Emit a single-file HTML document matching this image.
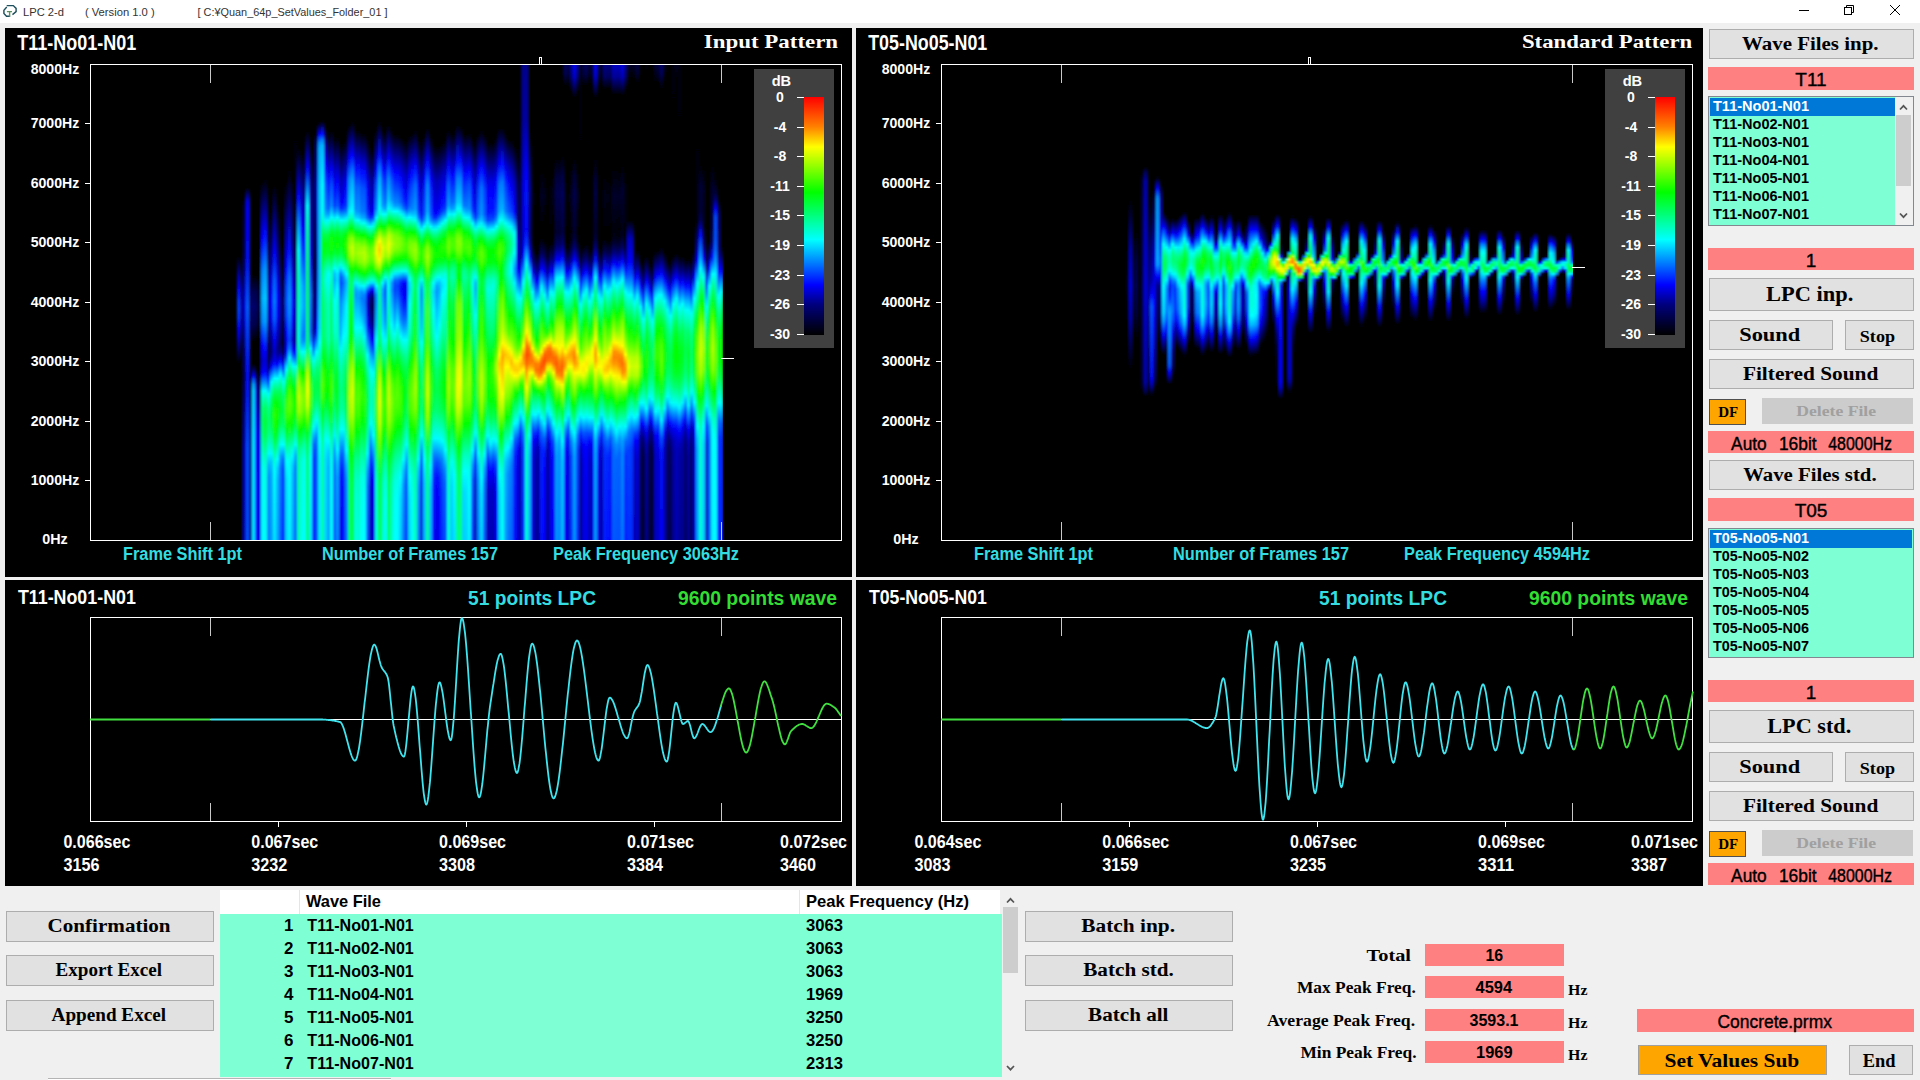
<!DOCTYPE html>
<html><head><meta charset="utf-8"><style>
html,body{margin:0;padding:0;width:1920px;height:1080px;overflow:hidden;background:#f0f0f0}
svg{display:block}
</style></head><body>
<svg width="1920" height="1080" viewBox="0 0 1920 1080">
<rect x="0" y="0" width="1920" height="23" fill="#ffffff"/>
<g fill="none" stroke-linecap="square"><path d="M7.4 5.6 H13.3 L16.1 8.4 V11.6 L13 14.2" stroke="#1d4f5c" stroke-width="1.4"/><path d="M6.3 7.6 L3.9 10.2 V13.4 L6.5 16.2 H9.4" stroke="#1d4f5c" stroke-width="1.4"/><path d="M7.6 11.6 H11.3 M9.6 11.6 V16" stroke="#5d8f5f" stroke-width="1.4"/></g>
<text x="43.5" y="16" font-family="Liberation Sans" font-size="11.5" text-anchor="middle" textLength="41.0" lengthAdjust="spacingAndGlyphs" fill="#333">LPC 2-d</text>
<text x="119.8" y="16" font-family="Liberation Sans" font-size="11.5" text-anchor="middle" textLength="69.8" lengthAdjust="spacingAndGlyphs" fill="#333">( Version 1.0 )</text>
<text x="197.5" y="16" font-family="Liberation Sans" font-size="11.5" textLength="190" lengthAdjust="spacingAndGlyphs" fill="#333">[ C:¥Quan_64p_SetValues_Folder_01 ]</text>
<line x1="1799" y1="10.5" x2="1809" y2="10.5" stroke="#000" stroke-width="1"/>
<g fill="none" stroke="#000" stroke-width="1"><rect x="1844.5" y="7.5" width="7" height="7"/><path d="M1846.5 7.5 V5.5 H1853.5 V12.5 H1851.5"/></g>
<g stroke="#000" stroke-width="1"><line x1="1890" y1="5" x2="1900" y2="15"/><line x1="1900" y1="5" x2="1890" y2="15"/></g>
<rect x="5" y="28" width="847" height="549" fill="#000"/>
<rect x="856" y="28" width="847" height="549" fill="#000"/>
<rect x="5" y="580" width="847" height="306" fill="#000"/>
<rect x="856" y="580" width="847" height="306" fill="#000"/>
<defs><linearGradient id="cbar" x1="0" y1="0" x2="0" y2="1"><stop offset="0" stop-color="#ff0000"/><stop offset="0.125" stop-color="#ff8000"/><stop offset="0.21" stop-color="#ffff00"/><stop offset="0.4" stop-color="#00ff00"/><stop offset="0.6" stop-color="#00ffff"/><stop offset="0.79" stop-color="#0000ff"/><stop offset="0.87" stop-color="#000080"/><stop offset="1" stop-color="#000000"/></linearGradient></defs>
<text x="76.75" y="49.6" font-family="Liberation Sans" font-size="22.5" font-weight="bold" text-anchor="middle" textLength="119.1" lengthAdjust="spacingAndGlyphs" fill="#fff">T11-No01-N01</text>
<text x="770.95" y="48" font-family="Liberation Serif" font-size="19" font-weight="bold" text-anchor="middle" textLength="134.3" lengthAdjust="spacingAndGlyphs" fill="#fff">Input Pattern</text>
<text x="55" y="74.4" font-family="Liberation Sans" font-size="15" font-weight="bold" text-anchor="middle" textLength="48.6" lengthAdjust="spacingAndGlyphs" fill="#fff">8000Hz</text>
<text x="55" y="127.9" font-family="Liberation Sans" font-size="15" font-weight="bold" text-anchor="middle" textLength="48.6" lengthAdjust="spacingAndGlyphs" fill="#fff">7000Hz</text>
<line x1="85" y1="123.5" x2="90" y2="123.5" stroke="#fff" stroke-width="1"/>
<text x="55" y="187.9" font-family="Liberation Sans" font-size="15" font-weight="bold" text-anchor="middle" textLength="48.6" lengthAdjust="spacingAndGlyphs" fill="#fff">6000Hz</text>
<line x1="85" y1="183.5" x2="90" y2="183.5" stroke="#fff" stroke-width="1"/>
<text x="55" y="246.9" font-family="Liberation Sans" font-size="15" font-weight="bold" text-anchor="middle" textLength="48.6" lengthAdjust="spacingAndGlyphs" fill="#fff">5000Hz</text>
<line x1="85" y1="242.5" x2="90" y2="242.5" stroke="#fff" stroke-width="1"/>
<text x="55" y="306.9" font-family="Liberation Sans" font-size="15" font-weight="bold" text-anchor="middle" textLength="48.6" lengthAdjust="spacingAndGlyphs" fill="#fff">4000Hz</text>
<line x1="85" y1="302.5" x2="90" y2="302.5" stroke="#fff" stroke-width="1"/>
<text x="55" y="365.9" font-family="Liberation Sans" font-size="15" font-weight="bold" text-anchor="middle" textLength="48.6" lengthAdjust="spacingAndGlyphs" fill="#fff">3000Hz</text>
<line x1="85" y1="361.5" x2="90" y2="361.5" stroke="#fff" stroke-width="1"/>
<text x="55" y="425.9" font-family="Liberation Sans" font-size="15" font-weight="bold" text-anchor="middle" textLength="48.6" lengthAdjust="spacingAndGlyphs" fill="#fff">2000Hz</text>
<line x1="85" y1="421.5" x2="90" y2="421.5" stroke="#fff" stroke-width="1"/>
<text x="55" y="484.9" font-family="Liberation Sans" font-size="15" font-weight="bold" text-anchor="middle" textLength="48.6" lengthAdjust="spacingAndGlyphs" fill="#fff">1000Hz</text>
<line x1="85" y1="480.5" x2="90" y2="480.5" stroke="#fff" stroke-width="1"/>
<text x="55" y="543.7" font-family="Liberation Sans" font-size="15" font-weight="bold" text-anchor="middle" textLength="25.5" lengthAdjust="spacingAndGlyphs" fill="#fff">0Hz</text>
<text x="123" y="560" font-family="Liberation Sans" font-size="18" font-weight="bold" textLength="119" lengthAdjust="spacingAndGlyphs" fill="#33dde0">Frame Shift 1pt</text>
<text x="322" y="560" font-family="Liberation Sans" font-size="18" font-weight="bold" textLength="176" lengthAdjust="spacingAndGlyphs" fill="#33dde0">Number of Frames 157</text>
<text x="553" y="560" font-family="Liberation Sans" font-size="18" font-weight="bold" textLength="186" lengthAdjust="spacingAndGlyphs" fill="#33dde0">Peak Frequency 3063Hz</text>
<text x="927.75" y="49.6" font-family="Liberation Sans" font-size="22.5" font-weight="bold" text-anchor="middle" textLength="119.1" lengthAdjust="spacingAndGlyphs" fill="#fff">T05-No05-N01</text>
<text x="1607.05" y="48" font-family="Liberation Serif" font-size="19" font-weight="bold" text-anchor="middle" textLength="170.3" lengthAdjust="spacingAndGlyphs" fill="#fff">Standard Pattern</text>
<text x="906" y="74.4" font-family="Liberation Sans" font-size="15" font-weight="bold" text-anchor="middle" textLength="48.6" lengthAdjust="spacingAndGlyphs" fill="#fff">8000Hz</text>
<text x="906" y="127.9" font-family="Liberation Sans" font-size="15" font-weight="bold" text-anchor="middle" textLength="48.6" lengthAdjust="spacingAndGlyphs" fill="#fff">7000Hz</text>
<line x1="936" y1="123.5" x2="941" y2="123.5" stroke="#fff" stroke-width="1"/>
<text x="906" y="187.9" font-family="Liberation Sans" font-size="15" font-weight="bold" text-anchor="middle" textLength="48.6" lengthAdjust="spacingAndGlyphs" fill="#fff">6000Hz</text>
<line x1="936" y1="183.5" x2="941" y2="183.5" stroke="#fff" stroke-width="1"/>
<text x="906" y="246.9" font-family="Liberation Sans" font-size="15" font-weight="bold" text-anchor="middle" textLength="48.6" lengthAdjust="spacingAndGlyphs" fill="#fff">5000Hz</text>
<line x1="936" y1="242.5" x2="941" y2="242.5" stroke="#fff" stroke-width="1"/>
<text x="906" y="306.9" font-family="Liberation Sans" font-size="15" font-weight="bold" text-anchor="middle" textLength="48.6" lengthAdjust="spacingAndGlyphs" fill="#fff">4000Hz</text>
<line x1="936" y1="302.5" x2="941" y2="302.5" stroke="#fff" stroke-width="1"/>
<text x="906" y="365.9" font-family="Liberation Sans" font-size="15" font-weight="bold" text-anchor="middle" textLength="48.6" lengthAdjust="spacingAndGlyphs" fill="#fff">3000Hz</text>
<line x1="936" y1="361.5" x2="941" y2="361.5" stroke="#fff" stroke-width="1"/>
<text x="906" y="425.9" font-family="Liberation Sans" font-size="15" font-weight="bold" text-anchor="middle" textLength="48.6" lengthAdjust="spacingAndGlyphs" fill="#fff">2000Hz</text>
<line x1="936" y1="421.5" x2="941" y2="421.5" stroke="#fff" stroke-width="1"/>
<text x="906" y="484.9" font-family="Liberation Sans" font-size="15" font-weight="bold" text-anchor="middle" textLength="48.6" lengthAdjust="spacingAndGlyphs" fill="#fff">1000Hz</text>
<line x1="936" y1="480.5" x2="941" y2="480.5" stroke="#fff" stroke-width="1"/>
<text x="906" y="543.7" font-family="Liberation Sans" font-size="15" font-weight="bold" text-anchor="middle" textLength="25.5" lengthAdjust="spacingAndGlyphs" fill="#fff">0Hz</text>
<text x="974" y="560" font-family="Liberation Sans" font-size="18" font-weight="bold" textLength="119" lengthAdjust="spacingAndGlyphs" fill="#33dde0">Frame Shift 1pt</text>
<text x="1173" y="560" font-family="Liberation Sans" font-size="18" font-weight="bold" textLength="176" lengthAdjust="spacingAndGlyphs" fill="#33dde0">Number of Frames 157</text>
<text x="1404" y="560" font-family="Liberation Sans" font-size="18" font-weight="bold" textLength="186" lengthAdjust="spacingAndGlyphs" fill="#33dde0">Peak Frequency 4594Hz</text>
<defs><linearGradient id="g0" x1="0" y1="0" x2="0" y2="1"><stop offset="0.000" stop-color="#000000"/><stop offset="0.403" stop-color="#000002"/><stop offset="0.447" stop-color="#0000b6"/><stop offset="0.472" stop-color="#0006ff"/><stop offset="0.497" stop-color="#0036ff"/><stop offset="0.516" stop-color="#003eff"/><stop offset="0.535" stop-color="#002eff"/><stop offset="0.553" stop-color="#0005ff"/><stop offset="0.572" stop-color="#0000cd"/><stop offset="0.629" stop-color="#000000"/><stop offset="1.000" stop-color="#000000"/></linearGradient><linearGradient id="g1" x1="0" y1="0" x2="0" y2="1"><stop offset="0.000" stop-color="#000000"/><stop offset="0.428" stop-color="#000000"/><stop offset="0.472" stop-color="#000068"/><stop offset="0.509" stop-color="#000090"/><stop offset="0.547" stop-color="#000072"/><stop offset="0.597" stop-color="#000000"/><stop offset="1.000" stop-color="#000000"/></linearGradient><linearGradient id="g2" x1="0" y1="0" x2="0" y2="1"><stop offset="0.000" stop-color="#000000"/><stop offset="0.277" stop-color="#000000"/><stop offset="0.296" stop-color="#000028"/><stop offset="0.396" stop-color="#000041"/><stop offset="0.478" stop-color="#0000b9"/><stop offset="0.509" stop-color="#0000cf"/><stop offset="0.541" stop-color="#0000c0"/><stop offset="0.597" stop-color="#00006e"/><stop offset="0.654" stop-color="#000046"/><stop offset="0.805" stop-color="#0000ad"/><stop offset="1.000" stop-color="#0000b2"/></linearGradient><linearGradient id="g3" x1="0" y1="0" x2="0" y2="1"><stop offset="0.000" stop-color="#000000"/><stop offset="0.258" stop-color="#000004"/><stop offset="0.283" stop-color="#0000cd"/><stop offset="0.289" stop-color="#0000ea"/><stop offset="0.302" stop-color="#0000fd"/><stop offset="0.396" stop-color="#0009ff"/><stop offset="0.509" stop-color="#005dff"/><stop offset="0.654" stop-color="#000dff"/><stop offset="0.805" stop-color="#004bff"/><stop offset="1.000" stop-color="#004dff"/></linearGradient><linearGradient id="g4" x1="0" y1="0" x2="0" y2="1"><stop offset="0.000" stop-color="#000000"/><stop offset="0.434" stop-color="#000000"/><stop offset="0.478" stop-color="#00004d"/><stop offset="0.509" stop-color="#000063"/><stop offset="0.547" stop-color="#00004d"/><stop offset="0.591" stop-color="#000000"/><stop offset="0.654" stop-color="#000000"/><stop offset="0.686" stop-color="#000040"/><stop offset="0.786" stop-color="#000085"/><stop offset="1.000" stop-color="#000090"/></linearGradient><linearGradient id="g5" x1="0" y1="0" x2="0" y2="1"><stop offset="0.000" stop-color="#000000"/><stop offset="0.440" stop-color="#000000"/><stop offset="0.478" stop-color="#000052"/><stop offset="0.509" stop-color="#00006c"/><stop offset="0.547" stop-color="#000051"/><stop offset="0.585" stop-color="#000000"/><stop offset="0.629" stop-color="#000000"/><stop offset="0.642" stop-color="#00006e"/><stop offset="0.654" stop-color="#0000f7"/><stop offset="0.660" stop-color="#003dff"/><stop offset="0.673" stop-color="#00a0ff"/><stop offset="0.686" stop-color="#00caff"/><stop offset="0.805" stop-color="#00e2ff"/><stop offset="1.000" stop-color="#00e3ff"/></linearGradient><linearGradient id="g6" x1="0" y1="0" x2="0" y2="1"><stop offset="0.000" stop-color="#000000"/><stop offset="0.440" stop-color="#000000"/><stop offset="0.478" stop-color="#000046"/><stop offset="0.509" stop-color="#00005d"/><stop offset="0.541" stop-color="#00004a"/><stop offset="0.579" stop-color="#000000"/><stop offset="0.642" stop-color="#000000"/><stop offset="0.673" stop-color="#0000a8"/><stop offset="0.686" stop-color="#0000cc"/><stop offset="0.774" stop-color="#0002ff"/><stop offset="1.000" stop-color="#000fff"/></linearGradient><linearGradient id="g7" x1="0" y1="0" x2="0" y2="1"><stop offset="0.000" stop-color="#000000"/><stop offset="0.447" stop-color="#000000"/><stop offset="0.478" stop-color="#000029"/><stop offset="0.509" stop-color="#000036"/><stop offset="0.566" stop-color="#000000"/><stop offset="0.679" stop-color="#000000"/><stop offset="0.736" stop-color="#000098"/><stop offset="0.780" stop-color="#0000d3"/><stop offset="0.843" stop-color="#0000e3"/><stop offset="1.000" stop-color="#0000de"/></linearGradient><linearGradient id="g8" x1="0" y1="0" x2="0" y2="1"><stop offset="0.000" stop-color="#000000"/><stop offset="0.245" stop-color="#000000"/><stop offset="0.365" stop-color="#0004ff"/><stop offset="0.434" stop-color="#0080ff"/><stop offset="0.491" stop-color="#00aeff"/><stop offset="0.541" stop-color="#0085ff"/><stop offset="0.591" stop-color="#0003ff"/><stop offset="0.623" stop-color="#0000c9"/><stop offset="0.635" stop-color="#0000d5"/><stop offset="0.648" stop-color="#0001ff"/><stop offset="0.686" stop-color="#00f7ff"/><stop offset="0.692" stop-color="#00ffe6"/><stop offset="0.723" stop-color="#00ff78"/><stop offset="0.748" stop-color="#00ff5c"/><stop offset="0.774" stop-color="#00ff71"/><stop offset="0.824" stop-color="#00ffd6"/><stop offset="0.849" stop-color="#00fff1"/><stop offset="1.000" stop-color="#00fcff"/></linearGradient><linearGradient id="g9" x1="0" y1="0" x2="0" y2="1"><stop offset="0.000" stop-color="#000000"/><stop offset="0.239" stop-color="#000000"/><stop offset="0.352" stop-color="#0007ff"/><stop offset="0.428" stop-color="#0095ff"/><stop offset="0.491" stop-color="#00caff"/><stop offset="0.541" stop-color="#009fff"/><stop offset="0.604" stop-color="#0000f9"/><stop offset="0.623" stop-color="#0000db"/><stop offset="0.642" stop-color="#0000f0"/><stop offset="0.648" stop-color="#000aff"/><stop offset="0.654" stop-color="#002eff"/><stop offset="0.686" stop-color="#00fff7"/><stop offset="0.704" stop-color="#00ff99"/><stop offset="0.723" stop-color="#00ff56"/><stop offset="0.755" stop-color="#00ff2c"/><stop offset="0.780" stop-color="#00ff44"/><stop offset="0.830" stop-color="#00ffbb"/><stop offset="0.855" stop-color="#00ffe0"/><stop offset="1.000" stop-color="#00fff5"/></linearGradient><linearGradient id="g10" x1="0" y1="0" x2="0" y2="1"><stop offset="0.000" stop-color="#000000"/><stop offset="0.340" stop-color="#000000"/><stop offset="0.465" stop-color="#0000ad"/><stop offset="0.503" stop-color="#0000c4"/><stop offset="0.535" stop-color="#0000b0"/><stop offset="0.591" stop-color="#000044"/><stop offset="0.610" stop-color="#000032"/><stop offset="0.623" stop-color="#00003f"/><stop offset="0.635" stop-color="#000066"/><stop offset="0.654" stop-color="#0000d8"/><stop offset="0.660" stop-color="#0007ff"/><stop offset="0.686" stop-color="#00cdff"/><stop offset="0.692" stop-color="#00f6ff"/><stop offset="0.698" stop-color="#00ffe7"/><stop offset="0.723" stop-color="#00ff8d"/><stop offset="0.748" stop-color="#00ff6e"/><stop offset="0.774" stop-color="#00ff85"/><stop offset="0.818" stop-color="#00f9ff"/><stop offset="0.843" stop-color="#00adff"/><stop offset="0.868" stop-color="#008bff"/><stop offset="1.000" stop-color="#007aff"/></linearGradient><linearGradient id="g11" x1="0" y1="0" x2="0" y2="1"><stop offset="0.000" stop-color="#000000"/><stop offset="0.308" stop-color="#000002"/><stop offset="0.453" stop-color="#0000d5"/><stop offset="0.497" stop-color="#0000f8"/><stop offset="0.535" stop-color="#0000e2"/><stop offset="0.585" stop-color="#00007d"/><stop offset="0.604" stop-color="#000071"/><stop offset="0.616" stop-color="#00008d"/><stop offset="0.635" stop-color="#0000fc"/><stop offset="0.667" stop-color="#00f9ff"/><stop offset="0.673" stop-color="#00ffdf"/><stop offset="0.704" stop-color="#00ff5a"/><stop offset="0.736" stop-color="#00ff32"/><stop offset="0.767" stop-color="#00ff60"/><stop offset="0.818" stop-color="#00f8ff"/><stop offset="0.836" stop-color="#00c6ff"/><stop offset="0.862" stop-color="#00abff"/><stop offset="1.000" stop-color="#009dff"/></linearGradient><linearGradient id="g12" x1="0" y1="0" x2="0" y2="1"><stop offset="0.000" stop-color="#000000"/><stop offset="0.252" stop-color="#000000"/><stop offset="0.396" stop-color="#0003ff"/><stop offset="0.453" stop-color="#005eff"/><stop offset="0.497" stop-color="#007bff"/><stop offset="0.535" stop-color="#005fff"/><stop offset="0.579" stop-color="#0000f7"/><stop offset="0.604" stop-color="#0000cb"/><stop offset="0.623" stop-color="#0000ec"/><stop offset="0.629" stop-color="#000dff"/><stop offset="0.654" stop-color="#00d2ff"/><stop offset="0.660" stop-color="#00fff9"/><stop offset="0.686" stop-color="#00ff61"/><stop offset="0.711" stop-color="#02ff00"/><stop offset="0.736" stop-color="#2cff00"/><stop offset="0.767" stop-color="#0eff00"/><stop offset="0.780" stop-color="#00ff15"/><stop offset="0.830" stop-color="#00ffc9"/><stop offset="0.855" stop-color="#00fffc"/><stop offset="1.000" stop-color="#00e5ff"/></linearGradient><linearGradient id="g13" x1="0" y1="0" x2="0" y2="1"><stop offset="0.000" stop-color="#000000"/><stop offset="0.289" stop-color="#000000"/><stop offset="0.390" stop-color="#00007e"/><stop offset="0.453" stop-color="#0000e2"/><stop offset="0.484" stop-color="#0002ff"/><stop offset="0.528" stop-color="#0000f7"/><stop offset="0.597" stop-color="#00007e"/><stop offset="0.610" stop-color="#000091"/><stop offset="0.629" stop-color="#0000f5"/><stop offset="0.660" stop-color="#00fffe"/><stop offset="0.686" stop-color="#00ff6b"/><stop offset="0.711" stop-color="#00ff12"/><stop offset="0.736" stop-color="#0eff00"/><stop offset="0.755" stop-color="#00ff01"/><stop offset="0.780" stop-color="#00ff41"/><stop offset="0.830" stop-color="#00ffff"/><stop offset="0.849" stop-color="#00cdff"/><stop offset="0.874" stop-color="#00b4ff"/><stop offset="1.000" stop-color="#00a7ff"/></linearGradient><linearGradient id="g14" x1="0" y1="0" x2="0" y2="1"><stop offset="0.000" stop-color="#000000"/><stop offset="0.371" stop-color="#000000"/><stop offset="0.497" stop-color="#000099"/><stop offset="0.522" stop-color="#000094"/><stop offset="0.585" stop-color="#000053"/><stop offset="0.604" stop-color="#000085"/><stop offset="0.616" stop-color="#0000d9"/><stop offset="0.623" stop-color="#000aff"/><stop offset="0.648" stop-color="#00e1ff"/><stop offset="0.654" stop-color="#00fff1"/><stop offset="0.673" stop-color="#00ff8d"/><stop offset="0.692" stop-color="#00ff49"/><stop offset="0.723" stop-color="#00ff21"/><stop offset="0.755" stop-color="#00ff51"/><stop offset="0.799" stop-color="#00fffb"/><stop offset="0.824" stop-color="#009eff"/><stop offset="0.849" stop-color="#0070ff"/><stop offset="1.000" stop-color="#005bff"/></linearGradient><linearGradient id="g15" x1="0" y1="0" x2="0" y2="1"><stop offset="0.000" stop-color="#000000"/><stop offset="0.428" stop-color="#000000"/><stop offset="0.472" stop-color="#000041"/><stop offset="0.503" stop-color="#000055"/><stop offset="0.528" stop-color="#00004d"/><stop offset="0.585" stop-color="#000010"/><stop offset="0.604" stop-color="#00003e"/><stop offset="0.616" stop-color="#00007e"/><stop offset="0.629" stop-color="#0000dd"/><stop offset="0.635" stop-color="#0012ff"/><stop offset="0.660" stop-color="#00e4ff"/><stop offset="0.667" stop-color="#00fff1"/><stop offset="0.698" stop-color="#00ff6c"/><stop offset="0.730" stop-color="#00ff42"/><stop offset="0.761" stop-color="#00ff70"/><stop offset="0.799" stop-color="#00ffff"/><stop offset="0.830" stop-color="#006eff"/><stop offset="0.855" stop-color="#0036ff"/><stop offset="1.000" stop-color="#001dff"/></linearGradient><linearGradient id="g16" x1="0" y1="0" x2="0" y2="1"><stop offset="0.000" stop-color="#000000"/><stop offset="0.245" stop-color="#000000"/><stop offset="0.428" stop-color="#0006ff"/><stop offset="0.465" stop-color="#003eff"/><stop offset="0.497" stop-color="#0051ff"/><stop offset="0.528" stop-color="#003fff"/><stop offset="0.560" stop-color="#0005ff"/><stop offset="0.585" stop-color="#0000e0"/><stop offset="0.604" stop-color="#0000fe"/><stop offset="0.616" stop-color="#0047ff"/><stop offset="0.635" stop-color="#00ddff"/><stop offset="0.642" stop-color="#00fff0"/><stop offset="0.667" stop-color="#00ff57"/><stop offset="0.686" stop-color="#00ff05"/><stop offset="0.704" stop-color="#2fff00"/><stop offset="0.723" stop-color="#42ff00"/><stop offset="0.742" stop-color="#34ff00"/><stop offset="0.761" stop-color="#08ff00"/><stop offset="0.774" stop-color="#00ff21"/><stop offset="0.818" stop-color="#00ffce"/><stop offset="0.836" stop-color="#00ffff"/><stop offset="0.874" stop-color="#00dbff"/><stop offset="1.000" stop-color="#00d1ff"/></linearGradient><linearGradient id="g17" x1="0" y1="0" x2="0" y2="1"><stop offset="0.000" stop-color="#000000"/><stop offset="0.220" stop-color="#000000"/><stop offset="0.384" stop-color="#0009ff"/><stop offset="0.447" stop-color="#0071ff"/><stop offset="0.491" stop-color="#0096ff"/><stop offset="0.522" stop-color="#008aff"/><stop offset="0.579" stop-color="#0045ff"/><stop offset="0.597" stop-color="#007aff"/><stop offset="0.616" stop-color="#00f5ff"/><stop offset="0.648" stop-color="#00ff48"/><stop offset="0.667" stop-color="#0eff00"/><stop offset="0.686" stop-color="#48ff00"/><stop offset="0.711" stop-color="#62ff00"/><stop offset="0.730" stop-color="#50ff00"/><stop offset="0.755" stop-color="#0bff00"/><stop offset="0.805" stop-color="#00ffb7"/><stop offset="0.830" stop-color="#00ffed"/><stop offset="0.862" stop-color="#00fffe"/><stop offset="1.000" stop-color="#00f6ff"/></linearGradient><linearGradient id="g18" x1="0" y1="0" x2="0" y2="1"><stop offset="0.000" stop-color="#000000"/><stop offset="0.245" stop-color="#000002"/><stop offset="0.377" stop-color="#00007e"/><stop offset="0.472" stop-color="#0006ff"/><stop offset="0.503" stop-color="#0017ff"/><stop offset="0.535" stop-color="#0000fe"/><stop offset="0.579" stop-color="#0000ca"/><stop offset="0.597" stop-color="#0000f9"/><stop offset="0.610" stop-color="#004dff"/><stop offset="0.629" stop-color="#00e9ff"/><stop offset="0.635" stop-color="#00ffe7"/><stop offset="0.660" stop-color="#00ff53"/><stop offset="0.679" stop-color="#00ff06"/><stop offset="0.698" stop-color="#2bff00"/><stop offset="0.717" stop-color="#3bff00"/><stop offset="0.748" stop-color="#0fff00"/><stop offset="0.761" stop-color="#00ff17"/><stop offset="0.811" stop-color="#00ffe2"/><stop offset="0.824" stop-color="#00f5ff"/><stop offset="0.843" stop-color="#00cdff"/><stop offset="0.862" stop-color="#00beff"/><stop offset="1.000" stop-color="#00b1ff"/></linearGradient><linearGradient id="g19" x1="0" y1="0" x2="0" y2="1"><stop offset="0.000" stop-color="#000000"/><stop offset="0.365" stop-color="#00000f"/><stop offset="0.491" stop-color="#00009c"/><stop offset="0.516" stop-color="#00009e"/><stop offset="0.572" stop-color="#000075"/><stop offset="0.585" stop-color="#000090"/><stop offset="0.604" stop-color="#0000fc"/><stop offset="0.635" stop-color="#00fff8"/><stop offset="0.660" stop-color="#00ff6d"/><stop offset="0.679" stop-color="#00ff27"/><stop offset="0.698" stop-color="#00ff00"/><stop offset="0.723" stop-color="#03ff00"/><stop offset="0.755" stop-color="#00ff41"/><stop offset="0.799" stop-color="#00fff9"/><stop offset="0.824" stop-color="#00a0ff"/><stop offset="0.849" stop-color="#0073ff"/><stop offset="1.000" stop-color="#005fff"/></linearGradient><linearGradient id="g20" x1="0" y1="0" x2="0" y2="1"><stop offset="0.000" stop-color="#000000"/><stop offset="0.176" stop-color="#000003"/><stop offset="0.277" stop-color="#0007ff"/><stop offset="0.333" stop-color="#0090ff"/><stop offset="0.390" stop-color="#00fdff"/><stop offset="0.447" stop-color="#00ffbf"/><stop offset="0.484" stop-color="#00ffac"/><stop offset="0.572" stop-color="#00ffe2"/><stop offset="0.591" stop-color="#00ffbe"/><stop offset="0.629" stop-color="#00ff03"/><stop offset="0.635" stop-color="#1eff00"/><stop offset="0.667" stop-color="#9aff00"/><stop offset="0.698" stop-color="#c4ff00"/><stop offset="0.730" stop-color="#98ff00"/><stop offset="0.767" stop-color="#0cff00"/><stop offset="0.774" stop-color="#00ff0f"/><stop offset="0.805" stop-color="#00ff7a"/><stop offset="0.830" stop-color="#00ff9e"/><stop offset="1.000" stop-color="#00ffae"/></linearGradient><linearGradient id="g21" x1="0" y1="0" x2="0" y2="1"><stop offset="0.000" stop-color="#000000"/><stop offset="0.189" stop-color="#000005"/><stop offset="0.270" stop-color="#0000a0"/><stop offset="0.340" stop-color="#0006ff"/><stop offset="0.465" stop-color="#00bfff"/><stop offset="0.509" stop-color="#00caff"/><stop offset="0.572" stop-color="#008eff"/><stop offset="0.585" stop-color="#00a5ff"/><stop offset="0.597" stop-color="#00deff"/><stop offset="0.604" stop-color="#00fffa"/><stop offset="0.648" stop-color="#01ff00"/><stop offset="0.679" stop-color="#74ff00"/><stop offset="0.704" stop-color="#92ff00"/><stop offset="0.730" stop-color="#79ff00"/><stop offset="0.761" stop-color="#16ff00"/><stop offset="0.767" stop-color="#00ff04"/><stop offset="0.811" stop-color="#00ffac"/><stop offset="0.836" stop-color="#00ffd7"/><stop offset="1.000" stop-color="#00ffec"/></linearGradient><linearGradient id="g22" x1="0" y1="0" x2="0" y2="1"><stop offset="0.000" stop-color="#000000"/><stop offset="0.182" stop-color="#000000"/><stop offset="0.270" stop-color="#000093"/><stop offset="0.371" stop-color="#0002ff"/><stop offset="0.447" stop-color="#0073ff"/><stop offset="0.484" stop-color="#0098ff"/><stop offset="0.509" stop-color="#0099ff"/><stop offset="0.566" stop-color="#006cff"/><stop offset="0.579" stop-color="#0082ff"/><stop offset="0.597" stop-color="#00deff"/><stop offset="0.604" stop-color="#00fff7"/><stop offset="0.648" stop-color="#00ff03"/><stop offset="0.673" stop-color="#55ff00"/><stop offset="0.698" stop-color="#77ff00"/><stop offset="0.723" stop-color="#62ff00"/><stop offset="0.755" stop-color="#05ff00"/><stop offset="0.799" stop-color="#00ffa9"/><stop offset="0.830" stop-color="#00ffec"/><stop offset="1.000" stop-color="#00fcff"/></linearGradient><linearGradient id="g23" x1="0" y1="0" x2="0" y2="1"><stop offset="0.000" stop-color="#000000"/><stop offset="0.138" stop-color="#000000"/><stop offset="0.214" stop-color="#0000f7"/><stop offset="0.220" stop-color="#000eff"/><stop offset="0.296" stop-color="#00feff"/><stop offset="0.365" stop-color="#00ff76"/><stop offset="0.434" stop-color="#00ff1f"/><stop offset="0.491" stop-color="#00ff0b"/><stop offset="0.566" stop-color="#00ff3e"/><stop offset="0.579" stop-color="#00ff36"/><stop offset="0.597" stop-color="#00ff08"/><stop offset="0.648" stop-color="#bcff00"/><stop offset="0.667" stop-color="#e7ff00"/><stop offset="0.686" stop-color="#f6ff00"/><stop offset="0.717" stop-color="#cfff00"/><stop offset="0.774" stop-color="#05ff00"/><stop offset="0.780" stop-color="#00ff10"/><stop offset="0.799" stop-color="#00ff3d"/><stop offset="0.824" stop-color="#00ff56"/><stop offset="1.000" stop-color="#00ff60"/></linearGradient><linearGradient id="g24" x1="0" y1="0" x2="0" y2="1"><stop offset="0.000" stop-color="#000000"/><stop offset="0.170" stop-color="#000000"/><stop offset="0.220" stop-color="#000063"/><stop offset="0.264" stop-color="#0000a0"/><stop offset="0.396" stop-color="#0000ff"/><stop offset="0.484" stop-color="#0073ff"/><stop offset="0.560" stop-color="#005dff"/><stop offset="0.579" stop-color="#008dff"/><stop offset="0.597" stop-color="#00f9ff"/><stop offset="0.629" stop-color="#00ff53"/><stop offset="0.648" stop-color="#00ff01"/><stop offset="0.673" stop-color="#47ff00"/><stop offset="0.692" stop-color="#5aff00"/><stop offset="0.717" stop-color="#45ff00"/><stop offset="0.742" stop-color="#01ff00"/><stop offset="0.792" stop-color="#00ffbd"/><stop offset="0.824" stop-color="#00fffc"/><stop offset="1.000" stop-color="#00e9ff"/></linearGradient><linearGradient id="g25" x1="0" y1="0" x2="0" y2="1"><stop offset="0.000" stop-color="#000000"/><stop offset="0.201" stop-color="#000000"/><stop offset="0.245" stop-color="#000038"/><stop offset="0.283" stop-color="#000046"/><stop offset="0.377" stop-color="#000000"/><stop offset="0.415" stop-color="#000000"/><stop offset="0.484" stop-color="#00004e"/><stop offset="0.553" stop-color="#00006a"/><stop offset="0.566" stop-color="#00008e"/><stop offset="0.585" stop-color="#0000fa"/><stop offset="0.616" stop-color="#00e7ff"/><stop offset="0.623" stop-color="#00fff1"/><stop offset="0.642" stop-color="#00ff9b"/><stop offset="0.660" stop-color="#00ff61"/><stop offset="0.692" stop-color="#00ff3f"/><stop offset="0.723" stop-color="#00ff6b"/><stop offset="0.761" stop-color="#00fff2"/><stop offset="0.767" stop-color="#00eeff"/><stop offset="0.799" stop-color="#0064ff"/><stop offset="0.830" stop-color="#0029ff"/><stop offset="1.000" stop-color="#0017ff"/></linearGradient><linearGradient id="g26" x1="0" y1="0" x2="0" y2="1"><stop offset="0.000" stop-color="#000000"/><stop offset="0.138" stop-color="#000000"/><stop offset="0.145" stop-color="#000009"/><stop offset="0.157" stop-color="#00004b"/><stop offset="0.170" stop-color="#000070"/><stop offset="0.252" stop-color="#0000b6"/><stop offset="0.296" stop-color="#0000bb"/><stop offset="0.415" stop-color="#000088"/><stop offset="0.528" stop-color="#0000c8"/><stop offset="0.553" stop-color="#0000f3"/><stop offset="0.566" stop-color="#0027ff"/><stop offset="0.604" stop-color="#00fffb"/><stop offset="0.642" stop-color="#00ff6c"/><stop offset="0.673" stop-color="#00ff44"/><stop offset="0.704" stop-color="#00ff65"/><stop offset="0.748" stop-color="#00fff6"/><stop offset="0.755" stop-color="#00eeff"/><stop offset="0.786" stop-color="#007cff"/><stop offset="0.811" stop-color="#0058ff"/><stop offset="1.000" stop-color="#004bff"/></linearGradient><linearGradient id="g27" x1="0" y1="0" x2="0" y2="1"><stop offset="0.000" stop-color="#000000"/><stop offset="0.119" stop-color="#000000"/><stop offset="0.126" stop-color="#000028"/><stop offset="0.145" stop-color="#0000f7"/><stop offset="0.151" stop-color="#0037ff"/><stop offset="0.164" stop-color="#008fff"/><stop offset="0.176" stop-color="#00abff"/><stop offset="0.264" stop-color="#00bfff"/><stop offset="0.440" stop-color="#00b9ff"/><stop offset="0.553" stop-color="#00d4ff"/><stop offset="0.585" stop-color="#00fdff"/><stop offset="0.648" stop-color="#00ff62"/><stop offset="0.679" stop-color="#00ff42"/><stop offset="0.711" stop-color="#00ff5c"/><stop offset="0.767" stop-color="#00ffda"/><stop offset="0.792" stop-color="#00ffff"/><stop offset="0.830" stop-color="#00ecff"/><stop offset="1.000" stop-color="#00e8ff"/></linearGradient><linearGradient id="g28" x1="0" y1="0" x2="0" y2="1"><stop offset="0.000" stop-color="#000000"/><stop offset="0.113" stop-color="#000000"/><stop offset="0.119" stop-color="#00000c"/><stop offset="0.145" stop-color="#000fff"/><stop offset="0.157" stop-color="#007fff"/><stop offset="0.170" stop-color="#00b9ff"/><stop offset="0.252" stop-color="#00faff"/><stop offset="0.308" stop-color="#00fff2"/><stop offset="0.327" stop-color="#00ffca"/><stop offset="0.358" stop-color="#00ff3a"/><stop offset="0.377" stop-color="#01ff00"/><stop offset="0.403" stop-color="#00ff08"/><stop offset="0.434" stop-color="#00ff6c"/><stop offset="0.453" stop-color="#00ff85"/><stop offset="0.509" stop-color="#00ff56"/><stop offset="0.572" stop-color="#00ff60"/><stop offset="0.591" stop-color="#00ff47"/><stop offset="0.616" stop-color="#00ff09"/><stop offset="0.648" stop-color="#3fff00"/><stop offset="0.673" stop-color="#55ff00"/><stop offset="0.698" stop-color="#44ff00"/><stop offset="0.723" stop-color="#0fff00"/><stop offset="0.730" stop-color="#00ff02"/><stop offset="0.774" stop-color="#00ff75"/><stop offset="0.805" stop-color="#00ff9f"/><stop offset="1.000" stop-color="#00ffac"/></linearGradient><linearGradient id="g29" x1="0" y1="0" x2="0" y2="1"><stop offset="0.000" stop-color="#000000"/><stop offset="0.132" stop-color="#000000"/><stop offset="0.170" stop-color="#0000ae"/><stop offset="0.208" stop-color="#0003ff"/><stop offset="0.252" stop-color="#005bff"/><stop offset="0.302" stop-color="#0088ff"/><stop offset="0.314" stop-color="#00acff"/><stop offset="0.327" stop-color="#00f3ff"/><stop offset="0.333" stop-color="#00ffe2"/><stop offset="0.358" stop-color="#00ff4c"/><stop offset="0.377" stop-color="#00ff15"/><stop offset="0.396" stop-color="#00ff21"/><stop offset="0.434" stop-color="#00ffbd"/><stop offset="0.453" stop-color="#00ffda"/><stop offset="0.503" stop-color="#00ff97"/><stop offset="0.572" stop-color="#00ff80"/><stop offset="0.635" stop-color="#03ff00"/><stop offset="0.667" stop-color="#1aff00"/><stop offset="0.698" stop-color="#00ff09"/><stop offset="0.786" stop-color="#00fffb"/><stop offset="0.830" stop-color="#00ddff"/><stop offset="1.000" stop-color="#00d5ff"/></linearGradient><linearGradient id="g30" x1="0" y1="0" x2="0" y2="1"><stop offset="0.000" stop-color="#000000"/><stop offset="0.151" stop-color="#000000"/><stop offset="0.214" stop-color="#0000c3"/><stop offset="0.239" stop-color="#0001ff"/><stop offset="0.302" stop-color="#0060ff"/><stop offset="0.314" stop-color="#009bff"/><stop offset="0.327" stop-color="#00f9ff"/><stop offset="0.333" stop-color="#00ffd7"/><stop offset="0.358" stop-color="#00ff3f"/><stop offset="0.377" stop-color="#00ff12"/><stop offset="0.396" stop-color="#00ff2c"/><stop offset="0.440" stop-color="#00fffb"/><stop offset="0.453" stop-color="#00f9ff"/><stop offset="0.503" stop-color="#00ffba"/><stop offset="0.579" stop-color="#00ffb2"/><stop offset="0.648" stop-color="#00ff17"/><stop offset="0.686" stop-color="#02ff00"/><stop offset="0.723" stop-color="#00ff31"/><stop offset="0.792" stop-color="#00fffc"/><stop offset="0.818" stop-color="#00c9ff"/><stop offset="0.849" stop-color="#00aeff"/><stop offset="1.000" stop-color="#00a0ff"/></linearGradient><linearGradient id="g31" x1="0" y1="0" x2="0" y2="1"><stop offset="0.000" stop-color="#000000"/><stop offset="0.138" stop-color="#000000"/><stop offset="0.220" stop-color="#0000fe"/><stop offset="0.252" stop-color="#004cff"/><stop offset="0.296" stop-color="#0088ff"/><stop offset="0.314" stop-color="#00deff"/><stop offset="0.321" stop-color="#00fff3"/><stop offset="0.346" stop-color="#00ff46"/><stop offset="0.358" stop-color="#00ff0a"/><stop offset="0.365" stop-color="#0aff00"/><stop offset="0.377" stop-color="#1aff00"/><stop offset="0.396" stop-color="#00ff09"/><stop offset="0.428" stop-color="#00ff9c"/><stop offset="0.440" stop-color="#00ffbb"/><stop offset="0.503" stop-color="#00ff5e"/><stop offset="0.579" stop-color="#00ff5b"/><stop offset="0.629" stop-color="#07ff00"/><stop offset="0.654" stop-color="#34ff00"/><stop offset="0.679" stop-color="#45ff00"/><stop offset="0.704" stop-color="#36ff00"/><stop offset="0.730" stop-color="#0aff00"/><stop offset="0.799" stop-color="#00ffaf"/><stop offset="0.830" stop-color="#00ffe1"/><stop offset="0.868" stop-color="#00fff4"/><stop offset="1.000" stop-color="#00fffe"/></linearGradient><linearGradient id="g32" x1="0" y1="0" x2="0" y2="1"><stop offset="0.000" stop-color="#000000"/><stop offset="0.157" stop-color="#000000"/><stop offset="0.226" stop-color="#0000c4"/><stop offset="0.258" stop-color="#0000ff"/><stop offset="0.296" stop-color="#003eff"/><stop offset="0.308" stop-color="#007eff"/><stop offset="0.321" stop-color="#00e3ff"/><stop offset="0.327" stop-color="#00ffe7"/><stop offset="0.352" stop-color="#00ff43"/><stop offset="0.365" stop-color="#00ff18"/><stop offset="0.377" stop-color="#00ff0d"/><stop offset="0.396" stop-color="#00ff39"/><stop offset="0.428" stop-color="#00fff9"/><stop offset="0.434" stop-color="#00dbff"/><stop offset="0.440" stop-color="#00bdff"/><stop offset="0.453" stop-color="#00acff"/><stop offset="0.497" stop-color="#00fffd"/><stop offset="0.560" stop-color="#00ffd3"/><stop offset="0.635" stop-color="#00ff4c"/><stop offset="0.673" stop-color="#00ff32"/><stop offset="0.717" stop-color="#00ff61"/><stop offset="0.780" stop-color="#00f2ff"/><stop offset="0.811" stop-color="#009bff"/><stop offset="0.843" stop-color="#0070ff"/><stop offset="1.000" stop-color="#0058ff"/></linearGradient><linearGradient id="g33" x1="0" y1="0" x2="0" y2="1"><stop offset="0.000" stop-color="#000000"/><stop offset="0.151" stop-color="#000000"/><stop offset="0.220" stop-color="#0000c9"/><stop offset="0.245" stop-color="#0002ff"/><stop offset="0.296" stop-color="#005aff"/><stop offset="0.308" stop-color="#009dff"/><stop offset="0.321" stop-color="#00fffa"/><stop offset="0.340" stop-color="#00ff6c"/><stop offset="0.352" stop-color="#00ff25"/><stop offset="0.365" stop-color="#05ff00"/><stop offset="0.384" stop-color="#08ff00"/><stop offset="0.396" stop-color="#00ff1e"/><stop offset="0.434" stop-color="#00fffb"/><stop offset="0.440" stop-color="#00e9ff"/><stop offset="0.453" stop-color="#00deff"/><stop offset="0.472" stop-color="#00fffa"/><stop offset="0.509" stop-color="#00ffc5"/><stop offset="0.572" stop-color="#00ffb7"/><stop offset="0.648" stop-color="#00ff2e"/><stop offset="0.686" stop-color="#00ff11"/><stop offset="0.711" stop-color="#00ff1d"/><stop offset="0.736" stop-color="#00ff42"/><stop offset="0.811" stop-color="#00feff"/><stop offset="0.836" stop-color="#00c5ff"/><stop offset="0.868" stop-color="#00a0ff"/><stop offset="1.000" stop-color="#008aff"/></linearGradient><linearGradient id="g34" x1="0" y1="0" x2="0" y2="1"><stop offset="0.000" stop-color="#000000"/><stop offset="0.170" stop-color="#000000"/><stop offset="0.239" stop-color="#0000ab"/><stop offset="0.289" stop-color="#0000f5"/><stop offset="0.302" stop-color="#002aff"/><stop offset="0.327" stop-color="#00fffa"/><stop offset="0.352" stop-color="#00ff4e"/><stop offset="0.365" stop-color="#00ff21"/><stop offset="0.377" stop-color="#00ff15"/><stop offset="0.396" stop-color="#00ff42"/><stop offset="0.409" stop-color="#00ff87"/><stop offset="0.421" stop-color="#00ffe5"/><stop offset="0.428" stop-color="#00e1ff"/><stop offset="0.440" stop-color="#0076ff"/><stop offset="0.447" stop-color="#0053ff"/><stop offset="0.459" stop-color="#003cff"/><stop offset="0.503" stop-color="#0086ff"/><stop offset="0.566" stop-color="#00b4ff"/><stop offset="0.597" stop-color="#00f5ff"/><stop offset="0.648" stop-color="#00ffa1"/><stop offset="0.686" stop-color="#00ff85"/><stop offset="0.723" stop-color="#00ff9f"/><stop offset="0.767" stop-color="#00fffb"/><stop offset="0.824" stop-color="#004fff"/><stop offset="0.862" stop-color="#0005ff"/><stop offset="1.000" stop-color="#0000e3"/></linearGradient><linearGradient id="g35" x1="0" y1="0" x2="0" y2="1"><stop offset="0.000" stop-color="#000000"/><stop offset="0.164" stop-color="#000000"/><stop offset="0.239" stop-color="#0000bd"/><stop offset="0.283" stop-color="#0000f9"/><stop offset="0.289" stop-color="#0005ff"/><stop offset="0.302" stop-color="#0036ff"/><stop offset="0.327" stop-color="#00fff3"/><stop offset="0.346" stop-color="#00ff62"/><stop offset="0.358" stop-color="#00ff21"/><stop offset="0.371" stop-color="#01ff00"/><stop offset="0.384" stop-color="#02ff00"/><stop offset="0.403" stop-color="#00ff3b"/><stop offset="0.428" stop-color="#00ffea"/><stop offset="0.434" stop-color="#00dfff"/><stop offset="0.447" stop-color="#008aff"/><stop offset="0.459" stop-color="#0070ff"/><stop offset="0.503" stop-color="#00bbff"/><stop offset="0.572" stop-color="#00fffe"/><stop offset="0.635" stop-color="#00ff8b"/><stop offset="0.679" stop-color="#00ff6c"/><stop offset="0.723" stop-color="#00ff93"/><stop offset="0.767" stop-color="#00fff7"/><stop offset="0.818" stop-color="#006eff"/><stop offset="0.855" stop-color="#002cff"/><stop offset="0.893" stop-color="#0016ff"/><stop offset="1.000" stop-color="#000aff"/></linearGradient><linearGradient id="g36" x1="0" y1="0" x2="0" y2="1"><stop offset="0.000" stop-color="#000000"/><stop offset="0.157" stop-color="#000000"/><stop offset="0.220" stop-color="#0000bb"/><stop offset="0.252" stop-color="#0000fd"/><stop offset="0.296" stop-color="#003fff"/><stop offset="0.308" stop-color="#007aff"/><stop offset="0.321" stop-color="#00e3ff"/><stop offset="0.327" stop-color="#00ffe2"/><stop offset="0.346" stop-color="#00ff4c"/><stop offset="0.358" stop-color="#00ff03"/><stop offset="0.377" stop-color="#32ff00"/><stop offset="0.396" stop-color="#18ff00"/><stop offset="0.403" stop-color="#00ff02"/><stop offset="0.409" stop-color="#00ff22"/><stop offset="0.440" stop-color="#00ffff"/><stop offset="0.453" stop-color="#00beff"/><stop offset="0.459" stop-color="#00b4ff"/><stop offset="0.509" stop-color="#00f7ff"/><stop offset="0.566" stop-color="#00fff1"/><stop offset="0.648" stop-color="#00ff50"/><stop offset="0.692" stop-color="#00ff2a"/><stop offset="0.742" stop-color="#00ff56"/><stop offset="0.811" stop-color="#00fffd"/><stop offset="0.843" stop-color="#00b3ff"/><stop offset="0.874" stop-color="#0088ff"/><stop offset="1.000" stop-color="#006dff"/></linearGradient><linearGradient id="g37" x1="0" y1="0" x2="0" y2="1"><stop offset="0.000" stop-color="#000000"/><stop offset="0.126" stop-color="#000000"/><stop offset="0.195" stop-color="#0000fa"/><stop offset="0.201" stop-color="#0012ff"/><stop offset="0.239" stop-color="#0084ff"/><stop offset="0.296" stop-color="#00ceff"/><stop offset="0.308" stop-color="#00f5ff"/><stop offset="0.321" stop-color="#00ffc0"/><stop offset="0.346" stop-color="#06ff00"/><stop offset="0.365" stop-color="#78ff00"/><stop offset="0.384" stop-color="#a3ff00"/><stop offset="0.403" stop-color="#81ff00"/><stop offset="0.428" stop-color="#00ff09"/><stop offset="0.447" stop-color="#00ff63"/><stop offset="0.459" stop-color="#00ff70"/><stop offset="0.503" stop-color="#00ff34"/><stop offset="0.560" stop-color="#00ff22"/><stop offset="0.585" stop-color="#00ff07"/><stop offset="0.654" stop-color="#8fff00"/><stop offset="0.698" stop-color="#b0ff00"/><stop offset="0.742" stop-color="#89ff00"/><stop offset="0.805" stop-color="#00ff00"/><stop offset="0.843" stop-color="#00ff42"/><stop offset="0.874" stop-color="#00ff5d"/><stop offset="1.000" stop-color="#00ff70"/></linearGradient><linearGradient id="g38" x1="0" y1="0" x2="0" y2="1"><stop offset="0.000" stop-color="#000000"/><stop offset="0.119" stop-color="#000000"/><stop offset="0.189" stop-color="#0000fe"/><stop offset="0.195" stop-color="#0019ff"/><stop offset="0.220" stop-color="#0070ff"/><stop offset="0.245" stop-color="#00afff"/><stop offset="0.308" stop-color="#00fffd"/><stop offset="0.321" stop-color="#00ffc1"/><stop offset="0.346" stop-color="#06ff00"/><stop offset="0.365" stop-color="#86ff00"/><stop offset="0.384" stop-color="#c0ff00"/><stop offset="0.396" stop-color="#bcff00"/><stop offset="0.409" stop-color="#96ff00"/><stop offset="0.434" stop-color="#00ff02"/><stop offset="0.453" stop-color="#00ff63"/><stop offset="0.465" stop-color="#00ff74"/><stop offset="0.560" stop-color="#00ff09"/><stop offset="0.572" stop-color="#0eff00"/><stop offset="0.642" stop-color="#afff00"/><stop offset="0.686" stop-color="#d6ff00"/><stop offset="0.730" stop-color="#b6ff00"/><stop offset="0.824" stop-color="#00ff05"/><stop offset="0.881" stop-color="#00ff31"/><stop offset="1.000" stop-color="#00ff3d"/></linearGradient><linearGradient id="g39" x1="0" y1="0" x2="0" y2="1"><stop offset="0.000" stop-color="#000000"/><stop offset="0.138" stop-color="#000000"/><stop offset="0.201" stop-color="#0000d1"/><stop offset="0.220" stop-color="#000aff"/><stop offset="0.258" stop-color="#0060ff"/><stop offset="0.302" stop-color="#0087ff"/><stop offset="0.314" stop-color="#00b2ff"/><stop offset="0.321" stop-color="#00dbff"/><stop offset="0.327" stop-color="#00fff0"/><stop offset="0.352" stop-color="#00ff17"/><stop offset="0.358" stop-color="#19ff00"/><stop offset="0.377" stop-color="#7cff00"/><stop offset="0.396" stop-color="#92ff00"/><stop offset="0.409" stop-color="#74ff00"/><stop offset="0.428" stop-color="#06ff00"/><stop offset="0.459" stop-color="#00f4ff"/><stop offset="0.472" stop-color="#00a7ff"/><stop offset="0.484" stop-color="#0095ff"/><stop offset="0.553" stop-color="#00fdff"/><stop offset="0.642" stop-color="#06ff00"/><stop offset="0.673" stop-color="#3eff00"/><stop offset="0.704" stop-color="#4eff00"/><stop offset="0.736" stop-color="#36ff00"/><stop offset="0.767" stop-color="#00ff02"/><stop offset="0.830" stop-color="#00ff90"/><stop offset="0.862" stop-color="#00ffbf"/><stop offset="0.906" stop-color="#00ffd8"/><stop offset="1.000" stop-color="#00ffe2"/></linearGradient><linearGradient id="g40" x1="0" y1="0" x2="0" y2="1"><stop offset="0.000" stop-color="#000000"/><stop offset="0.138" stop-color="#000000"/><stop offset="0.201" stop-color="#0000d7"/><stop offset="0.220" stop-color="#0012ff"/><stop offset="0.258" stop-color="#0068ff"/><stop offset="0.308" stop-color="#0094ff"/><stop offset="0.321" stop-color="#00cdff"/><stop offset="0.327" stop-color="#00ffff"/><stop offset="0.352" stop-color="#00ff21"/><stop offset="0.358" stop-color="#12ff00"/><stop offset="0.377" stop-color="#83ff00"/><stop offset="0.396" stop-color="#a8ff00"/><stop offset="0.415" stop-color="#7bff00"/><stop offset="0.434" stop-color="#02ff00"/><stop offset="0.459" stop-color="#00ffdd"/><stop offset="0.465" stop-color="#00efff"/><stop offset="0.478" stop-color="#00acff"/><stop offset="0.491" stop-color="#00a1ff"/><stop offset="0.553" stop-color="#00fffb"/><stop offset="0.623" stop-color="#00ff24"/><stop offset="0.642" stop-color="#0eff00"/><stop offset="0.673" stop-color="#47ff00"/><stop offset="0.704" stop-color="#57ff00"/><stop offset="0.736" stop-color="#40ff00"/><stop offset="0.774" stop-color="#00ff05"/><stop offset="0.830" stop-color="#00ff84"/><stop offset="0.874" stop-color="#00ffbd"/><stop offset="1.000" stop-color="#00ffd5"/></linearGradient><linearGradient id="g41" x1="0" y1="0" x2="0" y2="1"><stop offset="0.000" stop-color="#000000"/><stop offset="0.145" stop-color="#000003"/><stop offset="0.208" stop-color="#0000d6"/><stop offset="0.226" stop-color="#000cff"/><stop offset="0.258" stop-color="#0050ff"/><stop offset="0.308" stop-color="#0077ff"/><stop offset="0.321" stop-color="#00abff"/><stop offset="0.327" stop-color="#00dbff"/><stop offset="0.333" stop-color="#00ffea"/><stop offset="0.358" stop-color="#00ff04"/><stop offset="0.365" stop-color="#2dff00"/><stop offset="0.384" stop-color="#91ff00"/><stop offset="0.396" stop-color="#a8ff00"/><stop offset="0.415" stop-color="#87ff00"/><stop offset="0.434" stop-color="#17ff00"/><stop offset="0.440" stop-color="#00ff1d"/><stop offset="0.465" stop-color="#00f6ff"/><stop offset="0.478" stop-color="#0099ff"/><stop offset="0.491" stop-color="#007eff"/><stop offset="0.522" stop-color="#00aaff"/><stop offset="0.553" stop-color="#00f9ff"/><stop offset="0.623" stop-color="#00ff2e"/><stop offset="0.648" stop-color="#0aff00"/><stop offset="0.692" stop-color="#32ff00"/><stop offset="0.742" stop-color="#04ff00"/><stop offset="0.824" stop-color="#00ffae"/><stop offset="0.868" stop-color="#00ffe5"/><stop offset="1.000" stop-color="#00fffc"/></linearGradient><linearGradient id="g42" x1="0" y1="0" x2="0" y2="1"><stop offset="0.000" stop-color="#000000"/><stop offset="0.145" stop-color="#000002"/><stop offset="0.208" stop-color="#0000d3"/><stop offset="0.226" stop-color="#0009ff"/><stop offset="0.264" stop-color="#0055ff"/><stop offset="0.308" stop-color="#0072ff"/><stop offset="0.321" stop-color="#00a3ff"/><stop offset="0.327" stop-color="#00d3ff"/><stop offset="0.333" stop-color="#00fff1"/><stop offset="0.358" stop-color="#00ff05"/><stop offset="0.371" stop-color="#5bff00"/><stop offset="0.384" stop-color="#9aff00"/><stop offset="0.396" stop-color="#b5ff00"/><stop offset="0.409" stop-color="#adff00"/><stop offset="0.421" stop-color="#80ff00"/><stop offset="0.440" stop-color="#00ff03"/><stop offset="0.465" stop-color="#00fff1"/><stop offset="0.472" stop-color="#00d1ff"/><stop offset="0.484" stop-color="#0084ff"/><stop offset="0.497" stop-color="#0072ff"/><stop offset="0.541" stop-color="#00a1ff"/><stop offset="0.572" stop-color="#00f5ff"/><stop offset="0.629" stop-color="#00ff48"/><stop offset="0.660" stop-color="#04ff00"/><stop offset="0.704" stop-color="#30ff00"/><stop offset="0.755" stop-color="#06ff00"/><stop offset="0.836" stop-color="#00ffad"/><stop offset="0.868" stop-color="#00ffdc"/><stop offset="0.906" stop-color="#00fff4"/><stop offset="1.000" stop-color="#00feff"/></linearGradient><linearGradient id="g43" x1="0" y1="0" x2="0" y2="1"><stop offset="0.000" stop-color="#000000"/><stop offset="0.157" stop-color="#000000"/><stop offset="0.245" stop-color="#0000e4"/><stop offset="0.264" stop-color="#0000fe"/><stop offset="0.296" stop-color="#0012ff"/><stop offset="0.314" stop-color="#0037ff"/><stop offset="0.321" stop-color="#005cff"/><stop offset="0.333" stop-color="#00d4ff"/><stop offset="0.340" stop-color="#00ffe4"/><stop offset="0.358" stop-color="#00ff2c"/><stop offset="0.365" stop-color="#06ff00"/><stop offset="0.384" stop-color="#74ff00"/><stop offset="0.403" stop-color="#92ff00"/><stop offset="0.415" stop-color="#78ff00"/><stop offset="0.434" stop-color="#0dff00"/><stop offset="0.440" stop-color="#00ff26"/><stop offset="0.459" stop-color="#00ffe6"/><stop offset="0.465" stop-color="#00c9ff"/><stop offset="0.478" stop-color="#0031ff"/><stop offset="0.484" stop-color="#0000fb"/><stop offset="0.491" stop-color="#0000de"/><stop offset="0.503" stop-color="#0000ce"/><stop offset="0.547" stop-color="#000cff"/><stop offset="0.610" stop-color="#00fff8"/><stop offset="0.660" stop-color="#00ff6f"/><stop offset="0.704" stop-color="#00ff46"/><stop offset="0.755" stop-color="#00ff71"/><stop offset="0.818" stop-color="#00f8ff"/><stop offset="0.855" stop-color="#0099ff"/><stop offset="0.887" stop-color="#0070ff"/><stop offset="1.000" stop-color="#0056ff"/></linearGradient><linearGradient id="g44" x1="0" y1="0" x2="0" y2="1"><stop offset="0.000" stop-color="#000000"/><stop offset="0.176" stop-color="#000000"/><stop offset="0.245" stop-color="#000099"/><stop offset="0.302" stop-color="#0000ce"/><stop offset="0.314" stop-color="#0000f4"/><stop offset="0.321" stop-color="#0021ff"/><stop offset="0.340" stop-color="#00f8ff"/><stop offset="0.346" stop-color="#00ffc2"/><stop offset="0.365" stop-color="#00ff18"/><stop offset="0.371" stop-color="#13ff00"/><stop offset="0.390" stop-color="#64ff00"/><stop offset="0.403" stop-color="#6cff00"/><stop offset="0.415" stop-color="#50ff00"/><stop offset="0.428" stop-color="#0fff00"/><stop offset="0.440" stop-color="#00ff52"/><stop offset="0.453" stop-color="#00ffd3"/><stop offset="0.459" stop-color="#00dcff"/><stop offset="0.472" stop-color="#0021ff"/><stop offset="0.478" stop-color="#0000cf"/><stop offset="0.484" stop-color="#000090"/><stop offset="0.491" stop-color="#00006a"/><stop offset="0.509" stop-color="#000054"/><stop offset="0.541" stop-color="#00008b"/><stop offset="0.572" stop-color="#0000f8"/><stop offset="0.616" stop-color="#00b7ff"/><stop offset="0.642" stop-color="#00fffa"/><stop offset="0.673" stop-color="#00ffc9"/><stop offset="0.698" stop-color="#00ffbe"/><stop offset="0.723" stop-color="#00ffcb"/><stop offset="0.755" stop-color="#00fffc"/><stop offset="0.843" stop-color="#0000fe"/><stop offset="0.893" stop-color="#0000c5"/><stop offset="1.000" stop-color="#0000b5"/></linearGradient><linearGradient id="g45" x1="0" y1="0" x2="0" y2="1"><stop offset="0.000" stop-color="#000000"/><stop offset="0.176" stop-color="#000000"/><stop offset="0.245" stop-color="#0000a9"/><stop offset="0.308" stop-color="#0000f4"/><stop offset="0.314" stop-color="#0017ff"/><stop offset="0.321" stop-color="#004dff"/><stop offset="0.333" stop-color="#00deff"/><stop offset="0.340" stop-color="#00ffd7"/><stop offset="0.358" stop-color="#00ff20"/><stop offset="0.365" stop-color="#10ff00"/><stop offset="0.384" stop-color="#73ff00"/><stop offset="0.396" stop-color="#88ff00"/><stop offset="0.409" stop-color="#78ff00"/><stop offset="0.428" stop-color="#1cff00"/><stop offset="0.434" stop-color="#00ff14"/><stop offset="0.453" stop-color="#00ffd0"/><stop offset="0.459" stop-color="#00ddff"/><stop offset="0.472" stop-color="#0021ff"/><stop offset="0.478" stop-color="#0000d2"/><stop offset="0.491" stop-color="#000073"/><stop offset="0.509" stop-color="#00005b"/><stop offset="0.547" stop-color="#000087"/><stop offset="0.585" stop-color="#0007ff"/><stop offset="0.623" stop-color="#00b3ff"/><stop offset="0.648" stop-color="#00fff5"/><stop offset="0.679" stop-color="#00ffb9"/><stop offset="0.711" stop-color="#00ffa4"/><stop offset="0.742" stop-color="#00ffb5"/><stop offset="0.780" stop-color="#00fff8"/><stop offset="0.843" stop-color="#0047ff"/><stop offset="0.874" stop-color="#0002ff"/><stop offset="0.918" stop-color="#0000e1"/><stop offset="1.000" stop-color="#0000d5"/></linearGradient><linearGradient id="g46" x1="0" y1="0" x2="0" y2="1"><stop offset="0.000" stop-color="#000000"/><stop offset="0.138" stop-color="#000000"/><stop offset="0.220" stop-color="#0005ff"/><stop offset="0.252" stop-color="#0051ff"/><stop offset="0.302" stop-color="#0089ff"/><stop offset="0.314" stop-color="#00c2ff"/><stop offset="0.321" stop-color="#00f6ff"/><stop offset="0.346" stop-color="#00ff13"/><stop offset="0.352" stop-color="#29ff00"/><stop offset="0.371" stop-color="#b2ff00"/><stop offset="0.384" stop-color="#e2ff00"/><stop offset="0.396" stop-color="#eeff00"/><stop offset="0.415" stop-color="#bdff00"/><stop offset="0.428" stop-color="#70ff00"/><stop offset="0.440" stop-color="#02ff00"/><stop offset="0.465" stop-color="#00fff8"/><stop offset="0.472" stop-color="#00cfff"/><stop offset="0.484" stop-color="#0094ff"/><stop offset="0.497" stop-color="#008dff"/><stop offset="0.547" stop-color="#00b9ff"/><stop offset="0.579" stop-color="#00fff8"/><stop offset="0.635" stop-color="#00ff39"/><stop offset="0.660" stop-color="#07ff00"/><stop offset="0.686" stop-color="#31ff00"/><stop offset="0.717" stop-color="#41ff00"/><stop offset="0.742" stop-color="#32ff00"/><stop offset="0.774" stop-color="#01ff00"/><stop offset="0.836" stop-color="#00ff89"/><stop offset="0.874" stop-color="#00ffc2"/><stop offset="1.000" stop-color="#00ffe3"/></linearGradient><linearGradient id="g47" x1="0" y1="0" x2="0" y2="1"><stop offset="0.000" stop-color="#000000"/><stop offset="0.119" stop-color="#000000"/><stop offset="0.189" stop-color="#000dff"/><stop offset="0.214" stop-color="#006bff"/><stop offset="0.239" stop-color="#00b0ff"/><stop offset="0.302" stop-color="#00fffc"/><stop offset="0.314" stop-color="#00ffc8"/><stop offset="0.333" stop-color="#00ff2c"/><stop offset="0.340" stop-color="#11ff00"/><stop offset="0.352" stop-color="#85ff00"/><stop offset="0.365" stop-color="#ddff00"/><stop offset="0.371" stop-color="#feff00"/><stop offset="0.377" stop-color="#ffe700"/><stop offset="0.390" stop-color="#ffd000"/><stop offset="0.409" stop-color="#fff800"/><stop offset="0.421" stop-color="#c2ff00"/><stop offset="0.447" stop-color="#00ff0d"/><stop offset="0.465" stop-color="#00ff83"/><stop offset="0.478" stop-color="#00ff96"/><stop offset="0.553" stop-color="#00ff5b"/><stop offset="0.591" stop-color="#00ff0a"/><stop offset="0.660" stop-color="#b9ff00"/><stop offset="0.686" stop-color="#dbff00"/><stop offset="0.711" stop-color="#e5ff00"/><stop offset="0.755" stop-color="#bfff00"/><stop offset="0.830" stop-color="#2dff00"/><stop offset="0.862" stop-color="#04ff00"/><stop offset="1.000" stop-color="#00ff1b"/></linearGradient><linearGradient id="g48" x1="0" y1="0" x2="0" y2="1"><stop offset="0.000" stop-color="#000000"/><stop offset="0.138" stop-color="#000000"/><stop offset="0.214" stop-color="#0003ff"/><stop offset="0.245" stop-color="#0057ff"/><stop offset="0.296" stop-color="#009dff"/><stop offset="0.314" stop-color="#00fff9"/><stop offset="0.340" stop-color="#00ff11"/><stop offset="0.346" stop-color="#27ff00"/><stop offset="0.365" stop-color="#a9ff00"/><stop offset="0.384" stop-color="#dfff00"/><stop offset="0.403" stop-color="#c4ff00"/><stop offset="0.415" stop-color="#85ff00"/><stop offset="0.428" stop-color="#24ff00"/><stop offset="0.434" stop-color="#00ff16"/><stop offset="0.459" stop-color="#00faff"/><stop offset="0.472" stop-color="#00b0ff"/><stop offset="0.484" stop-color="#00a4ff"/><stop offset="0.547" stop-color="#00d9ff"/><stop offset="0.566" stop-color="#00faff"/><stop offset="0.585" stop-color="#00ffd0"/><stop offset="0.648" stop-color="#01ff00"/><stop offset="0.686" stop-color="#4fff00"/><stop offset="0.717" stop-color="#63ff00"/><stop offset="0.755" stop-color="#48ff00"/><stop offset="0.792" stop-color="#00ff00"/><stop offset="0.843" stop-color="#00ff6f"/><stop offset="0.881" stop-color="#00ffa5"/><stop offset="1.000" stop-color="#00ffc3"/></linearGradient><linearGradient id="g49" x1="0" y1="0" x2="0" y2="1"><stop offset="0.000" stop-color="#000000"/><stop offset="0.145" stop-color="#000000"/><stop offset="0.226" stop-color="#0001ff"/><stop offset="0.252" stop-color="#003bff"/><stop offset="0.289" stop-color="#0070ff"/><stop offset="0.302" stop-color="#00a0ff"/><stop offset="0.314" stop-color="#00fffb"/><stop offset="0.340" stop-color="#00ff11"/><stop offset="0.346" stop-color="#23ff00"/><stop offset="0.365" stop-color="#96ff00"/><stop offset="0.384" stop-color="#bbff00"/><stop offset="0.403" stop-color="#8fff00"/><stop offset="0.421" stop-color="#13ff00"/><stop offset="0.428" stop-color="#00ff25"/><stop offset="0.447" stop-color="#00ffe6"/><stop offset="0.453" stop-color="#00d3ff"/><stop offset="0.465" stop-color="#006bff"/><stop offset="0.478" stop-color="#004bff"/><stop offset="0.541" stop-color="#0093ff"/><stop offset="0.579" stop-color="#00faff"/><stop offset="0.635" stop-color="#00ff40"/><stop offset="0.667" stop-color="#0aff00"/><stop offset="0.711" stop-color="#33ff00"/><stop offset="0.761" stop-color="#05ff00"/><stop offset="0.843" stop-color="#00ffb2"/><stop offset="0.874" stop-color="#00ffe2"/><stop offset="0.918" stop-color="#00fffb"/><stop offset="1.000" stop-color="#00f8ff"/></linearGradient><linearGradient id="g50" x1="0" y1="0" x2="0" y2="1"><stop offset="0.000" stop-color="#000000"/><stop offset="0.126" stop-color="#000000"/><stop offset="0.195" stop-color="#0000fa"/><stop offset="0.201" stop-color="#0013ff"/><stop offset="0.239" stop-color="#0085ff"/><stop offset="0.283" stop-color="#00c9ff"/><stop offset="0.302" stop-color="#00fff6"/><stop offset="0.314" stop-color="#00ffa1"/><stop offset="0.333" stop-color="#06ff00"/><stop offset="0.346" stop-color="#6eff00"/><stop offset="0.358" stop-color="#b9ff00"/><stop offset="0.377" stop-color="#eaff00"/><stop offset="0.390" stop-color="#deff00"/><stop offset="0.403" stop-color="#aeff00"/><stop offset="0.428" stop-color="#00ff0f"/><stop offset="0.447" stop-color="#00ffb1"/><stop offset="0.453" stop-color="#00ffd6"/><stop offset="0.465" stop-color="#00fff4"/><stop offset="0.547" stop-color="#00ff8b"/><stop offset="0.597" stop-color="#00ff04"/><stop offset="0.604" stop-color="#11ff00"/><stop offset="0.654" stop-color="#9aff00"/><stop offset="0.679" stop-color="#bbff00"/><stop offset="0.704" stop-color="#c4ff00"/><stop offset="0.748" stop-color="#9bff00"/><stop offset="0.824" stop-color="#00ff08"/><stop offset="0.881" stop-color="#00ff4c"/><stop offset="1.000" stop-color="#00ff5e"/></linearGradient><linearGradient id="g51" x1="0" y1="0" x2="0" y2="1"><stop offset="0.000" stop-color="#000000"/><stop offset="0.138" stop-color="#000002"/><stop offset="0.214" stop-color="#0005ff"/><stop offset="0.245" stop-color="#005aff"/><stop offset="0.283" stop-color="#0095ff"/><stop offset="0.302" stop-color="#00e5ff"/><stop offset="0.308" stop-color="#00ffeb"/><stop offset="0.333" stop-color="#00ff10"/><stop offset="0.340" stop-color="#24ff00"/><stop offset="0.358" stop-color="#96ff00"/><stop offset="0.377" stop-color="#bbff00"/><stop offset="0.396" stop-color="#91ff00"/><stop offset="0.415" stop-color="#17ff00"/><stop offset="0.421" stop-color="#00ff20"/><stop offset="0.440" stop-color="#00ffd5"/><stop offset="0.447" stop-color="#00f0ff"/><stop offset="0.459" stop-color="#00a0ff"/><stop offset="0.472" stop-color="#0093ff"/><stop offset="0.547" stop-color="#00ffff"/><stop offset="0.572" stop-color="#00ffc5"/><stop offset="0.629" stop-color="#00ff04"/><stop offset="0.635" stop-color="#0fff00"/><stop offset="0.673" stop-color="#66ff00"/><stop offset="0.711" stop-color="#82ff00"/><stop offset="0.748" stop-color="#67ff00"/><stop offset="0.799" stop-color="#00ff03"/><stop offset="0.843" stop-color="#00ff6a"/><stop offset="0.881" stop-color="#00ff9f"/><stop offset="1.000" stop-color="#00ffbc"/></linearGradient><linearGradient id="g52" x1="0" y1="0" x2="0" y2="1"><stop offset="0.000" stop-color="#000000"/><stop offset="0.145" stop-color="#000000"/><stop offset="0.226" stop-color="#0003ff"/><stop offset="0.289" stop-color="#0084ff"/><stop offset="0.296" stop-color="#00a0ff"/><stop offset="0.308" stop-color="#00feff"/><stop offset="0.333" stop-color="#00ff25"/><stop offset="0.340" stop-color="#0cff00"/><stop offset="0.358" stop-color="#77ff00"/><stop offset="0.377" stop-color="#96ff00"/><stop offset="0.390" stop-color="#7eff00"/><stop offset="0.409" stop-color="#16ff00"/><stop offset="0.415" stop-color="#00ff1c"/><stop offset="0.434" stop-color="#00ffd2"/><stop offset="0.440" stop-color="#00e9ff"/><stop offset="0.453" stop-color="#0070ff"/><stop offset="0.459" stop-color="#004fff"/><stop offset="0.472" stop-color="#0040ff"/><stop offset="0.535" stop-color="#00adff"/><stop offset="0.566" stop-color="#00fff8"/><stop offset="0.642" stop-color="#01ff00"/><stop offset="0.673" stop-color="#3eff00"/><stop offset="0.704" stop-color="#53ff00"/><stop offset="0.736" stop-color="#40ff00"/><stop offset="0.774" stop-color="#00ff04"/><stop offset="0.836" stop-color="#00ffa0"/><stop offset="0.874" stop-color="#00ffdd"/><stop offset="0.912" stop-color="#00fff3"/><stop offset="1.000" stop-color="#00ffff"/></linearGradient><linearGradient id="g53" x1="0" y1="0" x2="0" y2="1"><stop offset="0.000" stop-color="#000000"/><stop offset="0.145" stop-color="#000000"/><stop offset="0.226" stop-color="#0000ff"/><stop offset="0.289" stop-color="#0082ff"/><stop offset="0.296" stop-color="#009fff"/><stop offset="0.308" stop-color="#00fdff"/><stop offset="0.340" stop-color="#09ff00"/><stop offset="0.352" stop-color="#57ff00"/><stop offset="0.365" stop-color="#85ff00"/><stop offset="0.384" stop-color="#87ff00"/><stop offset="0.396" stop-color="#5cff00"/><stop offset="0.409" stop-color="#0dff00"/><stop offset="0.415" stop-color="#00ff25"/><stop offset="0.434" stop-color="#00ffdb"/><stop offset="0.440" stop-color="#00deff"/><stop offset="0.453" stop-color="#006aff"/><stop offset="0.465" stop-color="#0041ff"/><stop offset="0.484" stop-color="#005bff"/><stop offset="0.547" stop-color="#00feff"/><stop offset="0.610" stop-color="#00ff2e"/><stop offset="0.629" stop-color="#06ff00"/><stop offset="0.660" stop-color="#43ff00"/><stop offset="0.692" stop-color="#58ff00"/><stop offset="0.723" stop-color="#46ff00"/><stop offset="0.761" stop-color="#01ff00"/><stop offset="0.824" stop-color="#00ff9d"/><stop offset="0.862" stop-color="#00ffdd"/><stop offset="0.906" stop-color="#00fff7"/><stop offset="1.000" stop-color="#00fdff"/></linearGradient><linearGradient id="g54" x1="0" y1="0" x2="0" y2="1"><stop offset="0.000" stop-color="#000000"/><stop offset="0.151" stop-color="#000000"/><stop offset="0.214" stop-color="#0000c9"/><stop offset="0.239" stop-color="#0008ff"/><stop offset="0.289" stop-color="#0067ff"/><stop offset="0.302" stop-color="#00abff"/><stop offset="0.308" stop-color="#00deff"/><stop offset="0.314" stop-color="#00ffe7"/><stop offset="0.340" stop-color="#00ff10"/><stop offset="0.346" stop-color="#1cff00"/><stop offset="0.365" stop-color="#71ff00"/><stop offset="0.377" stop-color="#7dff00"/><stop offset="0.390" stop-color="#66ff00"/><stop offset="0.409" stop-color="#00ff00"/><stop offset="0.434" stop-color="#00ffe8"/><stop offset="0.440" stop-color="#00ccff"/><stop offset="0.453" stop-color="#004aff"/><stop offset="0.459" stop-color="#0023ff"/><stop offset="0.472" stop-color="#000eff"/><stop offset="0.535" stop-color="#0087ff"/><stop offset="0.566" stop-color="#00efff"/><stop offset="0.572" stop-color="#00fff6"/><stop offset="0.616" stop-color="#00ff55"/><stop offset="0.648" stop-color="#01ff00"/><stop offset="0.679" stop-color="#35ff00"/><stop offset="0.704" stop-color="#40ff00"/><stop offset="0.730" stop-color="#33ff00"/><stop offset="0.761" stop-color="#00ff00"/><stop offset="0.836" stop-color="#00ffc2"/><stop offset="0.868" stop-color="#00fffd"/><stop offset="0.912" stop-color="#00daff"/><stop offset="1.000" stop-color="#00ccff"/></linearGradient><linearGradient id="g55" x1="0" y1="0" x2="0" y2="1"><stop offset="0.000" stop-color="#000000"/><stop offset="0.157" stop-color="#000000"/><stop offset="0.226" stop-color="#0000c5"/><stop offset="0.258" stop-color="#0002ff"/><stop offset="0.283" stop-color="#0028ff"/><stop offset="0.296" stop-color="#0051ff"/><stop offset="0.302" stop-color="#0076ff"/><stop offset="0.314" stop-color="#00e3ff"/><stop offset="0.321" stop-color="#00ffde"/><stop offset="0.346" stop-color="#00ff0e"/><stop offset="0.365" stop-color="#4eff00"/><stop offset="0.377" stop-color="#61ff00"/><stop offset="0.390" stop-color="#4fff00"/><stop offset="0.403" stop-color="#19ff00"/><stop offset="0.409" stop-color="#00ff0e"/><stop offset="0.415" stop-color="#00ff3c"/><stop offset="0.434" stop-color="#00fff0"/><stop offset="0.453" stop-color="#0033ff"/><stop offset="0.459" stop-color="#0004ff"/><stop offset="0.465" stop-color="#0000ec"/><stop offset="0.491" stop-color="#0000fb"/><stop offset="0.522" stop-color="#003eff"/><stop offset="0.547" stop-color="#0084ff"/><stop offset="0.579" stop-color="#00ffff"/><stop offset="0.616" stop-color="#00ff7c"/><stop offset="0.648" stop-color="#00ff2c"/><stop offset="0.679" stop-color="#00ff02"/><stop offset="0.711" stop-color="#02ff00"/><stop offset="0.761" stop-color="#00ff45"/><stop offset="0.830" stop-color="#00ffff"/><stop offset="0.855" stop-color="#00beff"/><stop offset="0.887" stop-color="#0092ff"/><stop offset="1.000" stop-color="#0076ff"/></linearGradient><linearGradient id="g56" x1="0" y1="0" x2="0" y2="1"><stop offset="0.000" stop-color="#000000"/><stop offset="0.164" stop-color="#000000"/><stop offset="0.239" stop-color="#0000c4"/><stop offset="0.283" stop-color="#0002ff"/><stop offset="0.302" stop-color="#0042ff"/><stop offset="0.321" stop-color="#00e9ff"/><stop offset="0.327" stop-color="#00ffd8"/><stop offset="0.352" stop-color="#00ff10"/><stop offset="0.358" stop-color="#12ff00"/><stop offset="0.377" stop-color="#48ff00"/><stop offset="0.390" stop-color="#3eff00"/><stop offset="0.403" stop-color="#11ff00"/><stop offset="0.409" stop-color="#00ff12"/><stop offset="0.415" stop-color="#00ff3c"/><stop offset="0.434" stop-color="#00ffe5"/><stop offset="0.440" stop-color="#00d1ff"/><stop offset="0.453" stop-color="#0045ff"/><stop offset="0.459" stop-color="#0014ff"/><stop offset="0.465" stop-color="#0000f7"/><stop offset="0.484" stop-color="#0000f8"/><stop offset="0.528" stop-color="#005fff"/><stop offset="0.579" stop-color="#00fff7"/><stop offset="0.635" stop-color="#00ff59"/><stop offset="0.660" stop-color="#00ff35"/><stop offset="0.686" stop-color="#00ff29"/><stop offset="0.736" stop-color="#00ff58"/><stop offset="0.799" stop-color="#00fffb"/><stop offset="0.843" stop-color="#0080ff"/><stop offset="0.874" stop-color="#0050ff"/><stop offset="1.000" stop-color="#0032ff"/></linearGradient><linearGradient id="g57" x1="0" y1="0" x2="0" y2="1"><stop offset="0.000" stop-color="#000000"/><stop offset="0.151" stop-color="#000005"/><stop offset="0.233" stop-color="#0000fe"/><stop offset="0.296" stop-color="#0063ff"/><stop offset="0.308" stop-color="#0099ff"/><stop offset="0.321" stop-color="#00ffff"/><stop offset="0.340" stop-color="#00ff59"/><stop offset="0.352" stop-color="#06ff00"/><stop offset="0.371" stop-color="#64ff00"/><stop offset="0.384" stop-color="#77ff00"/><stop offset="0.396" stop-color="#67ff00"/><stop offset="0.415" stop-color="#0fff00"/><stop offset="0.421" stop-color="#00ff1c"/><stop offset="0.447" stop-color="#00ffe0"/><stop offset="0.453" stop-color="#00faff"/><stop offset="0.459" stop-color="#00dfff"/><stop offset="0.472" stop-color="#00d4ff"/><stop offset="0.503" stop-color="#00fffb"/><stop offset="0.553" stop-color="#00ffcb"/><stop offset="0.579" stop-color="#00ff9a"/><stop offset="0.635" stop-color="#00ff01"/><stop offset="0.667" stop-color="#38ff00"/><stop offset="0.692" stop-color="#4bff00"/><stop offset="0.723" stop-color="#3eff00"/><stop offset="0.755" stop-color="#0cff00"/><stop offset="0.774" stop-color="#00ff1f"/><stop offset="0.836" stop-color="#00ffc6"/><stop offset="0.868" stop-color="#00fffc"/><stop offset="0.912" stop-color="#00e1ff"/><stop offset="1.000" stop-color="#00d4ff"/></linearGradient><linearGradient id="g58" x1="0" y1="0" x2="0" y2="1"><stop offset="0.000" stop-color="#000000"/><stop offset="0.145" stop-color="#000002"/><stop offset="0.208" stop-color="#0000d5"/><stop offset="0.226" stop-color="#000bff"/><stop offset="0.258" stop-color="#004fff"/><stop offset="0.302" stop-color="#0083ff"/><stop offset="0.314" stop-color="#00bdff"/><stop offset="0.321" stop-color="#00edff"/><stop offset="0.327" stop-color="#00ffdc"/><stop offset="0.352" stop-color="#00ff07"/><stop offset="0.358" stop-color="#24ff00"/><stop offset="0.377" stop-color="#79ff00"/><stop offset="0.390" stop-color="#86ff00"/><stop offset="0.403" stop-color="#71ff00"/><stop offset="0.421" stop-color="#16ff00"/><stop offset="0.428" stop-color="#00ff13"/><stop offset="0.447" stop-color="#00ff88"/><stop offset="0.465" stop-color="#00ffb4"/><stop offset="0.509" stop-color="#00ff82"/><stop offset="0.566" stop-color="#00ff5e"/><stop offset="0.610" stop-color="#00ff05"/><stop offset="0.654" stop-color="#57ff00"/><stop offset="0.692" stop-color="#73ff00"/><stop offset="0.730" stop-color="#58ff00"/><stop offset="0.767" stop-color="#0bff00"/><stop offset="0.836" stop-color="#00ffa5"/><stop offset="0.868" stop-color="#00ffd5"/><stop offset="0.906" stop-color="#00ffea"/><stop offset="1.000" stop-color="#00fff5"/></linearGradient><linearGradient id="g59" x1="0" y1="0" x2="0" y2="1"><stop offset="0.000" stop-color="#000000"/><stop offset="0.138" stop-color="#000003"/><stop offset="0.214" stop-color="#0007ff"/><stop offset="0.252" stop-color="#0068ff"/><stop offset="0.302" stop-color="#0098ff"/><stop offset="0.314" stop-color="#00c0ff"/><stop offset="0.321" stop-color="#00e7ff"/><stop offset="0.327" stop-color="#00ffe7"/><stop offset="0.352" stop-color="#00ff12"/><stop offset="0.358" stop-color="#1dff00"/><stop offset="0.377" stop-color="#81ff00"/><stop offset="0.390" stop-color="#9aff00"/><stop offset="0.409" stop-color="#82ff00"/><stop offset="0.434" stop-color="#0eff00"/><stop offset="0.440" stop-color="#00ff0f"/><stop offset="0.459" stop-color="#00ff3b"/><stop offset="0.509" stop-color="#00ff01"/><stop offset="0.572" stop-color="#1bff00"/><stop offset="0.642" stop-color="#88ff00"/><stop offset="0.679" stop-color="#a2ff00"/><stop offset="0.723" stop-color="#7fff00"/><stop offset="0.780" stop-color="#00ff05"/><stop offset="0.824" stop-color="#00ff6f"/><stop offset="0.862" stop-color="#00ffa3"/><stop offset="1.000" stop-color="#00ffbd"/></linearGradient><linearGradient id="g60" x1="0" y1="0" x2="0" y2="1"><stop offset="0.000" stop-color="#000000"/><stop offset="0.157" stop-color="#000000"/><stop offset="0.220" stop-color="#0000be"/><stop offset="0.252" stop-color="#0002ff"/><stop offset="0.308" stop-color="#003aff"/><stop offset="0.321" stop-color="#0073ff"/><stop offset="0.333" stop-color="#00e1ff"/><stop offset="0.340" stop-color="#00ffe0"/><stop offset="0.358" stop-color="#00ff3d"/><stop offset="0.365" stop-color="#00ff11"/><stop offset="0.371" stop-color="#14ff00"/><stop offset="0.384" stop-color="#47ff00"/><stop offset="0.396" stop-color="#58ff00"/><stop offset="0.409" stop-color="#46ff00"/><stop offset="0.421" stop-color="#13ff00"/><stop offset="0.428" stop-color="#00ff0f"/><stop offset="0.453" stop-color="#00ffa6"/><stop offset="0.472" stop-color="#00ffd5"/><stop offset="0.572" stop-color="#00ff9a"/><stop offset="0.654" stop-color="#00ff03"/><stop offset="0.692" stop-color="#17ff00"/><stop offset="0.723" stop-color="#02ff00"/><stop offset="0.761" stop-color="#00ff43"/><stop offset="0.830" stop-color="#00fdff"/><stop offset="0.855" stop-color="#00c1ff"/><stop offset="0.887" stop-color="#0099ff"/><stop offset="1.000" stop-color="#0082ff"/></linearGradient><linearGradient id="g61" x1="0" y1="0" x2="0" y2="1"><stop offset="0.000" stop-color="#000000"/><stop offset="0.176" stop-color="#000000"/><stop offset="0.245" stop-color="#0000aa"/><stop offset="0.314" stop-color="#0000f1"/><stop offset="0.321" stop-color="#000fff"/><stop offset="0.327" stop-color="#003fff"/><stop offset="0.346" stop-color="#00fff9"/><stop offset="0.365" stop-color="#00ff5b"/><stop offset="0.384" stop-color="#04ff00"/><stop offset="0.396" stop-color="#1cff00"/><stop offset="0.415" stop-color="#00ff03"/><stop offset="0.434" stop-color="#00ff67"/><stop offset="0.453" stop-color="#00fff5"/><stop offset="0.459" stop-color="#00d8ff"/><stop offset="0.472" stop-color="#0094ff"/><stop offset="0.484" stop-color="#0083ff"/><stop offset="0.553" stop-color="#00c5ff"/><stop offset="0.585" stop-color="#00fffc"/><stop offset="0.642" stop-color="#00ff84"/><stop offset="0.686" stop-color="#00ff61"/><stop offset="0.730" stop-color="#00ff86"/><stop offset="0.780" stop-color="#00ffff"/><stop offset="0.830" stop-color="#004dff"/><stop offset="0.862" stop-color="#0002ff"/><stop offset="0.906" stop-color="#0000e0"/><stop offset="1.000" stop-color="#0000d4"/></linearGradient><linearGradient id="g62" x1="0" y1="0" x2="0" y2="1"><stop offset="0.000" stop-color="#000000"/><stop offset="0.151" stop-color="#000000"/><stop offset="0.214" stop-color="#0000c3"/><stop offset="0.239" stop-color="#0001ff"/><stop offset="0.264" stop-color="#002eff"/><stop offset="0.314" stop-color="#0052ff"/><stop offset="0.327" stop-color="#0090ff"/><stop offset="0.340" stop-color="#00fffc"/><stop offset="0.358" stop-color="#00ff55"/><stop offset="0.371" stop-color="#04ff00"/><stop offset="0.390" stop-color="#56ff00"/><stop offset="0.403" stop-color="#61ff00"/><stop offset="0.415" stop-color="#4bff00"/><stop offset="0.434" stop-color="#00ff0a"/><stop offset="0.453" stop-color="#00ff6f"/><stop offset="0.472" stop-color="#00ff9c"/><stop offset="0.566" stop-color="#00ff51"/><stop offset="0.616" stop-color="#00ff00"/><stop offset="0.648" stop-color="#2dff00"/><stop offset="0.673" stop-color="#3bff00"/><stop offset="0.698" stop-color="#30ff00"/><stop offset="0.730" stop-color="#02ff00"/><stop offset="0.830" stop-color="#00fffc"/><stop offset="0.881" stop-color="#00c3ff"/><stop offset="1.000" stop-color="#00b0ff"/></linearGradient><linearGradient id="g63" x1="0" y1="0" x2="0" y2="1"><stop offset="0.000" stop-color="#000000"/><stop offset="0.132" stop-color="#000000"/><stop offset="0.195" stop-color="#0000e3"/><stop offset="0.208" stop-color="#000eff"/><stop offset="0.252" stop-color="#0084ff"/><stop offset="0.308" stop-color="#00aaff"/><stop offset="0.327" stop-color="#00e7ff"/><stop offset="0.333" stop-color="#00ffed"/><stop offset="0.358" stop-color="#00ff1b"/><stop offset="0.365" stop-color="#16ff00"/><stop offset="0.384" stop-color="#81ff00"/><stop offset="0.403" stop-color="#a4ff00"/><stop offset="0.421" stop-color="#84ff00"/><stop offset="0.453" stop-color="#1aff00"/><stop offset="0.465" stop-color="#11ff00"/><stop offset="0.516" stop-color="#43ff00"/><stop offset="0.585" stop-color="#4aff00"/><stop offset="0.654" stop-color="#b8ff00"/><stop offset="0.692" stop-color="#ceff00"/><stop offset="0.742" stop-color="#99ff00"/><stop offset="0.805" stop-color="#00ff06"/><stop offset="0.843" stop-color="#00ff58"/><stop offset="0.874" stop-color="#00ff7d"/><stop offset="1.000" stop-color="#00ff94"/></linearGradient><linearGradient id="g64" x1="0" y1="0" x2="0" y2="1"><stop offset="0.000" stop-color="#000000"/><stop offset="0.151" stop-color="#000000"/><stop offset="0.214" stop-color="#0000c5"/><stop offset="0.239" stop-color="#0003ff"/><stop offset="0.264" stop-color="#0030ff"/><stop offset="0.314" stop-color="#0054ff"/><stop offset="0.327" stop-color="#0091ff"/><stop offset="0.340" stop-color="#00fffc"/><stop offset="0.358" stop-color="#00ff57"/><stop offset="0.371" stop-color="#01ff00"/><stop offset="0.390" stop-color="#51ff00"/><stop offset="0.403" stop-color="#5bff00"/><stop offset="0.415" stop-color="#44ff00"/><stop offset="0.428" stop-color="#11ff00"/><stop offset="0.434" stop-color="#00ff10"/><stop offset="0.459" stop-color="#00ff88"/><stop offset="0.472" stop-color="#00ff9a"/><stop offset="0.572" stop-color="#00ff58"/><stop offset="0.623" stop-color="#00ff01"/><stop offset="0.654" stop-color="#30ff00"/><stop offset="0.679" stop-color="#40ff00"/><stop offset="0.704" stop-color="#37ff00"/><stop offset="0.736" stop-color="#0bff00"/><stop offset="0.755" stop-color="#00ff1e"/><stop offset="0.818" stop-color="#00ffcb"/><stop offset="0.843" stop-color="#00fbff"/><stop offset="0.893" stop-color="#00c1ff"/><stop offset="1.000" stop-color="#00b1ff"/></linearGradient><linearGradient id="g65" x1="0" y1="0" x2="0" y2="1"><stop offset="0.000" stop-color="#000000"/><stop offset="0.170" stop-color="#000005"/><stop offset="0.245" stop-color="#0000c9"/><stop offset="0.308" stop-color="#0000fe"/><stop offset="0.321" stop-color="#002fff"/><stop offset="0.340" stop-color="#00d7ff"/><stop offset="0.346" stop-color="#00ffe7"/><stop offset="0.365" stop-color="#00ff4d"/><stop offset="0.377" stop-color="#00ff08"/><stop offset="0.396" stop-color="#25ff00"/><stop offset="0.415" stop-color="#03ff00"/><stop offset="0.428" stop-color="#00ff38"/><stop offset="0.459" stop-color="#00fffd"/><stop offset="0.478" stop-color="#00d5ff"/><stop offset="0.516" stop-color="#00fffa"/><stop offset="0.566" stop-color="#00ffc0"/><stop offset="0.635" stop-color="#00ff45"/><stop offset="0.673" stop-color="#00ff2d"/><stop offset="0.723" stop-color="#00ff5e"/><stop offset="0.786" stop-color="#00f9ff"/><stop offset="0.824" stop-color="#007bff"/><stop offset="0.862" stop-color="#0033ff"/><stop offset="0.899" stop-color="#001bff"/><stop offset="1.000" stop-color="#000fff"/></linearGradient><linearGradient id="g66" x1="0" y1="0" x2="0" y2="1"><stop offset="0.000" stop-color="#000000"/><stop offset="0.170" stop-color="#000000"/><stop offset="0.245" stop-color="#0000b2"/><stop offset="0.308" stop-color="#0000f1"/><stop offset="0.314" stop-color="#0007ff"/><stop offset="0.321" stop-color="#002dff"/><stop offset="0.340" stop-color="#00e1ff"/><stop offset="0.346" stop-color="#00ffdf"/><stop offset="0.365" stop-color="#00ff4d"/><stop offset="0.384" stop-color="#03ff00"/><stop offset="0.403" stop-color="#09ff00"/><stop offset="0.415" stop-color="#00ff1d"/><stop offset="0.428" stop-color="#00ff60"/><stop offset="0.447" stop-color="#00ffe6"/><stop offset="0.453" stop-color="#00eaff"/><stop offset="0.465" stop-color="#00a6ff"/><stop offset="0.478" stop-color="#0095ff"/><stop offset="0.572" stop-color="#00ffff"/><stop offset="0.642" stop-color="#00ff71"/><stop offset="0.686" stop-color="#00ff4f"/><stop offset="0.730" stop-color="#00ff75"/><stop offset="0.786" stop-color="#00fcff"/><stop offset="0.836" stop-color="#004bff"/><stop offset="0.868" stop-color="#0006ff"/><stop offset="1.000" stop-color="#0000de"/></linearGradient><linearGradient id="g67" x1="0" y1="0" x2="0" y2="1"><stop offset="0.000" stop-color="#000000"/><stop offset="0.170" stop-color="#000000"/><stop offset="0.245" stop-color="#0000c1"/><stop offset="0.302" stop-color="#0000fb"/><stop offset="0.314" stop-color="#002cff"/><stop offset="0.333" stop-color="#00d0ff"/><stop offset="0.340" stop-color="#00ffee"/><stop offset="0.358" stop-color="#00ff58"/><stop offset="0.371" stop-color="#00ff13"/><stop offset="0.377" stop-color="#03ff00"/><stop offset="0.390" stop-color="#17ff00"/><stop offset="0.403" stop-color="#08ff00"/><stop offset="0.415" stop-color="#00ff26"/><stop offset="0.447" stop-color="#00fff4"/><stop offset="0.453" stop-color="#00e2ff"/><stop offset="0.459" stop-color="#00c4ff"/><stop offset="0.472" stop-color="#00b1ff"/><stop offset="0.547" stop-color="#00fff7"/><stop offset="0.642" stop-color="#00ff53"/><stop offset="0.679" stop-color="#00ff38"/><stop offset="0.730" stop-color="#00ff65"/><stop offset="0.786" stop-color="#00fff8"/><stop offset="0.792" stop-color="#00f0ff"/><stop offset="0.836" stop-color="#005cff"/><stop offset="0.868" stop-color="#0020ff"/><stop offset="0.912" stop-color="#0004ff"/><stop offset="1.000" stop-color="#0000f9"/></linearGradient><linearGradient id="g68" x1="0" y1="0" x2="0" y2="1"><stop offset="0.000" stop-color="#000000"/><stop offset="0.164" stop-color="#000000"/><stop offset="0.233" stop-color="#0000c1"/><stop offset="0.277" stop-color="#0001ff"/><stop offset="0.296" stop-color="#0015ff"/><stop offset="0.308" stop-color="#003cff"/><stop offset="0.333" stop-color="#00fff2"/><stop offset="0.352" stop-color="#00ff59"/><stop offset="0.365" stop-color="#00ff10"/><stop offset="0.384" stop-color="#25ff00"/><stop offset="0.403" stop-color="#0cff00"/><stop offset="0.415" stop-color="#00ff2b"/><stop offset="0.440" stop-color="#00ffcc"/><stop offset="0.453" stop-color="#00f6ff"/><stop offset="0.465" stop-color="#00e5ff"/><stop offset="0.484" stop-color="#00fffc"/><stop offset="0.566" stop-color="#00ff97"/><stop offset="0.629" stop-color="#00ff2c"/><stop offset="0.667" stop-color="#00ff10"/><stop offset="0.692" stop-color="#00ff19"/><stop offset="0.723" stop-color="#00ff44"/><stop offset="0.792" stop-color="#00feff"/><stop offset="0.830" stop-color="#008aff"/><stop offset="0.862" stop-color="#0054ff"/><stop offset="0.899" stop-color="#003eff"/><stop offset="1.000" stop-color="#0033ff"/></linearGradient><linearGradient id="g69" x1="0" y1="0" x2="0" y2="1"><stop offset="0.000" stop-color="#000000"/><stop offset="0.157" stop-color="#000000"/><stop offset="0.226" stop-color="#0000c0"/><stop offset="0.264" stop-color="#0004ff"/><stop offset="0.289" stop-color="#0020ff"/><stop offset="0.302" stop-color="#0041ff"/><stop offset="0.314" stop-color="#008bff"/><stop offset="0.327" stop-color="#00ffff"/><stop offset="0.352" stop-color="#00ff39"/><stop offset="0.365" stop-color="#07ff00"/><stop offset="0.384" stop-color="#2cff00"/><stop offset="0.403" stop-color="#04ff00"/><stop offset="0.415" stop-color="#00ff3b"/><stop offset="0.440" stop-color="#00ffd9"/><stop offset="0.453" stop-color="#00faff"/><stop offset="0.472" stop-color="#00fffb"/><stop offset="0.509" stop-color="#00ffc4"/><stop offset="0.566" stop-color="#00ff9e"/><stop offset="0.654" stop-color="#00ff09"/><stop offset="0.698" stop-color="#02ff00"/><stop offset="0.748" stop-color="#00ff48"/><stop offset="0.811" stop-color="#00fffb"/><stop offset="0.849" stop-color="#0098ff"/><stop offset="0.881" stop-color="#006aff"/><stop offset="1.000" stop-color="#0050ff"/></linearGradient><linearGradient id="g70" x1="0" y1="0" x2="0" y2="1"><stop offset="0.000" stop-color="#000000"/><stop offset="0.138" stop-color="#000000"/><stop offset="0.208" stop-color="#0000eb"/><stop offset="0.220" stop-color="#0012ff"/><stop offset="0.252" stop-color="#005fff"/><stop offset="0.296" stop-color="#009eff"/><stop offset="0.314" stop-color="#00fffd"/><stop offset="0.346" stop-color="#00ff0d"/><stop offset="0.352" stop-color="#1aff00"/><stop offset="0.371" stop-color="#64ff00"/><stop offset="0.384" stop-color="#6cff00"/><stop offset="0.396" stop-color="#54ff00"/><stop offset="0.415" stop-color="#00ff00"/><stop offset="0.434" stop-color="#00ff51"/><stop offset="0.447" stop-color="#00ff60"/><stop offset="0.503" stop-color="#01ff00"/><stop offset="0.572" stop-color="#22ff00"/><stop offset="0.642" stop-color="#87ff00"/><stop offset="0.679" stop-color="#9fff00"/><stop offset="0.723" stop-color="#79ff00"/><stop offset="0.774" stop-color="#01ff00"/><stop offset="0.824" stop-color="#00ff85"/><stop offset="0.862" stop-color="#00ffbf"/><stop offset="1.000" stop-color="#00ffde"/></linearGradient><linearGradient id="g71" x1="0" y1="0" x2="0" y2="1"><stop offset="0.000" stop-color="#000000"/><stop offset="0.145" stop-color="#000000"/><stop offset="0.233" stop-color="#0006ff"/><stop offset="0.289" stop-color="#0068ff"/><stop offset="0.302" stop-color="#0096ff"/><stop offset="0.314" stop-color="#00f0ff"/><stop offset="0.340" stop-color="#00ff46"/><stop offset="0.352" stop-color="#08ff00"/><stop offset="0.365" stop-color="#3bff00"/><stop offset="0.377" stop-color="#4cff00"/><stop offset="0.390" stop-color="#3bff00"/><stop offset="0.403" stop-color="#0aff00"/><stop offset="0.434" stop-color="#00ff9c"/><stop offset="0.447" stop-color="#00ffb1"/><stop offset="0.503" stop-color="#00ff4d"/><stop offset="0.585" stop-color="#01ff00"/><stop offset="0.635" stop-color="#4dff00"/><stop offset="0.667" stop-color="#5eff00"/><stop offset="0.698" stop-color="#4dff00"/><stop offset="0.736" stop-color="#08ff00"/><stop offset="0.836" stop-color="#00fffa"/><stop offset="0.887" stop-color="#00d5ff"/><stop offset="1.000" stop-color="#00c7ff"/></linearGradient><linearGradient id="g72" x1="0" y1="0" x2="0" y2="1"><stop offset="0.000" stop-color="#000000"/><stop offset="0.145" stop-color="#000000"/><stop offset="0.226" stop-color="#0003ff"/><stop offset="0.289" stop-color="#0079ff"/><stop offset="0.302" stop-color="#00abff"/><stop offset="0.314" stop-color="#00fff8"/><stop offset="0.346" stop-color="#00ff0d"/><stop offset="0.365" stop-color="#44ff00"/><stop offset="0.384" stop-color="#4aff00"/><stop offset="0.403" stop-color="#09ff00"/><stop offset="0.428" stop-color="#00ff7e"/><stop offset="0.447" stop-color="#00ffa0"/><stop offset="0.503" stop-color="#00ff3a"/><stop offset="0.591" stop-color="#02ff00"/><stop offset="0.642" stop-color="#59ff00"/><stop offset="0.679" stop-color="#75ff00"/><stop offset="0.717" stop-color="#5cff00"/><stop offset="0.761" stop-color="#00ff01"/><stop offset="0.824" stop-color="#00ffb0"/><stop offset="0.862" stop-color="#00fff4"/><stop offset="1.000" stop-color="#00e1ff"/></linearGradient><linearGradient id="g73" x1="0" y1="0" x2="0" y2="1"><stop offset="0.000" stop-color="#000000"/><stop offset="0.126" stop-color="#000000"/><stop offset="0.201" stop-color="#000cff"/><stop offset="0.239" stop-color="#007fff"/><stop offset="0.289" stop-color="#00d0ff"/><stop offset="0.302" stop-color="#00fdff"/><stop offset="0.314" stop-color="#00ffb8"/><stop offset="0.340" stop-color="#02ff00"/><stop offset="0.358" stop-color="#68ff00"/><stop offset="0.371" stop-color="#85ff00"/><stop offset="0.390" stop-color="#75ff00"/><stop offset="0.421" stop-color="#00ff02"/><stop offset="0.434" stop-color="#00ff15"/><stop offset="0.447" stop-color="#00ff07"/><stop offset="0.503" stop-color="#74ff00"/><stop offset="0.579" stop-color="#90ff00"/><stop offset="0.642" stop-color="#e1ff00"/><stop offset="0.673" stop-color="#f4ff00"/><stop offset="0.698" stop-color="#ebff00"/><stop offset="0.730" stop-color="#bfff00"/><stop offset="0.805" stop-color="#00ff06"/><stop offset="0.836" stop-color="#00ff48"/><stop offset="0.868" stop-color="#00ff6c"/><stop offset="1.000" stop-color="#00ff82"/></linearGradient><linearGradient id="g74" x1="0" y1="0" x2="0" y2="1"><stop offset="0.000" stop-color="#000000"/><stop offset="0.126" stop-color="#000000"/><stop offset="0.132" stop-color="#000009"/><stop offset="0.201" stop-color="#0007ff"/><stop offset="0.239" stop-color="#007bff"/><stop offset="0.289" stop-color="#00c9ff"/><stop offset="0.302" stop-color="#00f4ff"/><stop offset="0.308" stop-color="#00ffea"/><stop offset="0.340" stop-color="#00ff09"/><stop offset="0.346" stop-color="#20ff00"/><stop offset="0.365" stop-color="#73ff00"/><stop offset="0.377" stop-color="#82ff00"/><stop offset="0.396" stop-color="#5fff00"/><stop offset="0.421" stop-color="#00ff04"/><stop offset="0.434" stop-color="#00ff18"/><stop offset="0.453" stop-color="#03ff00"/><stop offset="0.503" stop-color="#73ff00"/><stop offset="0.572" stop-color="#9bff00"/><stop offset="0.635" stop-color="#e2ff00"/><stop offset="0.667" stop-color="#f0ff00"/><stop offset="0.717" stop-color="#bfff00"/><stop offset="0.792" stop-color="#00ff06"/><stop offset="0.830" stop-color="#00ff56"/><stop offset="0.862" stop-color="#00ff77"/><stop offset="1.000" stop-color="#00ff8c"/></linearGradient><linearGradient id="g75" x1="0" y1="0" x2="0" y2="1"><stop offset="0.000" stop-color="#000000"/><stop offset="0.145" stop-color="#000000"/><stop offset="0.214" stop-color="#0000d9"/><stop offset="0.233" stop-color="#000cff"/><stop offset="0.296" stop-color="#007bff"/><stop offset="0.314" stop-color="#00e7ff"/><stop offset="0.321" stop-color="#00ffe5"/><stop offset="0.346" stop-color="#00ff27"/><stop offset="0.352" stop-color="#00ff03"/><stop offset="0.358" stop-color="#1bff00"/><stop offset="0.377" stop-color="#44ff00"/><stop offset="0.390" stop-color="#36ff00"/><stop offset="0.403" stop-color="#09ff00"/><stop offset="0.434" stop-color="#00ff92"/><stop offset="0.447" stop-color="#00ffa4"/><stop offset="0.503" stop-color="#00ff43"/><stop offset="0.591" stop-color="#03ff00"/><stop offset="0.642" stop-color="#58ff00"/><stop offset="0.679" stop-color="#70ff00"/><stop offset="0.717" stop-color="#54ff00"/><stop offset="0.755" stop-color="#04ff00"/><stop offset="0.824" stop-color="#00ffc1"/><stop offset="0.855" stop-color="#00fffe"/><stop offset="0.899" stop-color="#00daff"/><stop offset="1.000" stop-color="#00ccff"/></linearGradient><linearGradient id="g76" x1="0" y1="0" x2="0" y2="1"><stop offset="0.000" stop-color="#000000"/><stop offset="0.145" stop-color="#000000"/><stop offset="0.226" stop-color="#0001ff"/><stop offset="0.252" stop-color="#003cff"/><stop offset="0.296" stop-color="#0077ff"/><stop offset="0.308" stop-color="#00a9ff"/><stop offset="0.321" stop-color="#00fff9"/><stop offset="0.352" stop-color="#00ff11"/><stop offset="0.371" stop-color="#3cff00"/><stop offset="0.384" stop-color="#46ff00"/><stop offset="0.396" stop-color="#30ff00"/><stop offset="0.409" stop-color="#00ff02"/><stop offset="0.434" stop-color="#00ff7a"/><stop offset="0.447" stop-color="#00ff91"/><stop offset="0.503" stop-color="#00ff34"/><stop offset="0.572" stop-color="#01ff00"/><stop offset="0.635" stop-color="#62ff00"/><stop offset="0.673" stop-color="#7aff00"/><stop offset="0.711" stop-color="#5fff00"/><stop offset="0.755" stop-color="#00ff00"/><stop offset="0.818" stop-color="#00ffb6"/><stop offset="0.855" stop-color="#00fffc"/><stop offset="0.899" stop-color="#00e2ff"/><stop offset="1.000" stop-color="#00d5ff"/></linearGradient><linearGradient id="g77" x1="0" y1="0" x2="0" y2="1"><stop offset="0.000" stop-color="#000000"/><stop offset="0.145" stop-color="#000006"/><stop offset="0.220" stop-color="#0000fe"/><stop offset="0.252" stop-color="#004cff"/><stop offset="0.302" stop-color="#008cff"/><stop offset="0.321" stop-color="#00f2ff"/><stop offset="0.327" stop-color="#00ffdc"/><stop offset="0.346" stop-color="#00ff49"/><stop offset="0.358" stop-color="#06ff00"/><stop offset="0.371" stop-color="#3cff00"/><stop offset="0.384" stop-color="#51ff00"/><stop offset="0.396" stop-color="#45ff00"/><stop offset="0.415" stop-color="#00ff00"/><stop offset="0.434" stop-color="#00ff52"/><stop offset="0.447" stop-color="#00ff6a"/><stop offset="0.516" stop-color="#01ff00"/><stop offset="0.566" stop-color="#2dff00"/><stop offset="0.629" stop-color="#81ff00"/><stop offset="0.660" stop-color="#93ff00"/><stop offset="0.704" stop-color="#72ff00"/><stop offset="0.748" stop-color="#0eff00"/><stop offset="0.755" stop-color="#00ff04"/><stop offset="0.818" stop-color="#00ffb4"/><stop offset="0.849" stop-color="#00ffe7"/><stop offset="0.893" stop-color="#00ffff"/><stop offset="1.000" stop-color="#00f4ff"/></linearGradient><linearGradient id="g78" x1="0" y1="0" x2="0" y2="1"><stop offset="0.000" stop-color="#000000"/><stop offset="0.157" stop-color="#000000"/><stop offset="0.226" stop-color="#0000c7"/><stop offset="0.258" stop-color="#0004ff"/><stop offset="0.296" stop-color="#0028ff"/><stop offset="0.308" stop-color="#0044ff"/><stop offset="0.321" stop-color="#008bff"/><stop offset="0.333" stop-color="#00fcff"/><stop offset="0.340" stop-color="#00ffcd"/><stop offset="0.358" stop-color="#00ff42"/><stop offset="0.371" stop-color="#00ff06"/><stop offset="0.377" stop-color="#0eff00"/><stop offset="0.390" stop-color="#1bff00"/><stop offset="0.409" stop-color="#00ff0e"/><stop offset="0.440" stop-color="#00ffb4"/><stop offset="0.459" stop-color="#00ffe5"/><stop offset="0.566" stop-color="#00ff6f"/><stop offset="0.629" stop-color="#00ff03"/><stop offset="0.673" stop-color="#24ff00"/><stop offset="0.717" stop-color="#02ff00"/><stop offset="0.755" stop-color="#00ff4f"/><stop offset="0.811" stop-color="#00fcff"/><stop offset="0.843" stop-color="#0098ff"/><stop offset="0.874" stop-color="#0061ff"/><stop offset="1.000" stop-color="#0040ff"/></linearGradient><linearGradient id="g79" x1="0" y1="0" x2="0" y2="1"><stop offset="0.000" stop-color="#000000"/><stop offset="0.170" stop-color="#000000"/><stop offset="0.245" stop-color="#0000b6"/><stop offset="0.308" stop-color="#0000f6"/><stop offset="0.321" stop-color="#0033ff"/><stop offset="0.340" stop-color="#00dfff"/><stop offset="0.346" stop-color="#00ffe4"/><stop offset="0.358" stop-color="#00ff84"/><stop offset="0.371" stop-color="#00ff3e"/><stop offset="0.390" stop-color="#00ff0f"/><stop offset="0.403" stop-color="#00ff1a"/><stop offset="0.415" stop-color="#00ff44"/><stop offset="0.447" stop-color="#00f9ff"/><stop offset="0.459" stop-color="#00b9ff"/><stop offset="0.472" stop-color="#00abff"/><stop offset="0.528" stop-color="#00fffa"/><stop offset="0.629" stop-color="#00ff51"/><stop offset="0.667" stop-color="#00ff35"/><stop offset="0.717" stop-color="#00ff5f"/><stop offset="0.774" stop-color="#00fff6"/><stop offset="0.780" stop-color="#00f0ff"/><stop offset="0.818" stop-color="#0055ff"/><stop offset="0.843" stop-color="#0002ff"/><stop offset="0.893" stop-color="#0000c2"/><stop offset="1.000" stop-color="#0000b3"/></linearGradient><linearGradient id="g80" x1="0" y1="0" x2="0" y2="1"><stop offset="0.000" stop-color="#000000"/><stop offset="0.145" stop-color="#000000"/><stop offset="0.226" stop-color="#0000f6"/><stop offset="0.264" stop-color="#0042ff"/><stop offset="0.314" stop-color="#006cff"/><stop offset="0.321" stop-color="#0085ff"/><stop offset="0.333" stop-color="#00dcff"/><stop offset="0.340" stop-color="#00ffeb"/><stop offset="0.365" stop-color="#00ff2a"/><stop offset="0.371" stop-color="#00ff07"/><stop offset="0.377" stop-color="#16ff00"/><stop offset="0.396" stop-color="#3eff00"/><stop offset="0.409" stop-color="#2fff00"/><stop offset="0.421" stop-color="#06ff00"/><stop offset="0.447" stop-color="#00ff60"/><stop offset="0.459" stop-color="#00ff74"/><stop offset="0.553" stop-color="#00ff04"/><stop offset="0.629" stop-color="#63ff00"/><stop offset="0.660" stop-color="#72ff00"/><stop offset="0.698" stop-color="#56ff00"/><stop offset="0.736" stop-color="#04ff00"/><stop offset="0.818" stop-color="#00ffff"/><stop offset="0.843" stop-color="#00bfff"/><stop offset="0.874" stop-color="#0097ff"/><stop offset="1.000" stop-color="#0080ff"/></linearGradient><linearGradient id="g81" x1="0" y1="0" x2="0" y2="1"><stop offset="0.000" stop-color="#000000"/><stop offset="0.138" stop-color="#000000"/><stop offset="0.214" stop-color="#0005ff"/><stop offset="0.258" stop-color="#0070ff"/><stop offset="0.314" stop-color="#0096ff"/><stop offset="0.327" stop-color="#00c6ff"/><stop offset="0.333" stop-color="#00f1ff"/><stop offset="0.340" stop-color="#00ffdd"/><stop offset="0.365" stop-color="#00ff1a"/><stop offset="0.371" stop-color="#0dff00"/><stop offset="0.384" stop-color="#47ff00"/><stop offset="0.396" stop-color="#61ff00"/><stop offset="0.415" stop-color="#50ff00"/><stop offset="0.440" stop-color="#00ff00"/><stop offset="0.459" stop-color="#00ff19"/><stop offset="0.478" stop-color="#00ff04"/><stop offset="0.516" stop-color="#2dff00"/><stop offset="0.572" stop-color="#4dff00"/><stop offset="0.604" stop-color="#78ff00"/><stop offset="0.654" stop-color="#b9ff00"/><stop offset="0.692" stop-color="#b8ff00"/><stop offset="0.730" stop-color="#81ff00"/><stop offset="0.774" stop-color="#04ff00"/><stop offset="0.830" stop-color="#00ffb5"/><stop offset="0.868" stop-color="#00fffe"/><stop offset="0.906" stop-color="#00e3ff"/><stop offset="1.000" stop-color="#00d6ff"/></linearGradient><linearGradient id="g82" x1="0" y1="0" x2="0" y2="1"><stop offset="0.000" stop-color="#000000"/><stop offset="0.145" stop-color="#000000"/><stop offset="0.226" stop-color="#0000f7"/><stop offset="0.264" stop-color="#0044ff"/><stop offset="0.314" stop-color="#005eff"/><stop offset="0.327" stop-color="#008cff"/><stop offset="0.340" stop-color="#00ebff"/><stop offset="0.346" stop-color="#00ffdd"/><stop offset="0.365" stop-color="#00ff47"/><stop offset="0.377" stop-color="#02ff00"/><stop offset="0.390" stop-color="#30ff00"/><stop offset="0.403" stop-color="#3eff00"/><stop offset="0.415" stop-color="#2cff00"/><stop offset="0.428" stop-color="#01ff00"/><stop offset="0.453" stop-color="#00ff5b"/><stop offset="0.465" stop-color="#00ff68"/><stop offset="0.566" stop-color="#01ff00"/><stop offset="0.629" stop-color="#61ff00"/><stop offset="0.667" stop-color="#78ff00"/><stop offset="0.704" stop-color="#5cff00"/><stop offset="0.742" stop-color="#0aff00"/><stop offset="0.761" stop-color="#00ff2f"/><stop offset="0.818" stop-color="#00fff6"/><stop offset="0.824" stop-color="#00f2ff"/><stop offset="0.849" stop-color="#00a5ff"/><stop offset="0.881" stop-color="#0074ff"/><stop offset="1.000" stop-color="#0059ff"/></linearGradient><linearGradient id="g83" x1="0" y1="0" x2="0" y2="1"><stop offset="0.000" stop-color="#000000"/><stop offset="0.164" stop-color="#000000"/><stop offset="0.245" stop-color="#0000dc"/><stop offset="0.270" stop-color="#0000fc"/><stop offset="0.308" stop-color="#000aff"/><stop offset="0.327" stop-color="#0043ff"/><stop offset="0.346" stop-color="#00e6ff"/><stop offset="0.352" stop-color="#00ffde"/><stop offset="0.365" stop-color="#00ff7b"/><stop offset="0.377" stop-color="#00ff30"/><stop offset="0.390" stop-color="#00ff04"/><stop offset="0.396" stop-color="#06ff00"/><stop offset="0.415" stop-color="#00ff0c"/><stop offset="0.453" stop-color="#00ffba"/><stop offset="0.472" stop-color="#00ffe1"/><stop offset="0.623" stop-color="#00ff00"/><stop offset="0.654" stop-color="#10ff00"/><stop offset="0.698" stop-color="#00ff11"/><stop offset="0.736" stop-color="#00ff65"/><stop offset="0.780" stop-color="#00fffe"/><stop offset="0.818" stop-color="#0057ff"/><stop offset="0.843" stop-color="#0001ff"/><stop offset="0.893" stop-color="#0000c4"/><stop offset="1.000" stop-color="#0000b6"/></linearGradient><linearGradient id="g84" x1="0" y1="0" x2="0" y2="1"><stop offset="0.000" stop-color="#000000"/><stop offset="0.164" stop-color="#000005"/><stop offset="0.245" stop-color="#0000e4"/><stop offset="0.264" stop-color="#0000fe"/><stop offset="0.308" stop-color="#0014ff"/><stop offset="0.327" stop-color="#0050ff"/><stop offset="0.346" stop-color="#00f4ff"/><stop offset="0.352" stop-color="#00ffd3"/><stop offset="0.371" stop-color="#00ff49"/><stop offset="0.390" stop-color="#02ff00"/><stop offset="0.415" stop-color="#00ff0a"/><stop offset="0.453" stop-color="#00ffb7"/><stop offset="0.472" stop-color="#00ffda"/><stop offset="0.566" stop-color="#00ff6e"/><stop offset="0.623" stop-color="#04ff00"/><stop offset="0.660" stop-color="#20ff00"/><stop offset="0.711" stop-color="#00ff04"/><stop offset="0.748" stop-color="#00ff58"/><stop offset="0.792" stop-color="#00fff3"/><stop offset="0.799" stop-color="#00f0ff"/><stop offset="0.830" stop-color="#0060ff"/><stop offset="0.855" stop-color="#0006ff"/><stop offset="0.899" stop-color="#0000c7"/><stop offset="1.000" stop-color="#0000b5"/></linearGradient><linearGradient id="g85" x1="0" y1="0" x2="0" y2="1"><stop offset="0.000" stop-color="#000000"/><stop offset="0.164" stop-color="#000002"/><stop offset="0.245" stop-color="#0000e0"/><stop offset="0.270" stop-color="#0001ff"/><stop offset="0.302" stop-color="#000eff"/><stop offset="0.321" stop-color="#0037ff"/><stop offset="0.333" stop-color="#008cff"/><stop offset="0.346" stop-color="#00fffa"/><stop offset="0.371" stop-color="#00ff42"/><stop offset="0.390" stop-color="#02ff00"/><stop offset="0.415" stop-color="#00ff14"/><stop offset="0.453" stop-color="#00ffc6"/><stop offset="0.465" stop-color="#00ffe1"/><stop offset="0.560" stop-color="#00ff6c"/><stop offset="0.616" stop-color="#0aff00"/><stop offset="0.635" stop-color="#37ff00"/><stop offset="0.648" stop-color="#3eff00"/><stop offset="0.704" stop-color="#00ff07"/><stop offset="0.742" stop-color="#00ff5a"/><stop offset="0.786" stop-color="#00fff4"/><stop offset="0.792" stop-color="#00eeff"/><stop offset="0.824" stop-color="#005dff"/><stop offset="0.849" stop-color="#0001ff"/><stop offset="0.893" stop-color="#0000c1"/><stop offset="1.000" stop-color="#0000af"/></linearGradient><linearGradient id="g86" x1="0" y1="0" x2="0" y2="1"><stop offset="0.000" stop-color="#000000"/><stop offset="0.151" stop-color="#000000"/><stop offset="0.239" stop-color="#0000f8"/><stop offset="0.314" stop-color="#0053ff"/><stop offset="0.327" stop-color="#0095ff"/><stop offset="0.340" stop-color="#00fffb"/><stop offset="0.365" stop-color="#00ff3d"/><stop offset="0.377" stop-color="#00ff00"/><stop offset="0.384" stop-color="#14ff00"/><stop offset="0.396" stop-color="#22ff00"/><stop offset="0.415" stop-color="#00ff04"/><stop offset="0.447" stop-color="#00ff8a"/><stop offset="0.459" stop-color="#00ffa0"/><stop offset="0.572" stop-color="#00ff03"/><stop offset="0.597" stop-color="#31ff00"/><stop offset="0.629" stop-color="#9eff00"/><stop offset="0.642" stop-color="#abff00"/><stop offset="0.717" stop-color="#0aff00"/><stop offset="0.748" stop-color="#00ff50"/><stop offset="0.792" stop-color="#00fff5"/><stop offset="0.836" stop-color="#005aff"/><stop offset="0.868" stop-color="#0019ff"/><stop offset="0.906" stop-color="#0001ff"/><stop offset="1.000" stop-color="#0000f6"/></linearGradient><linearGradient id="g87" x1="0" y1="0" x2="0" y2="1"><stop offset="0.000" stop-color="#000000"/><stop offset="0.132" stop-color="#000000"/><stop offset="0.208" stop-color="#0000ff"/><stop offset="0.252" stop-color="#0078ff"/><stop offset="0.308" stop-color="#00acff"/><stop offset="0.327" stop-color="#00feff"/><stop offset="0.365" stop-color="#03ff00"/><stop offset="0.377" stop-color="#3aff00"/><stop offset="0.396" stop-color="#52ff00"/><stop offset="0.434" stop-color="#00ff06"/><stop offset="0.447" stop-color="#00ff11"/><stop offset="0.459" stop-color="#00ff04"/><stop offset="0.503" stop-color="#51ff00"/><stop offset="0.579" stop-color="#97ff00"/><stop offset="0.610" stop-color="#fffc00"/><stop offset="0.629" stop-color="#ffcc00"/><stop offset="0.660" stop-color="#fffe00"/><stop offset="0.704" stop-color="#ceff00"/><stop offset="0.736" stop-color="#8bff00"/><stop offset="0.780" stop-color="#00ff0a"/><stop offset="0.830" stop-color="#00ffbb"/><stop offset="0.862" stop-color="#00feff"/><stop offset="0.899" stop-color="#00dbff"/><stop offset="1.000" stop-color="#00ccff"/></linearGradient><linearGradient id="g88" x1="0" y1="0" x2="0" y2="1"><stop offset="0.000" stop-color="#000000"/><stop offset="0.132" stop-color="#000000"/><stop offset="0.208" stop-color="#000aff"/><stop offset="0.245" stop-color="#0076ff"/><stop offset="0.302" stop-color="#00b0ff"/><stop offset="0.327" stop-color="#00fff1"/><stop offset="0.365" stop-color="#00ff05"/><stop offset="0.377" stop-color="#27ff00"/><stop offset="0.390" stop-color="#37ff00"/><stop offset="0.421" stop-color="#02ff00"/><stop offset="0.447" stop-color="#00ff04"/><stop offset="0.497" stop-color="#71ff00"/><stop offset="0.560" stop-color="#bdff00"/><stop offset="0.585" stop-color="#faff00"/><stop offset="0.591" stop-color="#ffea00"/><stop offset="0.604" stop-color="#ffba00"/><stop offset="0.616" stop-color="#ffa400"/><stop offset="0.692" stop-color="#f9ff00"/><stop offset="0.723" stop-color="#b5ff00"/><stop offset="0.774" stop-color="#05ff00"/><stop offset="0.780" stop-color="#00ff13"/><stop offset="0.818" stop-color="#00ff94"/><stop offset="0.855" stop-color="#00ffdb"/><stop offset="0.893" stop-color="#00fff0"/><stop offset="1.000" stop-color="#00fff9"/></linearGradient><linearGradient id="g89" x1="0" y1="0" x2="0" y2="1"><stop offset="0.000" stop-color="#000000"/><stop offset="0.145" stop-color="#000000"/><stop offset="0.214" stop-color="#0000dc"/><stop offset="0.233" stop-color="#0010ff"/><stop offset="0.258" stop-color="#0044ff"/><stop offset="0.308" stop-color="#007cff"/><stop offset="0.333" stop-color="#00fff6"/><stop offset="0.358" stop-color="#00ff5e"/><stop offset="0.377" stop-color="#00ff24"/><stop offset="0.396" stop-color="#00ff29"/><stop offset="0.428" stop-color="#00ff78"/><stop offset="0.440" stop-color="#00ff7d"/><stop offset="0.491" stop-color="#00ff02"/><stop offset="0.560" stop-color="#88ff00"/><stop offset="0.591" stop-color="#fff700"/><stop offset="0.610" stop-color="#ffc400"/><stop offset="0.635" stop-color="#fffc00"/><stop offset="0.698" stop-color="#8bff00"/><stop offset="0.742" stop-color="#00ff05"/><stop offset="0.786" stop-color="#00ffb0"/><stop offset="0.811" stop-color="#00fffe"/><stop offset="0.836" stop-color="#00caff"/><stop offset="0.862" stop-color="#00b3ff"/><stop offset="1.000" stop-color="#00a1ff"/></linearGradient><linearGradient id="g90" x1="0" y1="0" x2="0" y2="1"><stop offset="0.000" stop-color="#000000"/><stop offset="0.157" stop-color="#000006"/><stop offset="0.214" stop-color="#0000b6"/><stop offset="0.245" stop-color="#0002ff"/><stop offset="0.308" stop-color="#0058ff"/><stop offset="0.321" stop-color="#0091ff"/><stop offset="0.333" stop-color="#00e6ff"/><stop offset="0.340" stop-color="#00ffed"/><stop offset="0.358" stop-color="#00ff8a"/><stop offset="0.371" stop-color="#00ff65"/><stop offset="0.390" stop-color="#00ff63"/><stop offset="0.421" stop-color="#00ffbb"/><stop offset="0.440" stop-color="#00ffc8"/><stop offset="0.491" stop-color="#00ff48"/><stop offset="0.528" stop-color="#03ff00"/><stop offset="0.566" stop-color="#59ff00"/><stop offset="0.597" stop-color="#f8ff00"/><stop offset="0.604" stop-color="#ffe800"/><stop offset="0.616" stop-color="#ffce00"/><stop offset="0.635" stop-color="#fffb00"/><stop offset="0.654" stop-color="#c8ff00"/><stop offset="0.698" stop-color="#7dff00"/><stop offset="0.742" stop-color="#00ff0c"/><stop offset="0.805" stop-color="#00feff"/><stop offset="0.830" stop-color="#00b2ff"/><stop offset="0.862" stop-color="#0089ff"/><stop offset="1.000" stop-color="#0074ff"/></linearGradient><linearGradient id="g91" x1="0" y1="0" x2="0" y2="1"><stop offset="0.000" stop-color="#000000"/><stop offset="0.157" stop-color="#000000"/><stop offset="0.226" stop-color="#0000bf"/><stop offset="0.264" stop-color="#0004ff"/><stop offset="0.308" stop-color="#003eff"/><stop offset="0.321" stop-color="#0076ff"/><stop offset="0.340" stop-color="#00f2ff"/><stop offset="0.346" stop-color="#00ffe8"/><stop offset="0.365" stop-color="#00ff9f"/><stop offset="0.377" stop-color="#00ff90"/><stop offset="0.390" stop-color="#00ff9b"/><stop offset="0.421" stop-color="#00fff3"/><stop offset="0.434" stop-color="#00fffb"/><stop offset="0.528" stop-color="#02ff00"/><stop offset="0.579" stop-color="#7dff00"/><stop offset="0.604" stop-color="#eeff00"/><stop offset="0.610" stop-color="#ffef00"/><stop offset="0.623" stop-color="#ffc200"/><stop offset="0.629" stop-color="#ffbe00"/><stop offset="0.648" stop-color="#fff900"/><stop offset="0.673" stop-color="#99ff00"/><stop offset="0.723" stop-color="#00ff02"/><stop offset="0.786" stop-color="#00ffff"/><stop offset="0.811" stop-color="#00a9ff"/><stop offset="0.843" stop-color="#0079ff"/><stop offset="1.000" stop-color="#0063ff"/></linearGradient><linearGradient id="g92" x1="0" y1="0" x2="0" y2="1"><stop offset="0.000" stop-color="#000000"/><stop offset="0.170" stop-color="#000000"/><stop offset="0.245" stop-color="#0000b3"/><stop offset="0.308" stop-color="#0001ff"/><stop offset="0.321" stop-color="#0038ff"/><stop offset="0.352" stop-color="#00f4ff"/><stop offset="0.358" stop-color="#00fff2"/><stop offset="0.377" stop-color="#00ffd8"/><stop offset="0.396" stop-color="#00fff9"/><stop offset="0.428" stop-color="#009dff"/><stop offset="0.440" stop-color="#00abff"/><stop offset="0.459" stop-color="#00f4ff"/><stop offset="0.541" stop-color="#00ff00"/><stop offset="0.591" stop-color="#74ff00"/><stop offset="0.623" stop-color="#fff700"/><stop offset="0.635" stop-color="#ffcf00"/><stop offset="0.642" stop-color="#ffd100"/><stop offset="0.654" stop-color="#fdff00"/><stop offset="0.686" stop-color="#2aff00"/><stop offset="0.698" stop-color="#00ff10"/><stop offset="0.755" stop-color="#00feff"/><stop offset="0.792" stop-color="#005fff"/><stop offset="0.824" stop-color="#0027ff"/><stop offset="1.000" stop-color="#0011ff"/></linearGradient><linearGradient id="g93" x1="0" y1="0" x2="0" y2="1"><stop offset="0.000" stop-color="#000000"/><stop offset="0.195" stop-color="#000000"/><stop offset="0.252" stop-color="#000054"/><stop offset="0.321" stop-color="#000072"/><stop offset="0.371" stop-color="#0000e7"/><stop offset="0.409" stop-color="#0000dd"/><stop offset="0.428" stop-color="#0000fc"/><stop offset="0.484" stop-color="#00f9ff"/><stop offset="0.491" stop-color="#00ffee"/><stop offset="0.547" stop-color="#00ff38"/><stop offset="0.572" stop-color="#0bff00"/><stop offset="0.597" stop-color="#58ff00"/><stop offset="0.623" stop-color="#f5ff00"/><stop offset="0.629" stop-color="#ffe700"/><stop offset="0.642" stop-color="#ffce00"/><stop offset="0.654" stop-color="#fff700"/><stop offset="0.692" stop-color="#00ff04"/><stop offset="0.748" stop-color="#00fff4"/><stop offset="0.755" stop-color="#00eaff"/><stop offset="0.786" stop-color="#0050ff"/><stop offset="0.811" stop-color="#0005ff"/><stop offset="0.855" stop-color="#0000e3"/><stop offset="1.000" stop-color="#0000da"/></linearGradient><linearGradient id="g94" x1="0" y1="0" x2="0" y2="1"><stop offset="0.000" stop-color="#000000"/><stop offset="0.157" stop-color="#000000"/><stop offset="0.252" stop-color="#000056"/><stop offset="0.365" stop-color="#00005a"/><stop offset="0.403" stop-color="#00007f"/><stop offset="0.434" stop-color="#0000eb"/><stop offset="0.440" stop-color="#0008ff"/><stop offset="0.491" stop-color="#00feff"/><stop offset="0.497" stop-color="#00ffe8"/><stop offset="0.541" stop-color="#00ff4f"/><stop offset="0.572" stop-color="#05ff00"/><stop offset="0.591" stop-color="#52ff00"/><stop offset="0.616" stop-color="#fff800"/><stop offset="0.629" stop-color="#ffc800"/><stop offset="0.635" stop-color="#ffca00"/><stop offset="0.648" stop-color="#faff00"/><stop offset="0.673" stop-color="#20ff00"/><stop offset="0.679" stop-color="#00ff0e"/><stop offset="0.730" stop-color="#00fff7"/><stop offset="0.736" stop-color="#00e5ff"/><stop offset="0.761" stop-color="#0058ff"/><stop offset="0.780" stop-color="#0004ff"/><stop offset="0.805" stop-color="#0000cc"/><stop offset="0.830" stop-color="#0000ba"/><stop offset="1.000" stop-color="#0000af"/></linearGradient><linearGradient id="g95" x1="0" y1="0" x2="0" y2="1"><stop offset="0.000" stop-color="#00008e"/><stop offset="0.119" stop-color="#00009a"/><stop offset="0.258" stop-color="#0000e1"/><stop offset="0.358" stop-color="#0000d5"/><stop offset="0.390" stop-color="#0000f6"/><stop offset="0.396" stop-color="#0005ff"/><stop offset="0.415" stop-color="#0046ff"/><stop offset="0.453" stop-color="#00f1ff"/><stop offset="0.459" stop-color="#00fff1"/><stop offset="0.522" stop-color="#00ff08"/><stop offset="0.572" stop-color="#8eff00"/><stop offset="0.591" stop-color="#f5ff00"/><stop offset="0.597" stop-color="#ffde00"/><stop offset="0.610" stop-color="#ff9e00"/><stop offset="0.616" stop-color="#ff9200"/><stop offset="0.629" stop-color="#ffaa00"/><stop offset="0.642" stop-color="#fffb00"/><stop offset="0.667" stop-color="#5dff00"/><stop offset="0.692" stop-color="#00ff09"/><stop offset="0.742" stop-color="#00fff2"/><stop offset="0.748" stop-color="#00ecff"/><stop offset="0.774" stop-color="#007fff"/><stop offset="0.805" stop-color="#0044ff"/><stop offset="1.000" stop-color="#0032ff"/></linearGradient><linearGradient id="g96" x1="0" y1="0" x2="0" y2="1"><stop offset="0.000" stop-color="#00008e"/><stop offset="0.113" stop-color="#00009f"/><stop offset="0.226" stop-color="#0000fe"/><stop offset="0.277" stop-color="#0016ff"/><stop offset="0.346" stop-color="#0006ff"/><stop offset="0.377" stop-color="#003eff"/><stop offset="0.415" stop-color="#00eeff"/><stop offset="0.421" stop-color="#00fff1"/><stop offset="0.459" stop-color="#00ff50"/><stop offset="0.484" stop-color="#0aff00"/><stop offset="0.560" stop-color="#fbff00"/><stop offset="0.566" stop-color="#ffea00"/><stop offset="0.591" stop-color="#ff6d00"/><stop offset="0.610" stop-color="#ff4800"/><stop offset="0.629" stop-color="#ff6600"/><stop offset="0.679" stop-color="#faff00"/><stop offset="0.704" stop-color="#a6ff00"/><stop offset="0.742" stop-color="#00ff02"/><stop offset="0.780" stop-color="#00ff90"/><stop offset="0.811" stop-color="#00ffc5"/><stop offset="1.000" stop-color="#00ffd9"/></linearGradient><linearGradient id="g97" x1="0" y1="0" x2="0" y2="1"><stop offset="0.000" stop-color="#000000"/><stop offset="0.138" stop-color="#000001"/><stop offset="0.214" stop-color="#000067"/><stop offset="0.264" stop-color="#00008b"/><stop offset="0.352" stop-color="#000074"/><stop offset="0.371" stop-color="#00008d"/><stop offset="0.403" stop-color="#000cff"/><stop offset="0.440" stop-color="#00ebff"/><stop offset="0.447" stop-color="#00fff2"/><stop offset="0.484" stop-color="#00ff53"/><stop offset="0.509" stop-color="#0aff00"/><stop offset="0.572" stop-color="#eaff00"/><stop offset="0.579" stop-color="#ffef00"/><stop offset="0.597" stop-color="#ff7700"/><stop offset="0.610" stop-color="#ff5e00"/><stop offset="0.629" stop-color="#ff8200"/><stop offset="0.648" stop-color="#fff800"/><stop offset="0.717" stop-color="#00ff01"/><stop offset="0.761" stop-color="#00ffc5"/><stop offset="0.780" stop-color="#00fbff"/><stop offset="0.799" stop-color="#00d0ff"/><stop offset="0.824" stop-color="#00bbff"/><stop offset="1.000" stop-color="#00afff"/></linearGradient><linearGradient id="g98" x1="0" y1="0" x2="0" y2="1"><stop offset="0.000" stop-color="#000000"/><stop offset="0.233" stop-color="#000000"/><stop offset="0.277" stop-color="#000015"/><stop offset="0.377" stop-color="#000000"/><stop offset="0.409" stop-color="#00006e"/><stop offset="0.434" stop-color="#0000f6"/><stop offset="0.478" stop-color="#00feff"/><stop offset="0.484" stop-color="#00ffe3"/><stop offset="0.522" stop-color="#00ff4b"/><stop offset="0.547" stop-color="#06ff00"/><stop offset="0.572" stop-color="#54ff00"/><stop offset="0.597" stop-color="#fff800"/><stop offset="0.610" stop-color="#ff9800"/><stop offset="0.623" stop-color="#ff7800"/><stop offset="0.635" stop-color="#ff9c00"/><stop offset="0.648" stop-color="#f9ff00"/><stop offset="0.667" stop-color="#47ff00"/><stop offset="0.679" stop-color="#00ff0a"/><stop offset="0.730" stop-color="#00ffec"/><stop offset="0.736" stop-color="#00f1ff"/><stop offset="0.767" stop-color="#004fff"/><stop offset="0.792" stop-color="#0004ff"/><stop offset="0.830" stop-color="#0000e9"/><stop offset="1.000" stop-color="#0000e2"/></linearGradient><linearGradient id="g99" x1="0" y1="0" x2="0" y2="1"><stop offset="0.000" stop-color="#000000"/><stop offset="0.396" stop-color="#000000"/><stop offset="0.428" stop-color="#000077"/><stop offset="0.453" stop-color="#0000f3"/><stop offset="0.503" stop-color="#00fcff"/><stop offset="0.509" stop-color="#00ffe8"/><stop offset="0.541" stop-color="#00ff70"/><stop offset="0.579" stop-color="#05ff00"/><stop offset="0.591" stop-color="#48ff00"/><stop offset="0.610" stop-color="#f7ff00"/><stop offset="0.616" stop-color="#ffca00"/><stop offset="0.629" stop-color="#ff7d00"/><stop offset="0.642" stop-color="#ff7c00"/><stop offset="0.648" stop-color="#ff9800"/><stop offset="0.660" stop-color="#f6ff00"/><stop offset="0.679" stop-color="#29ff00"/><stop offset="0.686" stop-color="#00ff0d"/><stop offset="0.698" stop-color="#00ff55"/><stop offset="0.736" stop-color="#00fffd"/><stop offset="0.774" stop-color="#002fff"/><stop offset="0.786" stop-color="#0000f8"/><stop offset="0.811" stop-color="#0000be"/><stop offset="0.836" stop-color="#0000a9"/><stop offset="1.000" stop-color="#00009d"/></linearGradient><linearGradient id="g100" x1="0" y1="0" x2="0" y2="1"><stop offset="0.000" stop-color="#000000"/><stop offset="0.396" stop-color="#000000"/><stop offset="0.428" stop-color="#00007d"/><stop offset="0.453" stop-color="#0003ff"/><stop offset="0.497" stop-color="#00f7ff"/><stop offset="0.503" stop-color="#00ffeb"/><stop offset="0.547" stop-color="#00ff47"/><stop offset="0.579" stop-color="#0bff00"/><stop offset="0.597" stop-color="#5eff00"/><stop offset="0.616" stop-color="#fff200"/><stop offset="0.629" stop-color="#ff8700"/><stop offset="0.642" stop-color="#ff6b00"/><stop offset="0.654" stop-color="#ff9000"/><stop offset="0.667" stop-color="#f4ff00"/><stop offset="0.686" stop-color="#10ff00"/><stop offset="0.704" stop-color="#00ff83"/><stop offset="0.730" stop-color="#00fffd"/><stop offset="0.767" stop-color="#002dff"/><stop offset="0.780" stop-color="#0000f5"/><stop offset="0.805" stop-color="#0000ba"/><stop offset="0.830" stop-color="#0000a6"/><stop offset="1.000" stop-color="#00009a"/></linearGradient><linearGradient id="g101" x1="0" y1="0" x2="0" y2="1"><stop offset="0.000" stop-color="#000000"/><stop offset="0.220" stop-color="#000000"/><stop offset="0.277" stop-color="#000025"/><stop offset="0.340" stop-color="#000000"/><stop offset="0.365" stop-color="#000003"/><stop offset="0.396" stop-color="#00005a"/><stop offset="0.428" stop-color="#0000ff"/><stop offset="0.465" stop-color="#00ebff"/><stop offset="0.472" stop-color="#00fff2"/><stop offset="0.528" stop-color="#00ff0b"/><stop offset="0.585" stop-color="#91ff00"/><stop offset="0.604" stop-color="#fffd00"/><stop offset="0.616" stop-color="#ff8e00"/><stop offset="0.623" stop-color="#ff6c00"/><stop offset="0.635" stop-color="#ff5300"/><stop offset="0.648" stop-color="#ff6f00"/><stop offset="0.660" stop-color="#ffd600"/><stop offset="0.667" stop-color="#e1ff00"/><stop offset="0.679" stop-color="#5aff00"/><stop offset="0.692" stop-color="#00ff09"/><stop offset="0.742" stop-color="#00feff"/><stop offset="0.774" stop-color="#0068ff"/><stop offset="0.805" stop-color="#0025ff"/><stop offset="1.000" stop-color="#0010ff"/></linearGradient><linearGradient id="g102" x1="0" y1="0" x2="0" y2="1"><stop offset="0.000" stop-color="#000000"/><stop offset="0.226" stop-color="#000000"/><stop offset="0.277" stop-color="#00001c"/><stop offset="0.327" stop-color="#000000"/><stop offset="0.371" stop-color="#000000"/><stop offset="0.403" stop-color="#00005b"/><stop offset="0.434" stop-color="#0000f6"/><stop offset="0.484" stop-color="#00fff8"/><stop offset="0.528" stop-color="#00ff4a"/><stop offset="0.553" stop-color="#0cff00"/><stop offset="0.572" stop-color="#5bff00"/><stop offset="0.591" stop-color="#f9ff00"/><stop offset="0.597" stop-color="#ffc100"/><stop offset="0.604" stop-color="#ff8500"/><stop offset="0.610" stop-color="#ff6300"/><stop offset="0.623" stop-color="#ff4800"/><stop offset="0.629" stop-color="#ff4f00"/><stop offset="0.642" stop-color="#ff8300"/><stop offset="0.654" stop-color="#fbff00"/><stop offset="0.673" stop-color="#5eff00"/><stop offset="0.698" stop-color="#00ff0c"/><stop offset="0.755" stop-color="#00f6ff"/><stop offset="0.786" stop-color="#005eff"/><stop offset="0.818" stop-color="#0015ff"/><stop offset="0.855" stop-color="#0002ff"/><stop offset="1.000" stop-color="#0000f9"/></linearGradient><linearGradient id="g103" x1="0" y1="0" x2="0" y2="1"><stop offset="0.000" stop-color="#000000"/><stop offset="0.403" stop-color="#000002"/><stop offset="0.434" stop-color="#000084"/><stop offset="0.453" stop-color="#0000e9"/><stop offset="0.459" stop-color="#000cff"/><stop offset="0.503" stop-color="#00fffd"/><stop offset="0.547" stop-color="#00ff50"/><stop offset="0.560" stop-color="#00ff0e"/><stop offset="0.566" stop-color="#27ff00"/><stop offset="0.585" stop-color="#ffff00"/><stop offset="0.591" stop-color="#ffb800"/><stop offset="0.597" stop-color="#ff8100"/><stop offset="0.604" stop-color="#ff6800"/><stop offset="0.616" stop-color="#ff6200"/><stop offset="0.623" stop-color="#ff7400"/><stop offset="0.635" stop-color="#ffdd00"/><stop offset="0.642" stop-color="#daff00"/><stop offset="0.654" stop-color="#51ff00"/><stop offset="0.660" stop-color="#1cff00"/><stop offset="0.667" stop-color="#00ff0b"/><stop offset="0.723" stop-color="#00ffef"/><stop offset="0.730" stop-color="#00eeff"/><stop offset="0.761" stop-color="#0037ff"/><stop offset="0.774" stop-color="#0000f7"/><stop offset="0.799" stop-color="#0000ac"/><stop offset="0.824" stop-color="#00008e"/><stop offset="1.000" stop-color="#00007f"/></linearGradient><linearGradient id="g104" x1="0" y1="0" x2="0" y2="1"><stop offset="0.000" stop-color="#000000"/><stop offset="0.239" stop-color="#000000"/><stop offset="0.277" stop-color="#000010"/><stop offset="0.377" stop-color="#000000"/><stop offset="0.409" stop-color="#00006e"/><stop offset="0.434" stop-color="#0000f9"/><stop offset="0.478" stop-color="#00fff9"/><stop offset="0.509" stop-color="#00ff6f"/><stop offset="0.541" stop-color="#01ff00"/><stop offset="0.560" stop-color="#4fff00"/><stop offset="0.579" stop-color="#e8ff00"/><stop offset="0.585" stop-color="#ffd800"/><stop offset="0.597" stop-color="#ff7600"/><stop offset="0.610" stop-color="#ff5f00"/><stop offset="0.623" stop-color="#ff7b00"/><stop offset="0.635" stop-color="#ffe400"/><stop offset="0.642" stop-color="#dcff00"/><stop offset="0.660" stop-color="#4aff00"/><stop offset="0.679" stop-color="#00ff05"/><stop offset="0.736" stop-color="#00fffe"/><stop offset="0.774" stop-color="#003fff"/><stop offset="0.799" stop-color="#0000fd"/><stop offset="0.836" stop-color="#0000e9"/><stop offset="1.000" stop-color="#0000e2"/></linearGradient><linearGradient id="g105" x1="0" y1="0" x2="0" y2="1"><stop offset="0.000" stop-color="#000000"/><stop offset="0.226" stop-color="#000000"/><stop offset="0.277" stop-color="#00001b"/><stop offset="0.327" stop-color="#000000"/><stop offset="0.371" stop-color="#000000"/><stop offset="0.403" stop-color="#00005c"/><stop offset="0.434" stop-color="#0000f8"/><stop offset="0.478" stop-color="#00eeff"/><stop offset="0.484" stop-color="#00fff3"/><stop offset="0.547" stop-color="#00ff00"/><stop offset="0.572" stop-color="#6cff00"/><stop offset="0.591" stop-color="#fff700"/><stop offset="0.604" stop-color="#ff8c00"/><stop offset="0.616" stop-color="#ff6700"/><stop offset="0.629" stop-color="#ff7800"/><stop offset="0.648" stop-color="#f9ff00"/><stop offset="0.667" stop-color="#73ff00"/><stop offset="0.698" stop-color="#00ff03"/><stop offset="0.755" stop-color="#00ffff"/><stop offset="0.792" stop-color="#004fff"/><stop offset="0.824" stop-color="#0012ff"/><stop offset="1.000" stop-color="#0000fc"/></linearGradient><linearGradient id="g106" x1="0" y1="0" x2="0" y2="1"><stop offset="0.000" stop-color="#000000"/><stop offset="0.195" stop-color="#000000"/><stop offset="0.233" stop-color="#000039"/><stop offset="0.270" stop-color="#000050"/><stop offset="0.352" stop-color="#000031"/><stop offset="0.377" stop-color="#000060"/><stop offset="0.390" stop-color="#000091"/><stop offset="0.409" stop-color="#0000fa"/><stop offset="0.415" stop-color="#0024ff"/><stop offset="0.447" stop-color="#00ebff"/><stop offset="0.453" stop-color="#00fff1"/><stop offset="0.509" stop-color="#00ff01"/><stop offset="0.541" stop-color="#71ff00"/><stop offset="0.591" stop-color="#fffd00"/><stop offset="0.616" stop-color="#ff7200"/><stop offset="0.629" stop-color="#ff5800"/><stop offset="0.648" stop-color="#ff7d00"/><stop offset="0.667" stop-color="#f2ff00"/><stop offset="0.686" stop-color="#85ff00"/><stop offset="0.717" stop-color="#00ff04"/><stop offset="0.774" stop-color="#00ffff"/><stop offset="0.799" stop-color="#00b7ff"/><stop offset="0.824" stop-color="#009dff"/><stop offset="1.000" stop-color="#0090ff"/></linearGradient><linearGradient id="g107" x1="0" y1="0" x2="0" y2="1"><stop offset="0.000" stop-color="#000000"/><stop offset="0.195" stop-color="#000000"/><stop offset="0.239" stop-color="#00003a"/><stop offset="0.270" stop-color="#00004b"/><stop offset="0.352" stop-color="#00002d"/><stop offset="0.377" stop-color="#00005c"/><stop offset="0.390" stop-color="#00008d"/><stop offset="0.409" stop-color="#0000f9"/><stop offset="0.415" stop-color="#0025ff"/><stop offset="0.447" stop-color="#00f3ff"/><stop offset="0.453" stop-color="#00ffe9"/><stop offset="0.503" stop-color="#00ff07"/><stop offset="0.553" stop-color="#a4ff00"/><stop offset="0.597" stop-color="#ffff00"/><stop offset="0.604" stop-color="#ffe900"/><stop offset="0.623" stop-color="#ff8900"/><stop offset="0.642" stop-color="#ff6900"/><stop offset="0.654" stop-color="#ff8a00"/><stop offset="0.667" stop-color="#ffea00"/><stop offset="0.673" stop-color="#deff00"/><stop offset="0.692" stop-color="#56ff00"/><stop offset="0.711" stop-color="#00ff0b"/><stop offset="0.755" stop-color="#00ffda"/><stop offset="0.767" stop-color="#00f1ff"/><stop offset="0.792" stop-color="#00a9ff"/><stop offset="0.818" stop-color="#0091ff"/><stop offset="1.000" stop-color="#0085ff"/></linearGradient><linearGradient id="g108" x1="0" y1="0" x2="0" y2="1"><stop offset="0.000" stop-color="#000000"/><stop offset="0.189" stop-color="#000000"/><stop offset="0.233" stop-color="#000045"/><stop offset="0.270" stop-color="#00005c"/><stop offset="0.352" stop-color="#000042"/><stop offset="0.377" stop-color="#000075"/><stop offset="0.403" stop-color="#0000f3"/><stop offset="0.409" stop-color="#001cff"/><stop offset="0.447" stop-color="#00fffa"/><stop offset="0.484" stop-color="#00ff58"/><stop offset="0.509" stop-color="#08ff00"/><stop offset="0.553" stop-color="#a1ff00"/><stop offset="0.591" stop-color="#fffc00"/><stop offset="0.623" stop-color="#ff7700"/><stop offset="0.635" stop-color="#ff6000"/><stop offset="0.654" stop-color="#ff7f00"/><stop offset="0.673" stop-color="#fffa00"/><stop offset="0.730" stop-color="#00ff01"/><stop offset="0.767" stop-color="#00ffad"/><stop offset="0.792" stop-color="#00fdff"/><stop offset="0.811" stop-color="#00d7ff"/><stop offset="0.836" stop-color="#00c3ff"/><stop offset="1.000" stop-color="#00b7ff"/></linearGradient><linearGradient id="g109" x1="0" y1="0" x2="0" y2="1"><stop offset="0.000" stop-color="#000064"/><stop offset="0.019" stop-color="#000052"/><stop offset="0.044" stop-color="#000003"/><stop offset="0.050" stop-color="#000000"/><stop offset="0.233" stop-color="#000000"/><stop offset="0.277" stop-color="#000014"/><stop offset="0.371" stop-color="#000000"/><stop offset="0.384" stop-color="#000016"/><stop offset="0.403" stop-color="#00005b"/><stop offset="0.434" stop-color="#0000fe"/><stop offset="0.478" stop-color="#00fffc"/><stop offset="0.541" stop-color="#00ff00"/><stop offset="0.579" stop-color="#74ff00"/><stop offset="0.604" stop-color="#fffb00"/><stop offset="0.616" stop-color="#ffb000"/><stop offset="0.629" stop-color="#ff9a00"/><stop offset="0.635" stop-color="#ffa800"/><stop offset="0.648" stop-color="#fff100"/><stop offset="0.673" stop-color="#56ff00"/><stop offset="0.692" stop-color="#00ff02"/><stop offset="0.748" stop-color="#00faff"/><stop offset="0.767" stop-color="#0094ff"/><stop offset="0.786" stop-color="#0046ff"/><stop offset="0.818" stop-color="#0009ff"/><stop offset="1.000" stop-color="#0000f5"/></linearGradient><linearGradient id="g110" x1="0" y1="0" x2="0" y2="1"><stop offset="0.000" stop-color="#000044"/><stop offset="0.019" stop-color="#000033"/><stop offset="0.038" stop-color="#000000"/><stop offset="0.384" stop-color="#000000"/><stop offset="0.415" stop-color="#00007c"/><stop offset="0.434" stop-color="#0000e8"/><stop offset="0.440" stop-color="#000fff"/><stop offset="0.478" stop-color="#00f7ff"/><stop offset="0.484" stop-color="#00ffe8"/><stop offset="0.522" stop-color="#00ff49"/><stop offset="0.547" stop-color="#0bff00"/><stop offset="0.566" stop-color="#4dff00"/><stop offset="0.591" stop-color="#ebff00"/><stop offset="0.597" stop-color="#ffe900"/><stop offset="0.610" stop-color="#ffb300"/><stop offset="0.616" stop-color="#ffb100"/><stop offset="0.635" stop-color="#f7ff00"/><stop offset="0.660" stop-color="#47ff00"/><stop offset="0.679" stop-color="#00ff0a"/><stop offset="0.736" stop-color="#00f8ff"/><stop offset="0.767" stop-color="#004cff"/><stop offset="0.786" stop-color="#0006ff"/><stop offset="0.792" stop-color="#0000f7"/><stop offset="0.830" stop-color="#0000d8"/><stop offset="1.000" stop-color="#0000cf"/></linearGradient><linearGradient id="g111" x1="0" y1="0" x2="0" y2="1"><stop offset="0.000" stop-color="#00009a"/><stop offset="0.025" stop-color="#000074"/><stop offset="0.057" stop-color="#000000"/><stop offset="0.214" stop-color="#000000"/><stop offset="0.277" stop-color="#00002a"/><stop offset="0.352" stop-color="#000004"/><stop offset="0.371" stop-color="#000018"/><stop offset="0.384" stop-color="#000039"/><stop offset="0.403" stop-color="#000080"/><stop offset="0.428" stop-color="#000cff"/><stop offset="0.465" stop-color="#00e5ff"/><stop offset="0.472" stop-color="#00fff9"/><stop offset="0.535" stop-color="#02ff00"/><stop offset="0.560" stop-color="#62ff00"/><stop offset="0.585" stop-color="#f9ff00"/><stop offset="0.591" stop-color="#ffdb00"/><stop offset="0.604" stop-color="#ffa400"/><stop offset="0.610" stop-color="#ff9e00"/><stop offset="0.623" stop-color="#ffba00"/><stop offset="0.635" stop-color="#fffc00"/><stop offset="0.654" stop-color="#afff00"/><stop offset="0.711" stop-color="#00ff06"/><stop offset="0.761" stop-color="#00ffef"/><stop offset="0.767" stop-color="#00f0ff"/><stop offset="0.792" stop-color="#0086ff"/><stop offset="0.824" stop-color="#004aff"/><stop offset="1.000" stop-color="#0034ff"/></linearGradient><linearGradient id="g112" x1="0" y1="0" x2="0" y2="1"><stop offset="0.000" stop-color="#0000f4"/><stop offset="0.025" stop-color="#0000cb"/><stop offset="0.069" stop-color="#000000"/><stop offset="0.195" stop-color="#000000"/><stop offset="0.233" stop-color="#000035"/><stop offset="0.270" stop-color="#00004c"/><stop offset="0.352" stop-color="#00002f"/><stop offset="0.365" stop-color="#00003f"/><stop offset="0.384" stop-color="#000076"/><stop offset="0.409" stop-color="#0000fd"/><stop offset="0.415" stop-color="#0028ff"/><stop offset="0.447" stop-color="#00f0ff"/><stop offset="0.453" stop-color="#00ffed"/><stop offset="0.503" stop-color="#00ff13"/><stop offset="0.509" stop-color="#06ff00"/><stop offset="0.579" stop-color="#f6ff00"/><stop offset="0.585" stop-color="#ffea00"/><stop offset="0.604" stop-color="#ff9100"/><stop offset="0.616" stop-color="#ff8000"/><stop offset="0.629" stop-color="#ff9d00"/><stop offset="0.648" stop-color="#fff800"/><stop offset="0.692" stop-color="#6cff00"/><stop offset="0.717" stop-color="#01ff00"/><stop offset="0.774" stop-color="#00fffb"/><stop offset="0.799" stop-color="#00bbff"/><stop offset="0.824" stop-color="#00a1ff"/><stop offset="1.000" stop-color="#0093ff"/></linearGradient><linearGradient id="g113" x1="0" y1="0" x2="0" y2="1"><stop offset="0.000" stop-color="#000094"/><stop offset="0.025" stop-color="#000070"/><stop offset="0.057" stop-color="#000000"/><stop offset="0.220" stop-color="#000000"/><stop offset="0.277" stop-color="#000026"/><stop offset="0.352" stop-color="#000001"/><stop offset="0.371" stop-color="#000017"/><stop offset="0.384" stop-color="#00003a"/><stop offset="0.403" stop-color="#000088"/><stop offset="0.421" stop-color="#0000f6"/><stop offset="0.459" stop-color="#00e9ff"/><stop offset="0.465" stop-color="#00fff3"/><stop offset="0.522" stop-color="#00ff00"/><stop offset="0.585" stop-color="#b6ff00"/><stop offset="0.604" stop-color="#fffa00"/><stop offset="0.616" stop-color="#ffc300"/><stop offset="0.629" stop-color="#ffb500"/><stop offset="0.648" stop-color="#fcff00"/><stop offset="0.673" stop-color="#63ff00"/><stop offset="0.698" stop-color="#00ff0d"/><stop offset="0.748" stop-color="#00fffb"/><stop offset="0.780" stop-color="#0077ff"/><stop offset="0.811" stop-color="#003eff"/><stop offset="1.000" stop-color="#002dff"/></linearGradient><linearGradient id="g114" x1="0" y1="0" x2="0" y2="1"><stop offset="0.000" stop-color="#00000b"/><stop offset="0.396" stop-color="#000000"/><stop offset="0.403" stop-color="#000004"/><stop offset="0.415" stop-color="#000035"/><stop offset="0.453" stop-color="#0000e5"/><stop offset="0.459" stop-color="#0006ff"/><stop offset="0.503" stop-color="#00f8ff"/><stop offset="0.509" stop-color="#00ffea"/><stop offset="0.547" stop-color="#00ff57"/><stop offset="0.579" stop-color="#03ff00"/><stop offset="0.597" stop-color="#45ff00"/><stop offset="0.623" stop-color="#ddff00"/><stop offset="0.635" stop-color="#fff800"/><stop offset="0.648" stop-color="#f5ff00"/><stop offset="0.654" stop-color="#d7ff00"/><stop offset="0.679" stop-color="#18ff00"/><stop offset="0.686" stop-color="#00ff11"/><stop offset="0.736" stop-color="#00fff6"/><stop offset="0.742" stop-color="#00e5ff"/><stop offset="0.774" stop-color="#002fff"/><stop offset="0.786" stop-color="#0000f4"/><stop offset="0.811" stop-color="#0000b2"/><stop offset="0.836" stop-color="#000099"/><stop offset="1.000" stop-color="#00008c"/></linearGradient><linearGradient id="g115" x1="0" y1="0" x2="0" y2="1"><stop offset="0.000" stop-color="#00004f"/><stop offset="0.019" stop-color="#00003d"/><stop offset="0.044" stop-color="#000000"/><stop offset="0.384" stop-color="#000001"/><stop offset="0.415" stop-color="#00007b"/><stop offset="0.434" stop-color="#0000e2"/><stop offset="0.440" stop-color="#0007ff"/><stop offset="0.484" stop-color="#00fff7"/><stop offset="0.516" stop-color="#00ff6f"/><stop offset="0.547" stop-color="#00ff00"/><stop offset="0.597" stop-color="#7eff00"/><stop offset="0.629" stop-color="#fffc00"/><stop offset="0.642" stop-color="#ffeb00"/><stop offset="0.654" stop-color="#ecff00"/><stop offset="0.686" stop-color="#16ff00"/><stop offset="0.692" stop-color="#00ff0d"/><stop offset="0.742" stop-color="#00fffa"/><stop offset="0.748" stop-color="#00e0ff"/><stop offset="0.774" stop-color="#005aff"/><stop offset="0.799" stop-color="#0005ff"/><stop offset="0.843" stop-color="#0000e2"/><stop offset="1.000" stop-color="#0000da"/></linearGradient><linearGradient id="g116" x1="0" y1="0" x2="0" y2="1"><stop offset="0.000" stop-color="#00005d"/><stop offset="0.019" stop-color="#00004b"/><stop offset="0.044" stop-color="#000000"/><stop offset="0.377" stop-color="#000000"/><stop offset="0.409" stop-color="#000073"/><stop offset="0.434" stop-color="#0003ff"/><stop offset="0.472" stop-color="#00f0ff"/><stop offset="0.478" stop-color="#00ffee"/><stop offset="0.535" stop-color="#00ff06"/><stop offset="0.591" stop-color="#8fff00"/><stop offset="0.616" stop-color="#f5ff00"/><stop offset="0.623" stop-color="#fff500"/><stop offset="0.629" stop-color="#ffec00"/><stop offset="0.642" stop-color="#fcff00"/><stop offset="0.686" stop-color="#00ff04"/><stop offset="0.736" stop-color="#00ffed"/><stop offset="0.742" stop-color="#00efff"/><stop offset="0.774" stop-color="#004eff"/><stop offset="0.805" stop-color="#0000ff"/><stop offset="1.000" stop-color="#0000ea"/></linearGradient><linearGradient id="g117" x1="0" y1="0" x2="0" y2="1"><stop offset="0.000" stop-color="#00002a"/><stop offset="0.031" stop-color="#000000"/><stop offset="0.390" stop-color="#000000"/><stop offset="0.396" stop-color="#000006"/><stop offset="0.409" stop-color="#000036"/><stop offset="0.447" stop-color="#0000e8"/><stop offset="0.453" stop-color="#000aff"/><stop offset="0.497" stop-color="#00fcff"/><stop offset="0.503" stop-color="#00ffe6"/><stop offset="0.535" stop-color="#00ff67"/><stop offset="0.566" stop-color="#06ff00"/><stop offset="0.604" stop-color="#d2ff00"/><stop offset="0.616" stop-color="#f5ff00"/><stop offset="0.629" stop-color="#e5ff00"/><stop offset="0.660" stop-color="#48ff00"/><stop offset="0.686" stop-color="#00ff0d"/><stop offset="0.711" stop-color="#00ff67"/><stop offset="0.742" stop-color="#00fff8"/><stop offset="0.748" stop-color="#00e2ff"/><stop offset="0.774" stop-color="#0053ff"/><stop offset="0.792" stop-color="#0000ff"/><stop offset="0.811" stop-color="#0000d3"/><stop offset="0.836" stop-color="#0000bb"/><stop offset="1.000" stop-color="#0000ae"/></linearGradient><linearGradient id="g118" x1="0" y1="0" x2="0" y2="1"><stop offset="0.000" stop-color="#000050"/><stop offset="0.019" stop-color="#00003e"/><stop offset="0.044" stop-color="#000000"/><stop offset="0.384" stop-color="#000000"/><stop offset="0.415" stop-color="#00007a"/><stop offset="0.434" stop-color="#0000e3"/><stop offset="0.440" stop-color="#0007ff"/><stop offset="0.484" stop-color="#00fff6"/><stop offset="0.522" stop-color="#00ff55"/><stop offset="0.547" stop-color="#03ff00"/><stop offset="0.566" stop-color="#4bff00"/><stop offset="0.597" stop-color="#f1ff00"/><stop offset="0.604" stop-color="#fffb00"/><stop offset="0.623" stop-color="#f1ff00"/><stop offset="0.654" stop-color="#62ff00"/><stop offset="0.686" stop-color="#00ff02"/><stop offset="0.711" stop-color="#00ff63"/><stop offset="0.742" stop-color="#00fffa"/><stop offset="0.748" stop-color="#00e0ff"/><stop offset="0.774" stop-color="#005aff"/><stop offset="0.799" stop-color="#0005ff"/><stop offset="0.843" stop-color="#0000e2"/><stop offset="1.000" stop-color="#0000da"/></linearGradient><linearGradient id="g119" x1="0" y1="0" x2="0" y2="1"><stop offset="0.000" stop-color="#0000fa"/><stop offset="0.025" stop-color="#0000d1"/><stop offset="0.069" stop-color="#000000"/><stop offset="0.195" stop-color="#000000"/><stop offset="0.239" stop-color="#000037"/><stop offset="0.270" stop-color="#000048"/><stop offset="0.352" stop-color="#00002d"/><stop offset="0.365" stop-color="#00003f"/><stop offset="0.384" stop-color="#000079"/><stop offset="0.409" stop-color="#0009ff"/><stop offset="0.447" stop-color="#00fffa"/><stop offset="0.478" stop-color="#00ff62"/><stop offset="0.503" stop-color="#08ff00"/><stop offset="0.535" stop-color="#7dff00"/><stop offset="0.579" stop-color="#fffb00"/><stop offset="0.597" stop-color="#ffb100"/><stop offset="0.610" stop-color="#ff9a00"/><stop offset="0.623" stop-color="#ffab00"/><stop offset="0.642" stop-color="#fff500"/><stop offset="0.679" stop-color="#89ff00"/><stop offset="0.711" stop-color="#06ff00"/><stop offset="0.717" stop-color="#00ff17"/><stop offset="0.755" stop-color="#00ffc9"/><stop offset="0.767" stop-color="#00fffa"/><stop offset="0.774" stop-color="#00edff"/><stop offset="0.792" stop-color="#00bcff"/><stop offset="0.818" stop-color="#00a3ff"/><stop offset="1.000" stop-color="#0097ff"/></linearGradient><linearGradient id="g120" x1="0" y1="0" x2="0" y2="1"><stop offset="0.000" stop-color="#00005b"/><stop offset="0.019" stop-color="#000049"/><stop offset="0.044" stop-color="#000000"/><stop offset="0.377" stop-color="#000000"/><stop offset="0.384" stop-color="#000004"/><stop offset="0.403" stop-color="#000047"/><stop offset="0.440" stop-color="#0001ff"/><stop offset="0.484" stop-color="#00f7ff"/><stop offset="0.491" stop-color="#00ffea"/><stop offset="0.528" stop-color="#00ff50"/><stop offset="0.553" stop-color="#08ff00"/><stop offset="0.579" stop-color="#5fff00"/><stop offset="0.610" stop-color="#feff00"/><stop offset="0.616" stop-color="#ffeb00"/><stop offset="0.623" stop-color="#ffe400"/><stop offset="0.635" stop-color="#fffe00"/><stop offset="0.667" stop-color="#64ff00"/><stop offset="0.698" stop-color="#00ff0a"/><stop offset="0.755" stop-color="#00f4ff"/><stop offset="0.786" stop-color="#0053ff"/><stop offset="0.818" stop-color="#0001ff"/><stop offset="0.855" stop-color="#0000ed"/><stop offset="1.000" stop-color="#0000e5"/></linearGradient><linearGradient id="g121" x1="0" y1="0" x2="0" y2="1"><stop offset="0.000" stop-color="#00001f"/><stop offset="0.025" stop-color="#000000"/><stop offset="0.396" stop-color="#000000"/><stop offset="0.428" stop-color="#000084"/><stop offset="0.447" stop-color="#0000ed"/><stop offset="0.453" stop-color="#0012ff"/><stop offset="0.491" stop-color="#00efff"/><stop offset="0.497" stop-color="#00fff0"/><stop offset="0.528" stop-color="#00ff6d"/><stop offset="0.560" stop-color="#00ff09"/><stop offset="0.591" stop-color="#4bff00"/><stop offset="0.623" stop-color="#e9ff00"/><stop offset="0.635" stop-color="#fffc00"/><stop offset="0.648" stop-color="#e2ff00"/><stop offset="0.679" stop-color="#05ff00"/><stop offset="0.686" stop-color="#00ff1f"/><stop offset="0.736" stop-color="#00f3ff"/><stop offset="0.780" stop-color="#0002ff"/><stop offset="0.805" stop-color="#0000c1"/><stop offset="0.830" stop-color="#0000ab"/><stop offset="1.000" stop-color="#00009f"/></linearGradient><linearGradient id="g122" x1="0" y1="0" x2="0" y2="1"><stop offset="0.000" stop-color="#000088"/><stop offset="0.025" stop-color="#000066"/><stop offset="0.050" stop-color="#000007"/><stop offset="0.057" stop-color="#000000"/><stop offset="0.226" stop-color="#000000"/><stop offset="0.277" stop-color="#000018"/><stop offset="0.365" stop-color="#000000"/><stop offset="0.390" stop-color="#000044"/><stop offset="0.428" stop-color="#000dff"/><stop offset="0.465" stop-color="#00fcff"/><stop offset="0.509" stop-color="#00ff3b"/><stop offset="0.528" stop-color="#0cff00"/><stop offset="0.553" stop-color="#5cff00"/><stop offset="0.597" stop-color="#b4ff00"/><stop offset="0.623" stop-color="#fff400"/><stop offset="0.642" stop-color="#ffcf00"/><stop offset="0.654" stop-color="#fff600"/><stop offset="0.660" stop-color="#e4ff00"/><stop offset="0.692" stop-color="#10ff00"/><stop offset="0.698" stop-color="#00ff10"/><stop offset="0.748" stop-color="#00f9ff"/><stop offset="0.780" stop-color="#0069ff"/><stop offset="0.811" stop-color="#002eff"/><stop offset="1.000" stop-color="#001cff"/></linearGradient><linearGradient id="g123" x1="0" y1="0" x2="0" y2="1"><stop offset="0.000" stop-color="#00007f"/><stop offset="0.025" stop-color="#00005f"/><stop offset="0.050" stop-color="#000000"/><stop offset="0.233" stop-color="#000000"/><stop offset="0.277" stop-color="#000014"/><stop offset="0.371" stop-color="#000000"/><stop offset="0.396" stop-color="#00004d"/><stop offset="0.434" stop-color="#000cff"/><stop offset="0.472" stop-color="#00e3ff"/><stop offset="0.478" stop-color="#00fffb"/><stop offset="0.541" stop-color="#00ff00"/><stop offset="0.591" stop-color="#98ff00"/><stop offset="0.616" stop-color="#fff500"/><stop offset="0.635" stop-color="#ffc000"/><stop offset="0.642" stop-color="#ffc800"/><stop offset="0.654" stop-color="#fffd00"/><stop offset="0.679" stop-color="#6dff00"/><stop offset="0.704" stop-color="#01ff00"/><stop offset="0.761" stop-color="#00f9ff"/><stop offset="0.792" stop-color="#0068ff"/><stop offset="0.824" stop-color="#0029ff"/><stop offset="1.000" stop-color="#0011ff"/></linearGradient><linearGradient id="g124" x1="0" y1="0" x2="0" y2="1"><stop offset="0.000" stop-color="#000077"/><stop offset="0.025" stop-color="#000057"/><stop offset="0.050" stop-color="#000000"/><stop offset="0.239" stop-color="#000000"/><stop offset="0.277" stop-color="#00000f"/><stop offset="0.371" stop-color="#000000"/><stop offset="0.396" stop-color="#00004a"/><stop offset="0.428" stop-color="#0000eb"/><stop offset="0.434" stop-color="#0012ff"/><stop offset="0.472" stop-color="#00f5ff"/><stop offset="0.535" stop-color="#00ff02"/><stop offset="0.579" stop-color="#8dff00"/><stop offset="0.597" stop-color="#edff00"/><stop offset="0.604" stop-color="#ffed00"/><stop offset="0.623" stop-color="#ffae00"/><stop offset="0.635" stop-color="#ffc400"/><stop offset="0.648" stop-color="#f9ff00"/><stop offset="0.673" stop-color="#6eff00"/><stop offset="0.698" stop-color="#00ff07"/><stop offset="0.748" stop-color="#00fff6"/><stop offset="0.755" stop-color="#00e6ff"/><stop offset="0.786" stop-color="#0056ff"/><stop offset="0.818" stop-color="#001aff"/><stop offset="1.000" stop-color="#0006ff"/></linearGradient><linearGradient id="g125" x1="0" y1="0" x2="0" y2="1"><stop offset="0.000" stop-color="#0000c3"/><stop offset="0.025" stop-color="#00009a"/><stop offset="0.063" stop-color="#000000"/><stop offset="0.214" stop-color="#000000"/><stop offset="0.277" stop-color="#00002c"/><stop offset="0.346" stop-color="#00000b"/><stop offset="0.365" stop-color="#00001c"/><stop offset="0.377" stop-color="#00003b"/><stop offset="0.396" stop-color="#000086"/><stop offset="0.415" stop-color="#0000f5"/><stop offset="0.453" stop-color="#00edff"/><stop offset="0.459" stop-color="#00ffee"/><stop offset="0.509" stop-color="#00ff0d"/><stop offset="0.516" stop-color="#0bff00"/><stop offset="0.579" stop-color="#ebff00"/><stop offset="0.585" stop-color="#fff100"/><stop offset="0.604" stop-color="#ff9300"/><stop offset="0.616" stop-color="#ff8000"/><stop offset="0.629" stop-color="#ff9700"/><stop offset="0.654" stop-color="#ffff00"/><stop offset="0.704" stop-color="#02ff00"/><stop offset="0.755" stop-color="#00fff4"/><stop offset="0.761" stop-color="#00edff"/><stop offset="0.786" stop-color="#0090ff"/><stop offset="0.811" stop-color="#006aff"/><stop offset="1.000" stop-color="#0059ff"/></linearGradient><linearGradient id="g126" x1="0" y1="0" x2="0" y2="1"><stop offset="0.000" stop-color="#0000bd"/><stop offset="0.025" stop-color="#000094"/><stop offset="0.063" stop-color="#000000"/><stop offset="0.214" stop-color="#000000"/><stop offset="0.277" stop-color="#000029"/><stop offset="0.346" stop-color="#000007"/><stop offset="0.365" stop-color="#000015"/><stop offset="0.384" stop-color="#000047"/><stop offset="0.396" stop-color="#000077"/><stop offset="0.421" stop-color="#0001ff"/><stop offset="0.459" stop-color="#00e1ff"/><stop offset="0.465" stop-color="#00fffc"/><stop offset="0.522" stop-color="#00ff14"/><stop offset="0.528" stop-color="#03ff00"/><stop offset="0.560" stop-color="#79ff00"/><stop offset="0.585" stop-color="#fffa00"/><stop offset="0.604" stop-color="#ff9400"/><stop offset="0.616" stop-color="#ff8300"/><stop offset="0.629" stop-color="#ff9900"/><stop offset="0.654" stop-color="#fff300"/><stop offset="0.667" stop-color="#daff00"/><stop offset="0.717" stop-color="#00ff04"/><stop offset="0.767" stop-color="#00fff0"/><stop offset="0.774" stop-color="#00f1ff"/><stop offset="0.799" stop-color="#0093ff"/><stop offset="0.830" stop-color="#0064ff"/><stop offset="1.000" stop-color="#0053ff"/></linearGradient><linearGradient id="g127" x1="0" y1="0" x2="0" y2="1"><stop offset="0.000" stop-color="#0000bb"/><stop offset="0.025" stop-color="#000092"/><stop offset="0.063" stop-color="#000000"/><stop offset="0.220" stop-color="#000001"/><stop offset="0.277" stop-color="#000027"/><stop offset="0.346" stop-color="#000005"/><stop offset="0.365" stop-color="#000014"/><stop offset="0.377" stop-color="#000033"/><stop offset="0.396" stop-color="#00007a"/><stop offset="0.421" stop-color="#000aff"/><stop offset="0.459" stop-color="#00f6ff"/><stop offset="0.516" stop-color="#00ff10"/><stop offset="0.522" stop-color="#08ff00"/><stop offset="0.566" stop-color="#9bff00"/><stop offset="0.585" stop-color="#ebff00"/><stop offset="0.591" stop-color="#ffef00"/><stop offset="0.610" stop-color="#ff8a00"/><stop offset="0.623" stop-color="#ff7900"/><stop offset="0.635" stop-color="#ff9100"/><stop offset="0.654" stop-color="#ffed00"/><stop offset="0.660" stop-color="#f0ff00"/><stop offset="0.711" stop-color="#00ff0b"/><stop offset="0.761" stop-color="#00fffc"/><stop offset="0.786" stop-color="#009aff"/><stop offset="0.818" stop-color="#0062ff"/><stop offset="1.000" stop-color="#004fff"/></linearGradient><linearGradient id="g128" x1="0" y1="0" x2="0" y2="1"><stop offset="0.000" stop-color="#0000e1"/><stop offset="0.025" stop-color="#0000b8"/><stop offset="0.063" stop-color="#000006"/><stop offset="0.208" stop-color="#000000"/><stop offset="0.264" stop-color="#000033"/><stop offset="0.340" stop-color="#000017"/><stop offset="0.358" stop-color="#00001f"/><stop offset="0.384" stop-color="#000063"/><stop offset="0.409" stop-color="#0000e9"/><stop offset="0.415" stop-color="#0012ff"/><stop offset="0.447" stop-color="#00e3ff"/><stop offset="0.453" stop-color="#00fff6"/><stop offset="0.503" stop-color="#00ff11"/><stop offset="0.509" stop-color="#08ff00"/><stop offset="0.541" stop-color="#79ff00"/><stop offset="0.591" stop-color="#fffd00"/><stop offset="0.616" stop-color="#ff8500"/><stop offset="0.629" stop-color="#ff6d00"/><stop offset="0.648" stop-color="#ff8f00"/><stop offset="0.667" stop-color="#f2ff00"/><stop offset="0.692" stop-color="#58ff00"/><stop offset="0.711" stop-color="#00ff0b"/><stop offset="0.755" stop-color="#00ffde"/><stop offset="0.767" stop-color="#00ebff"/><stop offset="0.792" stop-color="#009fff"/><stop offset="0.818" stop-color="#0084ff"/><stop offset="1.000" stop-color="#0077ff"/></linearGradient><linearGradient id="g129" x1="0" y1="0" x2="0" y2="1"><stop offset="0.000" stop-color="#000088"/><stop offset="0.025" stop-color="#000066"/><stop offset="0.050" stop-color="#000007"/><stop offset="0.057" stop-color="#000000"/><stop offset="0.233" stop-color="#000000"/><stop offset="0.277" stop-color="#000011"/><stop offset="0.371" stop-color="#000000"/><stop offset="0.403" stop-color="#00006a"/><stop offset="0.428" stop-color="#0000ec"/><stop offset="0.434" stop-color="#0011ff"/><stop offset="0.472" stop-color="#00e7ff"/><stop offset="0.478" stop-color="#00fff8"/><stop offset="0.541" stop-color="#01ff00"/><stop offset="0.591" stop-color="#a6ff00"/><stop offset="0.610" stop-color="#feff00"/><stop offset="0.616" stop-color="#ffdc00"/><stop offset="0.629" stop-color="#ffa300"/><stop offset="0.642" stop-color="#ff9400"/><stop offset="0.654" stop-color="#ffbb00"/><stop offset="0.667" stop-color="#f3ff00"/><stop offset="0.692" stop-color="#4bff00"/><stop offset="0.704" stop-color="#0aff00"/><stop offset="0.711" stop-color="#00ff13"/><stop offset="0.761" stop-color="#00fcff"/><stop offset="0.792" stop-color="#006dff"/><stop offset="0.824" stop-color="#002fff"/><stop offset="1.000" stop-color="#0018ff"/></linearGradient><linearGradient id="g130" x1="0" y1="0" x2="0" y2="1"><stop offset="0.000" stop-color="#00002a"/><stop offset="0.031" stop-color="#000000"/><stop offset="0.321" stop-color="#000000"/><stop offset="0.327" stop-color="#000004"/><stop offset="0.365" stop-color="#0000ba"/><stop offset="0.415" stop-color="#0000fc"/><stop offset="0.440" stop-color="#0049ff"/><stop offset="0.478" stop-color="#00e4ff"/><stop offset="0.484" stop-color="#00fffe"/><stop offset="0.528" stop-color="#00ff5b"/><stop offset="0.560" stop-color="#05ff00"/><stop offset="0.585" stop-color="#4dff00"/><stop offset="0.623" stop-color="#d9ff00"/><stop offset="0.635" stop-color="#ecff00"/><stop offset="0.654" stop-color="#c6ff00"/><stop offset="0.686" stop-color="#0dff00"/><stop offset="0.692" stop-color="#00ff18"/><stop offset="0.742" stop-color="#00fcff"/><stop offset="0.774" stop-color="#007eff"/><stop offset="0.811" stop-color="#003eff"/><stop offset="1.000" stop-color="#002fff"/></linearGradient><linearGradient id="g131" x1="0" y1="0" x2="0" y2="1"><stop offset="0.000" stop-color="#000021"/><stop offset="0.031" stop-color="#000000"/><stop offset="0.327" stop-color="#000001"/><stop offset="0.365" stop-color="#0000b8"/><stop offset="0.415" stop-color="#0000fb"/><stop offset="0.440" stop-color="#004bff"/><stop offset="0.484" stop-color="#00fff7"/><stop offset="0.522" stop-color="#00ff69"/><stop offset="0.553" stop-color="#00ff09"/><stop offset="0.579" stop-color="#38ff00"/><stop offset="0.616" stop-color="#b2ff00"/><stop offset="0.635" stop-color="#caff00"/><stop offset="0.654" stop-color="#a2ff00"/><stop offset="0.679" stop-color="#1aff00"/><stop offset="0.686" stop-color="#00ff0d"/><stop offset="0.711" stop-color="#00ff96"/><stop offset="0.736" stop-color="#00f7ff"/><stop offset="0.767" stop-color="#0077ff"/><stop offset="0.805" stop-color="#0037ff"/><stop offset="1.000" stop-color="#0029ff"/></linearGradient><linearGradient id="g132" x1="0" y1="0" x2="0" y2="1"><stop offset="0.000" stop-color="#000030"/><stop offset="0.031" stop-color="#000000"/><stop offset="0.396" stop-color="#000001"/><stop offset="0.428" stop-color="#000081"/><stop offset="0.447" stop-color="#0000e3"/><stop offset="0.453" stop-color="#0004ff"/><stop offset="0.497" stop-color="#00f2ff"/><stop offset="0.503" stop-color="#00ffef"/><stop offset="0.547" stop-color="#00ff44"/><stop offset="0.572" stop-color="#0dff00"/><stop offset="0.616" stop-color="#aeff00"/><stop offset="0.635" stop-color="#cbff00"/><stop offset="0.654" stop-color="#acff00"/><stop offset="0.692" stop-color="#00ff0e"/><stop offset="0.742" stop-color="#00ffff"/><stop offset="0.774" stop-color="#004eff"/><stop offset="0.792" stop-color="#0000fc"/><stop offset="0.811" stop-color="#0000d2"/><stop offset="0.836" stop-color="#0000bb"/><stop offset="1.000" stop-color="#0000ae"/></linearGradient><linearGradient id="g133" x1="0" y1="0" x2="0" y2="1"><stop offset="0.000" stop-color="#000046"/><stop offset="0.019" stop-color="#000034"/><stop offset="0.038" stop-color="#000000"/><stop offset="0.390" stop-color="#000002"/><stop offset="0.421" stop-color="#000086"/><stop offset="0.440" stop-color="#0000ee"/><stop offset="0.447" stop-color="#0014ff"/><stop offset="0.484" stop-color="#00efff"/><stop offset="0.491" stop-color="#00fff0"/><stop offset="0.535" stop-color="#00ff40"/><stop offset="0.560" stop-color="#0eff00"/><stop offset="0.616" stop-color="#b8ff00"/><stop offset="0.635" stop-color="#d0ff00"/><stop offset="0.654" stop-color="#aeff00"/><stop offset="0.686" stop-color="#0cff00"/><stop offset="0.736" stop-color="#00fff8"/><stop offset="0.742" stop-color="#00e3ff"/><stop offset="0.774" stop-color="#003cff"/><stop offset="0.792" stop-color="#0000fa"/><stop offset="0.836" stop-color="#0000d0"/><stop offset="1.000" stop-color="#0000c7"/></linearGradient><linearGradient id="g134" x1="0" y1="0" x2="0" y2="1"><stop offset="0.000" stop-color="#000000"/><stop offset="0.409" stop-color="#000000"/><stop offset="0.415" stop-color="#000008"/><stop offset="0.459" stop-color="#0000e0"/><stop offset="0.465" stop-color="#0004ff"/><stop offset="0.509" stop-color="#00fdff"/><stop offset="0.516" stop-color="#00ffe6"/><stop offset="0.547" stop-color="#00ff77"/><stop offset="0.591" stop-color="#08ff00"/><stop offset="0.616" stop-color="#64ff00"/><stop offset="0.635" stop-color="#81ff00"/><stop offset="0.654" stop-color="#5bff00"/><stop offset="0.673" stop-color="#00ff0a"/><stop offset="0.711" stop-color="#00fff9"/><stop offset="0.717" stop-color="#00ddff"/><stop offset="0.755" stop-color="#0000f7"/><stop offset="0.786" stop-color="#00007f"/><stop offset="0.811" stop-color="#00005f"/><stop offset="1.000" stop-color="#000050"/></linearGradient><linearGradient id="g135" x1="0" y1="0" x2="0" y2="1"><stop offset="0.000" stop-color="#000000"/><stop offset="0.428" stop-color="#000000"/><stop offset="0.459" stop-color="#00007e"/><stop offset="0.484" stop-color="#0000fa"/><stop offset="0.535" stop-color="#00ffff"/><stop offset="0.585" stop-color="#00ff61"/><stop offset="0.629" stop-color="#00ff08"/><stop offset="0.642" stop-color="#00ff0a"/><stop offset="0.660" stop-color="#00ff31"/><stop offset="0.711" stop-color="#00fff8"/><stop offset="0.717" stop-color="#00e6ff"/><stop offset="0.755" stop-color="#000cff"/><stop offset="0.761" stop-color="#0000ea"/><stop offset="0.786" stop-color="#00007b"/><stop offset="0.824" stop-color="#000038"/><stop offset="1.000" stop-color="#000026"/></linearGradient><linearGradient id="g136" x1="0" y1="0" x2="0" y2="1"><stop offset="0.000" stop-color="#00000d"/><stop offset="0.019" stop-color="#000000"/><stop offset="0.403" stop-color="#000000"/><stop offset="0.434" stop-color="#000089"/><stop offset="0.453" stop-color="#0000f0"/><stop offset="0.459" stop-color="#0015ff"/><stop offset="0.491" stop-color="#00c9ff"/><stop offset="0.503" stop-color="#00fff5"/><stop offset="0.547" stop-color="#00ff52"/><stop offset="0.585" stop-color="#04ff00"/><stop offset="0.623" stop-color="#22ff00"/><stop offset="0.654" stop-color="#00ff01"/><stop offset="0.686" stop-color="#00ff5d"/><stop offset="0.723" stop-color="#00fffc"/><stop offset="0.730" stop-color="#00deff"/><stop offset="0.761" stop-color="#002cff"/><stop offset="0.774" stop-color="#0000f1"/><stop offset="0.799" stop-color="#0000ae"/><stop offset="0.824" stop-color="#000095"/><stop offset="1.000" stop-color="#000088"/></linearGradient><linearGradient id="g137" x1="0" y1="0" x2="0" y2="1"><stop offset="0.000" stop-color="#000000"/><stop offset="0.415" stop-color="#000000"/><stop offset="0.421" stop-color="#00000b"/><stop offset="0.447" stop-color="#00007d"/><stop offset="0.465" stop-color="#0000e4"/><stop offset="0.472" stop-color="#0007ff"/><stop offset="0.509" stop-color="#00daff"/><stop offset="0.516" stop-color="#00f9ff"/><stop offset="0.522" stop-color="#00ffec"/><stop offset="0.566" stop-color="#00ff69"/><stop offset="0.604" stop-color="#00ff3a"/><stop offset="0.629" stop-color="#00ff3e"/><stop offset="0.648" stop-color="#00ff58"/><stop offset="0.673" stop-color="#00ff98"/><stop offset="0.698" stop-color="#00fff5"/><stop offset="0.711" stop-color="#00c9ff"/><stop offset="0.742" stop-color="#0012ff"/><stop offset="0.748" stop-color="#0000ef"/><stop offset="0.774" stop-color="#000082"/><stop offset="0.805" stop-color="#00004b"/><stop offset="1.000" stop-color="#000039"/></linearGradient><linearGradient id="g138" x1="0" y1="0" x2="0" y2="1"><stop offset="0.000" stop-color="#000000"/><stop offset="0.428" stop-color="#000000"/><stop offset="0.459" stop-color="#000077"/><stop offset="0.484" stop-color="#0000f1"/><stop offset="0.491" stop-color="#0013ff"/><stop offset="0.535" stop-color="#00f2ff"/><stop offset="0.541" stop-color="#00fff3"/><stop offset="0.585" stop-color="#00ff7b"/><stop offset="0.623" stop-color="#00ff56"/><stop offset="0.660" stop-color="#00ff79"/><stop offset="0.704" stop-color="#00fff8"/><stop offset="0.755" stop-color="#0000f5"/><stop offset="0.780" stop-color="#000082"/><stop offset="0.818" stop-color="#000037"/><stop offset="1.000" stop-color="#000021"/></linearGradient><linearGradient id="g139" x1="0" y1="0" x2="0" y2="1"><stop offset="0.000" stop-color="#000035"/><stop offset="0.038" stop-color="#000000"/><stop offset="0.390" stop-color="#000000"/><stop offset="0.396" stop-color="#00000a"/><stop offset="0.421" stop-color="#000076"/><stop offset="0.447" stop-color="#0000fe"/><stop offset="0.491" stop-color="#00fcff"/><stop offset="0.497" stop-color="#00ffe6"/><stop offset="0.535" stop-color="#00ff56"/><stop offset="0.566" stop-color="#00ff00"/><stop offset="0.591" stop-color="#2aff00"/><stop offset="0.616" stop-color="#36ff00"/><stop offset="0.660" stop-color="#00ff01"/><stop offset="0.692" stop-color="#00ff5f"/><stop offset="0.730" stop-color="#00fbff"/><stop offset="0.761" stop-color="#0051ff"/><stop offset="0.780" stop-color="#0003ff"/><stop offset="0.799" stop-color="#0000da"/><stop offset="0.824" stop-color="#0000c6"/><stop offset="1.000" stop-color="#0000bb"/></linearGradient><linearGradient id="g140" x1="0" y1="0" x2="0" y2="1"><stop offset="0.000" stop-color="#00003d"/><stop offset="0.019" stop-color="#00002b"/><stop offset="0.038" stop-color="#000000"/><stop offset="0.390" stop-color="#000000"/><stop offset="0.421" stop-color="#000087"/><stop offset="0.440" stop-color="#0000f3"/><stop offset="0.484" stop-color="#00faff"/><stop offset="0.491" stop-color="#00ffe7"/><stop offset="0.528" stop-color="#00ff54"/><stop offset="0.560" stop-color="#03ff00"/><stop offset="0.585" stop-color="#2eff00"/><stop offset="0.610" stop-color="#3bff00"/><stop offset="0.660" stop-color="#00ff08"/><stop offset="0.692" stop-color="#00ff6d"/><stop offset="0.723" stop-color="#00fff7"/><stop offset="0.730" stop-color="#00e6ff"/><stop offset="0.761" stop-color="#0041ff"/><stop offset="0.780" stop-color="#0000fc"/><stop offset="0.824" stop-color="#0000cf"/><stop offset="1.000" stop-color="#0000c7"/></linearGradient><linearGradient id="g141" x1="0" y1="0" x2="0" y2="1"><stop offset="0.000" stop-color="#00006a"/><stop offset="0.019" stop-color="#000058"/><stop offset="0.050" stop-color="#000000"/><stop offset="0.377" stop-color="#000000"/><stop offset="0.384" stop-color="#000004"/><stop offset="0.396" stop-color="#000031"/><stop offset="0.434" stop-color="#0000e7"/><stop offset="0.440" stop-color="#000aff"/><stop offset="0.484" stop-color="#00fbff"/><stop offset="0.491" stop-color="#00ffe8"/><stop offset="0.535" stop-color="#00ff42"/><stop offset="0.560" stop-color="#0aff00"/><stop offset="0.591" stop-color="#4cff00"/><stop offset="0.623" stop-color="#61ff00"/><stop offset="0.648" stop-color="#4fff00"/><stop offset="0.679" stop-color="#0dff00"/><stop offset="0.704" stop-color="#00ff46"/><stop offset="0.748" stop-color="#00f7ff"/><stop offset="0.786" stop-color="#004fff"/><stop offset="0.818" stop-color="#0013ff"/><stop offset="1.000" stop-color="#0000fc"/></linearGradient><linearGradient id="g142" x1="0" y1="0" x2="0" y2="1"><stop offset="0.000" stop-color="#000021"/><stop offset="0.031" stop-color="#000000"/><stop offset="0.396" stop-color="#000000"/><stop offset="0.428" stop-color="#000081"/><stop offset="0.447" stop-color="#0000e9"/><stop offset="0.453" stop-color="#000eff"/><stop offset="0.497" stop-color="#00fffa"/><stop offset="0.547" stop-color="#00ff47"/><stop offset="0.585" stop-color="#06ff00"/><stop offset="0.616" stop-color="#18ff00"/><stop offset="0.648" stop-color="#00ff08"/><stop offset="0.679" stop-color="#00ff55"/><stop offset="0.723" stop-color="#00f8ff"/><stop offset="0.755" stop-color="#004dff"/><stop offset="0.774" stop-color="#0000fa"/><stop offset="0.799" stop-color="#0000c5"/><stop offset="0.824" stop-color="#0000b3"/><stop offset="1.000" stop-color="#0000a9"/></linearGradient><linearGradient id="g143" x1="0" y1="0" x2="0" y2="1"><stop offset="0.000" stop-color="#000000"/><stop offset="0.409" stop-color="#000000"/><stop offset="0.415" stop-color="#000004"/><stop offset="0.465" stop-color="#0000fd"/><stop offset="0.497" stop-color="#00b0ff"/><stop offset="0.516" stop-color="#00fff4"/><stop offset="0.560" stop-color="#00ff70"/><stop offset="0.597" stop-color="#00ff3e"/><stop offset="0.623" stop-color="#00ff41"/><stop offset="0.648" stop-color="#00ff62"/><stop offset="0.673" stop-color="#00ffa2"/><stop offset="0.698" stop-color="#00fffe"/><stop offset="0.704" stop-color="#00e1ff"/><stop offset="0.742" stop-color="#0010ff"/><stop offset="0.748" stop-color="#0000ef"/><stop offset="0.780" stop-color="#00007f"/><stop offset="0.805" stop-color="#000061"/><stop offset="1.000" stop-color="#000053"/></linearGradient><linearGradient id="g144" x1="0" y1="0" x2="0" y2="1"><stop offset="0.000" stop-color="#000000"/><stop offset="0.421" stop-color="#000003"/><stop offset="0.472" stop-color="#0000e4"/><stop offset="0.478" stop-color="#0004ff"/><stop offset="0.528" stop-color="#00fffe"/><stop offset="0.572" stop-color="#00ff7b"/><stop offset="0.610" stop-color="#00ff49"/><stop offset="0.635" stop-color="#00ff4c"/><stop offset="0.660" stop-color="#00ff6d"/><stop offset="0.711" stop-color="#00f6ff"/><stop offset="0.755" stop-color="#000aff"/><stop offset="0.761" stop-color="#0000ec"/><stop offset="0.792" stop-color="#00007e"/><stop offset="0.818" stop-color="#00005f"/><stop offset="1.000" stop-color="#00004e"/></linearGradient><linearGradient id="g145" x1="0" y1="0" x2="0" y2="1"><stop offset="0.000" stop-color="#000008"/><stop offset="0.403" stop-color="#000000"/><stop offset="0.434" stop-color="#000088"/><stop offset="0.453" stop-color="#0000f0"/><stop offset="0.459" stop-color="#0014ff"/><stop offset="0.503" stop-color="#00fffb"/><stop offset="0.553" stop-color="#00ff54"/><stop offset="0.579" stop-color="#00ff23"/><stop offset="0.604" stop-color="#00ff0d"/><stop offset="0.629" stop-color="#00ff14"/><stop offset="0.654" stop-color="#00ff39"/><stop offset="0.679" stop-color="#00ff7c"/><stop offset="0.711" stop-color="#00fff3"/><stop offset="0.717" stop-color="#00ecff"/><stop offset="0.755" stop-color="#0024ff"/><stop offset="0.767" stop-color="#0000ee"/><stop offset="0.792" stop-color="#0000b2"/><stop offset="0.818" stop-color="#00009c"/><stop offset="1.000" stop-color="#000091"/></linearGradient><linearGradient id="g146" x1="0" y1="0" x2="0" y2="1"><stop offset="0.000" stop-color="#000023"/><stop offset="0.031" stop-color="#000000"/><stop offset="0.396" stop-color="#000000"/><stop offset="0.421" stop-color="#00006e"/><stop offset="0.447" stop-color="#0000f9"/><stop offset="0.491" stop-color="#00f7ff"/><stop offset="0.497" stop-color="#00ffeb"/><stop offset="0.547" stop-color="#00ff42"/><stop offset="0.572" stop-color="#00ff10"/><stop offset="0.591" stop-color="#04ff00"/><stop offset="0.623" stop-color="#02ff00"/><stop offset="0.648" stop-color="#00ff21"/><stop offset="0.679" stop-color="#00ff76"/><stop offset="0.711" stop-color="#00fff2"/><stop offset="0.717" stop-color="#00edff"/><stop offset="0.748" stop-color="#0047ff"/><stop offset="0.767" stop-color="#0000f9"/><stop offset="0.786" stop-color="#0000d0"/><stop offset="0.811" stop-color="#0000bb"/><stop offset="1.000" stop-color="#0000b1"/></linearGradient><linearGradient id="g147" x1="0" y1="0" x2="0" y2="1"><stop offset="0.000" stop-color="#000009"/><stop offset="0.403" stop-color="#000000"/><stop offset="0.434" stop-color="#000077"/><stop offset="0.459" stop-color="#0000f5"/><stop offset="0.509" stop-color="#00f9ff"/><stop offset="0.516" stop-color="#00ffec"/><stop offset="0.566" stop-color="#00ff51"/><stop offset="0.591" stop-color="#00ff25"/><stop offset="0.616" stop-color="#00ff14"/><stop offset="0.642" stop-color="#00ff20"/><stop offset="0.667" stop-color="#00ff4a"/><stop offset="0.692" stop-color="#00ff91"/><stop offset="0.717" stop-color="#00fff0"/><stop offset="0.723" stop-color="#00f1ff"/><stop offset="0.761" stop-color="#002eff"/><stop offset="0.774" stop-color="#0000f8"/><stop offset="0.799" stop-color="#0000bb"/><stop offset="0.824" stop-color="#0000a3"/><stop offset="1.000" stop-color="#000095"/></linearGradient><linearGradient id="g148" x1="0" y1="0" x2="0" y2="1"><stop offset="0.000" stop-color="#000004"/><stop offset="0.403" stop-color="#000000"/><stop offset="0.434" stop-color="#000085"/><stop offset="0.453" stop-color="#0000ec"/><stop offset="0.459" stop-color="#0010ff"/><stop offset="0.503" stop-color="#00fdff"/><stop offset="0.509" stop-color="#00ffe8"/><stop offset="0.560" stop-color="#00ff51"/><stop offset="0.604" stop-color="#00ff1c"/><stop offset="0.629" stop-color="#00ff25"/><stop offset="0.654" stop-color="#00ff4c"/><stop offset="0.679" stop-color="#00ff8f"/><stop offset="0.711" stop-color="#00f5ff"/><stop offset="0.748" stop-color="#0030ff"/><stop offset="0.761" stop-color="#0000f8"/><stop offset="0.786" stop-color="#0000b6"/><stop offset="0.811" stop-color="#00009d"/><stop offset="1.000" stop-color="#000090"/></linearGradient><linearGradient id="g149" x1="0" y1="0" x2="0" y2="1"><stop offset="0.000" stop-color="#000000"/><stop offset="0.409" stop-color="#000000"/><stop offset="0.415" stop-color="#00000b"/><stop offset="0.440" stop-color="#00007e"/><stop offset="0.459" stop-color="#0000e5"/><stop offset="0.465" stop-color="#0007ff"/><stop offset="0.497" stop-color="#00b4ff"/><stop offset="0.516" stop-color="#00fff5"/><stop offset="0.560" stop-color="#00ff79"/><stop offset="0.597" stop-color="#00ff4e"/><stop offset="0.642" stop-color="#00ff6c"/><stop offset="0.667" stop-color="#00ffa7"/><stop offset="0.692" stop-color="#00fffc"/><stop offset="0.698" stop-color="#00e5ff"/><stop offset="0.742" stop-color="#0000fd"/><stop offset="0.774" stop-color="#000090"/><stop offset="0.799" stop-color="#00006e"/><stop offset="1.000" stop-color="#000061"/></linearGradient><linearGradient id="g150" x1="0" y1="0" x2="0" y2="1"><stop offset="0.000" stop-color="#000001"/><stop offset="0.403" stop-color="#000000"/><stop offset="0.409" stop-color="#000005"/><stop offset="0.459" stop-color="#0000ed"/><stop offset="0.465" stop-color="#000eff"/><stop offset="0.497" stop-color="#00b2ff"/><stop offset="0.516" stop-color="#00fff7"/><stop offset="0.566" stop-color="#00ff60"/><stop offset="0.610" stop-color="#00ff28"/><stop offset="0.635" stop-color="#00ff2e"/><stop offset="0.660" stop-color="#00ff52"/><stop offset="0.686" stop-color="#00ff93"/><stop offset="0.717" stop-color="#00f6ff"/><stop offset="0.767" stop-color="#0000fe"/><stop offset="0.792" stop-color="#0000bc"/><stop offset="0.824" stop-color="#00009d"/><stop offset="1.000" stop-color="#000091"/></linearGradient><linearGradient id="g151" x1="0" y1="0" x2="0" y2="1"><stop offset="0.000" stop-color="#000000"/><stop offset="0.415" stop-color="#000000"/><stop offset="0.447" stop-color="#00007e"/><stop offset="0.472" stop-color="#0002ff"/><stop offset="0.509" stop-color="#00c5ff"/><stop offset="0.522" stop-color="#00fbff"/><stop offset="0.528" stop-color="#00ffed"/><stop offset="0.572" stop-color="#00ff83"/><stop offset="0.610" stop-color="#00ff68"/><stop offset="0.648" stop-color="#00ff8d"/><stop offset="0.686" stop-color="#00fff4"/><stop offset="0.692" stop-color="#00f1ff"/><stop offset="0.742" stop-color="#0000f3"/><stop offset="0.774" stop-color="#000083"/><stop offset="0.799" stop-color="#000061"/><stop offset="1.000" stop-color="#000052"/></linearGradient><linearGradient id="g152" x1="0" y1="0" x2="0" y2="1"><stop offset="0.000" stop-color="#000000"/><stop offset="0.390" stop-color="#000000"/><stop offset="0.409" stop-color="#000042"/><stop offset="0.440" stop-color="#0000e7"/><stop offset="0.447" stop-color="#000dff"/><stop offset="0.491" stop-color="#00fffb"/><stop offset="0.522" stop-color="#00ff88"/><stop offset="0.547" stop-color="#00ff43"/><stop offset="0.572" stop-color="#00ff16"/><stop offset="0.597" stop-color="#00ff03"/><stop offset="0.629" stop-color="#00ff12"/><stop offset="0.654" stop-color="#00ff3e"/><stop offset="0.679" stop-color="#00ff87"/><stop offset="0.711" stop-color="#00fbff"/><stop offset="0.742" stop-color="#005eff"/><stop offset="0.767" stop-color="#0001ff"/><stop offset="0.811" stop-color="#0000d2"/><stop offset="1.000" stop-color="#0000cb"/></linearGradient><linearGradient id="g153" x1="0" y1="0" x2="0" y2="1"><stop offset="0.000" stop-color="#000000"/><stop offset="0.321" stop-color="#00000c"/><stop offset="0.333" stop-color="#00001a"/><stop offset="0.384" stop-color="#00009b"/><stop offset="0.409" stop-color="#0000f6"/><stop offset="0.459" stop-color="#00f9ff"/><stop offset="0.465" stop-color="#00ffeb"/><stop offset="0.535" stop-color="#00ff00"/><stop offset="0.572" stop-color="#59ff00"/><stop offset="0.610" stop-color="#7eff00"/><stop offset="0.648" stop-color="#65ff00"/><stop offset="0.686" stop-color="#0cff00"/><stop offset="0.698" stop-color="#00ff1d"/><stop offset="0.761" stop-color="#00fffe"/><stop offset="0.786" stop-color="#00c3ff"/><stop offset="0.811" stop-color="#00abff"/><stop offset="1.000" stop-color="#009eff"/></linearGradient><linearGradient id="g154" x1="0" y1="0" x2="0" y2="1"><stop offset="0.000" stop-color="#000000"/><stop offset="0.208" stop-color="#000001"/><stop offset="0.252" stop-color="#000034"/><stop offset="0.308" stop-color="#000038"/><stop offset="0.327" stop-color="#00005a"/><stop offset="0.358" stop-color="#000cff"/><stop offset="0.371" stop-color="#0040ff"/><stop offset="0.403" stop-color="#0095ff"/><stop offset="0.428" stop-color="#00ffff"/><stop offset="0.497" stop-color="#04ff00"/><stop offset="0.553" stop-color="#9bff00"/><stop offset="0.579" stop-color="#c0ff00"/><stop offset="0.604" stop-color="#ccff00"/><stop offset="0.648" stop-color="#a1ff00"/><stop offset="0.704" stop-color="#00ff09"/><stop offset="0.748" stop-color="#00ff97"/><stop offset="0.780" stop-color="#00ffc9"/><stop offset="1.000" stop-color="#00ffd8"/></linearGradient><linearGradient id="g155" x1="0" y1="0" x2="0" y2="1"><stop offset="0.000" stop-color="#000000"/><stop offset="0.214" stop-color="#000000"/><stop offset="0.264" stop-color="#000029"/><stop offset="0.340" stop-color="#00001f"/><stop offset="0.377" stop-color="#000073"/><stop offset="0.403" stop-color="#0000f1"/><stop offset="0.409" stop-color="#001aff"/><stop offset="0.440" stop-color="#00e7ff"/><stop offset="0.447" stop-color="#00fff3"/><stop offset="0.484" stop-color="#00ff4e"/><stop offset="0.509" stop-color="#0aff00"/><stop offset="0.553" stop-color="#7cff00"/><stop offset="0.597" stop-color="#a7ff00"/><stop offset="0.642" stop-color="#7fff00"/><stop offset="0.686" stop-color="#01ff00"/><stop offset="0.736" stop-color="#00ffbd"/><stop offset="0.761" stop-color="#00fdff"/><stop offset="0.799" stop-color="#00d4ff"/><stop offset="1.000" stop-color="#00cfff"/></linearGradient><linearGradient id="g156" x1="0" y1="0" x2="0" y2="1"><stop offset="0.000" stop-color="#000000"/><stop offset="0.396" stop-color="#000000"/><stop offset="0.409" stop-color="#000022"/><stop offset="0.453" stop-color="#0000f3"/><stop offset="0.497" stop-color="#00d6ff"/><stop offset="0.509" stop-color="#00fff3"/><stop offset="0.560" stop-color="#00ff5f"/><stop offset="0.585" stop-color="#00ff33"/><stop offset="0.610" stop-color="#00ff22"/><stop offset="0.635" stop-color="#00ff2c"/><stop offset="0.660" stop-color="#00ff52"/><stop offset="0.717" stop-color="#00f7ff"/><stop offset="0.755" stop-color="#0046ff"/><stop offset="0.774" stop-color="#0003ff"/><stop offset="0.799" stop-color="#0000d7"/><stop offset="0.824" stop-color="#0000c9"/><stop offset="1.000" stop-color="#0000bf"/></linearGradient><linearGradient id="g157" x1="0" y1="0" x2="0" y2="1"><stop offset="0.000" stop-color="#000000"/><stop offset="0.371" stop-color="#000003"/><stop offset="0.403" stop-color="#00007f"/><stop offset="0.421" stop-color="#0000ef"/><stop offset="0.428" stop-color="#0018ff"/><stop offset="0.465" stop-color="#00fbff"/><stop offset="0.472" stop-color="#00ffe7"/><stop offset="0.509" stop-color="#00ff57"/><stop offset="0.541" stop-color="#01ff00"/><stop offset="0.572" stop-color="#3cff00"/><stop offset="0.604" stop-color="#4fff00"/><stop offset="0.629" stop-color="#3fff00"/><stop offset="0.660" stop-color="#02ff00"/><stop offset="0.736" stop-color="#00f3ff"/><stop offset="0.761" stop-color="#009aff"/><stop offset="0.792" stop-color="#006aff"/><stop offset="1.000" stop-color="#005eff"/></linearGradient><linearGradient id="g158" x1="0" y1="0" x2="0" y2="1"><stop offset="0.000" stop-color="#000000"/><stop offset="0.208" stop-color="#000000"/><stop offset="0.258" stop-color="#00002f"/><stop offset="0.346" stop-color="#000048"/><stop offset="0.371" stop-color="#000072"/><stop offset="0.403" stop-color="#000dff"/><stop offset="0.440" stop-color="#00fffc"/><stop offset="0.478" stop-color="#00ff52"/><stop offset="0.503" stop-color="#08ff00"/><stop offset="0.553" stop-color="#88ff00"/><stop offset="0.597" stop-color="#afff00"/><stop offset="0.642" stop-color="#84ff00"/><stop offset="0.686" stop-color="#05ff00"/><stop offset="0.742" stop-color="#00ffc4"/><stop offset="0.774" stop-color="#00fffe"/><stop offset="1.000" stop-color="#00f1ff"/></linearGradient><linearGradient id="g159" x1="0" y1="0" x2="0" y2="1"><stop offset="0.000" stop-color="#000000"/><stop offset="0.239" stop-color="#000002"/><stop offset="0.270" stop-color="#00003b"/><stop offset="0.283" stop-color="#000077"/><stop offset="0.302" stop-color="#0000f8"/><stop offset="0.308" stop-color="#001fff"/><stop offset="0.321" stop-color="#0049ff"/><stop offset="0.365" stop-color="#004fff"/><stop offset="0.390" stop-color="#0069ff"/><stop offset="0.415" stop-color="#00a1ff"/><stop offset="0.440" stop-color="#00f3ff"/><stop offset="0.528" stop-color="#00ff05"/><stop offset="0.560" stop-color="#42ff00"/><stop offset="0.591" stop-color="#6dff00"/><stop offset="0.623" stop-color="#72ff00"/><stop offset="0.654" stop-color="#4eff00"/><stop offset="0.686" stop-color="#02ff00"/><stop offset="0.748" stop-color="#00ffb8"/><stop offset="0.792" stop-color="#00fff5"/><stop offset="1.000" stop-color="#00fdff"/></linearGradient><linearGradient id="g160" x1="0" y1="0" x2="0" y2="1"><stop offset="0.000" stop-color="#000000"/><stop offset="0.283" stop-color="#000000"/><stop offset="0.314" stop-color="#000065"/><stop offset="0.384" stop-color="#00007a"/><stop offset="0.403" stop-color="#00009f"/><stop offset="0.428" stop-color="#0000f0"/><stop offset="0.434" stop-color="#000bff"/><stop offset="0.484" stop-color="#00f4ff"/><stop offset="0.491" stop-color="#00fff1"/><stop offset="0.522" stop-color="#00ff8c"/><stop offset="0.553" stop-color="#00ff43"/><stop offset="0.579" stop-color="#00ff20"/><stop offset="0.604" stop-color="#00ff15"/><stop offset="0.629" stop-color="#00ff25"/><stop offset="0.654" stop-color="#00ff50"/><stop offset="0.711" stop-color="#00ffff"/><stop offset="0.748" stop-color="#0070ff"/><stop offset="0.786" stop-color="#002fff"/><stop offset="1.000" stop-color="#0022ff"/></linearGradient><linearGradient id="g161" x1="0" y1="0" x2="0" y2="1"><stop offset="0.000" stop-color="#000000"/><stop offset="0.377" stop-color="#000000"/><stop offset="0.384" stop-color="#000008"/><stop offset="0.396" stop-color="#00003d"/><stop offset="0.428" stop-color="#0000e4"/><stop offset="0.434" stop-color="#000aff"/><stop offset="0.459" stop-color="#00a4ff"/><stop offset="0.478" stop-color="#00fff8"/><stop offset="0.516" stop-color="#00ff70"/><stop offset="0.553" stop-color="#00ff16"/><stop offset="0.572" stop-color="#04ff00"/><stop offset="0.597" stop-color="#11ff00"/><stop offset="0.623" stop-color="#03ff00"/><stop offset="0.660" stop-color="#00ff45"/><stop offset="0.711" stop-color="#00fff5"/><stop offset="0.717" stop-color="#00eeff"/><stop offset="0.755" stop-color="#005dff"/><stop offset="0.786" stop-color="#002dff"/><stop offset="1.000" stop-color="#0023ff"/></linearGradient><filter id="blclipL" x="-5%" y="-5%" width="110%" height="110%"><feGaussianBlur stdDeviation="0.9 0.6"/></filter><clipPath id="clipL"><rect x="91" y="65" width="632" height="475"/></clipPath></defs>
<g clip-path="url(#clipL)"><g filter="url(#blclipL)"><rect x="237.00" y="65" width="3.30" height="475" fill="url(#g0)"/><rect x="240.00" y="65" width="3.30" height="475" fill="url(#g1)"/><rect x="243.00" y="65" width="3.30" height="475" fill="url(#g2)"/><rect x="246.00" y="65" width="3.30" height="475" fill="url(#g3)"/><rect x="249.00" y="65" width="3.30" height="475" fill="url(#g4)"/><rect x="252.00" y="65" width="3.30" height="475" fill="url(#g5)"/><rect x="255.00" y="65" width="3.30" height="475" fill="url(#g6)"/><rect x="258.00" y="65" width="3.30" height="475" fill="url(#g7)"/><rect x="261.00" y="65" width="3.30" height="475" fill="url(#g8)"/><rect x="264.00" y="65" width="3.30" height="475" fill="url(#g9)"/><rect x="267.00" y="65" width="3.30" height="475" fill="url(#g10)"/><rect x="270.00" y="65" width="3.30" height="475" fill="url(#g11)"/><rect x="273.00" y="65" width="3.30" height="475" fill="url(#g12)"/><rect x="276.00" y="65" width="3.30" height="475" fill="url(#g13)"/><rect x="279.00" y="65" width="3.30" height="475" fill="url(#g14)"/><rect x="282.00" y="65" width="3.30" height="475" fill="url(#g15)"/><rect x="285.00" y="65" width="3.30" height="475" fill="url(#g16)"/><rect x="288.00" y="65" width="3.30" height="475" fill="url(#g17)"/><rect x="291.00" y="65" width="3.30" height="475" fill="url(#g18)"/><rect x="294.00" y="65" width="3.30" height="475" fill="url(#g19)"/><rect x="297.00" y="65" width="3.30" height="475" fill="url(#g20)"/><rect x="300.00" y="65" width="3.30" height="475" fill="url(#g21)"/><rect x="303.00" y="65" width="3.30" height="475" fill="url(#g22)"/><rect x="306.00" y="65" width="3.30" height="475" fill="url(#g23)"/><rect x="309.00" y="65" width="3.30" height="475" fill="url(#g24)"/><rect x="312.00" y="65" width="3.30" height="475" fill="url(#g25)"/><rect x="315.00" y="65" width="3.30" height="475" fill="url(#g26)"/><rect x="318.00" y="65" width="3.30" height="475" fill="url(#g27)"/><rect x="321.00" y="65" width="3.30" height="475" fill="url(#g28)"/><rect x="324.00" y="65" width="3.30" height="475" fill="url(#g29)"/><rect x="327.00" y="65" width="3.30" height="475" fill="url(#g30)"/><rect x="330.00" y="65" width="3.30" height="475" fill="url(#g31)"/><rect x="333.00" y="65" width="3.30" height="475" fill="url(#g32)"/><rect x="336.00" y="65" width="3.30" height="475" fill="url(#g33)"/><rect x="339.00" y="65" width="3.30" height="475" fill="url(#g34)"/><rect x="342.00" y="65" width="3.30" height="475" fill="url(#g35)"/><rect x="345.00" y="65" width="3.30" height="475" fill="url(#g36)"/><rect x="348.00" y="65" width="3.30" height="475" fill="url(#g37)"/><rect x="351.00" y="65" width="3.30" height="475" fill="url(#g38)"/><rect x="354.00" y="65" width="3.30" height="475" fill="url(#g39)"/><rect x="357.00" y="65" width="3.30" height="475" fill="url(#g40)"/><rect x="360.00" y="65" width="3.30" height="475" fill="url(#g41)"/><rect x="363.00" y="65" width="3.30" height="475" fill="url(#g42)"/><rect x="366.00" y="65" width="3.30" height="475" fill="url(#g43)"/><rect x="369.00" y="65" width="3.30" height="475" fill="url(#g44)"/><rect x="372.00" y="65" width="3.30" height="475" fill="url(#g45)"/><rect x="375.00" y="65" width="3.30" height="475" fill="url(#g46)"/><rect x="378.00" y="65" width="3.30" height="475" fill="url(#g47)"/><rect x="381.00" y="65" width="3.30" height="475" fill="url(#g48)"/><rect x="384.00" y="65" width="3.30" height="475" fill="url(#g49)"/><rect x="387.00" y="65" width="3.30" height="475" fill="url(#g50)"/><rect x="390.00" y="65" width="3.30" height="475" fill="url(#g51)"/><rect x="393.00" y="65" width="3.30" height="475" fill="url(#g52)"/><rect x="396.00" y="65" width="3.30" height="475" fill="url(#g53)"/><rect x="399.00" y="65" width="3.30" height="475" fill="url(#g54)"/><rect x="402.00" y="65" width="3.30" height="475" fill="url(#g55)"/><rect x="405.00" y="65" width="3.30" height="475" fill="url(#g56)"/><rect x="408.00" y="65" width="3.30" height="475" fill="url(#g57)"/><rect x="411.00" y="65" width="3.30" height="475" fill="url(#g58)"/><rect x="414.00" y="65" width="3.30" height="475" fill="url(#g59)"/><rect x="417.00" y="65" width="3.30" height="475" fill="url(#g60)"/><rect x="420.00" y="65" width="3.30" height="475" fill="url(#g61)"/><rect x="423.00" y="65" width="3.30" height="475" fill="url(#g62)"/><rect x="426.00" y="65" width="3.30" height="475" fill="url(#g63)"/><rect x="429.00" y="65" width="3.30" height="475" fill="url(#g64)"/><rect x="432.00" y="65" width="3.30" height="475" fill="url(#g65)"/><rect x="435.00" y="65" width="3.30" height="475" fill="url(#g66)"/><rect x="438.00" y="65" width="3.30" height="475" fill="url(#g67)"/><rect x="441.00" y="65" width="3.30" height="475" fill="url(#g68)"/><rect x="444.00" y="65" width="3.30" height="475" fill="url(#g69)"/><rect x="447.00" y="65" width="3.30" height="475" fill="url(#g70)"/><rect x="450.00" y="65" width="3.30" height="475" fill="url(#g71)"/><rect x="453.00" y="65" width="3.30" height="475" fill="url(#g72)"/><rect x="456.00" y="65" width="3.30" height="475" fill="url(#g73)"/><rect x="459.00" y="65" width="3.30" height="475" fill="url(#g74)"/><rect x="462.00" y="65" width="3.30" height="475" fill="url(#g75)"/><rect x="465.00" y="65" width="3.30" height="475" fill="url(#g76)"/><rect x="468.00" y="65" width="3.30" height="475" fill="url(#g77)"/><rect x="471.00" y="65" width="3.30" height="475" fill="url(#g78)"/><rect x="474.00" y="65" width="3.30" height="475" fill="url(#g79)"/><rect x="477.00" y="65" width="3.30" height="475" fill="url(#g80)"/><rect x="480.00" y="65" width="3.30" height="475" fill="url(#g81)"/><rect x="483.00" y="65" width="3.30" height="475" fill="url(#g82)"/><rect x="486.00" y="65" width="3.30" height="475" fill="url(#g83)"/><rect x="489.00" y="65" width="3.30" height="475" fill="url(#g84)"/><rect x="492.00" y="65" width="3.30" height="475" fill="url(#g85)"/><rect x="495.00" y="65" width="3.30" height="475" fill="url(#g86)"/><rect x="498.00" y="65" width="3.30" height="475" fill="url(#g87)"/><rect x="501.00" y="65" width="3.30" height="475" fill="url(#g88)"/><rect x="504.00" y="65" width="3.30" height="475" fill="url(#g89)"/><rect x="507.00" y="65" width="3.30" height="475" fill="url(#g90)"/><rect x="510.00" y="65" width="3.30" height="475" fill="url(#g91)"/><rect x="513.00" y="65" width="3.30" height="475" fill="url(#g92)"/><rect x="516.00" y="65" width="3.30" height="475" fill="url(#g93)"/><rect x="519.00" y="65" width="3.30" height="475" fill="url(#g94)"/><rect x="522.00" y="65" width="3.30" height="475" fill="url(#g95)"/><rect x="525.00" y="65" width="3.30" height="475" fill="url(#g96)"/><rect x="528.00" y="65" width="3.30" height="475" fill="url(#g97)"/><rect x="531.00" y="65" width="3.30" height="475" fill="url(#g98)"/><rect x="534.00" y="65" width="3.30" height="475" fill="url(#g99)"/><rect x="537.00" y="65" width="3.30" height="475" fill="url(#g100)"/><rect x="540.00" y="65" width="3.30" height="475" fill="url(#g101)"/><rect x="543.00" y="65" width="3.30" height="475" fill="url(#g102)"/><rect x="546.00" y="65" width="3.30" height="475" fill="url(#g103)"/><rect x="549.00" y="65" width="3.30" height="475" fill="url(#g104)"/><rect x="552.00" y="65" width="3.30" height="475" fill="url(#g105)"/><rect x="555.00" y="65" width="3.30" height="475" fill="url(#g106)"/><rect x="558.00" y="65" width="3.30" height="475" fill="url(#g107)"/><rect x="561.00" y="65" width="3.30" height="475" fill="url(#g108)"/><rect x="564.00" y="65" width="3.30" height="475" fill="url(#g109)"/><rect x="567.00" y="65" width="3.30" height="475" fill="url(#g110)"/><rect x="570.00" y="65" width="3.30" height="475" fill="url(#g111)"/><rect x="573.00" y="65" width="3.30" height="475" fill="url(#g112)"/><rect x="576.00" y="65" width="3.30" height="475" fill="url(#g113)"/><rect x="579.00" y="65" width="3.30" height="475" fill="url(#g114)"/><rect x="582.00" y="65" width="3.30" height="475" fill="url(#g115)"/><rect x="585.00" y="65" width="3.30" height="475" fill="url(#g116)"/><rect x="588.00" y="65" width="3.30" height="475" fill="url(#g117)"/><rect x="591.00" y="65" width="3.30" height="475" fill="url(#g118)"/><rect x="594.00" y="65" width="3.30" height="475" fill="url(#g119)"/><rect x="597.00" y="65" width="3.30" height="475" fill="url(#g120)"/><rect x="600.00" y="65" width="3.30" height="475" fill="url(#g121)"/><rect x="603.00" y="65" width="3.30" height="475" fill="url(#g122)"/><rect x="606.00" y="65" width="3.30" height="475" fill="url(#g123)"/><rect x="609.00" y="65" width="3.30" height="475" fill="url(#g124)"/><rect x="612.00" y="65" width="3.30" height="475" fill="url(#g125)"/><rect x="615.00" y="65" width="3.30" height="475" fill="url(#g126)"/><rect x="618.00" y="65" width="3.30" height="475" fill="url(#g127)"/><rect x="621.00" y="65" width="3.30" height="475" fill="url(#g128)"/><rect x="624.00" y="65" width="3.30" height="475" fill="url(#g129)"/><rect x="627.00" y="65" width="3.30" height="475" fill="url(#g130)"/><rect x="630.00" y="65" width="3.30" height="475" fill="url(#g131)"/><rect x="633.00" y="65" width="3.30" height="475" fill="url(#g132)"/><rect x="636.00" y="65" width="3.30" height="475" fill="url(#g133)"/><rect x="639.00" y="65" width="3.30" height="475" fill="url(#g134)"/><rect x="642.00" y="65" width="3.30" height="475" fill="url(#g135)"/><rect x="645.00" y="65" width="3.30" height="475" fill="url(#g136)"/><rect x="648.00" y="65" width="3.30" height="475" fill="url(#g137)"/><rect x="651.00" y="65" width="3.30" height="475" fill="url(#g138)"/><rect x="654.00" y="65" width="3.30" height="475" fill="url(#g139)"/><rect x="657.00" y="65" width="3.30" height="475" fill="url(#g140)"/><rect x="660.00" y="65" width="3.30" height="475" fill="url(#g141)"/><rect x="663.00" y="65" width="3.30" height="475" fill="url(#g142)"/><rect x="666.00" y="65" width="3.30" height="475" fill="url(#g143)"/><rect x="669.00" y="65" width="3.30" height="475" fill="url(#g144)"/><rect x="672.00" y="65" width="3.30" height="475" fill="url(#g145)"/><rect x="675.00" y="65" width="3.30" height="475" fill="url(#g146)"/><rect x="678.00" y="65" width="3.30" height="475" fill="url(#g147)"/><rect x="681.00" y="65" width="3.30" height="475" fill="url(#g148)"/><rect x="684.00" y="65" width="3.30" height="475" fill="url(#g149)"/><rect x="687.00" y="65" width="3.30" height="475" fill="url(#g150)"/><rect x="690.00" y="65" width="3.30" height="475" fill="url(#g151)"/><rect x="693.00" y="65" width="3.30" height="475" fill="url(#g152)"/><rect x="696.00" y="65" width="3.30" height="475" fill="url(#g153)"/><rect x="699.00" y="65" width="3.30" height="475" fill="url(#g154)"/><rect x="702.00" y="65" width="3.30" height="475" fill="url(#g155)"/><rect x="705.00" y="65" width="3.30" height="475" fill="url(#g156)"/><rect x="708.00" y="65" width="3.30" height="475" fill="url(#g157)"/><rect x="711.00" y="65" width="3.30" height="475" fill="url(#g158)"/><rect x="714.00" y="65" width="3.30" height="475" fill="url(#g159)"/><rect x="717.00" y="65" width="3.30" height="475" fill="url(#g160)"/><rect x="720.00" y="65" width="3.30" height="475" fill="url(#g161)"/></g></g>
<defs><linearGradient id="g162" x1="0" y1="0" x2="0" y2="1"><stop offset="0.000" stop-color="#000000"/><stop offset="0.377" stop-color="#000000"/><stop offset="0.465" stop-color="#000029"/><stop offset="0.547" stop-color="#000000"/><stop offset="1.000" stop-color="#000000"/></linearGradient><linearGradient id="g163" x1="0" y1="0" x2="0" y2="1"><stop offset="0.000" stop-color="#000000"/><stop offset="0.283" stop-color="#000000"/><stop offset="0.390" stop-color="#0000aa"/><stop offset="0.465" stop-color="#0000d5"/><stop offset="0.535" stop-color="#0000aa"/><stop offset="0.642" stop-color="#000000"/><stop offset="1.000" stop-color="#000000"/></linearGradient><linearGradient id="g164" x1="0" y1="0" x2="0" y2="1"><stop offset="0.000" stop-color="#000000"/><stop offset="0.358" stop-color="#000000"/><stop offset="0.415" stop-color="#00002f"/><stop offset="0.465" stop-color="#00003d"/><stop offset="0.509" stop-color="#000030"/><stop offset="0.566" stop-color="#000000"/><stop offset="1.000" stop-color="#000000"/></linearGradient><linearGradient id="g165" x1="0" y1="0" x2="0" y2="1"><stop offset="0.000" stop-color="#000000"/><stop offset="0.346" stop-color="#000000"/><stop offset="0.409" stop-color="#000040"/><stop offset="0.465" stop-color="#000052"/><stop offset="0.522" stop-color="#00003c"/><stop offset="0.579" stop-color="#000000"/><stop offset="1.000" stop-color="#000000"/></linearGradient><linearGradient id="g166" x1="0" y1="0" x2="0" y2="1"><stop offset="0.000" stop-color="#000000"/><stop offset="0.226" stop-color="#000000"/><stop offset="0.239" stop-color="#00002c"/><stop offset="0.252" stop-color="#00003d"/><stop offset="0.465" stop-color="#000066"/><stop offset="0.660" stop-color="#00003f"/><stop offset="0.673" stop-color="#00002f"/><stop offset="0.686" stop-color="#000000"/><stop offset="1.000" stop-color="#000000"/></linearGradient><linearGradient id="g167" x1="0" y1="0" x2="0" y2="1"><stop offset="0.000" stop-color="#000000"/><stop offset="0.214" stop-color="#000000"/><stop offset="0.226" stop-color="#00005c"/><stop offset="0.245" stop-color="#0000ac"/><stop offset="0.465" stop-color="#0000d7"/><stop offset="0.667" stop-color="#0000ae"/><stop offset="0.686" stop-color="#000061"/><stop offset="0.698" stop-color="#000004"/><stop offset="0.704" stop-color="#000000"/><stop offset="1.000" stop-color="#000000"/></linearGradient><linearGradient id="g168" x1="0" y1="0" x2="0" y2="1"><stop offset="0.000" stop-color="#000000"/><stop offset="0.258" stop-color="#000000"/><stop offset="0.390" stop-color="#000072"/><stop offset="0.503" stop-color="#000098"/><stop offset="0.654" stop-color="#00002f"/><stop offset="0.679" stop-color="#000000"/><stop offset="1.000" stop-color="#000000"/></linearGradient><linearGradient id="g169" x1="0" y1="0" x2="0" y2="1"><stop offset="0.000" stop-color="#000000"/><stop offset="0.308" stop-color="#000000"/><stop offset="0.371" stop-color="#000060"/><stop offset="0.453" stop-color="#0000a5"/><stop offset="0.484" stop-color="#0007ff"/><stop offset="0.497" stop-color="#003cff"/><stop offset="0.509" stop-color="#0056ff"/><stop offset="0.648" stop-color="#0014ff"/><stop offset="0.660" stop-color="#0000fb"/><stop offset="0.673" stop-color="#0000b7"/><stop offset="0.692" stop-color="#00001d"/><stop offset="0.698" stop-color="#000000"/><stop offset="1.000" stop-color="#000000"/></linearGradient><linearGradient id="g170" x1="0" y1="0" x2="0" y2="1"><stop offset="0.000" stop-color="#000000"/><stop offset="0.258" stop-color="#000000"/><stop offset="0.283" stop-color="#000040"/><stop offset="0.384" stop-color="#0000c6"/><stop offset="0.415" stop-color="#0000e0"/><stop offset="0.465" stop-color="#0000dd"/><stop offset="0.503" stop-color="#0000f9"/><stop offset="0.553" stop-color="#0000d6"/><stop offset="0.654" stop-color="#000062"/><stop offset="0.667" stop-color="#000041"/><stop offset="0.679" stop-color="#000007"/><stop offset="0.686" stop-color="#000000"/><stop offset="1.000" stop-color="#000000"/></linearGradient><linearGradient id="g171" x1="0" y1="0" x2="0" y2="1"><stop offset="0.000" stop-color="#000000"/><stop offset="0.233" stop-color="#000000"/><stop offset="0.239" stop-color="#00001e"/><stop offset="0.258" stop-color="#0000ed"/><stop offset="0.264" stop-color="#002bff"/><stop offset="0.277" stop-color="#007fff"/><stop offset="0.283" stop-color="#0093ff"/><stop offset="0.409" stop-color="#00abff"/><stop offset="0.421" stop-color="#009fff"/><stop offset="0.440" stop-color="#002fff"/><stop offset="0.447" stop-color="#0000f7"/><stop offset="0.465" stop-color="#00006f"/><stop offset="0.478" stop-color="#000046"/><stop offset="0.553" stop-color="#000001"/><stop offset="1.000" stop-color="#000000"/></linearGradient><linearGradient id="g172" x1="0" y1="0" x2="0" y2="1"><stop offset="0.000" stop-color="#000000"/><stop offset="0.252" stop-color="#000000"/><stop offset="0.270" stop-color="#000071"/><stop offset="0.283" stop-color="#00009a"/><stop offset="0.321" stop-color="#0000b8"/><stop offset="0.371" stop-color="#000aff"/><stop offset="0.403" stop-color="#0054ff"/><stop offset="0.415" stop-color="#0060ff"/><stop offset="0.428" stop-color="#0048ff"/><stop offset="0.447" stop-color="#0000ef"/><stop offset="0.465" stop-color="#0000b1"/><stop offset="0.528" stop-color="#000087"/><stop offset="0.591" stop-color="#000000"/><stop offset="1.000" stop-color="#000000"/></linearGradient><linearGradient id="g173" x1="0" y1="0" x2="0" y2="1"><stop offset="0.000" stop-color="#000000"/><stop offset="0.308" stop-color="#000000"/><stop offset="0.314" stop-color="#000024"/><stop offset="0.340" stop-color="#0000fd"/><stop offset="0.346" stop-color="#0034ff"/><stop offset="0.377" stop-color="#00fff6"/><stop offset="0.403" stop-color="#00ff6d"/><stop offset="0.421" stop-color="#00ff45"/><stop offset="0.434" stop-color="#00ff5d"/><stop offset="0.465" stop-color="#00fff8"/><stop offset="0.522" stop-color="#00d3ff"/><stop offset="0.541" stop-color="#0097ff"/><stop offset="0.566" stop-color="#0013ff"/><stop offset="0.572" stop-color="#0000eb"/><stop offset="0.610" stop-color="#000000"/><stop offset="1.000" stop-color="#000000"/></linearGradient><linearGradient id="g174" x1="0" y1="0" x2="0" y2="1"><stop offset="0.000" stop-color="#000000"/><stop offset="0.314" stop-color="#000000"/><stop offset="0.321" stop-color="#00000a"/><stop offset="0.352" stop-color="#0000fe"/><stop offset="0.358" stop-color="#0031ff"/><stop offset="0.384" stop-color="#00fffe"/><stop offset="0.403" stop-color="#00ff8c"/><stop offset="0.415" stop-color="#00ff6b"/><stop offset="0.428" stop-color="#00ff78"/><stop offset="0.447" stop-color="#00ffda"/><stop offset="0.453" stop-color="#00f8ff"/><stop offset="0.465" stop-color="#00a3ff"/><stop offset="0.472" stop-color="#008dff"/><stop offset="0.516" stop-color="#0082ff"/><stop offset="0.535" stop-color="#0056ff"/><stop offset="0.553" stop-color="#0009ff"/><stop offset="0.560" stop-color="#0000ec"/><stop offset="0.597" stop-color="#00003a"/><stop offset="0.616" stop-color="#000000"/><stop offset="1.000" stop-color="#000000"/></linearGradient><linearGradient id="g175" x1="0" y1="0" x2="0" y2="1"><stop offset="0.000" stop-color="#000000"/><stop offset="0.333" stop-color="#000000"/><stop offset="0.340" stop-color="#000018"/><stop offset="0.352" stop-color="#000075"/><stop offset="0.365" stop-color="#0000f1"/><stop offset="0.371" stop-color="#003cff"/><stop offset="0.390" stop-color="#00fffe"/><stop offset="0.403" stop-color="#00ffc0"/><stop offset="0.409" stop-color="#00ffb4"/><stop offset="0.415" stop-color="#00ffb4"/><stop offset="0.428" stop-color="#00ffde"/><stop offset="0.434" stop-color="#00f8ff"/><stop offset="0.459" stop-color="#0000ff"/><stop offset="0.472" stop-color="#0000db"/><stop offset="0.484" stop-color="#0004ff"/><stop offset="0.509" stop-color="#008dff"/><stop offset="0.522" stop-color="#00a6ff"/><stop offset="0.629" stop-color="#005cff"/><stop offset="0.635" stop-color="#004aff"/><stop offset="0.648" stop-color="#0000f6"/><stop offset="0.673" stop-color="#000000"/><stop offset="1.000" stop-color="#000000"/></linearGradient><linearGradient id="g176" x1="0" y1="0" x2="0" y2="1"><stop offset="0.000" stop-color="#000000"/><stop offset="0.321" stop-color="#000000"/><stop offset="0.327" stop-color="#00001a"/><stop offset="0.352" stop-color="#0000f1"/><stop offset="0.358" stop-color="#0035ff"/><stop offset="0.377" stop-color="#00fffc"/><stop offset="0.396" stop-color="#00ff86"/><stop offset="0.409" stop-color="#00ff6f"/><stop offset="0.421" stop-color="#00ff8c"/><stop offset="0.434" stop-color="#00ffd7"/><stop offset="0.440" stop-color="#00f3ff"/><stop offset="0.453" stop-color="#007fff"/><stop offset="0.465" stop-color="#0045ff"/><stop offset="0.516" stop-color="#0078ff"/><stop offset="0.535" stop-color="#0058ff"/><stop offset="0.566" stop-color="#0000f1"/><stop offset="0.604" stop-color="#000087"/><stop offset="0.635" stop-color="#00005b"/><stop offset="0.654" stop-color="#000000"/><stop offset="1.000" stop-color="#000000"/></linearGradient><linearGradient id="g177" x1="0" y1="0" x2="0" y2="1"><stop offset="0.000" stop-color="#000000"/><stop offset="0.321" stop-color="#000000"/><stop offset="0.327" stop-color="#000005"/><stop offset="0.358" stop-color="#0000fd"/><stop offset="0.365" stop-color="#0040ff"/><stop offset="0.384" stop-color="#00fff7"/><stop offset="0.403" stop-color="#00ff86"/><stop offset="0.415" stop-color="#00ff76"/><stop offset="0.428" stop-color="#00ff99"/><stop offset="0.440" stop-color="#00ffeb"/><stop offset="0.447" stop-color="#00daff"/><stop offset="0.459" stop-color="#0068ff"/><stop offset="0.472" stop-color="#0032ff"/><stop offset="0.509" stop-color="#0032ff"/><stop offset="0.535" stop-color="#0000f9"/><stop offset="0.591" stop-color="#000000"/><stop offset="1.000" stop-color="#000000"/></linearGradient><linearGradient id="g178" x1="0" y1="0" x2="0" y2="1"><stop offset="0.000" stop-color="#000000"/><stop offset="0.321" stop-color="#000000"/><stop offset="0.352" stop-color="#0000ec"/><stop offset="0.358" stop-color="#001aff"/><stop offset="0.384" stop-color="#00f1ff"/><stop offset="0.403" stop-color="#00ff86"/><stop offset="0.415" stop-color="#00ff58"/><stop offset="0.421" stop-color="#00ff53"/><stop offset="0.434" stop-color="#00ff70"/><stop offset="0.453" stop-color="#00ffe8"/><stop offset="0.459" stop-color="#00e5ff"/><stop offset="0.472" stop-color="#0098ff"/><stop offset="0.516" stop-color="#0075ff"/><stop offset="0.553" stop-color="#0000f2"/><stop offset="0.597" stop-color="#000000"/><stop offset="1.000" stop-color="#000000"/></linearGradient><linearGradient id="g179" x1="0" y1="0" x2="0" y2="1"><stop offset="0.000" stop-color="#000000"/><stop offset="0.314" stop-color="#000000"/><stop offset="0.346" stop-color="#0002ff"/><stop offset="0.377" stop-color="#00e3ff"/><stop offset="0.384" stop-color="#00ffec"/><stop offset="0.403" stop-color="#00ff6b"/><stop offset="0.421" stop-color="#00ff2d"/><stop offset="0.440" stop-color="#00ff5a"/><stop offset="0.465" stop-color="#00fff5"/><stop offset="0.478" stop-color="#00ddff"/><stop offset="0.522" stop-color="#00bdff"/><stop offset="0.541" stop-color="#0080ff"/><stop offset="0.566" stop-color="#0000f8"/><stop offset="0.604" stop-color="#000008"/><stop offset="0.610" stop-color="#000000"/><stop offset="1.000" stop-color="#000000"/></linearGradient><linearGradient id="g180" x1="0" y1="0" x2="0" y2="1"><stop offset="0.000" stop-color="#000000"/><stop offset="0.308" stop-color="#000000"/><stop offset="0.314" stop-color="#00002c"/><stop offset="0.333" stop-color="#0000e1"/><stop offset="0.340" stop-color="#001dff"/><stop offset="0.365" stop-color="#00e9ff"/><stop offset="0.371" stop-color="#00ffe9"/><stop offset="0.396" stop-color="#00ff41"/><stop offset="0.415" stop-color="#00ff03"/><stop offset="0.434" stop-color="#00ff2d"/><stop offset="0.453" stop-color="#00ff9f"/><stop offset="0.465" stop-color="#00ffd7"/><stop offset="0.509" stop-color="#00ffdd"/><stop offset="0.528" stop-color="#00fffc"/><stop offset="0.547" stop-color="#00baff"/><stop offset="0.579" stop-color="#0000f3"/><stop offset="0.610" stop-color="#000013"/><stop offset="0.616" stop-color="#000000"/><stop offset="1.000" stop-color="#000000"/></linearGradient><linearGradient id="g181" x1="0" y1="0" x2="0" y2="1"><stop offset="0.000" stop-color="#000000"/><stop offset="0.321" stop-color="#000000"/><stop offset="0.327" stop-color="#000009"/><stop offset="0.352" stop-color="#0000d8"/><stop offset="0.358" stop-color="#0019ff"/><stop offset="0.377" stop-color="#00faff"/><stop offset="0.396" stop-color="#00ff76"/><stop offset="0.409" stop-color="#00ff54"/><stop offset="0.421" stop-color="#00ff69"/><stop offset="0.440" stop-color="#00ffe7"/><stop offset="0.447" stop-color="#00d8ff"/><stop offset="0.459" stop-color="#0067ff"/><stop offset="0.465" stop-color="#0049ff"/><stop offset="0.509" stop-color="#0048ff"/><stop offset="0.541" stop-color="#0000f8"/><stop offset="0.591" stop-color="#000000"/><stop offset="1.000" stop-color="#000000"/></linearGradient><linearGradient id="g182" x1="0" y1="0" x2="0" y2="1"><stop offset="0.000" stop-color="#000000"/><stop offset="0.346" stop-color="#000000"/><stop offset="0.352" stop-color="#000016"/><stop offset="0.371" stop-color="#0000fc"/><stop offset="0.377" stop-color="#0058ff"/><stop offset="0.390" stop-color="#00e7ff"/><stop offset="0.396" stop-color="#00ffeb"/><stop offset="0.409" stop-color="#00ffc7"/><stop offset="0.415" stop-color="#00ffcb"/><stop offset="0.428" stop-color="#00fcff"/><stop offset="0.434" stop-color="#00c2ff"/><stop offset="0.447" stop-color="#0025ff"/><stop offset="0.453" stop-color="#0000d1"/><stop offset="0.459" stop-color="#000089"/><stop offset="0.472" stop-color="#000042"/><stop offset="0.516" stop-color="#000030"/><stop offset="0.541" stop-color="#000001"/><stop offset="1.000" stop-color="#000000"/></linearGradient><linearGradient id="g183" x1="0" y1="0" x2="0" y2="1"><stop offset="0.000" stop-color="#000000"/><stop offset="0.346" stop-color="#000000"/><stop offset="0.352" stop-color="#000017"/><stop offset="0.358" stop-color="#000049"/><stop offset="0.371" stop-color="#0000cf"/><stop offset="0.377" stop-color="#0024ff"/><stop offset="0.390" stop-color="#00cbff"/><stop offset="0.396" stop-color="#00fff5"/><stop offset="0.409" stop-color="#00ffb0"/><stop offset="0.415" stop-color="#00ffa3"/><stop offset="0.421" stop-color="#00ffa6"/><stop offset="0.434" stop-color="#00ffd8"/><stop offset="0.440" stop-color="#00f6ff"/><stop offset="0.459" stop-color="#000eff"/><stop offset="0.465" stop-color="#0000ca"/><stop offset="0.478" stop-color="#00007e"/><stop offset="0.522" stop-color="#000061"/><stop offset="0.560" stop-color="#000000"/><stop offset="1.000" stop-color="#000000"/></linearGradient><linearGradient id="g184" x1="0" y1="0" x2="0" y2="1"><stop offset="0.000" stop-color="#000000"/><stop offset="0.321" stop-color="#000000"/><stop offset="0.358" stop-color="#0000fc"/><stop offset="0.365" stop-color="#002aff"/><stop offset="0.384" stop-color="#00d4ff"/><stop offset="0.390" stop-color="#00ffea"/><stop offset="0.409" stop-color="#00ff59"/><stop offset="0.421" stop-color="#00ff30"/><stop offset="0.428" stop-color="#00ff30"/><stop offset="0.440" stop-color="#00ff59"/><stop offset="0.459" stop-color="#00ffe5"/><stop offset="0.465" stop-color="#00e4ff"/><stop offset="0.478" stop-color="#009bff"/><stop offset="0.522" stop-color="#006dff"/><stop offset="0.553" stop-color="#0000f5"/><stop offset="0.597" stop-color="#000000"/><stop offset="1.000" stop-color="#000000"/></linearGradient><linearGradient id="g185" x1="0" y1="0" x2="0" y2="1"><stop offset="0.000" stop-color="#000000"/><stop offset="0.321" stop-color="#000001"/><stop offset="0.346" stop-color="#0000c3"/><stop offset="0.352" stop-color="#0000ed"/><stop offset="0.358" stop-color="#0018ff"/><stop offset="0.371" stop-color="#0077ff"/><stop offset="0.384" stop-color="#00eeff"/><stop offset="0.390" stop-color="#00ffd4"/><stop offset="0.409" stop-color="#00ff45"/><stop offset="0.421" stop-color="#00ff1d"/><stop offset="0.428" stop-color="#00ff1e"/><stop offset="0.440" stop-color="#00ff4a"/><stop offset="0.459" stop-color="#00ffd6"/><stop offset="0.465" stop-color="#00f8ff"/><stop offset="0.478" stop-color="#00b6ff"/><stop offset="0.522" stop-color="#008dff"/><stop offset="0.560" stop-color="#0000f1"/><stop offset="0.597" stop-color="#000012"/><stop offset="0.604" stop-color="#000000"/><stop offset="1.000" stop-color="#000000"/></linearGradient><linearGradient id="g186" x1="0" y1="0" x2="0" y2="1"><stop offset="0.000" stop-color="#000000"/><stop offset="0.308" stop-color="#000000"/><stop offset="0.314" stop-color="#000016"/><stop offset="0.340" stop-color="#0000fc"/><stop offset="0.346" stop-color="#0037ff"/><stop offset="0.371" stop-color="#00fff1"/><stop offset="0.396" stop-color="#00ff2a"/><stop offset="0.403" stop-color="#00ff08"/><stop offset="0.409" stop-color="#0eff00"/><stop offset="0.415" stop-color="#17ff00"/><stop offset="0.428" stop-color="#00ff01"/><stop offset="0.453" stop-color="#00ffa6"/><stop offset="0.465" stop-color="#00ffe3"/><stop offset="0.503" stop-color="#00ffe1"/><stop offset="0.528" stop-color="#00faff"/><stop offset="0.547" stop-color="#00b2ff"/><stop offset="0.572" stop-color="#0019ff"/><stop offset="0.579" stop-color="#0000ec"/><stop offset="0.610" stop-color="#00000e"/><stop offset="0.616" stop-color="#000000"/><stop offset="1.000" stop-color="#000000"/></linearGradient><linearGradient id="g187" x1="0" y1="0" x2="0" y2="1"><stop offset="0.000" stop-color="#000000"/><stop offset="0.314" stop-color="#000000"/><stop offset="0.321" stop-color="#000006"/><stop offset="0.346" stop-color="#0000db"/><stop offset="0.352" stop-color="#0019ff"/><stop offset="0.371" stop-color="#00f8ff"/><stop offset="0.390" stop-color="#00ff5b"/><stop offset="0.403" stop-color="#00ff1e"/><stop offset="0.409" stop-color="#00ff15"/><stop offset="0.415" stop-color="#00ff1a"/><stop offset="0.428" stop-color="#00ff50"/><stop offset="0.447" stop-color="#00ffec"/><stop offset="0.459" stop-color="#00b2ff"/><stop offset="0.465" stop-color="#009fff"/><stop offset="0.503" stop-color="#00b3ff"/><stop offset="0.522" stop-color="#009bff"/><stop offset="0.541" stop-color="#005fff"/><stop offset="0.560" stop-color="#0000fe"/><stop offset="0.604" stop-color="#000000"/><stop offset="1.000" stop-color="#000000"/></linearGradient><linearGradient id="g188" x1="0" y1="0" x2="0" y2="1"><stop offset="0.000" stop-color="#000000"/><stop offset="0.327" stop-color="#000000"/><stop offset="0.346" stop-color="#00007d"/><stop offset="0.358" stop-color="#0000f2"/><stop offset="0.365" stop-color="#003fff"/><stop offset="0.377" stop-color="#00e5ff"/><stop offset="0.384" stop-color="#00ffd4"/><stop offset="0.396" stop-color="#00ff6e"/><stop offset="0.409" stop-color="#00ff3f"/><stop offset="0.421" stop-color="#00ff4d"/><stop offset="0.428" stop-color="#00ff6a"/><stop offset="0.440" stop-color="#00ffcb"/><stop offset="0.447" stop-color="#00f4ff"/><stop offset="0.459" stop-color="#0072ff"/><stop offset="0.465" stop-color="#004dff"/><stop offset="0.472" stop-color="#003eff"/><stop offset="0.509" stop-color="#0046ff"/><stop offset="0.541" stop-color="#0000f6"/><stop offset="0.591" stop-color="#000000"/><stop offset="1.000" stop-color="#000000"/></linearGradient><linearGradient id="g189" x1="0" y1="0" x2="0" y2="1"><stop offset="0.000" stop-color="#000000"/><stop offset="0.314" stop-color="#000000"/><stop offset="0.321" stop-color="#000015"/><stop offset="0.346" stop-color="#0000dd"/><stop offset="0.352" stop-color="#000bff"/><stop offset="0.377" stop-color="#00d7ff"/><stop offset="0.384" stop-color="#00ffe9"/><stop offset="0.403" stop-color="#00ff4b"/><stop offset="0.415" stop-color="#00ff12"/><stop offset="0.421" stop-color="#00ff0a"/><stop offset="0.428" stop-color="#00ff11"/><stop offset="0.440" stop-color="#00ff49"/><stop offset="0.459" stop-color="#00ffd9"/><stop offset="0.465" stop-color="#00feff"/><stop offset="0.478" stop-color="#00d5ff"/><stop offset="0.503" stop-color="#00d5ff"/><stop offset="0.522" stop-color="#00bdff"/><stop offset="0.541" stop-color="#0080ff"/><stop offset="0.566" stop-color="#0000f8"/><stop offset="0.604" stop-color="#000008"/><stop offset="0.610" stop-color="#000000"/><stop offset="1.000" stop-color="#000000"/></linearGradient><linearGradient id="g190" x1="0" y1="0" x2="0" y2="1"><stop offset="0.000" stop-color="#000000"/><stop offset="0.340" stop-color="#000000"/><stop offset="0.365" stop-color="#000077"/><stop offset="0.377" stop-color="#0000dc"/><stop offset="0.384" stop-color="#0026ff"/><stop offset="0.396" stop-color="#00d2ff"/><stop offset="0.403" stop-color="#00ffe5"/><stop offset="0.415" stop-color="#00ff8a"/><stop offset="0.428" stop-color="#00ff6b"/><stop offset="0.440" stop-color="#00ff8b"/><stop offset="0.453" stop-color="#00ffe6"/><stop offset="0.459" stop-color="#00d4ff"/><stop offset="0.472" stop-color="#0041ff"/><stop offset="0.478" stop-color="#000cff"/><stop offset="0.484" stop-color="#0000ee"/><stop offset="0.528" stop-color="#0000b5"/><stop offset="0.579" stop-color="#000000"/><stop offset="1.000" stop-color="#000000"/></linearGradient><linearGradient id="g191" x1="0" y1="0" x2="0" y2="1"><stop offset="0.000" stop-color="#000000"/><stop offset="0.346" stop-color="#000000"/><stop offset="0.352" stop-color="#00000c"/><stop offset="0.365" stop-color="#000058"/><stop offset="0.377" stop-color="#0000d4"/><stop offset="0.384" stop-color="#002cff"/><stop offset="0.396" stop-color="#00ddff"/><stop offset="0.403" stop-color="#00ffe0"/><stop offset="0.415" stop-color="#00ff94"/><stop offset="0.421" stop-color="#00ff86"/><stop offset="0.434" stop-color="#00ff9b"/><stop offset="0.447" stop-color="#00ffef"/><stop offset="0.453" stop-color="#00c9ff"/><stop offset="0.465" stop-color="#0025ff"/><stop offset="0.472" stop-color="#0000e3"/><stop offset="0.484" stop-color="#0000a6"/><stop offset="0.528" stop-color="#000078"/><stop offset="0.566" stop-color="#000002"/><stop offset="1.000" stop-color="#000000"/></linearGradient><linearGradient id="g192" x1="0" y1="0" x2="0" y2="1"><stop offset="0.000" stop-color="#000000"/><stop offset="0.314" stop-color="#000000"/><stop offset="0.346" stop-color="#0000fa"/><stop offset="0.352" stop-color="#0032ff"/><stop offset="0.371" stop-color="#00e8ff"/><stop offset="0.377" stop-color="#00ffd7"/><stop offset="0.396" stop-color="#00ff37"/><stop offset="0.409" stop-color="#00ff01"/><stop offset="0.421" stop-color="#00ff06"/><stop offset="0.428" stop-color="#00ff1e"/><stop offset="0.459" stop-color="#00fffb"/><stop offset="0.472" stop-color="#00e9ff"/><stop offset="0.503" stop-color="#00feff"/><stop offset="0.522" stop-color="#00e5ff"/><stop offset="0.547" stop-color="#008dff"/><stop offset="0.566" stop-color="#0021ff"/><stop offset="0.572" stop-color="#0000f5"/><stop offset="0.610" stop-color="#000000"/><stop offset="1.000" stop-color="#000000"/></linearGradient><linearGradient id="g193" x1="0" y1="0" x2="0" y2="1"><stop offset="0.000" stop-color="#000000"/><stop offset="0.333" stop-color="#000000"/><stop offset="0.340" stop-color="#00000c"/><stop offset="0.352" stop-color="#00006f"/><stop offset="0.365" stop-color="#0003ff"/><stop offset="0.377" stop-color="#00c1ff"/><stop offset="0.384" stop-color="#00ffee"/><stop offset="0.396" stop-color="#00ff88"/><stop offset="0.409" stop-color="#00ff60"/><stop offset="0.421" stop-color="#00ff7b"/><stop offset="0.434" stop-color="#00ffd4"/><stop offset="0.440" stop-color="#00e7ff"/><stop offset="0.453" stop-color="#0046ff"/><stop offset="0.459" stop-color="#0009ff"/><stop offset="0.465" stop-color="#0000ea"/><stop offset="0.503" stop-color="#0000f2"/><stop offset="0.522" stop-color="#0000dd"/><stop offset="0.541" stop-color="#0000aa"/><stop offset="0.579" stop-color="#00000b"/><stop offset="0.585" stop-color="#000000"/><stop offset="1.000" stop-color="#000000"/></linearGradient><linearGradient id="g194" x1="0" y1="0" x2="0" y2="1"><stop offset="0.000" stop-color="#000000"/><stop offset="0.321" stop-color="#000000"/><stop offset="0.352" stop-color="#0000ee"/><stop offset="0.358" stop-color="#0023ff"/><stop offset="0.377" stop-color="#00ebff"/><stop offset="0.384" stop-color="#00ffd0"/><stop offset="0.403" stop-color="#00ff38"/><stop offset="0.415" stop-color="#00ff14"/><stop offset="0.421" stop-color="#00ff19"/><stop offset="0.434" stop-color="#00ff52"/><stop offset="0.453" stop-color="#00ffee"/><stop offset="0.465" stop-color="#00c0ff"/><stop offset="0.472" stop-color="#00b4ff"/><stop offset="0.503" stop-color="#00c3ff"/><stop offset="0.522" stop-color="#00abff"/><stop offset="0.541" stop-color="#006fff"/><stop offset="0.560" stop-color="#000eff"/><stop offset="0.566" stop-color="#0000e9"/><stop offset="0.604" stop-color="#000000"/><stop offset="1.000" stop-color="#000000"/></linearGradient><linearGradient id="g195" x1="0" y1="0" x2="0" y2="1"><stop offset="0.000" stop-color="#000000"/><stop offset="0.308" stop-color="#000000"/><stop offset="0.314" stop-color="#00001c"/><stop offset="0.340" stop-color="#0002ff"/><stop offset="0.352" stop-color="#0068ff"/><stop offset="0.377" stop-color="#00ffff"/><stop offset="0.409" stop-color="#00ff15"/><stop offset="0.415" stop-color="#0cff00"/><stop offset="0.428" stop-color="#25ff00"/><stop offset="0.440" stop-color="#01ff00"/><stop offset="0.459" stop-color="#00ff77"/><stop offset="0.472" stop-color="#00ffaf"/><stop offset="0.509" stop-color="#00ffbc"/><stop offset="0.535" stop-color="#00ffec"/><stop offset="0.541" stop-color="#00fdff"/><stop offset="0.547" stop-color="#00e1ff"/><stop offset="0.560" stop-color="#009dff"/><stop offset="0.579" stop-color="#0018ff"/><stop offset="0.585" stop-color="#0000e7"/><stop offset="0.616" stop-color="#000000"/><stop offset="1.000" stop-color="#000000"/></linearGradient><linearGradient id="g196" x1="0" y1="0" x2="0" y2="1"><stop offset="0.000" stop-color="#000000"/><stop offset="0.321" stop-color="#000000"/><stop offset="0.327" stop-color="#000006"/><stop offset="0.352" stop-color="#0000ab"/><stop offset="0.371" stop-color="#000fff"/><stop offset="0.384" stop-color="#0075ff"/><stop offset="0.396" stop-color="#00fff7"/><stop offset="0.415" stop-color="#00ff54"/><stop offset="0.428" stop-color="#00ff2a"/><stop offset="0.434" stop-color="#00ff2e"/><stop offset="0.447" stop-color="#00ff63"/><stop offset="0.465" stop-color="#00fffe"/><stop offset="0.478" stop-color="#00a8ff"/><stop offset="0.522" stop-color="#0073ff"/><stop offset="0.553" stop-color="#0000fa"/><stop offset="0.597" stop-color="#000001"/><stop offset="1.000" stop-color="#000000"/></linearGradient><linearGradient id="g197" x1="0" y1="0" x2="0" y2="1"><stop offset="0.000" stop-color="#000000"/><stop offset="0.340" stop-color="#000000"/><stop offset="0.346" stop-color="#00000b"/><stop offset="0.365" stop-color="#000076"/><stop offset="0.377" stop-color="#0000f7"/><stop offset="0.384" stop-color="#0054ff"/><stop offset="0.396" stop-color="#00fffa"/><stop offset="0.409" stop-color="#00ff93"/><stop offset="0.421" stop-color="#00ff6d"/><stop offset="0.434" stop-color="#00ff8b"/><stop offset="0.447" stop-color="#00ffea"/><stop offset="0.453" stop-color="#00cbff"/><stop offset="0.465" stop-color="#0030ff"/><stop offset="0.472" stop-color="#0000fb"/><stop offset="0.484" stop-color="#0000dc"/><stop offset="0.509" stop-color="#0000d7"/><stop offset="0.528" stop-color="#0000b8"/><stop offset="0.579" stop-color="#000000"/><stop offset="1.000" stop-color="#000000"/></linearGradient><linearGradient id="g198" x1="0" y1="0" x2="0" y2="1"><stop offset="0.000" stop-color="#000000"/><stop offset="0.321" stop-color="#000000"/><stop offset="0.327" stop-color="#00000e"/><stop offset="0.358" stop-color="#0003ff"/><stop offset="0.377" stop-color="#00efff"/><stop offset="0.396" stop-color="#00ff5a"/><stop offset="0.409" stop-color="#00ff26"/><stop offset="0.415" stop-color="#00ff25"/><stop offset="0.428" stop-color="#00ff54"/><stop offset="0.447" stop-color="#00fff7"/><stop offset="0.459" stop-color="#009cff"/><stop offset="0.465" stop-color="#0088ff"/><stop offset="0.497" stop-color="#009fff"/><stop offset="0.516" stop-color="#0093ff"/><stop offset="0.535" stop-color="#0063ff"/><stop offset="0.553" stop-color="#000eff"/><stop offset="0.560" stop-color="#0000ed"/><stop offset="0.597" stop-color="#00000f"/><stop offset="0.604" stop-color="#000000"/><stop offset="1.000" stop-color="#000000"/></linearGradient><linearGradient id="g199" x1="0" y1="0" x2="0" y2="1"><stop offset="0.000" stop-color="#000000"/><stop offset="0.346" stop-color="#000000"/><stop offset="0.358" stop-color="#000068"/><stop offset="0.371" stop-color="#000fff"/><stop offset="0.384" stop-color="#00d4ff"/><stop offset="0.390" stop-color="#00ffe1"/><stop offset="0.403" stop-color="#00ff8b"/><stop offset="0.409" stop-color="#00ff7a"/><stop offset="0.421" stop-color="#00ff8e"/><stop offset="0.434" stop-color="#00ffe6"/><stop offset="0.440" stop-color="#00ceff"/><stop offset="0.453" stop-color="#0020ff"/><stop offset="0.459" stop-color="#0000df"/><stop offset="0.472" stop-color="#0000b1"/><stop offset="0.503" stop-color="#0000c0"/><stop offset="0.522" stop-color="#0000ac"/><stop offset="0.547" stop-color="#000068"/><stop offset="0.572" stop-color="#000004"/><stop offset="0.579" stop-color="#000000"/><stop offset="1.000" stop-color="#000000"/></linearGradient><linearGradient id="g200" x1="0" y1="0" x2="0" y2="1"><stop offset="0.000" stop-color="#000000"/><stop offset="0.352" stop-color="#000000"/><stop offset="0.358" stop-color="#000013"/><stop offset="0.365" stop-color="#000040"/><stop offset="0.371" stop-color="#000077"/><stop offset="0.377" stop-color="#0000c9"/><stop offset="0.384" stop-color="#0029ff"/><stop offset="0.396" stop-color="#00e4ff"/><stop offset="0.403" stop-color="#00ffda"/><stop offset="0.415" stop-color="#00ff95"/><stop offset="0.421" stop-color="#00ff8d"/><stop offset="0.428" stop-color="#00ff97"/><stop offset="0.440" stop-color="#00ffe2"/><stop offset="0.447" stop-color="#00daff"/><stop offset="0.459" stop-color="#002bff"/><stop offset="0.465" stop-color="#0000df"/><stop offset="0.478" stop-color="#000097"/><stop offset="0.509" stop-color="#00008c"/><stop offset="0.528" stop-color="#000072"/><stop offset="0.566" stop-color="#000000"/><stop offset="1.000" stop-color="#000000"/></linearGradient><linearGradient id="g201" x1="0" y1="0" x2="0" y2="1"><stop offset="0.000" stop-color="#000000"/><stop offset="0.327" stop-color="#000000"/><stop offset="0.333" stop-color="#000008"/><stop offset="0.377" stop-color="#0000f3"/><stop offset="0.384" stop-color="#002cff"/><stop offset="0.396" stop-color="#00cdff"/><stop offset="0.403" stop-color="#00ffe2"/><stop offset="0.415" stop-color="#00ff72"/><stop offset="0.428" stop-color="#00ff3f"/><stop offset="0.440" stop-color="#00ff53"/><stop offset="0.447" stop-color="#00ff75"/><stop offset="0.459" stop-color="#00ffde"/><stop offset="0.465" stop-color="#00e0ff"/><stop offset="0.478" stop-color="#007cff"/><stop offset="0.484" stop-color="#0068ff"/><stop offset="0.516" stop-color="#004fff"/><stop offset="0.541" stop-color="#0006ff"/><stop offset="0.547" stop-color="#0000ed"/><stop offset="0.591" stop-color="#000009"/><stop offset="0.597" stop-color="#000000"/><stop offset="1.000" stop-color="#000000"/></linearGradient><linearGradient id="g202" x1="0" y1="0" x2="0" y2="1"><stop offset="0.000" stop-color="#000000"/><stop offset="0.314" stop-color="#000000"/><stop offset="0.346" stop-color="#0000f6"/><stop offset="0.352" stop-color="#0024ff"/><stop offset="0.390" stop-color="#00fff4"/><stop offset="0.409" stop-color="#00ff49"/><stop offset="0.421" stop-color="#01ff00"/><stop offset="0.428" stop-color="#10ff00"/><stop offset="0.440" stop-color="#00ff04"/><stop offset="0.465" stop-color="#00ffa7"/><stop offset="0.478" stop-color="#00ffd5"/><stop offset="0.509" stop-color="#00ffdf"/><stop offset="0.528" stop-color="#00fffd"/><stop offset="0.547" stop-color="#00b9ff"/><stop offset="0.579" stop-color="#0000f1"/><stop offset="0.610" stop-color="#000012"/><stop offset="0.616" stop-color="#000000"/><stop offset="1.000" stop-color="#000000"/></linearGradient><linearGradient id="g203" x1="0" y1="0" x2="0" y2="1"><stop offset="0.000" stop-color="#000000"/><stop offset="0.314" stop-color="#000000"/><stop offset="0.346" stop-color="#0001ff"/><stop offset="0.377" stop-color="#00f4ff"/><stop offset="0.403" stop-color="#00ff28"/><stop offset="0.409" stop-color="#00ff04"/><stop offset="0.415" stop-color="#11ff00"/><stop offset="0.428" stop-color="#06ff00"/><stop offset="0.434" stop-color="#00ff17"/><stop offset="0.453" stop-color="#00ffa6"/><stop offset="0.465" stop-color="#00ffe7"/><stop offset="0.503" stop-color="#00ffdf"/><stop offset="0.522" stop-color="#00fff3"/><stop offset="0.528" stop-color="#00fdff"/><stop offset="0.547" stop-color="#00b5ff"/><stop offset="0.572" stop-color="#001cff"/><stop offset="0.579" stop-color="#0000ee"/><stop offset="0.610" stop-color="#000010"/><stop offset="0.616" stop-color="#000000"/><stop offset="1.000" stop-color="#000000"/></linearGradient><linearGradient id="g204" x1="0" y1="0" x2="0" y2="1"><stop offset="0.000" stop-color="#000000"/><stop offset="0.314" stop-color="#000000"/><stop offset="0.346" stop-color="#0000fb"/><stop offset="0.352" stop-color="#0034ff"/><stop offset="0.371" stop-color="#00f3ff"/><stop offset="0.390" stop-color="#00ff4d"/><stop offset="0.403" stop-color="#01ff00"/><stop offset="0.409" stop-color="#10ff00"/><stop offset="0.421" stop-color="#00ff06"/><stop offset="0.428" stop-color="#00ff2a"/><stop offset="0.453" stop-color="#00fff8"/><stop offset="0.459" stop-color="#00ebff"/><stop offset="0.484" stop-color="#00fffd"/><stop offset="0.522" stop-color="#00f4ff"/><stop offset="0.547" stop-color="#009cff"/><stop offset="0.572" stop-color="#0003ff"/><stop offset="0.610" stop-color="#000000"/><stop offset="1.000" stop-color="#000000"/></linearGradient><linearGradient id="g205" x1="0" y1="0" x2="0" y2="1"><stop offset="0.000" stop-color="#000000"/><stop offset="0.327" stop-color="#000000"/><stop offset="0.358" stop-color="#0000d5"/><stop offset="0.365" stop-color="#0010ff"/><stop offset="0.384" stop-color="#00fff5"/><stop offset="0.396" stop-color="#00ff75"/><stop offset="0.403" stop-color="#00ff4b"/><stop offset="0.415" stop-color="#00ff2a"/><stop offset="0.428" stop-color="#00ff52"/><stop offset="0.440" stop-color="#00ffbc"/><stop offset="0.447" stop-color="#00feff"/><stop offset="0.459" stop-color="#0075ff"/><stop offset="0.465" stop-color="#0055ff"/><stop offset="0.509" stop-color="#005fff"/><stop offset="0.547" stop-color="#0000f4"/><stop offset="0.591" stop-color="#00000f"/><stop offset="0.597" stop-color="#000000"/><stop offset="1.000" stop-color="#000000"/></linearGradient><linearGradient id="g206" x1="0" y1="0" x2="0" y2="1"><stop offset="0.000" stop-color="#000000"/><stop offset="0.333" stop-color="#000000"/><stop offset="0.365" stop-color="#0000a0"/><stop offset="0.377" stop-color="#0000f4"/><stop offset="0.384" stop-color="#003eff"/><stop offset="0.396" stop-color="#00f1ff"/><stop offset="0.415" stop-color="#00ff61"/><stop offset="0.428" stop-color="#00ff45"/><stop offset="0.440" stop-color="#00ff74"/><stop offset="0.453" stop-color="#00ffe5"/><stop offset="0.459" stop-color="#00cbff"/><stop offset="0.472" stop-color="#003fff"/><stop offset="0.478" stop-color="#001cff"/><stop offset="0.516" stop-color="#0000ff"/><stop offset="0.541" stop-color="#0000c2"/><stop offset="0.585" stop-color="#000000"/><stop offset="1.000" stop-color="#000000"/></linearGradient><linearGradient id="g207" x1="0" y1="0" x2="0" y2="1"><stop offset="0.000" stop-color="#000000"/><stop offset="0.340" stop-color="#000000"/><stop offset="0.346" stop-color="#000007"/><stop offset="0.377" stop-color="#00007f"/><stop offset="0.390" stop-color="#0000ee"/><stop offset="0.396" stop-color="#004fff"/><stop offset="0.403" stop-color="#00b6ff"/><stop offset="0.409" stop-color="#00ffed"/><stop offset="0.421" stop-color="#00ff7b"/><stop offset="0.434" stop-color="#00ff56"/><stop offset="0.447" stop-color="#00ff82"/><stop offset="0.459" stop-color="#00fff8"/><stop offset="0.478" stop-color="#0000fe"/><stop offset="0.491" stop-color="#0000bc"/><stop offset="0.528" stop-color="#00008c"/><stop offset="0.572" stop-color="#000000"/><stop offset="1.000" stop-color="#000000"/></linearGradient><linearGradient id="g208" x1="0" y1="0" x2="0" y2="1"><stop offset="0.000" stop-color="#000000"/><stop offset="0.377" stop-color="#000000"/><stop offset="0.384" stop-color="#000070"/><stop offset="0.390" stop-color="#0018ff"/><stop offset="0.396" stop-color="#00c3ff"/><stop offset="0.403" stop-color="#00ffb9"/><stop offset="0.409" stop-color="#00ff5b"/><stop offset="0.415" stop-color="#00ff16"/><stop offset="0.421" stop-color="#15ff00"/><stop offset="0.428" stop-color="#26ff00"/><stop offset="0.440" stop-color="#00ff0a"/><stop offset="0.447" stop-color="#00ff49"/><stop offset="0.453" stop-color="#00ffa1"/><stop offset="0.459" stop-color="#00e6ff"/><stop offset="0.465" stop-color="#0042ff"/><stop offset="0.472" stop-color="#000094"/><stop offset="0.478" stop-color="#000005"/><stop offset="0.484" stop-color="#000000"/><stop offset="1.000" stop-color="#000000"/></linearGradient><linearGradient id="g209" x1="0" y1="0" x2="0" y2="1"><stop offset="0.000" stop-color="#000000"/><stop offset="0.365" stop-color="#000000"/><stop offset="0.371" stop-color="#000040"/><stop offset="0.377" stop-color="#0006ff"/><stop offset="0.384" stop-color="#00e1ff"/><stop offset="0.390" stop-color="#00ff7d"/><stop offset="0.396" stop-color="#00ff02"/><stop offset="0.403" stop-color="#5dff00"/><stop offset="0.409" stop-color="#99ff00"/><stop offset="0.415" stop-color="#b3ff00"/><stop offset="0.421" stop-color="#aaff00"/><stop offset="0.428" stop-color="#7eff00"/><stop offset="0.434" stop-color="#30ff00"/><stop offset="0.440" stop-color="#00ff3d"/><stop offset="0.447" stop-color="#00ffc9"/><stop offset="0.453" stop-color="#0075ff"/><stop offset="0.459" stop-color="#000099"/><stop offset="0.465" stop-color="#000000"/><stop offset="1.000" stop-color="#000000"/></linearGradient><linearGradient id="g210" x1="0" y1="0" x2="0" y2="1"><stop offset="0.000" stop-color="#000000"/><stop offset="0.321" stop-color="#000000"/><stop offset="0.327" stop-color="#000017"/><stop offset="0.352" stop-color="#0006ff"/><stop offset="0.371" stop-color="#00d0ff"/><stop offset="0.377" stop-color="#00ffcb"/><stop offset="0.384" stop-color="#00ff54"/><stop offset="0.390" stop-color="#2bff00"/><stop offset="0.396" stop-color="#9aff00"/><stop offset="0.403" stop-color="#e7ff00"/><stop offset="0.409" stop-color="#fff000"/><stop offset="0.415" stop-color="#fff300"/><stop offset="0.421" stop-color="#deff00"/><stop offset="0.428" stop-color="#8bff00"/><stop offset="0.434" stop-color="#1bff00"/><stop offset="0.440" stop-color="#00ff5e"/><stop offset="0.447" stop-color="#00ffc6"/><stop offset="0.453" stop-color="#00f1ff"/><stop offset="0.484" stop-color="#0030ff"/><stop offset="0.497" stop-color="#0000ee"/><stop offset="0.547" stop-color="#00000c"/><stop offset="0.553" stop-color="#000000"/><stop offset="1.000" stop-color="#000000"/></linearGradient><linearGradient id="g211" x1="0" y1="0" x2="0" y2="1"><stop offset="0.000" stop-color="#000000"/><stop offset="0.314" stop-color="#000002"/><stop offset="0.333" stop-color="#0000d2"/><stop offset="0.340" stop-color="#001eff"/><stop offset="0.358" stop-color="#00eeff"/><stop offset="0.365" stop-color="#00ffdf"/><stop offset="0.384" stop-color="#00ff68"/><stop offset="0.390" stop-color="#00ff2d"/><stop offset="0.396" stop-color="#32ff00"/><stop offset="0.409" stop-color="#fffc00"/><stop offset="0.415" stop-color="#ffc200"/><stop offset="0.421" stop-color="#ffbf00"/><stop offset="0.428" stop-color="#fff600"/><stop offset="0.434" stop-color="#aaff00"/><stop offset="0.440" stop-color="#34ff00"/><stop offset="0.447" stop-color="#00ff35"/><stop offset="0.453" stop-color="#00ff77"/><stop offset="0.459" stop-color="#00ff9d"/><stop offset="0.478" stop-color="#00fff2"/><stop offset="0.484" stop-color="#00eeff"/><stop offset="0.535" stop-color="#0000fd"/><stop offset="0.566" stop-color="#00007c"/><stop offset="0.591" stop-color="#000042"/><stop offset="0.616" stop-color="#000029"/><stop offset="0.667" stop-color="#00001e"/><stop offset="0.679" stop-color="#000000"/><stop offset="1.000" stop-color="#000000"/></linearGradient><linearGradient id="g212" x1="0" y1="0" x2="0" y2="1"><stop offset="0.000" stop-color="#000000"/><stop offset="0.371" stop-color="#000000"/><stop offset="0.390" stop-color="#000044"/><stop offset="0.396" stop-color="#000072"/><stop offset="0.403" stop-color="#0020ff"/><stop offset="0.409" stop-color="#00ffc2"/><stop offset="0.415" stop-color="#18ff00"/><stop offset="0.421" stop-color="#b3ff00"/><stop offset="0.428" stop-color="#fcff00"/><stop offset="0.434" stop-color="#f2ff00"/><stop offset="0.440" stop-color="#97ff00"/><stop offset="0.447" stop-color="#00ff10"/><stop offset="0.453" stop-color="#00ffdd"/><stop offset="0.459" stop-color="#006aff"/><stop offset="0.465" stop-color="#0027ff"/><stop offset="0.491" stop-color="#000dff"/><stop offset="0.667" stop-color="#0000f6"/><stop offset="0.679" stop-color="#0000ca"/><stop offset="0.704" stop-color="#000000"/><stop offset="1.000" stop-color="#000000"/></linearGradient><linearGradient id="g213" x1="0" y1="0" x2="0" y2="1"><stop offset="0.000" stop-color="#000000"/><stop offset="0.403" stop-color="#000000"/><stop offset="0.409" stop-color="#000050"/><stop offset="0.415" stop-color="#00feff"/><stop offset="0.421" stop-color="#21ff00"/><stop offset="0.428" stop-color="#d1ff00"/><stop offset="0.434" stop-color="#fffd00"/><stop offset="0.440" stop-color="#b1ff00"/><stop offset="0.447" stop-color="#00ff1c"/><stop offset="0.453" stop-color="#009aff"/><stop offset="0.459" stop-color="#00001d"/><stop offset="0.465" stop-color="#000000"/><stop offset="1.000" stop-color="#000000"/></linearGradient><linearGradient id="g214" x1="0" y1="0" x2="0" y2="1"><stop offset="0.000" stop-color="#000000"/><stop offset="0.396" stop-color="#000000"/><stop offset="0.403" stop-color="#000046"/><stop offset="0.409" stop-color="#00ffd0"/><stop offset="0.415" stop-color="#6eff00"/><stop offset="0.421" stop-color="#ffe800"/><stop offset="0.428" stop-color="#ffe400"/><stop offset="0.434" stop-color="#77ff00"/><stop offset="0.440" stop-color="#00ffc0"/><stop offset="0.447" stop-color="#000060"/><stop offset="0.453" stop-color="#000000"/><stop offset="1.000" stop-color="#000000"/></linearGradient><linearGradient id="g215" x1="0" y1="0" x2="0" y2="1"><stop offset="0.000" stop-color="#000000"/><stop offset="0.384" stop-color="#000000"/><stop offset="0.390" stop-color="#000033"/><stop offset="0.396" stop-color="#00c8ff"/><stop offset="0.403" stop-color="#33ff00"/><stop offset="0.409" stop-color="#fff300"/><stop offset="0.415" stop-color="#ffb700"/><stop offset="0.421" stop-color="#d2ff00"/><stop offset="0.428" stop-color="#00ff37"/><stop offset="0.434" stop-color="#003bff"/><stop offset="0.440" stop-color="#00006e"/><stop offset="0.459" stop-color="#0000bf"/><stop offset="0.472" stop-color="#0000dd"/><stop offset="0.648" stop-color="#0000cf"/><stop offset="0.660" stop-color="#0000bc"/><stop offset="0.667" stop-color="#0000a0"/><stop offset="0.686" stop-color="#000017"/><stop offset="0.692" stop-color="#000000"/><stop offset="1.000" stop-color="#000000"/></linearGradient><linearGradient id="g216" x1="0" y1="0" x2="0" y2="1"><stop offset="0.000" stop-color="#000000"/><stop offset="0.314" stop-color="#000000"/><stop offset="0.321" stop-color="#000011"/><stop offset="0.340" stop-color="#0000de"/><stop offset="0.346" stop-color="#0028ff"/><stop offset="0.365" stop-color="#00ebff"/><stop offset="0.371" stop-color="#00ffe5"/><stop offset="0.390" stop-color="#00ff81"/><stop offset="0.396" stop-color="#00ff1f"/><stop offset="0.403" stop-color="#b6ff00"/><stop offset="0.409" stop-color="#ff9a00"/><stop offset="0.415" stop-color="#ff7e00"/><stop offset="0.421" stop-color="#fcff00"/><stop offset="0.428" stop-color="#26ff00"/><stop offset="0.434" stop-color="#00ff66"/><stop offset="0.472" stop-color="#00f7ff"/><stop offset="0.522" stop-color="#0003ff"/><stop offset="0.553" stop-color="#00007c"/><stop offset="0.572" stop-color="#000043"/><stop offset="0.591" stop-color="#00001d"/><stop offset="0.616" stop-color="#000006"/><stop offset="1.000" stop-color="#000000"/></linearGradient><linearGradient id="g217" x1="0" y1="0" x2="0" y2="1"><stop offset="0.000" stop-color="#000000"/><stop offset="0.321" stop-color="#000000"/><stop offset="0.327" stop-color="#000029"/><stop offset="0.346" stop-color="#0000ec"/><stop offset="0.352" stop-color="#0032ff"/><stop offset="0.365" stop-color="#00aeff"/><stop offset="0.377" stop-color="#00fff4"/><stop offset="0.396" stop-color="#00ffa7"/><stop offset="0.403" stop-color="#00ff76"/><stop offset="0.409" stop-color="#42ff00"/><stop offset="0.415" stop-color="#ffd500"/><stop offset="0.421" stop-color="#ff6800"/><stop offset="0.428" stop-color="#ff8f00"/><stop offset="0.434" stop-color="#a7ff00"/><stop offset="0.440" stop-color="#00ff53"/><stop offset="0.447" stop-color="#00ffcc"/><stop offset="0.459" stop-color="#00f0ff"/><stop offset="0.503" stop-color="#0000ff"/><stop offset="0.553" stop-color="#000005"/><stop offset="0.560" stop-color="#000000"/><stop offset="1.000" stop-color="#000000"/></linearGradient><linearGradient id="g218" x1="0" y1="0" x2="0" y2="1"><stop offset="0.000" stop-color="#000000"/><stop offset="0.403" stop-color="#000000"/><stop offset="0.409" stop-color="#00006c"/><stop offset="0.415" stop-color="#00ff9d"/><stop offset="0.421" stop-color="#c7ff00"/><stop offset="0.428" stop-color="#ff6800"/><stop offset="0.434" stop-color="#ff4a00"/><stop offset="0.440" stop-color="#ffbd00"/><stop offset="0.447" stop-color="#19ff00"/><stop offset="0.453" stop-color="#0053ff"/><stop offset="0.459" stop-color="#000000"/><stop offset="1.000" stop-color="#000000"/></linearGradient><linearGradient id="g219" x1="0" y1="0" x2="0" y2="1"><stop offset="0.000" stop-color="#000000"/><stop offset="0.403" stop-color="#000000"/><stop offset="0.409" stop-color="#00005c"/><stop offset="0.415" stop-color="#00ffa8"/><stop offset="0.421" stop-color="#a3ff00"/><stop offset="0.428" stop-color="#ffa300"/><stop offset="0.434" stop-color="#ff9700"/><stop offset="0.440" stop-color="#c3ff00"/><stop offset="0.447" stop-color="#00ff74"/><stop offset="0.453" stop-color="#000099"/><stop offset="0.459" stop-color="#000000"/><stop offset="1.000" stop-color="#000000"/></linearGradient><linearGradient id="g220" x1="0" y1="0" x2="0" y2="1"><stop offset="0.000" stop-color="#000000"/><stop offset="0.396" stop-color="#000000"/><stop offset="0.403" stop-color="#0068ff"/><stop offset="0.409" stop-color="#00ff06"/><stop offset="0.415" stop-color="#e3ff00"/><stop offset="0.421" stop-color="#ffd200"/><stop offset="0.428" stop-color="#c8ff00"/><stop offset="0.434" stop-color="#00ff3a"/><stop offset="0.440" stop-color="#000cff"/><stop offset="0.447" stop-color="#000000"/><stop offset="1.000" stop-color="#000000"/></linearGradient><linearGradient id="g221" x1="0" y1="0" x2="0" y2="1"><stop offset="0.000" stop-color="#000000"/><stop offset="0.358" stop-color="#000000"/><stop offset="0.384" stop-color="#00007e"/><stop offset="0.390" stop-color="#0000c8"/><stop offset="0.396" stop-color="#00fbff"/><stop offset="0.403" stop-color="#2cff00"/><stop offset="0.409" stop-color="#e1ff00"/><stop offset="0.415" stop-color="#f5ff00"/><stop offset="0.421" stop-color="#68ff00"/><stop offset="0.428" stop-color="#00ffaf"/><stop offset="0.434" stop-color="#0000fc"/><stop offset="0.440" stop-color="#000094"/><stop offset="0.484" stop-color="#000000"/><stop offset="1.000" stop-color="#000000"/></linearGradient><linearGradient id="g222" x1="0" y1="0" x2="0" y2="1"><stop offset="0.000" stop-color="#000000"/><stop offset="0.314" stop-color="#000000"/><stop offset="0.321" stop-color="#000020"/><stop offset="0.340" stop-color="#0000fd"/><stop offset="0.346" stop-color="#0051ff"/><stop offset="0.358" stop-color="#00e0ff"/><stop offset="0.365" stop-color="#00ffe6"/><stop offset="0.396" stop-color="#00ff32"/><stop offset="0.403" stop-color="#42ff00"/><stop offset="0.409" stop-color="#edff00"/><stop offset="0.415" stop-color="#ffb600"/><stop offset="0.421" stop-color="#fff200"/><stop offset="0.428" stop-color="#68ff00"/><stop offset="0.434" stop-color="#00ff2a"/><stop offset="0.440" stop-color="#00ff5b"/><stop offset="0.478" stop-color="#00faff"/><stop offset="0.522" stop-color="#0004ff"/><stop offset="0.528" stop-color="#0000df"/><stop offset="0.566" stop-color="#000000"/><stop offset="1.000" stop-color="#000000"/></linearGradient><linearGradient id="g223" x1="0" y1="0" x2="0" y2="1"><stop offset="0.000" stop-color="#000000"/><stop offset="0.333" stop-color="#000000"/><stop offset="0.340" stop-color="#00001f"/><stop offset="0.365" stop-color="#0000f8"/><stop offset="0.371" stop-color="#002dff"/><stop offset="0.384" stop-color="#0081ff"/><stop offset="0.403" stop-color="#00d1ff"/><stop offset="0.409" stop-color="#00ffbe"/><stop offset="0.415" stop-color="#38ff00"/><stop offset="0.421" stop-color="#ffff00"/><stop offset="0.428" stop-color="#ffc600"/><stop offset="0.434" stop-color="#c9ff00"/><stop offset="0.440" stop-color="#00ff2b"/><stop offset="0.447" stop-color="#00d2ff"/><stop offset="0.453" stop-color="#0065ff"/><stop offset="0.472" stop-color="#0000f9"/><stop offset="0.497" stop-color="#000085"/><stop offset="0.528" stop-color="#00000a"/><stop offset="0.535" stop-color="#000000"/><stop offset="1.000" stop-color="#000000"/></linearGradient><linearGradient id="g224" x1="0" y1="0" x2="0" y2="1"><stop offset="0.000" stop-color="#000000"/><stop offset="0.409" stop-color="#000000"/><stop offset="0.415" stop-color="#0034ff"/><stop offset="0.421" stop-color="#00ff38"/><stop offset="0.428" stop-color="#a8ff00"/><stop offset="0.434" stop-color="#e6ff00"/><stop offset="0.440" stop-color="#7dff00"/><stop offset="0.447" stop-color="#00ff89"/><stop offset="0.453" stop-color="#0000b1"/><stop offset="0.459" stop-color="#000000"/><stop offset="1.000" stop-color="#000000"/></linearGradient><linearGradient id="g225" x1="0" y1="0" x2="0" y2="1"><stop offset="0.000" stop-color="#000000"/><stop offset="0.403" stop-color="#000000"/><stop offset="0.409" stop-color="#0000c3"/><stop offset="0.415" stop-color="#00ff7a"/><stop offset="0.421" stop-color="#8aff00"/><stop offset="0.428" stop-color="#eeff00"/><stop offset="0.434" stop-color="#abff00"/><stop offset="0.440" stop-color="#00ff3a"/><stop offset="0.447" stop-color="#0029ff"/><stop offset="0.453" stop-color="#000000"/><stop offset="1.000" stop-color="#000000"/></linearGradient><linearGradient id="g226" x1="0" y1="0" x2="0" y2="1"><stop offset="0.000" stop-color="#000000"/><stop offset="0.390" stop-color="#000000"/><stop offset="0.396" stop-color="#000050"/><stop offset="0.403" stop-color="#00ffcf"/><stop offset="0.409" stop-color="#61ff00"/><stop offset="0.415" stop-color="#f6ff00"/><stop offset="0.421" stop-color="#e5ff00"/><stop offset="0.428" stop-color="#2dff00"/><stop offset="0.434" stop-color="#00d6ff"/><stop offset="0.440" stop-color="#000000"/><stop offset="1.000" stop-color="#000000"/></linearGradient><linearGradient id="g227" x1="0" y1="0" x2="0" y2="1"><stop offset="0.000" stop-color="#000000"/><stop offset="0.340" stop-color="#000000"/><stop offset="0.371" stop-color="#0000f1"/><stop offset="0.377" stop-color="#001fff"/><stop offset="0.390" stop-color="#0075ff"/><stop offset="0.396" stop-color="#00ffed"/><stop offset="0.403" stop-color="#06ff00"/><stop offset="0.409" stop-color="#b4ff00"/><stop offset="0.415" stop-color="#cbff00"/><stop offset="0.421" stop-color="#48ff00"/><stop offset="0.428" stop-color="#00ffa4"/><stop offset="0.434" stop-color="#0099ff"/><stop offset="0.440" stop-color="#0061ff"/><stop offset="0.459" stop-color="#0003ff"/><stop offset="0.484" stop-color="#00008a"/><stop offset="0.522" stop-color="#000000"/><stop offset="1.000" stop-color="#000000"/></linearGradient><linearGradient id="g228" x1="0" y1="0" x2="0" y2="1"><stop offset="0.000" stop-color="#000000"/><stop offset="0.321" stop-color="#000004"/><stop offset="0.340" stop-color="#0000e6"/><stop offset="0.346" stop-color="#003aff"/><stop offset="0.358" stop-color="#00d1ff"/><stop offset="0.365" stop-color="#00fff0"/><stop offset="0.377" stop-color="#00ff98"/><stop offset="0.403" stop-color="#00ff1f"/><stop offset="0.409" stop-color="#4fff00"/><stop offset="0.415" stop-color="#c8ff00"/><stop offset="0.421" stop-color="#dcff00"/><stop offset="0.434" stop-color="#00ff14"/><stop offset="0.440" stop-color="#00ff5b"/><stop offset="0.478" stop-color="#00f1ff"/><stop offset="0.522" stop-color="#0000f7"/><stop offset="0.560" stop-color="#00000f"/><stop offset="0.566" stop-color="#000000"/><stop offset="1.000" stop-color="#000000"/></linearGradient><linearGradient id="g229" x1="0" y1="0" x2="0" y2="1"><stop offset="0.000" stop-color="#000000"/><stop offset="0.352" stop-color="#000000"/><stop offset="0.358" stop-color="#000013"/><stop offset="0.384" stop-color="#0000a4"/><stop offset="0.403" stop-color="#0000e4"/><stop offset="0.409" stop-color="#002aff"/><stop offset="0.415" stop-color="#00ffbe"/><stop offset="0.421" stop-color="#4aff00"/><stop offset="0.428" stop-color="#d0ff00"/><stop offset="0.434" stop-color="#b3ff00"/><stop offset="0.440" stop-color="#00ff09"/><stop offset="0.447" stop-color="#00bdff"/><stop offset="0.453" stop-color="#0000ac"/><stop offset="0.459" stop-color="#000070"/><stop offset="0.491" stop-color="#000000"/><stop offset="1.000" stop-color="#000000"/></linearGradient><linearGradient id="g230" x1="0" y1="0" x2="0" y2="1"><stop offset="0.000" stop-color="#000000"/><stop offset="0.409" stop-color="#000000"/><stop offset="0.415" stop-color="#0019ff"/><stop offset="0.421" stop-color="#00ff57"/><stop offset="0.428" stop-color="#7cff00"/><stop offset="0.434" stop-color="#abff00"/><stop offset="0.440" stop-color="#33ff00"/><stop offset="0.447" stop-color="#00ffe1"/><stop offset="0.453" stop-color="#000053"/><stop offset="0.459" stop-color="#000000"/><stop offset="1.000" stop-color="#000000"/></linearGradient><linearGradient id="g231" x1="0" y1="0" x2="0" y2="1"><stop offset="0.000" stop-color="#000000"/><stop offset="0.403" stop-color="#000000"/><stop offset="0.409" stop-color="#0080ff"/><stop offset="0.415" stop-color="#00ff23"/><stop offset="0.421" stop-color="#8dff00"/><stop offset="0.428" stop-color="#96ff00"/><stop offset="0.434" stop-color="#00ff08"/><stop offset="0.440" stop-color="#00b5ff"/><stop offset="0.447" stop-color="#000000"/><stop offset="1.000" stop-color="#000000"/></linearGradient><linearGradient id="g232" x1="0" y1="0" x2="0" y2="1"><stop offset="0.000" stop-color="#000000"/><stop offset="0.390" stop-color="#000000"/><stop offset="0.396" stop-color="#0000bc"/><stop offset="0.403" stop-color="#00ff91"/><stop offset="0.409" stop-color="#67ff00"/><stop offset="0.415" stop-color="#bfff00"/><stop offset="0.421" stop-color="#70ff00"/><stop offset="0.428" stop-color="#00ff81"/><stop offset="0.434" stop-color="#0000d3"/><stop offset="0.440" stop-color="#000000"/><stop offset="1.000" stop-color="#000000"/></linearGradient><linearGradient id="g233" x1="0" y1="0" x2="0" y2="1"><stop offset="0.000" stop-color="#000000"/><stop offset="0.327" stop-color="#000000"/><stop offset="0.333" stop-color="#00000b"/><stop offset="0.352" stop-color="#0000d0"/><stop offset="0.358" stop-color="#0013ff"/><stop offset="0.377" stop-color="#00c1ff"/><stop offset="0.390" stop-color="#00fff2"/><stop offset="0.396" stop-color="#00ffbe"/><stop offset="0.403" stop-color="#00ff2a"/><stop offset="0.409" stop-color="#7eff00"/><stop offset="0.415" stop-color="#b5ff00"/><stop offset="0.421" stop-color="#5eff00"/><stop offset="0.428" stop-color="#00ff55"/><stop offset="0.434" stop-color="#00ffd2"/><stop offset="0.440" stop-color="#00fffa"/><stop offset="0.491" stop-color="#0000f5"/><stop offset="0.541" stop-color="#000002"/><stop offset="1.000" stop-color="#000000"/></linearGradient><linearGradient id="g234" x1="0" y1="0" x2="0" y2="1"><stop offset="0.000" stop-color="#000000"/><stop offset="0.321" stop-color="#000000"/><stop offset="0.327" stop-color="#00000a"/><stop offset="0.346" stop-color="#0000e7"/><stop offset="0.352" stop-color="#0038ff"/><stop offset="0.371" stop-color="#00fffe"/><stop offset="0.384" stop-color="#00ffb0"/><stop offset="0.403" stop-color="#00ff6c"/><stop offset="0.409" stop-color="#00ff41"/><stop offset="0.415" stop-color="#24ff00"/><stop offset="0.421" stop-color="#72ff00"/><stop offset="0.428" stop-color="#55ff00"/><stop offset="0.434" stop-color="#00ff20"/><stop offset="0.440" stop-color="#00ff86"/><stop offset="0.447" stop-color="#00ffb1"/><stop offset="0.465" stop-color="#00f1ff"/><stop offset="0.509" stop-color="#0000fc"/><stop offset="0.553" stop-color="#000000"/><stop offset="1.000" stop-color="#000000"/></linearGradient><linearGradient id="g235" x1="0" y1="0" x2="0" y2="1"><stop offset="0.000" stop-color="#000000"/><stop offset="0.396" stop-color="#000000"/><stop offset="0.409" stop-color="#000026"/><stop offset="0.415" stop-color="#0000df"/><stop offset="0.421" stop-color="#00ffce"/><stop offset="0.428" stop-color="#00ff1b"/><stop offset="0.434" stop-color="#00ff03"/><stop offset="0.440" stop-color="#00ff89"/><stop offset="0.447" stop-color="#0040ff"/><stop offset="0.453" stop-color="#000011"/><stop offset="0.459" stop-color="#000000"/><stop offset="1.000" stop-color="#000000"/></linearGradient><linearGradient id="g236" x1="0" y1="0" x2="0" y2="1"><stop offset="0.000" stop-color="#000000"/><stop offset="0.409" stop-color="#000000"/><stop offset="0.415" stop-color="#0000ed"/><stop offset="0.421" stop-color="#00ffa7"/><stop offset="0.428" stop-color="#00ff06"/><stop offset="0.434" stop-color="#00ff06"/><stop offset="0.440" stop-color="#00ffa7"/><stop offset="0.447" stop-color="#0000ed"/><stop offset="0.453" stop-color="#000000"/><stop offset="1.000" stop-color="#000000"/></linearGradient><linearGradient id="g237" x1="0" y1="0" x2="0" y2="1"><stop offset="0.000" stop-color="#000000"/><stop offset="0.403" stop-color="#000000"/><stop offset="0.409" stop-color="#0075ff"/><stop offset="0.415" stop-color="#00ff80"/><stop offset="0.421" stop-color="#00ff2d"/><stop offset="0.428" stop-color="#00ff7c"/><stop offset="0.434" stop-color="#007fff"/><stop offset="0.440" stop-color="#000000"/><stop offset="1.000" stop-color="#000000"/></linearGradient><linearGradient id="g238" x1="0" y1="0" x2="0" y2="1"><stop offset="0.000" stop-color="#000000"/><stop offset="0.390" stop-color="#000000"/><stop offset="0.396" stop-color="#00005f"/><stop offset="0.403" stop-color="#0080ff"/><stop offset="0.409" stop-color="#00ffa0"/><stop offset="0.415" stop-color="#00ff69"/><stop offset="0.421" stop-color="#00ffce"/><stop offset="0.428" stop-color="#001dff"/><stop offset="0.434" stop-color="#00002d"/><stop offset="0.440" stop-color="#000000"/><stop offset="1.000" stop-color="#000000"/></linearGradient><linearGradient id="g239" x1="0" y1="0" x2="0" y2="1"><stop offset="0.000" stop-color="#000000"/><stop offset="0.327" stop-color="#000000"/><stop offset="0.346" stop-color="#0000cf"/><stop offset="0.352" stop-color="#001fff"/><stop offset="0.371" stop-color="#00f0ff"/><stop offset="0.396" stop-color="#00ff83"/><stop offset="0.403" stop-color="#00ff59"/><stop offset="0.409" stop-color="#01ff00"/><stop offset="0.415" stop-color="#4aff00"/><stop offset="0.421" stop-color="#33ff00"/><stop offset="0.428" stop-color="#00ff30"/><stop offset="0.434" stop-color="#00ff7f"/><stop offset="0.440" stop-color="#00ffa2"/><stop offset="0.459" stop-color="#00fff8"/><stop offset="0.465" stop-color="#00e3ff"/><stop offset="0.503" stop-color="#0013ff"/><stop offset="0.509" stop-color="#0000ef"/><stop offset="0.547" stop-color="#000013"/><stop offset="0.553" stop-color="#000000"/><stop offset="1.000" stop-color="#000000"/></linearGradient><linearGradient id="g240" x1="0" y1="0" x2="0" y2="1"><stop offset="0.000" stop-color="#000000"/><stop offset="0.333" stop-color="#000000"/><stop offset="0.340" stop-color="#00002e"/><stop offset="0.358" stop-color="#0000f6"/><stop offset="0.365" stop-color="#003cff"/><stop offset="0.377" stop-color="#00aeff"/><stop offset="0.390" stop-color="#00fdff"/><stop offset="0.409" stop-color="#00ffc3"/><stop offset="0.415" stop-color="#00ff73"/><stop offset="0.421" stop-color="#02ff00"/><stop offset="0.428" stop-color="#29ff00"/><stop offset="0.434" stop-color="#00ff2a"/><stop offset="0.440" stop-color="#00ffbc"/><stop offset="0.447" stop-color="#00e2ff"/><stop offset="0.484" stop-color="#0003ff"/><stop offset="0.535" stop-color="#000010"/><stop offset="0.541" stop-color="#000000"/><stop offset="1.000" stop-color="#000000"/></linearGradient><linearGradient id="g241" x1="0" y1="0" x2="0" y2="1"><stop offset="0.000" stop-color="#000000"/><stop offset="0.409" stop-color="#000000"/><stop offset="0.415" stop-color="#000067"/><stop offset="0.421" stop-color="#00e1ff"/><stop offset="0.428" stop-color="#00ff4b"/><stop offset="0.434" stop-color="#00ff1f"/><stop offset="0.440" stop-color="#00ff95"/><stop offset="0.447" stop-color="#0034ff"/><stop offset="0.453" stop-color="#000000"/><stop offset="1.000" stop-color="#000000"/></linearGradient><linearGradient id="g242" x1="0" y1="0" x2="0" y2="1"><stop offset="0.000" stop-color="#000000"/><stop offset="0.409" stop-color="#000000"/><stop offset="0.415" stop-color="#0037ff"/><stop offset="0.421" stop-color="#00ffa7"/><stop offset="0.428" stop-color="#00ff49"/><stop offset="0.434" stop-color="#00ff8d"/><stop offset="0.440" stop-color="#0075ff"/><stop offset="0.447" stop-color="#000000"/><stop offset="1.000" stop-color="#000000"/></linearGradient><linearGradient id="g243" x1="0" y1="0" x2="0" y2="1"><stop offset="0.000" stop-color="#000000"/><stop offset="0.396" stop-color="#000000"/><stop offset="0.403" stop-color="#0000b9"/><stop offset="0.409" stop-color="#00ffd0"/><stop offset="0.415" stop-color="#00ff25"/><stop offset="0.421" stop-color="#00ff1d"/><stop offset="0.428" stop-color="#00ffb8"/><stop offset="0.434" stop-color="#0000e0"/><stop offset="0.440" stop-color="#000000"/><stop offset="1.000" stop-color="#000000"/></linearGradient><linearGradient id="g244" x1="0" y1="0" x2="0" y2="1"><stop offset="0.000" stop-color="#000000"/><stop offset="0.358" stop-color="#000000"/><stop offset="0.390" stop-color="#0000a8"/><stop offset="0.396" stop-color="#0000f2"/><stop offset="0.403" stop-color="#00d8ff"/><stop offset="0.409" stop-color="#00ff66"/><stop offset="0.415" stop-color="#00ff2d"/><stop offset="0.421" stop-color="#00ff89"/><stop offset="0.428" stop-color="#0097ff"/><stop offset="0.434" stop-color="#0000d3"/><stop offset="0.440" stop-color="#00009f"/><stop offset="0.447" stop-color="#000083"/><stop offset="0.484" stop-color="#000000"/><stop offset="1.000" stop-color="#000000"/></linearGradient><linearGradient id="g245" x1="0" y1="0" x2="0" y2="1"><stop offset="0.000" stop-color="#000000"/><stop offset="0.327" stop-color="#000000"/><stop offset="0.346" stop-color="#0000df"/><stop offset="0.352" stop-color="#0037ff"/><stop offset="0.365" stop-color="#00d3ff"/><stop offset="0.371" stop-color="#00ffee"/><stop offset="0.384" stop-color="#00ff98"/><stop offset="0.409" stop-color="#00ff25"/><stop offset="0.415" stop-color="#19ff00"/><stop offset="0.421" stop-color="#2dff00"/><stop offset="0.428" stop-color="#00ff0b"/><stop offset="0.434" stop-color="#00ff54"/><stop offset="0.440" stop-color="#00ff7f"/><stop offset="0.465" stop-color="#00fff7"/><stop offset="0.472" stop-color="#00e4ff"/><stop offset="0.509" stop-color="#0010ff"/><stop offset="0.516" stop-color="#0000ea"/><stop offset="0.553" stop-color="#000000"/><stop offset="1.000" stop-color="#000000"/></linearGradient><linearGradient id="g246" x1="0" y1="0" x2="0" y2="1"><stop offset="0.000" stop-color="#000000"/><stop offset="0.346" stop-color="#000000"/><stop offset="0.352" stop-color="#00001f"/><stop offset="0.377" stop-color="#0000ee"/><stop offset="0.384" stop-color="#001aff"/><stop offset="0.396" stop-color="#005bff"/><stop offset="0.409" stop-color="#007eff"/><stop offset="0.415" stop-color="#00bdff"/><stop offset="0.421" stop-color="#00ffb6"/><stop offset="0.428" stop-color="#00ff5c"/><stop offset="0.434" stop-color="#00ff7c"/><stop offset="0.440" stop-color="#00f0ff"/><stop offset="0.447" stop-color="#0041ff"/><stop offset="0.453" stop-color="#0000f7"/><stop offset="0.478" stop-color="#00007b"/><stop offset="0.509" stop-color="#000007"/><stop offset="0.516" stop-color="#000000"/><stop offset="1.000" stop-color="#000000"/></linearGradient><linearGradient id="g247" x1="0" y1="0" x2="0" y2="1"><stop offset="0.000" stop-color="#000000"/><stop offset="0.409" stop-color="#000000"/><stop offset="0.415" stop-color="#000042"/><stop offset="0.421" stop-color="#00afff"/><stop offset="0.428" stop-color="#00ff80"/><stop offset="0.434" stop-color="#00ff61"/><stop offset="0.440" stop-color="#00ffe6"/><stop offset="0.447" stop-color="#0000c8"/><stop offset="0.453" stop-color="#000000"/><stop offset="1.000" stop-color="#000000"/></linearGradient><linearGradient id="g248" x1="0" y1="0" x2="0" y2="1"><stop offset="0.000" stop-color="#000000"/><stop offset="0.403" stop-color="#000000"/><stop offset="0.409" stop-color="#00006c"/><stop offset="0.415" stop-color="#00e1ff"/><stop offset="0.421" stop-color="#00ff64"/><stop offset="0.428" stop-color="#00ff55"/><stop offset="0.434" stop-color="#00ffeb"/><stop offset="0.440" stop-color="#0000b1"/><stop offset="0.447" stop-color="#000000"/><stop offset="1.000" stop-color="#000000"/></linearGradient><linearGradient id="g249" x1="0" y1="0" x2="0" y2="1"><stop offset="0.000" stop-color="#000000"/><stop offset="0.396" stop-color="#000000"/><stop offset="0.403" stop-color="#0005ff"/><stop offset="0.409" stop-color="#00ffb8"/><stop offset="0.415" stop-color="#00ff41"/><stop offset="0.421" stop-color="#00ff6e"/><stop offset="0.428" stop-color="#00b2ff"/><stop offset="0.434" stop-color="#000038"/><stop offset="0.440" stop-color="#000000"/><stop offset="1.000" stop-color="#000000"/></linearGradient><linearGradient id="g250" x1="0" y1="0" x2="0" y2="1"><stop offset="0.000" stop-color="#000000"/><stop offset="0.346" stop-color="#000000"/><stop offset="0.371" stop-color="#0000de"/><stop offset="0.377" stop-color="#0013ff"/><stop offset="0.396" stop-color="#0096ff"/><stop offset="0.403" stop-color="#00fff1"/><stop offset="0.409" stop-color="#00ff52"/><stop offset="0.415" stop-color="#00ff03"/><stop offset="0.421" stop-color="#00ff39"/><stop offset="0.428" stop-color="#00ffd6"/><stop offset="0.434" stop-color="#0096ff"/><stop offset="0.440" stop-color="#0060ff"/><stop offset="0.459" stop-color="#0000f7"/><stop offset="0.516" stop-color="#000003"/><stop offset="0.522" stop-color="#000000"/><stop offset="1.000" stop-color="#000000"/></linearGradient><linearGradient id="g251" x1="0" y1="0" x2="0" y2="1"><stop offset="0.000" stop-color="#000000"/><stop offset="0.327" stop-color="#000000"/><stop offset="0.333" stop-color="#000019"/><stop offset="0.352" stop-color="#000eff"/><stop offset="0.371" stop-color="#00f7ff"/><stop offset="0.390" stop-color="#00ff8a"/><stop offset="0.409" stop-color="#00ff44"/><stop offset="0.415" stop-color="#00ff00"/><stop offset="0.421" stop-color="#43ff00"/><stop offset="0.428" stop-color="#2eff00"/><stop offset="0.434" stop-color="#00ff33"/><stop offset="0.440" stop-color="#00ff85"/><stop offset="0.459" stop-color="#00ffed"/><stop offset="0.465" stop-color="#00f0ff"/><stop offset="0.509" stop-color="#0000f6"/><stop offset="0.547" stop-color="#000001"/><stop offset="1.000" stop-color="#000000"/></linearGradient><linearGradient id="g252" x1="0" y1="0" x2="0" y2="1"><stop offset="0.000" stop-color="#000000"/><stop offset="0.365" stop-color="#000000"/><stop offset="0.371" stop-color="#000007"/><stop offset="0.390" stop-color="#000067"/><stop offset="0.409" stop-color="#00009e"/><stop offset="0.415" stop-color="#0020ff"/><stop offset="0.421" stop-color="#00ffc5"/><stop offset="0.428" stop-color="#00ff22"/><stop offset="0.434" stop-color="#00ff17"/><stop offset="0.440" stop-color="#00ffaa"/><stop offset="0.447" stop-color="#0023ff"/><stop offset="0.453" stop-color="#00004d"/><stop offset="0.459" stop-color="#00001b"/><stop offset="0.465" stop-color="#000002"/><stop offset="1.000" stop-color="#000000"/></linearGradient><linearGradient id="g253" x1="0" y1="0" x2="0" y2="1"><stop offset="0.000" stop-color="#000000"/><stop offset="0.409" stop-color="#000000"/><stop offset="0.415" stop-color="#000096"/><stop offset="0.421" stop-color="#00ffff"/><stop offset="0.428" stop-color="#00ff63"/><stop offset="0.434" stop-color="#00ff6f"/><stop offset="0.440" stop-color="#00d8ff"/><stop offset="0.447" stop-color="#000067"/><stop offset="0.453" stop-color="#000000"/><stop offset="1.000" stop-color="#000000"/></linearGradient><linearGradient id="g254" x1="0" y1="0" x2="0" y2="1"><stop offset="0.000" stop-color="#000000"/><stop offset="0.403" stop-color="#000000"/><stop offset="0.409" stop-color="#0000ec"/><stop offset="0.415" stop-color="#00ffdf"/><stop offset="0.421" stop-color="#00ff79"/><stop offset="0.428" stop-color="#00ffba"/><stop offset="0.434" stop-color="#003fff"/><stop offset="0.440" stop-color="#000000"/><stop offset="1.000" stop-color="#000000"/></linearGradient><linearGradient id="g255" x1="0" y1="0" x2="0" y2="1"><stop offset="0.000" stop-color="#000000"/><stop offset="0.396" stop-color="#000000"/><stop offset="0.403" stop-color="#003cff"/><stop offset="0.409" stop-color="#00ffa4"/><stop offset="0.415" stop-color="#00ff44"/><stop offset="0.421" stop-color="#00ff8b"/><stop offset="0.428" stop-color="#0074ff"/><stop offset="0.434" stop-color="#000013"/><stop offset="0.440" stop-color="#000000"/><stop offset="1.000" stop-color="#000000"/></linearGradient><linearGradient id="g256" x1="0" y1="0" x2="0" y2="1"><stop offset="0.000" stop-color="#000000"/><stop offset="0.340" stop-color="#000000"/><stop offset="0.358" stop-color="#0000d5"/><stop offset="0.365" stop-color="#0020ff"/><stop offset="0.384" stop-color="#00d6ff"/><stop offset="0.390" stop-color="#00feff"/><stop offset="0.396" stop-color="#00ffe3"/><stop offset="0.403" stop-color="#00ffb5"/><stop offset="0.409" stop-color="#00ff45"/><stop offset="0.415" stop-color="#22ff00"/><stop offset="0.421" stop-color="#1cff00"/><stop offset="0.428" stop-color="#00ff56"/><stop offset="0.434" stop-color="#00ffd1"/><stop offset="0.440" stop-color="#00f6ff"/><stop offset="0.484" stop-color="#0000fa"/><stop offset="0.535" stop-color="#000000"/><stop offset="1.000" stop-color="#000000"/></linearGradient><linearGradient id="g257" x1="0" y1="0" x2="0" y2="1"><stop offset="0.000" stop-color="#000000"/><stop offset="0.333" stop-color="#000000"/><stop offset="0.340" stop-color="#00001a"/><stop offset="0.358" stop-color="#0003ff"/><stop offset="0.371" stop-color="#009dff"/><stop offset="0.377" stop-color="#00daff"/><stop offset="0.384" stop-color="#00fff3"/><stop offset="0.409" stop-color="#00ff90"/><stop offset="0.415" stop-color="#00ff48"/><stop offset="0.421" stop-color="#2aff00"/><stop offset="0.428" stop-color="#51ff00"/><stop offset="0.434" stop-color="#00ff06"/><stop offset="0.440" stop-color="#00ff96"/><stop offset="0.447" stop-color="#00ffef"/><stop offset="0.453" stop-color="#00e4ff"/><stop offset="0.491" stop-color="#0010ff"/><stop offset="0.497" stop-color="#0000ee"/><stop offset="0.535" stop-color="#000015"/><stop offset="0.541" stop-color="#000000"/><stop offset="1.000" stop-color="#000000"/></linearGradient><linearGradient id="g258" x1="0" y1="0" x2="0" y2="1"><stop offset="0.000" stop-color="#000000"/><stop offset="0.409" stop-color="#000000"/><stop offset="0.415" stop-color="#000091"/><stop offset="0.421" stop-color="#00f9ff"/><stop offset="0.428" stop-color="#00ff44"/><stop offset="0.434" stop-color="#00ff28"/><stop offset="0.440" stop-color="#00ffb1"/><stop offset="0.447" stop-color="#0000fe"/><stop offset="0.453" stop-color="#000000"/><stop offset="1.000" stop-color="#000000"/></linearGradient><linearGradient id="g259" x1="0" y1="0" x2="0" y2="1"><stop offset="0.000" stop-color="#000000"/><stop offset="0.409" stop-color="#000000"/><stop offset="0.415" stop-color="#0000e9"/><stop offset="0.421" stop-color="#00ffe7"/><stop offset="0.428" stop-color="#00ff89"/><stop offset="0.434" stop-color="#00ffd3"/><stop offset="0.440" stop-color="#0015ff"/><stop offset="0.447" stop-color="#000000"/><stop offset="1.000" stop-color="#000000"/></linearGradient><linearGradient id="g260" x1="0" y1="0" x2="0" y2="1"><stop offset="0.000" stop-color="#000000"/><stop offset="0.396" stop-color="#000000"/><stop offset="0.403" stop-color="#000049"/><stop offset="0.409" stop-color="#00ccff"/><stop offset="0.415" stop-color="#00ff5f"/><stop offset="0.421" stop-color="#00ff3d"/><stop offset="0.428" stop-color="#00ffc4"/><stop offset="0.434" stop-color="#0000e3"/><stop offset="0.440" stop-color="#000000"/><stop offset="1.000" stop-color="#000000"/></linearGradient><linearGradient id="g261" x1="0" y1="0" x2="0" y2="1"><stop offset="0.000" stop-color="#000000"/><stop offset="0.390" stop-color="#000001"/><stop offset="0.396" stop-color="#00005e"/><stop offset="0.403" stop-color="#009bff"/><stop offset="0.409" stop-color="#00ff55"/><stop offset="0.415" stop-color="#10ff00"/><stop offset="0.421" stop-color="#00ff31"/><stop offset="0.428" stop-color="#00eaff"/><stop offset="0.434" stop-color="#000086"/><stop offset="0.440" stop-color="#000000"/><stop offset="1.000" stop-color="#000000"/></linearGradient><linearGradient id="g262" x1="0" y1="0" x2="0" y2="1"><stop offset="0.000" stop-color="#000000"/><stop offset="0.333" stop-color="#000000"/><stop offset="0.340" stop-color="#00001b"/><stop offset="0.352" stop-color="#0000be"/><stop offset="0.358" stop-color="#0014ff"/><stop offset="0.377" stop-color="#00f5ff"/><stop offset="0.403" stop-color="#00ff83"/><stop offset="0.409" stop-color="#00ff52"/><stop offset="0.415" stop-color="#03ff00"/><stop offset="0.421" stop-color="#2bff00"/><stop offset="0.428" stop-color="#00ff13"/><stop offset="0.434" stop-color="#00ff7c"/><stop offset="0.440" stop-color="#00ffbc"/><stop offset="0.453" stop-color="#00fffe"/><stop offset="0.497" stop-color="#0008ff"/><stop offset="0.503" stop-color="#0000e5"/><stop offset="0.541" stop-color="#000000"/><stop offset="1.000" stop-color="#000000"/></linearGradient><linearGradient id="g263" x1="0" y1="0" x2="0" y2="1"><stop offset="0.000" stop-color="#000000"/><stop offset="0.346" stop-color="#000000"/><stop offset="0.371" stop-color="#0004ff"/><stop offset="0.390" stop-color="#00a5ff"/><stop offset="0.409" stop-color="#00ebff"/><stop offset="0.415" stop-color="#00ffe7"/><stop offset="0.421" stop-color="#00ff79"/><stop offset="0.428" stop-color="#00ff2a"/><stop offset="0.434" stop-color="#00ff50"/><stop offset="0.440" stop-color="#00ffdd"/><stop offset="0.447" stop-color="#0091ff"/><stop offset="0.453" stop-color="#0051ff"/><stop offset="0.465" stop-color="#0004ff"/><stop offset="0.472" stop-color="#0000e4"/><stop offset="0.522" stop-color="#000000"/><stop offset="1.000" stop-color="#000000"/></linearGradient><linearGradient id="g264" x1="0" y1="0" x2="0" y2="1"><stop offset="0.000" stop-color="#000000"/><stop offset="0.409" stop-color="#000000"/><stop offset="0.415" stop-color="#000063"/><stop offset="0.421" stop-color="#00d7ff"/><stop offset="0.428" stop-color="#00ff68"/><stop offset="0.434" stop-color="#00ff58"/><stop offset="0.440" stop-color="#00fff1"/><stop offset="0.447" stop-color="#0000a5"/><stop offset="0.453" stop-color="#000000"/><stop offset="1.000" stop-color="#000000"/></linearGradient><linearGradient id="g265" x1="0" y1="0" x2="0" y2="1"><stop offset="0.000" stop-color="#000000"/><stop offset="0.403" stop-color="#000000"/><stop offset="0.409" stop-color="#000048"/><stop offset="0.415" stop-color="#00c0ff"/><stop offset="0.421" stop-color="#00ff75"/><stop offset="0.428" stop-color="#00ff5f"/><stop offset="0.434" stop-color="#00fff4"/><stop offset="0.440" stop-color="#0000a3"/><stop offset="0.447" stop-color="#000000"/><stop offset="1.000" stop-color="#000000"/></linearGradient><linearGradient id="g266" x1="0" y1="0" x2="0" y2="1"><stop offset="0.000" stop-color="#000000"/><stop offset="0.396" stop-color="#000000"/><stop offset="0.403" stop-color="#0000af"/><stop offset="0.409" stop-color="#00ffe0"/><stop offset="0.415" stop-color="#00ff42"/><stop offset="0.421" stop-color="#00ff50"/><stop offset="0.428" stop-color="#00f5ff"/><stop offset="0.434" stop-color="#000072"/><stop offset="0.440" stop-color="#000000"/><stop offset="1.000" stop-color="#000000"/></linearGradient><linearGradient id="g267" x1="0" y1="0" x2="0" y2="1"><stop offset="0.000" stop-color="#000000"/><stop offset="0.365" stop-color="#000003"/><stop offset="0.396" stop-color="#0000da"/><stop offset="0.403" stop-color="#0072ff"/><stop offset="0.409" stop-color="#00ff9e"/><stop offset="0.415" stop-color="#00ff23"/><stop offset="0.421" stop-color="#00ff40"/><stop offset="0.428" stop-color="#00ffef"/><stop offset="0.434" stop-color="#000dff"/><stop offset="0.440" stop-color="#0000a9"/><stop offset="0.447" stop-color="#000084"/><stop offset="0.484" stop-color="#000000"/><stop offset="1.000" stop-color="#000000"/></linearGradient><linearGradient id="g268" x1="0" y1="0" x2="0" y2="1"><stop offset="0.000" stop-color="#000000"/><stop offset="0.333" stop-color="#000000"/><stop offset="0.340" stop-color="#000012"/><stop offset="0.352" stop-color="#0000be"/><stop offset="0.358" stop-color="#001aff"/><stop offset="0.371" stop-color="#00c5ff"/><stop offset="0.377" stop-color="#00fff6"/><stop offset="0.390" stop-color="#00ffa0"/><stop offset="0.409" stop-color="#00ff52"/><stop offset="0.415" stop-color="#00ff04"/><stop offset="0.421" stop-color="#4dff00"/><stop offset="0.428" stop-color="#3dff00"/><stop offset="0.434" stop-color="#00ff31"/><stop offset="0.440" stop-color="#00ff99"/><stop offset="0.453" stop-color="#00ffec"/><stop offset="0.459" stop-color="#00eeff"/><stop offset="0.503" stop-color="#0000f5"/><stop offset="0.541" stop-color="#000000"/><stop offset="1.000" stop-color="#000000"/></linearGradient><linearGradient id="g269" x1="0" y1="0" x2="0" y2="1"><stop offset="0.000" stop-color="#000000"/><stop offset="0.358" stop-color="#000000"/><stop offset="0.390" stop-color="#0000dc"/><stop offset="0.403" stop-color="#0010ff"/><stop offset="0.409" stop-color="#0022ff"/><stop offset="0.415" stop-color="#0075ff"/><stop offset="0.421" stop-color="#00ffb8"/><stop offset="0.428" stop-color="#00ff2b"/><stop offset="0.434" stop-color="#00ff2f"/><stop offset="0.440" stop-color="#00ffca"/><stop offset="0.447" stop-color="#0027ff"/><stop offset="0.453" stop-color="#00009b"/><stop offset="0.472" stop-color="#000044"/><stop offset="0.491" stop-color="#000003"/><stop offset="0.497" stop-color="#000000"/><stop offset="1.000" stop-color="#000000"/></linearGradient><linearGradient id="g270" x1="0" y1="0" x2="0" y2="1"><stop offset="0.000" stop-color="#000000"/><stop offset="0.409" stop-color="#000000"/><stop offset="0.415" stop-color="#000094"/><stop offset="0.421" stop-color="#00fbff"/><stop offset="0.428" stop-color="#00ff6d"/><stop offset="0.434" stop-color="#00ff84"/><stop offset="0.440" stop-color="#00aaff"/><stop offset="0.447" stop-color="#000037"/><stop offset="0.453" stop-color="#000000"/><stop offset="1.000" stop-color="#000000"/></linearGradient><linearGradient id="g271" x1="0" y1="0" x2="0" y2="1"><stop offset="0.000" stop-color="#000000"/><stop offset="0.403" stop-color="#000000"/><stop offset="0.409" stop-color="#0007ff"/><stop offset="0.415" stop-color="#00ffac"/><stop offset="0.421" stop-color="#00ff32"/><stop offset="0.428" stop-color="#00ff65"/><stop offset="0.434" stop-color="#00adff"/><stop offset="0.440" stop-color="#000023"/><stop offset="0.447" stop-color="#000000"/><stop offset="1.000" stop-color="#000000"/></linearGradient><linearGradient id="g272" x1="0" y1="0" x2="0" y2="1"><stop offset="0.000" stop-color="#000000"/><stop offset="0.396" stop-color="#000000"/><stop offset="0.403" stop-color="#0000ee"/><stop offset="0.409" stop-color="#00ffb3"/><stop offset="0.415" stop-color="#00ff29"/><stop offset="0.421" stop-color="#00ff4c"/><stop offset="0.428" stop-color="#00dfff"/><stop offset="0.434" stop-color="#000053"/><stop offset="0.440" stop-color="#000000"/><stop offset="1.000" stop-color="#000000"/></linearGradient><linearGradient id="g273" x1="0" y1="0" x2="0" y2="1"><stop offset="0.000" stop-color="#000000"/><stop offset="0.352" stop-color="#000000"/><stop offset="0.377" stop-color="#0000fa"/><stop offset="0.384" stop-color="#0035ff"/><stop offset="0.403" stop-color="#00baff"/><stop offset="0.409" stop-color="#00ffcc"/><stop offset="0.415" stop-color="#00ff52"/><stop offset="0.421" stop-color="#00ff41"/><stop offset="0.428" stop-color="#00ffac"/><stop offset="0.434" stop-color="#00b1ff"/><stop offset="0.440" stop-color="#0059ff"/><stop offset="0.453" stop-color="#0007ff"/><stop offset="0.459" stop-color="#0000e4"/><stop offset="0.509" stop-color="#000009"/><stop offset="0.516" stop-color="#000000"/><stop offset="1.000" stop-color="#000000"/></linearGradient><linearGradient id="g274" x1="0" y1="0" x2="0" y2="1"><stop offset="0.000" stop-color="#000000"/><stop offset="0.340" stop-color="#000000"/><stop offset="0.346" stop-color="#000036"/><stop offset="0.358" stop-color="#0000e4"/><stop offset="0.365" stop-color="#0041ff"/><stop offset="0.377" stop-color="#00deff"/><stop offset="0.384" stop-color="#00ffe8"/><stop offset="0.396" stop-color="#00ffa1"/><stop offset="0.415" stop-color="#00ff64"/><stop offset="0.421" stop-color="#00ff2e"/><stop offset="0.428" stop-color="#00ff1c"/><stop offset="0.434" stop-color="#00ff5a"/><stop offset="0.440" stop-color="#00ffb4"/><stop offset="0.447" stop-color="#00ffeb"/><stop offset="0.453" stop-color="#00ecff"/><stop offset="0.491" stop-color="#001bff"/><stop offset="0.497" stop-color="#0000f5"/><stop offset="0.535" stop-color="#000000"/><stop offset="1.000" stop-color="#000000"/></linearGradient><linearGradient id="g275" x1="0" y1="0" x2="0" y2="1"><stop offset="0.000" stop-color="#000000"/><stop offset="0.384" stop-color="#000000"/><stop offset="0.409" stop-color="#00004b"/><stop offset="0.415" stop-color="#00008c"/><stop offset="0.421" stop-color="#0075ff"/><stop offset="0.428" stop-color="#00ffd2"/><stop offset="0.434" stop-color="#00ffc8"/><stop offset="0.440" stop-color="#0090ff"/><stop offset="0.447" stop-color="#000076"/><stop offset="0.453" stop-color="#000000"/><stop offset="1.000" stop-color="#000000"/></linearGradient><linearGradient id="g276" x1="0" y1="0" x2="0" y2="1"><stop offset="0.000" stop-color="#000000"/><stop offset="0.409" stop-color="#000000"/><stop offset="0.415" stop-color="#0018ff"/><stop offset="0.421" stop-color="#00ffb8"/><stop offset="0.428" stop-color="#00ff5a"/><stop offset="0.434" stop-color="#00ffab"/><stop offset="0.440" stop-color="#0036ff"/><stop offset="0.447" stop-color="#000000"/><stop offset="1.000" stop-color="#000000"/></linearGradient><linearGradient id="g277" x1="0" y1="0" x2="0" y2="1"><stop offset="0.000" stop-color="#000000"/><stop offset="0.403" stop-color="#000000"/><stop offset="0.409" stop-color="#0026ff"/><stop offset="0.415" stop-color="#00ffca"/><stop offset="0.421" stop-color="#00ff8c"/><stop offset="0.428" stop-color="#00fffd"/><stop offset="0.434" stop-color="#0000bb"/><stop offset="0.440" stop-color="#000000"/><stop offset="1.000" stop-color="#000000"/></linearGradient><linearGradient id="g278" x1="0" y1="0" x2="0" y2="1"><stop offset="0.000" stop-color="#000000"/><stop offset="0.396" stop-color="#000000"/><stop offset="0.403" stop-color="#000047"/><stop offset="0.409" stop-color="#0065ff"/><stop offset="0.415" stop-color="#00fff4"/><stop offset="0.421" stop-color="#00edff"/><stop offset="0.428" stop-color="#0007ff"/><stop offset="0.434" stop-color="#000000"/><stop offset="1.000" stop-color="#000000"/></linearGradient><linearGradient id="g279" x1="0" y1="0" x2="0" y2="1"><stop offset="0.000" stop-color="#000000"/><stop offset="0.346" stop-color="#000000"/><stop offset="0.352" stop-color="#000036"/><stop offset="0.365" stop-color="#0000d9"/><stop offset="0.371" stop-color="#002cff"/><stop offset="0.377" stop-color="#0078ff"/><stop offset="0.390" stop-color="#00e9ff"/><stop offset="0.396" stop-color="#00fff2"/><stop offset="0.409" stop-color="#00ffbc"/><stop offset="0.421" stop-color="#00ff5b"/><stop offset="0.428" stop-color="#00ff88"/><stop offset="0.434" stop-color="#00ffe1"/><stop offset="0.440" stop-color="#00dbff"/><stop offset="0.459" stop-color="#0061ff"/><stop offset="0.478" stop-color="#0000fc"/><stop offset="0.497" stop-color="#0000a1"/><stop offset="0.522" stop-color="#000008"/><stop offset="0.528" stop-color="#000000"/><stop offset="1.000" stop-color="#000000"/></linearGradient><linearGradient id="g280" x1="0" y1="0" x2="0" y2="1"><stop offset="0.000" stop-color="#000000"/><stop offset="0.346" stop-color="#000000"/><stop offset="0.352" stop-color="#000031"/><stop offset="0.365" stop-color="#0000d4"/><stop offset="0.371" stop-color="#0028ff"/><stop offset="0.384" stop-color="#00b4ff"/><stop offset="0.390" stop-color="#00e7ff"/><stop offset="0.396" stop-color="#00fff4"/><stop offset="0.415" stop-color="#00ffb7"/><stop offset="0.428" stop-color="#00ff2c"/><stop offset="0.434" stop-color="#00ff57"/><stop offset="0.440" stop-color="#00ffd5"/><stop offset="0.447" stop-color="#00bbff"/><stop offset="0.453" stop-color="#0085ff"/><stop offset="0.478" stop-color="#0000f9"/><stop offset="0.497" stop-color="#00009e"/><stop offset="0.522" stop-color="#000005"/><stop offset="0.528" stop-color="#000000"/><stop offset="1.000" stop-color="#000000"/></linearGradient><linearGradient id="g281" x1="0" y1="0" x2="0" y2="1"><stop offset="0.000" stop-color="#000000"/><stop offset="0.409" stop-color="#000000"/><stop offset="0.415" stop-color="#000090"/><stop offset="0.421" stop-color="#00fffe"/><stop offset="0.428" stop-color="#00ff50"/><stop offset="0.434" stop-color="#00ff50"/><stop offset="0.440" stop-color="#00fffe"/><stop offset="0.447" stop-color="#000086"/><stop offset="0.453" stop-color="#000000"/><stop offset="1.000" stop-color="#000000"/></linearGradient><linearGradient id="g282" x1="0" y1="0" x2="0" y2="1"><stop offset="0.000" stop-color="#000000"/><stop offset="0.403" stop-color="#000000"/><stop offset="0.409" stop-color="#000031"/><stop offset="0.415" stop-color="#00b1ff"/><stop offset="0.421" stop-color="#00ff74"/><stop offset="0.428" stop-color="#00ff58"/><stop offset="0.434" stop-color="#00ffeb"/><stop offset="0.440" stop-color="#0000a8"/><stop offset="0.447" stop-color="#000000"/><stop offset="1.000" stop-color="#000000"/></linearGradient><linearGradient id="g283" x1="0" y1="0" x2="0" y2="1"><stop offset="0.000" stop-color="#000000"/><stop offset="0.396" stop-color="#000000"/><stop offset="0.403" stop-color="#000034"/><stop offset="0.409" stop-color="#00afff"/><stop offset="0.415" stop-color="#00ff7d"/><stop offset="0.421" stop-color="#00ff68"/><stop offset="0.428" stop-color="#00faff"/><stop offset="0.434" stop-color="#000088"/><stop offset="0.440" stop-color="#000000"/><stop offset="1.000" stop-color="#000000"/></linearGradient><linearGradient id="g284" x1="0" y1="0" x2="0" y2="1"><stop offset="0.000" stop-color="#000000"/><stop offset="0.384" stop-color="#000000"/><stop offset="0.396" stop-color="#00002a"/><stop offset="0.403" stop-color="#00008c"/><stop offset="0.409" stop-color="#0097ff"/><stop offset="0.415" stop-color="#00ffb4"/><stop offset="0.421" stop-color="#00ffaf"/><stop offset="0.428" stop-color="#00a3ff"/><stop offset="0.434" stop-color="#000084"/><stop offset="0.440" stop-color="#000007"/><stop offset="0.447" stop-color="#000000"/><stop offset="1.000" stop-color="#000000"/></linearGradient><linearGradient id="g285" x1="0" y1="0" x2="0" y2="1"><stop offset="0.000" stop-color="#000000"/><stop offset="0.346" stop-color="#000000"/><stop offset="0.365" stop-color="#0007ff"/><stop offset="0.371" stop-color="#0066ff"/><stop offset="0.384" stop-color="#00faff"/><stop offset="0.396" stop-color="#00ffb4"/><stop offset="0.409" stop-color="#00ff8a"/><stop offset="0.421" stop-color="#00ff2c"/><stop offset="0.428" stop-color="#00ff38"/><stop offset="0.440" stop-color="#00ffdc"/><stop offset="0.447" stop-color="#00f3ff"/><stop offset="0.491" stop-color="#0000fc"/><stop offset="0.528" stop-color="#000000"/><stop offset="1.000" stop-color="#000000"/></linearGradient><linearGradient id="g286" x1="0" y1="0" x2="0" y2="1"><stop offset="0.000" stop-color="#000000"/><stop offset="0.358" stop-color="#000004"/><stop offset="0.377" stop-color="#0000d3"/><stop offset="0.384" stop-color="#0010ff"/><stop offset="0.396" stop-color="#006eff"/><stop offset="0.409" stop-color="#0099ff"/><stop offset="0.415" stop-color="#00cbff"/><stop offset="0.421" stop-color="#00ffa3"/><stop offset="0.428" stop-color="#00ff30"/><stop offset="0.434" stop-color="#00ff42"/><stop offset="0.440" stop-color="#00ffde"/><stop offset="0.447" stop-color="#0046ff"/><stop offset="0.453" stop-color="#0000e6"/><stop offset="0.472" stop-color="#00008a"/><stop offset="0.503" stop-color="#00000b"/><stop offset="0.509" stop-color="#000000"/><stop offset="1.000" stop-color="#000000"/></linearGradient><linearGradient id="g287" x1="0" y1="0" x2="0" y2="1"><stop offset="0.000" stop-color="#000000"/><stop offset="0.409" stop-color="#000000"/><stop offset="0.415" stop-color="#0000c6"/><stop offset="0.421" stop-color="#00ffd2"/><stop offset="0.428" stop-color="#00ff44"/><stop offset="0.434" stop-color="#00ff67"/><stop offset="0.440" stop-color="#00b7ff"/><stop offset="0.447" stop-color="#00002f"/><stop offset="0.453" stop-color="#000000"/><stop offset="1.000" stop-color="#000000"/></linearGradient><linearGradient id="g288" x1="0" y1="0" x2="0" y2="1"><stop offset="0.000" stop-color="#000000"/><stop offset="0.403" stop-color="#000000"/><stop offset="0.409" stop-color="#0000b6"/><stop offset="0.415" stop-color="#00ffe0"/><stop offset="0.421" stop-color="#00ff50"/><stop offset="0.428" stop-color="#00ff74"/><stop offset="0.434" stop-color="#00a7ff"/><stop offset="0.440" stop-color="#000021"/><stop offset="0.447" stop-color="#000000"/><stop offset="1.000" stop-color="#000000"/></linearGradient><linearGradient id="g289" x1="0" y1="0" x2="0" y2="1"><stop offset="0.000" stop-color="#000000"/><stop offset="0.396" stop-color="#000000"/><stop offset="0.403" stop-color="#00006e"/><stop offset="0.409" stop-color="#00f7ff"/><stop offset="0.415" stop-color="#00ff4e"/><stop offset="0.421" stop-color="#00ff49"/><stop offset="0.428" stop-color="#00fff8"/><stop offset="0.434" stop-color="#00007f"/><stop offset="0.440" stop-color="#000000"/><stop offset="1.000" stop-color="#000000"/></linearGradient><linearGradient id="g290" x1="0" y1="0" x2="0" y2="1"><stop offset="0.000" stop-color="#000000"/><stop offset="0.365" stop-color="#000000"/><stop offset="0.371" stop-color="#00001c"/><stop offset="0.390" stop-color="#0000b2"/><stop offset="0.403" stop-color="#0007ff"/><stop offset="0.409" stop-color="#00a9ff"/><stop offset="0.415" stop-color="#00ffa2"/><stop offset="0.421" stop-color="#00ff72"/><stop offset="0.428" stop-color="#00ffda"/><stop offset="0.434" stop-color="#003dff"/><stop offset="0.440" stop-color="#0000ac"/><stop offset="0.447" stop-color="#00007c"/><stop offset="0.459" stop-color="#000048"/><stop offset="0.484" stop-color="#000000"/><stop offset="1.000" stop-color="#000000"/></linearGradient><linearGradient id="g291" x1="0" y1="0" x2="0" y2="1"><stop offset="0.000" stop-color="#000000"/><stop offset="0.346" stop-color="#000000"/><stop offset="0.352" stop-color="#00003d"/><stop offset="0.365" stop-color="#0000fc"/><stop offset="0.371" stop-color="#0061ff"/><stop offset="0.384" stop-color="#00ffff"/><stop offset="0.396" stop-color="#00ffab"/><stop offset="0.415" stop-color="#00ff66"/><stop offset="0.421" stop-color="#00ff27"/><stop offset="0.428" stop-color="#00ff11"/><stop offset="0.434" stop-color="#00ff59"/><stop offset="0.440" stop-color="#00ffc4"/><stop offset="0.447" stop-color="#00f9ff"/><stop offset="0.491" stop-color="#0003ff"/><stop offset="0.528" stop-color="#000000"/><stop offset="1.000" stop-color="#000000"/></linearGradient><linearGradient id="g292" x1="0" y1="0" x2="0" y2="1"><stop offset="0.000" stop-color="#000000"/><stop offset="0.371" stop-color="#000000"/><stop offset="0.396" stop-color="#0000a1"/><stop offset="0.409" stop-color="#0000cc"/><stop offset="0.415" stop-color="#0036ff"/><stop offset="0.421" stop-color="#00ffc2"/><stop offset="0.428" stop-color="#00ff26"/><stop offset="0.434" stop-color="#00ff2c"/><stop offset="0.440" stop-color="#00ffd9"/><stop offset="0.447" stop-color="#0000e2"/><stop offset="0.453" stop-color="#000043"/><stop offset="0.459" stop-color="#00001f"/><stop offset="0.472" stop-color="#000000"/><stop offset="1.000" stop-color="#000000"/></linearGradient><linearGradient id="g293" x1="0" y1="0" x2="0" y2="1"><stop offset="0.000" stop-color="#000000"/><stop offset="0.409" stop-color="#000000"/><stop offset="0.415" stop-color="#0082ff"/><stop offset="0.421" stop-color="#00ff58"/><stop offset="0.428" stop-color="#05ff00"/><stop offset="0.434" stop-color="#00ff53"/><stop offset="0.440" stop-color="#008fff"/><stop offset="0.447" stop-color="#000000"/><stop offset="1.000" stop-color="#000000"/></linearGradient><linearGradient id="g294" x1="0" y1="0" x2="0" y2="1"><stop offset="0.000" stop-color="#000000"/><stop offset="0.403" stop-color="#000000"/><stop offset="0.409" stop-color="#0046ff"/><stop offset="0.415" stop-color="#00ff8c"/><stop offset="0.421" stop-color="#00ff30"/><stop offset="0.428" stop-color="#00ff89"/><stop offset="0.434" stop-color="#004dff"/><stop offset="0.440" stop-color="#000000"/><stop offset="1.000" stop-color="#000000"/></linearGradient><linearGradient id="g295" x1="0" y1="0" x2="0" y2="1"><stop offset="0.000" stop-color="#000000"/><stop offset="0.396" stop-color="#000000"/><stop offset="0.403" stop-color="#00006c"/><stop offset="0.409" stop-color="#00fdff"/><stop offset="0.415" stop-color="#00ff3f"/><stop offset="0.421" stop-color="#00ff32"/><stop offset="0.428" stop-color="#00ffd9"/><stop offset="0.434" stop-color="#0000a5"/><stop offset="0.440" stop-color="#000000"/><stop offset="1.000" stop-color="#000000"/></linearGradient><linearGradient id="g296" x1="0" y1="0" x2="0" y2="1"><stop offset="0.000" stop-color="#000000"/><stop offset="0.358" stop-color="#000000"/><stop offset="0.377" stop-color="#0000d6"/><stop offset="0.384" stop-color="#001bff"/><stop offset="0.390" stop-color="#0057ff"/><stop offset="0.403" stop-color="#00a6ff"/><stop offset="0.409" stop-color="#00eaff"/><stop offset="0.415" stop-color="#00ff91"/><stop offset="0.421" stop-color="#00ff3e"/><stop offset="0.428" stop-color="#00ff6f"/><stop offset="0.434" stop-color="#00efff"/><stop offset="0.440" stop-color="#0052ff"/><stop offset="0.447" stop-color="#0012ff"/><stop offset="0.453" stop-color="#0000ea"/><stop offset="0.503" stop-color="#00000c"/><stop offset="0.509" stop-color="#000000"/><stop offset="1.000" stop-color="#000000"/></linearGradient><linearGradient id="g297" x1="0" y1="0" x2="0" y2="1"><stop offset="0.000" stop-color="#000000"/><stop offset="0.352" stop-color="#000000"/><stop offset="0.365" stop-color="#0000bc"/><stop offset="0.371" stop-color="#001dff"/><stop offset="0.384" stop-color="#00c6ff"/><stop offset="0.390" stop-color="#00fffc"/><stop offset="0.396" stop-color="#00ffd6"/><stop offset="0.415" stop-color="#00ff97"/><stop offset="0.428" stop-color="#00ff1a"/><stop offset="0.434" stop-color="#00ff4d"/><stop offset="0.440" stop-color="#00ffce"/><stop offset="0.447" stop-color="#00c6ff"/><stop offset="0.459" stop-color="#006eff"/><stop offset="0.484" stop-color="#0000f3"/><stop offset="0.522" stop-color="#000000"/><stop offset="1.000" stop-color="#000000"/></linearGradient><linearGradient id="g298" x1="0" y1="0" x2="0" y2="1"><stop offset="0.000" stop-color="#000000"/><stop offset="0.403" stop-color="#000000"/><stop offset="0.409" stop-color="#00000a"/><stop offset="0.415" stop-color="#00008d"/><stop offset="0.421" stop-color="#00c0ff"/><stop offset="0.428" stop-color="#00ff99"/><stop offset="0.434" stop-color="#00ffaa"/><stop offset="0.440" stop-color="#0082ff"/><stop offset="0.447" stop-color="#00003c"/><stop offset="0.453" stop-color="#000000"/><stop offset="1.000" stop-color="#000000"/></linearGradient><linearGradient id="g299" x1="0" y1="0" x2="0" y2="1"><stop offset="0.000" stop-color="#000000"/><stop offset="0.409" stop-color="#000000"/><stop offset="0.415" stop-color="#0012ff"/><stop offset="0.421" stop-color="#00ffee"/><stop offset="0.428" stop-color="#00ffca"/><stop offset="0.434" stop-color="#0091ff"/><stop offset="0.440" stop-color="#000044"/><stop offset="0.447" stop-color="#000000"/><stop offset="1.000" stop-color="#000000"/></linearGradient><linearGradient id="g300" x1="0" y1="0" x2="0" y2="1"><stop offset="0.000" stop-color="#000000"/><stop offset="0.403" stop-color="#000000"/><stop offset="0.409" stop-color="#0042ff"/><stop offset="0.415" stop-color="#00ffae"/><stop offset="0.421" stop-color="#00ff74"/><stop offset="0.428" stop-color="#00fff1"/><stop offset="0.434" stop-color="#0000b3"/><stop offset="0.440" stop-color="#000000"/><stop offset="1.000" stop-color="#000000"/></linearGradient><linearGradient id="g301" x1="0" y1="0" x2="0" y2="1"><stop offset="0.000" stop-color="#000000"/><stop offset="0.396" stop-color="#000000"/><stop offset="0.403" stop-color="#000038"/><stop offset="0.409" stop-color="#009fff"/><stop offset="0.415" stop-color="#00ff73"/><stop offset="0.421" stop-color="#00ff47"/><stop offset="0.428" stop-color="#00ffd0"/><stop offset="0.434" stop-color="#0000d2"/><stop offset="0.440" stop-color="#000000"/><stop offset="1.000" stop-color="#000000"/></linearGradient><linearGradient id="g302" x1="0" y1="0" x2="0" y2="1"><stop offset="0.000" stop-color="#000000"/><stop offset="0.352" stop-color="#000000"/><stop offset="0.358" stop-color="#000026"/><stop offset="0.371" stop-color="#0000dd"/><stop offset="0.377" stop-color="#0039ff"/><stop offset="0.384" stop-color="#008aff"/><stop offset="0.396" stop-color="#00faff"/><stop offset="0.409" stop-color="#00ffcf"/><stop offset="0.421" stop-color="#00ff33"/><stop offset="0.428" stop-color="#00ff37"/><stop offset="0.434" stop-color="#00ffa9"/><stop offset="0.440" stop-color="#00cbff"/><stop offset="0.447" stop-color="#0081ff"/><stop offset="0.453" stop-color="#0056ff"/><stop offset="0.472" stop-color="#0000fb"/><stop offset="0.491" stop-color="#0000a1"/><stop offset="0.516" stop-color="#000000"/><stop offset="1.000" stop-color="#000000"/></linearGradient><linearGradient id="g303" x1="0" y1="0" x2="0" y2="1"><stop offset="0.000" stop-color="#000000"/><stop offset="0.358" stop-color="#000000"/><stop offset="0.377" stop-color="#0000fb"/><stop offset="0.384" stop-color="#004dff"/><stop offset="0.396" stop-color="#00beff"/><stop offset="0.415" stop-color="#00fff3"/><stop offset="0.428" stop-color="#00ff38"/><stop offset="0.434" stop-color="#00ff59"/><stop offset="0.440" stop-color="#00fff1"/><stop offset="0.447" stop-color="#0061ff"/><stop offset="0.453" stop-color="#001aff"/><stop offset="0.459" stop-color="#0000f7"/><stop offset="0.484" stop-color="#000091"/><stop offset="0.509" stop-color="#000000"/><stop offset="1.000" stop-color="#000000"/></linearGradient><linearGradient id="g304" x1="0" y1="0" x2="0" y2="1"><stop offset="0.000" stop-color="#000000"/><stop offset="0.409" stop-color="#000000"/><stop offset="0.415" stop-color="#0000ce"/><stop offset="0.421" stop-color="#00ffd2"/><stop offset="0.428" stop-color="#00ff4c"/><stop offset="0.434" stop-color="#00ff7c"/><stop offset="0.440" stop-color="#0088ff"/><stop offset="0.447" stop-color="#000005"/><stop offset="1.000" stop-color="#000000"/></linearGradient><linearGradient id="g305" x1="0" y1="0" x2="0" y2="1"><stop offset="0.000" stop-color="#000000"/><stop offset="0.403" stop-color="#000000"/><stop offset="0.409" stop-color="#000025"/><stop offset="0.415" stop-color="#007bff"/><stop offset="0.421" stop-color="#00ffc9"/><stop offset="0.428" stop-color="#00ffdc"/><stop offset="0.434" stop-color="#0039ff"/><stop offset="0.440" stop-color="#000000"/><stop offset="1.000" stop-color="#000000"/></linearGradient><linearGradient id="g306" x1="0" y1="0" x2="0" y2="1"><stop offset="0.000" stop-color="#000000"/><stop offset="0.403" stop-color="#000000"/><stop offset="0.409" stop-color="#0000d4"/><stop offset="0.415" stop-color="#00deff"/><stop offset="0.421" stop-color="#00ffed"/><stop offset="0.428" stop-color="#0071ff"/><stop offset="0.434" stop-color="#000033"/><stop offset="0.440" stop-color="#000000"/><stop offset="1.000" stop-color="#000000"/></linearGradient><linearGradient id="g307" x1="0" y1="0" x2="0" y2="1"><stop offset="0.000" stop-color="#000000"/><stop offset="0.384" stop-color="#000000"/><stop offset="0.390" stop-color="#000010"/><stop offset="0.403" stop-color="#000059"/><stop offset="0.409" stop-color="#0000f2"/><stop offset="0.415" stop-color="#00ebff"/><stop offset="0.421" stop-color="#00ffbd"/><stop offset="0.428" stop-color="#00e7ff"/><stop offset="0.434" stop-color="#0000da"/><stop offset="0.440" stop-color="#000018"/><stop offset="0.447" stop-color="#000000"/><stop offset="1.000" stop-color="#000000"/></linearGradient><linearGradient id="g308" x1="0" y1="0" x2="0" y2="1"><stop offset="0.000" stop-color="#000000"/><stop offset="0.352" stop-color="#000000"/><stop offset="0.358" stop-color="#000031"/><stop offset="0.371" stop-color="#0000fb"/><stop offset="0.377" stop-color="#0064ff"/><stop offset="0.390" stop-color="#00fffe"/><stop offset="0.396" stop-color="#00ffd3"/><stop offset="0.415" stop-color="#00ff8e"/><stop offset="0.421" stop-color="#00ff54"/><stop offset="0.428" stop-color="#00ff41"/><stop offset="0.434" stop-color="#00ff8d"/><stop offset="0.440" stop-color="#00fffe"/><stop offset="0.447" stop-color="#00b2ff"/><stop offset="0.453" stop-color="#0087ff"/><stop offset="0.484" stop-color="#0000f2"/><stop offset="0.516" stop-color="#000001"/><stop offset="1.000" stop-color="#000000"/></linearGradient><linearGradient id="g309" x1="0" y1="0" x2="0" y2="1"><stop offset="0.000" stop-color="#000000"/><stop offset="0.365" stop-color="#000000"/><stop offset="0.371" stop-color="#00001d"/><stop offset="0.390" stop-color="#0000e0"/><stop offset="0.396" stop-color="#000fff"/><stop offset="0.409" stop-color="#0044ff"/><stop offset="0.415" stop-color="#0084ff"/><stop offset="0.421" stop-color="#00ffbf"/><stop offset="0.428" stop-color="#00ff3e"/><stop offset="0.434" stop-color="#00ff57"/><stop offset="0.440" stop-color="#00f0ff"/><stop offset="0.447" stop-color="#0000e1"/><stop offset="0.453" stop-color="#00007e"/><stop offset="0.491" stop-color="#000000"/><stop offset="1.000" stop-color="#000000"/></linearGradient><linearGradient id="g310" x1="0" y1="0" x2="0" y2="1"><stop offset="0.000" stop-color="#000000"/><stop offset="0.409" stop-color="#000000"/><stop offset="0.415" stop-color="#0010ff"/><stop offset="0.421" stop-color="#00ffb4"/><stop offset="0.428" stop-color="#00ff58"/><stop offset="0.434" stop-color="#00ffb6"/><stop offset="0.440" stop-color="#000aff"/><stop offset="0.447" stop-color="#000000"/><stop offset="1.000" stop-color="#000000"/></linearGradient><filter id="blclipR" x="-5%" y="-5%" width="110%" height="110%"><feGaussianBlur stdDeviation="0.9 0.6"/></filter><clipPath id="clipR"><rect x="942" y="65" width="631" height="475"/></clipPath></defs>
<g clip-path="url(#clipR)"><g filter="url(#blclipR)"><rect x="1126.00" y="65" width="3.30" height="475" fill="url(#g162)"/><rect x="1129.00" y="65" width="3.30" height="475" fill="url(#g163)"/><rect x="1132.00" y="65" width="3.30" height="475" fill="url(#g164)"/><rect x="1135.00" y="65" width="3.30" height="475" fill="url(#g165)"/><rect x="1141.00" y="65" width="3.30" height="475" fill="url(#g166)"/><rect x="1144.00" y="65" width="3.30" height="475" fill="url(#g167)"/><rect x="1147.00" y="65" width="3.30" height="475" fill="url(#g168)"/><rect x="1150.00" y="65" width="3.30" height="475" fill="url(#g169)"/><rect x="1153.00" y="65" width="3.30" height="475" fill="url(#g170)"/><rect x="1156.00" y="65" width="3.30" height="475" fill="url(#g171)"/><rect x="1159.00" y="65" width="3.30" height="475" fill="url(#g172)"/><rect x="1162.00" y="65" width="3.30" height="475" fill="url(#g173)"/><rect x="1165.00" y="65" width="3.30" height="475" fill="url(#g174)"/><rect x="1168.00" y="65" width="3.30" height="475" fill="url(#g175)"/><rect x="1171.00" y="65" width="3.30" height="475" fill="url(#g176)"/><rect x="1174.00" y="65" width="3.30" height="475" fill="url(#g177)"/><rect x="1177.00" y="65" width="3.30" height="475" fill="url(#g178)"/><rect x="1180.00" y="65" width="3.30" height="475" fill="url(#g179)"/><rect x="1183.00" y="65" width="3.30" height="475" fill="url(#g180)"/><rect x="1186.00" y="65" width="3.30" height="475" fill="url(#g181)"/><rect x="1189.00" y="65" width="3.30" height="475" fill="url(#g182)"/><rect x="1192.00" y="65" width="3.30" height="475" fill="url(#g183)"/><rect x="1195.00" y="65" width="3.30" height="475" fill="url(#g184)"/><rect x="1198.00" y="65" width="3.30" height="475" fill="url(#g185)"/><rect x="1201.00" y="65" width="3.30" height="475" fill="url(#g186)"/><rect x="1204.00" y="65" width="3.30" height="475" fill="url(#g187)"/><rect x="1207.00" y="65" width="3.30" height="475" fill="url(#g188)"/><rect x="1210.00" y="65" width="3.30" height="475" fill="url(#g189)"/><rect x="1213.00" y="65" width="3.30" height="475" fill="url(#g190)"/><rect x="1216.00" y="65" width="3.30" height="475" fill="url(#g191)"/><rect x="1219.00" y="65" width="3.30" height="475" fill="url(#g192)"/><rect x="1222.00" y="65" width="3.30" height="475" fill="url(#g193)"/><rect x="1225.00" y="65" width="3.30" height="475" fill="url(#g194)"/><rect x="1228.00" y="65" width="3.30" height="475" fill="url(#g195)"/><rect x="1231.00" y="65" width="3.30" height="475" fill="url(#g196)"/><rect x="1234.00" y="65" width="3.30" height="475" fill="url(#g197)"/><rect x="1237.00" y="65" width="3.30" height="475" fill="url(#g198)"/><rect x="1240.00" y="65" width="3.30" height="475" fill="url(#g199)"/><rect x="1243.00" y="65" width="3.30" height="475" fill="url(#g200)"/><rect x="1246.00" y="65" width="3.30" height="475" fill="url(#g201)"/><rect x="1249.00" y="65" width="3.30" height="475" fill="url(#g202)"/><rect x="1252.00" y="65" width="3.30" height="475" fill="url(#g203)"/><rect x="1255.00" y="65" width="3.30" height="475" fill="url(#g204)"/><rect x="1258.00" y="65" width="3.30" height="475" fill="url(#g205)"/><rect x="1261.00" y="65" width="3.30" height="475" fill="url(#g206)"/><rect x="1264.00" y="65" width="3.30" height="475" fill="url(#g207)"/><rect x="1267.00" y="65" width="3.30" height="475" fill="url(#g208)"/><rect x="1270.00" y="65" width="3.30" height="475" fill="url(#g209)"/><rect x="1273.00" y="65" width="3.30" height="475" fill="url(#g210)"/><rect x="1276.00" y="65" width="3.30" height="475" fill="url(#g211)"/><rect x="1279.00" y="65" width="3.30" height="475" fill="url(#g212)"/><rect x="1282.00" y="65" width="3.30" height="475" fill="url(#g213)"/><rect x="1285.00" y="65" width="3.30" height="475" fill="url(#g214)"/><rect x="1288.00" y="65" width="3.30" height="475" fill="url(#g215)"/><rect x="1291.00" y="65" width="3.30" height="475" fill="url(#g216)"/><rect x="1294.00" y="65" width="3.30" height="475" fill="url(#g217)"/><rect x="1297.00" y="65" width="3.30" height="475" fill="url(#g218)"/><rect x="1300.00" y="65" width="3.30" height="475" fill="url(#g219)"/><rect x="1303.00" y="65" width="3.30" height="475" fill="url(#g220)"/><rect x="1306.00" y="65" width="3.30" height="475" fill="url(#g221)"/><rect x="1309.00" y="65" width="3.30" height="475" fill="url(#g222)"/><rect x="1312.00" y="65" width="3.30" height="475" fill="url(#g223)"/><rect x="1315.00" y="65" width="3.30" height="475" fill="url(#g224)"/><rect x="1318.00" y="65" width="3.30" height="475" fill="url(#g225)"/><rect x="1321.00" y="65" width="3.30" height="475" fill="url(#g226)"/><rect x="1324.00" y="65" width="3.30" height="475" fill="url(#g227)"/><rect x="1327.00" y="65" width="3.30" height="475" fill="url(#g228)"/><rect x="1330.00" y="65" width="3.30" height="475" fill="url(#g229)"/><rect x="1333.00" y="65" width="3.30" height="475" fill="url(#g230)"/><rect x="1336.00" y="65" width="3.30" height="475" fill="url(#g231)"/><rect x="1339.00" y="65" width="3.30" height="475" fill="url(#g232)"/><rect x="1342.00" y="65" width="3.30" height="475" fill="url(#g233)"/><rect x="1345.00" y="65" width="3.30" height="475" fill="url(#g234)"/><rect x="1348.00" y="65" width="3.30" height="475" fill="url(#g235)"/><rect x="1351.00" y="65" width="3.30" height="475" fill="url(#g236)"/><rect x="1354.00" y="65" width="3.30" height="475" fill="url(#g237)"/><rect x="1357.00" y="65" width="3.30" height="475" fill="url(#g238)"/><rect x="1360.00" y="65" width="3.30" height="475" fill="url(#g239)"/><rect x="1363.00" y="65" width="3.30" height="475" fill="url(#g240)"/><rect x="1366.00" y="65" width="3.30" height="475" fill="url(#g241)"/><rect x="1369.00" y="65" width="3.30" height="475" fill="url(#g242)"/><rect x="1372.00" y="65" width="3.30" height="475" fill="url(#g243)"/><rect x="1375.00" y="65" width="3.30" height="475" fill="url(#g244)"/><rect x="1378.00" y="65" width="3.30" height="475" fill="url(#g245)"/><rect x="1381.00" y="65" width="3.30" height="475" fill="url(#g246)"/><rect x="1384.00" y="65" width="3.30" height="475" fill="url(#g247)"/><rect x="1387.00" y="65" width="3.30" height="475" fill="url(#g248)"/><rect x="1390.00" y="65" width="3.30" height="475" fill="url(#g249)"/><rect x="1393.00" y="65" width="3.30" height="475" fill="url(#g250)"/><rect x="1396.00" y="65" width="3.30" height="475" fill="url(#g251)"/><rect x="1399.00" y="65" width="3.30" height="475" fill="url(#g252)"/><rect x="1402.00" y="65" width="3.30" height="475" fill="url(#g253)"/><rect x="1405.00" y="65" width="3.30" height="475" fill="url(#g254)"/><rect x="1408.00" y="65" width="3.30" height="475" fill="url(#g255)"/><rect x="1411.00" y="65" width="3.30" height="475" fill="url(#g256)"/><rect x="1414.00" y="65" width="3.30" height="475" fill="url(#g257)"/><rect x="1417.00" y="65" width="3.30" height="475" fill="url(#g258)"/><rect x="1420.00" y="65" width="3.30" height="475" fill="url(#g259)"/><rect x="1423.00" y="65" width="3.30" height="475" fill="url(#g260)"/><rect x="1426.00" y="65" width="3.30" height="475" fill="url(#g261)"/><rect x="1429.00" y="65" width="3.30" height="475" fill="url(#g262)"/><rect x="1432.00" y="65" width="3.30" height="475" fill="url(#g263)"/><rect x="1435.00" y="65" width="3.30" height="475" fill="url(#g264)"/><rect x="1438.00" y="65" width="3.30" height="475" fill="url(#g265)"/><rect x="1441.00" y="65" width="3.30" height="475" fill="url(#g266)"/><rect x="1444.00" y="65" width="3.30" height="475" fill="url(#g267)"/><rect x="1447.00" y="65" width="3.30" height="475" fill="url(#g268)"/><rect x="1450.00" y="65" width="3.30" height="475" fill="url(#g269)"/><rect x="1453.00" y="65" width="3.30" height="475" fill="url(#g270)"/><rect x="1456.00" y="65" width="3.30" height="475" fill="url(#g271)"/><rect x="1459.00" y="65" width="3.30" height="475" fill="url(#g272)"/><rect x="1462.00" y="65" width="3.30" height="475" fill="url(#g273)"/><rect x="1465.00" y="65" width="3.30" height="475" fill="url(#g274)"/><rect x="1468.00" y="65" width="3.30" height="475" fill="url(#g275)"/><rect x="1471.00" y="65" width="3.30" height="475" fill="url(#g276)"/><rect x="1474.00" y="65" width="3.30" height="475" fill="url(#g277)"/><rect x="1477.00" y="65" width="3.30" height="475" fill="url(#g278)"/><rect x="1480.00" y="65" width="3.30" height="475" fill="url(#g279)"/><rect x="1483.00" y="65" width="3.30" height="475" fill="url(#g280)"/><rect x="1486.00" y="65" width="3.30" height="475" fill="url(#g281)"/><rect x="1489.00" y="65" width="3.30" height="475" fill="url(#g282)"/><rect x="1492.00" y="65" width="3.30" height="475" fill="url(#g283)"/><rect x="1495.00" y="65" width="3.30" height="475" fill="url(#g284)"/><rect x="1498.00" y="65" width="3.30" height="475" fill="url(#g285)"/><rect x="1501.00" y="65" width="3.30" height="475" fill="url(#g286)"/><rect x="1504.00" y="65" width="3.30" height="475" fill="url(#g287)"/><rect x="1507.00" y="65" width="3.30" height="475" fill="url(#g288)"/><rect x="1510.00" y="65" width="3.30" height="475" fill="url(#g289)"/><rect x="1513.00" y="65" width="3.30" height="475" fill="url(#g290)"/><rect x="1516.00" y="65" width="3.30" height="475" fill="url(#g291)"/><rect x="1519.00" y="65" width="3.30" height="475" fill="url(#g292)"/><rect x="1522.00" y="65" width="3.30" height="475" fill="url(#g293)"/><rect x="1525.00" y="65" width="3.30" height="475" fill="url(#g294)"/><rect x="1528.00" y="65" width="3.30" height="475" fill="url(#g295)"/><rect x="1531.00" y="65" width="3.30" height="475" fill="url(#g296)"/><rect x="1534.00" y="65" width="3.30" height="475" fill="url(#g297)"/><rect x="1537.00" y="65" width="3.30" height="475" fill="url(#g298)"/><rect x="1540.00" y="65" width="3.30" height="475" fill="url(#g299)"/><rect x="1543.00" y="65" width="3.30" height="475" fill="url(#g300)"/><rect x="1546.00" y="65" width="3.30" height="475" fill="url(#g301)"/><rect x="1549.00" y="65" width="3.30" height="475" fill="url(#g302)"/><rect x="1552.00" y="65" width="3.30" height="475" fill="url(#g303)"/><rect x="1555.00" y="65" width="3.30" height="475" fill="url(#g304)"/><rect x="1558.00" y="65" width="3.30" height="475" fill="url(#g305)"/><rect x="1561.00" y="65" width="3.30" height="475" fill="url(#g306)"/><rect x="1564.00" y="65" width="3.30" height="475" fill="url(#g307)"/><rect x="1567.00" y="65" width="3.30" height="475" fill="url(#g308)"/><rect x="1570.00" y="65" width="3.30" height="475" fill="url(#g309)"/><rect x="1573.00" y="65" width="3.30" height="475" fill="url(#g310)"/></g></g>
<rect x="90.5" y="64.5" width="751" height="476" fill="none" stroke="#fff" stroke-width="1"/>
<line x1="210.5" y1="65" x2="210.5" y2="83" stroke="#c8c8c8" stroke-width="1"/>
<line x1="210.5" y1="522" x2="210.5" y2="540" stroke="#c8c8c8" stroke-width="1"/>
<line x1="721.5" y1="65" x2="721.5" y2="83" stroke="#c8c8c8" stroke-width="1"/>
<line x1="721.5" y1="522" x2="721.5" y2="540" stroke="#c8c8c8" stroke-width="1"/>
<rect x="539.5" y="57.5" width="2" height="7" fill="none" stroke="#fff" stroke-width="1"/>
<line x1="721" y1="358.5" x2="734" y2="358.5" stroke="#fff" stroke-width="1"/>
<rect x="754" y="69" width="80" height="279" fill="#404040"/>
<rect x="804" y="97" width="20" height="238" fill="url(#cbar)"/>
<text x="781.45" y="85.6" font-family="Liberation Sans" font-size="14" font-weight="bold" text-anchor="middle" textLength="19.5" lengthAdjust="spacingAndGlyphs" fill="#fff">dB</text>
<text x="780" y="102.0" font-family="Liberation Sans" font-size="14" font-weight="bold" text-anchor="middle" fill="#fff">0</text>
<line x1="797" y1="97.5" x2="804" y2="97.5" stroke="#fff" stroke-width="1"/>
<text x="780" y="131.6" font-family="Liberation Sans" font-size="14" font-weight="bold" text-anchor="middle" fill="#fff">-4</text>
<line x1="797" y1="127.5" x2="804" y2="127.5" stroke="#fff" stroke-width="1"/>
<text x="780" y="161.20000000000002" font-family="Liberation Sans" font-size="14" font-weight="bold" text-anchor="middle" fill="#fff">-8</text>
<line x1="797" y1="156.5" x2="804" y2="156.5" stroke="#fff" stroke-width="1"/>
<text x="780" y="190.8" font-family="Liberation Sans" font-size="14" font-weight="bold" text-anchor="middle" fill="#fff">-11</text>
<line x1="797" y1="186.5" x2="804" y2="186.5" stroke="#fff" stroke-width="1"/>
<text x="780" y="220.4" font-family="Liberation Sans" font-size="14" font-weight="bold" text-anchor="middle" fill="#fff">-15</text>
<line x1="797" y1="215.5" x2="804" y2="215.5" stroke="#fff" stroke-width="1"/>
<text x="780" y="250.0" font-family="Liberation Sans" font-size="14" font-weight="bold" text-anchor="middle" fill="#fff">-19</text>
<line x1="797" y1="245.5" x2="804" y2="245.5" stroke="#fff" stroke-width="1"/>
<text x="780" y="279.6" font-family="Liberation Sans" font-size="14" font-weight="bold" text-anchor="middle" fill="#fff">-23</text>
<line x1="797" y1="275.5" x2="804" y2="275.5" stroke="#fff" stroke-width="1"/>
<text x="780" y="309.20000000000005" font-family="Liberation Sans" font-size="14" font-weight="bold" text-anchor="middle" fill="#fff">-26</text>
<line x1="797" y1="304.5" x2="804" y2="304.5" stroke="#fff" stroke-width="1"/>
<text x="780" y="338.80000000000007" font-family="Liberation Sans" font-size="14" font-weight="bold" text-anchor="middle" fill="#fff">-30</text>
<line x1="797" y1="334.5" x2="804" y2="334.5" stroke="#fff" stroke-width="1"/>
<rect x="941.5" y="64.5" width="751" height="476" fill="none" stroke="#fff" stroke-width="1"/>
<line x1="1061.5" y1="65" x2="1061.5" y2="83" stroke="#c8c8c8" stroke-width="1"/>
<line x1="1061.5" y1="522" x2="1061.5" y2="540" stroke="#c8c8c8" stroke-width="1"/>
<line x1="1572.5" y1="65" x2="1572.5" y2="83" stroke="#c8c8c8" stroke-width="1"/>
<line x1="1572.5" y1="522" x2="1572.5" y2="540" stroke="#c8c8c8" stroke-width="1"/>
<rect x="1308.5" y="57.5" width="2" height="7" fill="none" stroke="#fff" stroke-width="1"/>
<line x1="1572" y1="267.5" x2="1585" y2="267.5" stroke="#fff" stroke-width="1"/>
<rect x="1605" y="69" width="80" height="279" fill="#404040"/>
<rect x="1655" y="97" width="20" height="238" fill="url(#cbar)"/>
<text x="1632.45" y="85.6" font-family="Liberation Sans" font-size="14" font-weight="bold" text-anchor="middle" textLength="19.5" lengthAdjust="spacingAndGlyphs" fill="#fff">dB</text>
<text x="1631" y="102.0" font-family="Liberation Sans" font-size="14" font-weight="bold" text-anchor="middle" fill="#fff">0</text>
<line x1="1648" y1="97.5" x2="1655" y2="97.5" stroke="#fff" stroke-width="1"/>
<text x="1631" y="131.6" font-family="Liberation Sans" font-size="14" font-weight="bold" text-anchor="middle" fill="#fff">-4</text>
<line x1="1648" y1="127.5" x2="1655" y2="127.5" stroke="#fff" stroke-width="1"/>
<text x="1631" y="161.20000000000002" font-family="Liberation Sans" font-size="14" font-weight="bold" text-anchor="middle" fill="#fff">-8</text>
<line x1="1648" y1="156.5" x2="1655" y2="156.5" stroke="#fff" stroke-width="1"/>
<text x="1631" y="190.8" font-family="Liberation Sans" font-size="14" font-weight="bold" text-anchor="middle" fill="#fff">-11</text>
<line x1="1648" y1="186.5" x2="1655" y2="186.5" stroke="#fff" stroke-width="1"/>
<text x="1631" y="220.4" font-family="Liberation Sans" font-size="14" font-weight="bold" text-anchor="middle" fill="#fff">-15</text>
<line x1="1648" y1="215.5" x2="1655" y2="215.5" stroke="#fff" stroke-width="1"/>
<text x="1631" y="250.0" font-family="Liberation Sans" font-size="14" font-weight="bold" text-anchor="middle" fill="#fff">-19</text>
<line x1="1648" y1="245.5" x2="1655" y2="245.5" stroke="#fff" stroke-width="1"/>
<text x="1631" y="279.6" font-family="Liberation Sans" font-size="14" font-weight="bold" text-anchor="middle" fill="#fff">-23</text>
<line x1="1648" y1="275.5" x2="1655" y2="275.5" stroke="#fff" stroke-width="1"/>
<text x="1631" y="309.20000000000005" font-family="Liberation Sans" font-size="14" font-weight="bold" text-anchor="middle" fill="#fff">-26</text>
<line x1="1648" y1="304.5" x2="1655" y2="304.5" stroke="#fff" stroke-width="1"/>
<text x="1631" y="338.80000000000007" font-family="Liberation Sans" font-size="14" font-weight="bold" text-anchor="middle" fill="#fff">-30</text>
<line x1="1648" y1="334.5" x2="1655" y2="334.5" stroke="#fff" stroke-width="1"/>
<text x="17.9" y="603.5" font-family="Liberation Sans" font-size="21" font-weight="bold" textLength="118" lengthAdjust="spacingAndGlyphs" fill="#fff">T11-No01-N01</text>
<text x="468" y="604.7" font-family="Liberation Sans" font-size="20" font-weight="bold" textLength="128" lengthAdjust="spacingAndGlyphs" fill="#33dde0">51 points LPC</text>
<text x="678" y="604.7" font-family="Liberation Sans" font-size="20" font-weight="bold" textLength="159" lengthAdjust="spacingAndGlyphs" fill="#33dd33">9600 points wave</text>
<rect x="90.5" y="617.5" width="751" height="204" fill="none" stroke="#fff" stroke-width="1"/>
<line x1="91" y1="719.5" x2="841" y2="719.5" stroke="#fff" stroke-width="1"/>
<line x1="210.5" y1="618" x2="210.5" y2="636" stroke="#c8c8c8" stroke-width="1"/>
<line x1="210.5" y1="803" x2="210.5" y2="821" stroke="#c8c8c8" stroke-width="1"/>
<line x1="721.5" y1="618" x2="721.5" y2="636" stroke="#c8c8c8" stroke-width="1"/>
<line x1="721.5" y1="803" x2="721.5" y2="821" stroke="#c8c8c8" stroke-width="1"/>
<line x1="278.5" y1="822" x2="278.5" y2="827" stroke="#fff" stroke-width="1"/>
<line x1="466.5" y1="822" x2="466.5" y2="827" stroke="#fff" stroke-width="1"/>
<line x1="654.5" y1="822" x2="654.5" y2="827" stroke="#fff" stroke-width="1"/>
<text x="63.4" y="847.5" font-family="Liberation Sans" font-size="18" font-weight="bold" textLength="67" lengthAdjust="spacingAndGlyphs" fill="#fff">0.066sec</text>
<text x="63.4" y="870.5" font-family="Liberation Sans" font-size="18" font-weight="bold" textLength="36" lengthAdjust="spacingAndGlyphs" fill="#fff">3156</text>
<text x="251.25" y="847.5" font-family="Liberation Sans" font-size="18" font-weight="bold" textLength="67" lengthAdjust="spacingAndGlyphs" fill="#fff">0.067sec</text>
<text x="251.25" y="870.5" font-family="Liberation Sans" font-size="18" font-weight="bold" textLength="36" lengthAdjust="spacingAndGlyphs" fill="#fff">3232</text>
<text x="439" y="847.5" font-family="Liberation Sans" font-size="18" font-weight="bold" textLength="67" lengthAdjust="spacingAndGlyphs" fill="#fff">0.069sec</text>
<text x="439" y="870.5" font-family="Liberation Sans" font-size="18" font-weight="bold" textLength="36" lengthAdjust="spacingAndGlyphs" fill="#fff">3308</text>
<text x="627" y="847.5" font-family="Liberation Sans" font-size="18" font-weight="bold" textLength="67" lengthAdjust="spacingAndGlyphs" fill="#fff">0.071sec</text>
<text x="627" y="870.5" font-family="Liberation Sans" font-size="18" font-weight="bold" textLength="36" lengthAdjust="spacingAndGlyphs" fill="#fff">3384</text>
<text x="780" y="847.5" font-family="Liberation Sans" font-size="18" font-weight="bold" textLength="67" lengthAdjust="spacingAndGlyphs" fill="#fff">0.072sec</text>
<text x="780" y="870.5" font-family="Liberation Sans" font-size="18" font-weight="bold" textLength="36" lengthAdjust="spacingAndGlyphs" fill="#fff">3460</text>
<polyline points="90.0,719.5 90.5,719.5 91.0,719.5 91.5,719.5 92.0,719.5 92.5,719.5 93.0,719.5 93.5,719.5 94.0,719.5 94.5,719.5 95.0,719.5 95.5,719.5 96.0,719.5 96.5,719.5 97.0,719.5 97.5,719.5 98.0,719.5 98.5,719.5 99.0,719.5 99.5,719.5 100.0,719.5 100.5,719.5 101.0,719.5 101.5,719.5 102.0,719.5 102.5,719.5 103.0,719.5 103.5,719.5 104.0,719.5 104.5,719.5 105.0,719.5 105.5,719.5 106.0,719.5 106.5,719.5 107.0,719.5 107.5,719.5 108.0,719.5 108.5,719.5 109.0,719.5 109.5,719.5 110.0,719.5 110.5,719.5 111.0,719.5 111.5,719.5 112.0,719.5 112.5,719.5 113.0,719.5 113.5,719.5 114.0,719.5 114.5,719.5 115.0,719.5 115.5,719.5 116.0,719.5 116.5,719.5 117.0,719.5 117.5,719.5 118.0,719.5 118.5,719.5 119.0,719.5 119.5,719.5 120.0,719.5 120.5,719.5 121.0,719.5 121.5,719.5 122.0,719.5 122.5,719.5 123.0,719.5 123.5,719.5 124.0,719.5 124.5,719.5 125.0,719.5 125.5,719.5 126.0,719.5 126.5,719.5 127.0,719.5 127.5,719.5 128.0,719.5 128.5,719.5 129.0,719.5 129.5,719.5 130.0,719.5 130.5,719.5 131.0,719.5 131.5,719.5 132.0,719.5 132.5,719.5 133.0,719.5 133.5,719.5 134.0,719.5 134.5,719.5 135.0,719.5 135.5,719.5 136.0,719.5 136.5,719.5 137.0,719.5 137.5,719.5 138.0,719.5 138.5,719.5 139.0,719.5 139.5,719.5 140.0,719.5 140.5,719.5 141.0,719.5 141.5,719.5 142.0,719.5 142.5,719.5 143.0,719.5 143.5,719.5 144.0,719.5 144.5,719.5 145.0,719.5 145.5,719.5 146.0,719.5 146.5,719.5 147.0,719.5 147.5,719.5 148.0,719.5 148.5,719.5 149.0,719.5 149.5,719.5 150.0,719.5 150.5,719.5 151.0,719.5 151.5,719.5 152.0,719.5 152.5,719.5 153.0,719.5 153.5,719.5 154.0,719.5 154.5,719.5 155.0,719.5 155.5,719.5 156.0,719.5 156.5,719.5 157.0,719.5 157.5,719.5 158.0,719.5 158.5,719.5 159.0,719.5 159.5,719.5 160.0,719.5 160.5,719.5 161.0,719.5 161.5,719.5 162.0,719.5 162.5,719.5 163.0,719.5 163.5,719.5 164.0,719.5 164.5,719.5 165.0,719.5 165.5,719.5 166.0,719.5 166.5,719.5 167.0,719.5 167.5,719.5 168.0,719.5 168.5,719.5 169.0,719.5 169.5,719.5 170.0,719.5 170.5,719.5 171.0,719.5 171.5,719.5 172.0,719.5 172.5,719.5 173.0,719.5 173.5,719.5 174.0,719.5 174.5,719.5 175.0,719.5 175.5,719.5 176.0,719.5 176.5,719.5 177.0,719.5 177.5,719.5 178.0,719.5 178.5,719.5 179.0,719.5 179.5,719.5 180.0,719.5 180.5,719.5 181.0,719.5 181.5,719.5 182.0,719.5 182.5,719.5 183.0,719.5 183.5,719.5 184.0,719.5 184.5,719.5 185.0,719.5 185.5,719.5 186.0,719.5 186.5,719.5 187.0,719.5 187.5,719.5 188.0,719.5 188.5,719.5 189.0,719.5 189.5,719.5 190.0,719.5 190.5,719.5 191.0,719.5 191.5,719.5 192.0,719.5 192.5,719.5 193.0,719.5 193.5,719.5 194.0,719.5 194.5,719.5 195.0,719.5 195.5,719.5 196.0,719.5 196.5,719.5 197.0,719.5 197.5,719.5 198.0,719.5 198.5,719.5 199.0,719.5 199.5,719.5 200.0,719.5 200.5,719.5 201.0,719.5 201.5,719.5 202.0,719.5 202.5,719.5 203.0,719.5 203.5,719.5 204.0,719.5 204.5,719.5 205.0,719.5 205.5,719.5 206.0,719.5 206.5,719.5 207.0,719.5 207.5,719.5 208.0,719.5 208.5,719.5 209.0,719.5 209.5,719.5 210.0,719.5 210.5,719.5" fill="none" stroke="#40e040" stroke-width="1.8" stroke-linejoin="round"/>
<polyline points="210.5,719.5 211.0,719.5 211.5,719.5 212.0,719.5 212.5,719.5 213.0,719.5 213.5,719.5 214.0,719.5 214.5,719.5 215.0,719.5 215.5,719.5 216.0,719.5 216.5,719.5 217.0,719.5 217.5,719.5 218.0,719.5 218.5,719.5 219.0,719.5 219.5,719.5 220.0,719.5 220.5,719.5 221.0,719.5 221.5,719.5 222.0,719.5 222.5,719.5 223.0,719.5 223.5,719.5 224.0,719.5 224.5,719.5 225.0,719.5 225.5,719.5 226.0,719.5 226.5,719.5 227.0,719.5 227.5,719.5 228.0,719.5 228.5,719.5 229.0,719.5 229.5,719.5 230.0,719.5 230.5,719.5 231.0,719.5 231.5,719.5 232.0,719.5 232.5,719.5 233.0,719.5 233.5,719.5 234.0,719.5 234.5,719.5 235.0,719.5 235.5,719.5 236.0,719.5 236.5,719.5 237.0,719.5 237.5,719.5 238.0,719.5 238.5,719.5 239.0,719.5 239.5,719.5 240.0,719.5 240.5,719.5 241.0,719.5 241.5,719.5 242.0,719.5 242.5,719.5 243.0,719.5 243.5,719.5 244.0,719.5 244.5,719.5 245.0,719.5 245.5,719.5 246.0,719.5 246.5,719.5 247.0,719.5 247.5,719.5 248.0,719.5 248.5,719.5 249.0,719.5 249.5,719.5 250.0,719.5 250.5,719.5 251.0,719.5 251.5,719.5 252.0,719.5 252.5,719.5 253.0,719.5 253.5,719.5 254.0,719.5 254.5,719.5 255.0,719.5 255.5,719.5 256.0,719.5 256.5,719.5 257.0,719.5 257.5,719.5 258.0,719.5 258.5,719.5 259.0,719.5 259.5,719.5 260.0,719.5 260.5,719.5 261.0,719.5 261.5,719.5 262.0,719.5 262.5,719.5 263.0,719.5 263.5,719.5 264.0,719.5 264.5,719.5 265.0,719.5 265.5,719.5 266.0,719.5 266.5,719.5 267.0,719.5 267.5,719.5 268.0,719.5 268.5,719.5 269.0,719.5 269.5,719.5 270.0,719.5 270.5,719.5 271.0,719.5 271.5,719.5 272.0,719.5 272.5,719.5 273.0,719.5 273.5,719.5 274.0,719.5 274.5,719.5 275.0,719.5 275.5,719.5 276.0,719.5 276.5,719.5 277.0,719.5 277.5,719.5 278.0,719.5 278.5,719.5 279.0,719.5 279.5,719.5 280.0,719.5 280.5,719.5 281.0,719.5 281.5,719.5 282.0,719.5 282.5,719.5 283.0,719.5 283.5,719.5 284.0,719.5 284.5,719.5 285.0,719.5 285.5,719.5 286.0,719.5 286.5,719.5 287.0,719.5 287.5,719.5 288.0,719.5 288.5,719.5 289.0,719.5 289.5,719.5 290.0,719.5 290.5,719.5 291.0,719.5 291.5,719.5 292.0,719.5 292.5,719.5 293.0,719.5 293.5,719.5 294.0,719.5 294.5,719.5 295.0,719.5 295.5,719.5 296.0,719.5 296.5,719.5 297.0,719.5 297.5,719.5 298.0,719.5 298.5,719.5 299.0,719.5 299.5,719.5 300.0,719.5 300.5,719.5 301.0,719.5 301.5,719.5 302.0,719.5 302.5,719.5 303.0,719.5 303.5,719.5 304.0,719.5 304.5,719.5 305.0,719.5 305.5,719.5 306.0,719.5 306.5,719.5 307.0,719.5 307.5,719.5 308.0,719.5 308.5,719.5 309.0,719.5 309.5,719.5 310.0,719.5 310.5,719.5 311.0,719.5 311.5,719.5 312.0,719.5 312.5,719.5 313.0,719.5 313.5,719.5 314.0,719.5 314.5,719.5 315.0,719.5 315.5,719.5 316.0,719.5 316.5,719.5 317.0,719.5 317.5,719.5 318.0,719.5 318.5,719.5 319.0,719.5 319.5,719.5 320.0,719.5 320.5,719.5 321.0,719.5 321.5,719.5 322.0,719.5 322.5,719.5 323.0,719.6 323.5,719.6 324.0,719.6 324.5,719.6 325.0,719.7 325.5,719.7 326.0,719.7 326.5,719.8 327.0,719.8 327.5,719.9 328.0,719.9 328.5,720.0 329.0,720.0 329.5,720.1 330.0,720.1 330.5,720.2 331.0,720.3 331.5,720.3 332.0,720.4 332.5,720.5 333.0,720.6 333.5,720.6 334.0,720.7 334.5,720.8 335.0,720.9 335.5,721.0 336.0,721.1 336.5,721.2 337.0,721.3 337.5,721.4 338.0,721.5 338.5,721.6 339.0,721.8 339.5,721.9 340.0,722.0 340.5,722.2 341.0,722.7 341.5,723.4 342.0,724.3 342.5,725.3 343.0,726.5 343.5,727.9 344.0,729.3 344.5,730.9 345.0,732.6 345.5,734.3 346.0,736.2 346.5,738.0 347.0,739.9 347.5,741.8 348.0,743.7 348.5,745.6 349.0,747.4 349.5,749.2 350.0,750.9 350.5,752.6 351.0,754.1 351.5,755.5 352.0,756.8 352.5,757.9 353.0,758.9 353.5,759.7 354.0,760.2 354.5,760.6 355.0,760.7 355.5,760.5 356.0,759.8 356.5,758.6 357.0,757.1 357.5,755.2 358.0,752.9 358.6,750.3 359.1,747.4 359.6,744.2 360.1,740.8 360.6,737.1 361.1,733.3 361.6,729.2 362.1,725.0 362.6,720.7 363.1,716.3 363.6,711.8 364.1,707.2 364.6,702.7 365.2,698.1 365.7,693.5 366.2,689.0 366.7,684.6 367.2,680.3 367.7,676.1 368.2,672.0 368.7,668.2 369.2,664.5 369.7,661.1 370.2,657.9 370.7,655.0 371.3,652.4 371.8,650.1 372.3,648.2 372.8,646.7 373.3,645.5 373.8,644.8 374.3,644.6 374.8,644.9 375.3,645.6 375.8,646.7 376.4,648.1 376.9,649.9 377.4,651.8 377.9,653.9 378.4,656.0 378.9,658.2 379.4,660.3 380.0,662.3 380.5,664.2 381.0,665.7 381.5,667.0 382.0,668.0 382.5,668.9 383.0,669.6 383.5,670.3 384.0,670.9 384.6,671.5 385.1,672.2 385.6,672.9 386.1,673.7 386.6,674.6 387.1,675.7 387.6,677.0 388.1,679.0 388.6,681.9 389.1,685.7 389.6,690.1 390.1,695.0 390.6,700.1 391.2,705.3 391.7,710.4 392.2,715.2 392.7,719.5 393.2,723.2 393.7,726.0 394.2,728.3 394.7,730.6 395.2,732.9 395.7,735.1 396.2,737.3 396.8,739.4 397.3,741.5 397.8,743.4 398.3,745.3 398.8,747.1 399.3,748.7 399.8,750.3 400.3,751.7 400.8,752.9 401.3,754.0 401.9,754.9 402.4,755.6 402.9,756.2 403.4,756.5 403.9,756.6 404.4,756.0 404.9,754.2 405.4,751.4 405.9,747.7 406.4,743.4 406.9,738.4 407.4,733.0 407.9,727.3 408.4,721.5 409.0,715.7 409.5,710.0 410.0,704.6 410.5,699.6 411.0,695.3 411.5,691.6 412.0,688.8 412.5,687.0 413.0,686.4 413.5,686.9 414.0,688.4 414.5,690.8 415.0,693.9 415.6,697.8 416.1,702.4 416.6,707.5 417.1,713.1 417.6,719.1 418.1,725.4 418.6,731.9 419.1,738.6 419.6,745.5 420.2,752.3 420.7,759.0 421.2,765.5 421.7,771.8 422.2,777.8 422.7,783.4 423.2,788.5 423.7,793.1 424.3,797.0 424.8,800.1 425.3,802.5 425.8,804.0 426.3,804.5 426.8,804.0 427.3,802.4 427.8,800.0 428.3,796.7 428.8,792.7 429.3,788.0 429.9,782.7 430.4,776.9 430.9,770.7 431.4,764.2 431.9,757.4 432.4,750.4 432.9,743.4 433.4,736.4 433.9,729.4 434.4,722.6 434.9,716.1 435.4,709.9 435.9,704.1 436.5,698.8 437.0,694.1 437.5,690.1 438.0,686.8 438.5,684.4 439.0,682.8 439.5,682.3 440.0,682.6 440.5,683.7 441.0,685.2 441.5,687.4 442.0,689.9 442.6,692.9 443.1,696.2 443.6,699.7 444.1,703.5 444.6,707.4 445.1,711.3 445.6,715.2 446.1,719.1 446.6,722.9 447.1,726.4 447.6,729.7 448.2,732.7 448.7,735.2 449.2,737.4 449.7,738.9 450.2,740.0 450.7,740.3 451.2,739.6 451.7,737.5 452.2,734.1 452.7,729.6 453.2,724.2 453.8,718.0 454.3,711.1 454.8,703.6 455.3,695.7 455.8,687.5 456.3,679.2 456.8,670.9 457.3,662.7 457.8,654.8 458.3,647.3 458.8,640.4 459.4,634.2 459.9,628.8 460.4,624.3 460.9,620.9 461.4,618.8 461.9,618.1 462.4,618.6 462.9,619.9 463.4,622.0 463.9,625.0 464.4,628.6 465.0,632.9 465.5,637.8 466.0,643.2 466.5,649.1 467.0,655.5 467.5,662.3 468.0,669.3 468.5,676.7 469.0,684.3 469.5,692.0 470.0,699.8 470.5,707.8 471.1,715.7 471.6,723.5 472.1,731.2 472.6,738.8 473.1,746.2 473.6,753.2 474.1,760.0 474.6,766.4 475.1,772.3 475.6,777.7 476.1,782.6 476.7,786.9 477.2,790.5 477.7,793.5 478.2,795.6 478.7,796.9 479.2,797.4 479.7,797.0 480.2,795.7 480.7,793.8 481.2,791.1 481.7,787.8 482.3,784.0 482.8,779.7 483.3,775.0 483.8,770.0 484.3,764.7 484.8,759.2 485.3,753.5 485.8,747.8 486.3,742.0 486.8,736.3 487.3,730.7 487.9,725.4 488.4,720.2 488.9,715.5 489.4,711.1 489.9,707.1 490.4,703.7 490.9,700.5 491.4,697.2 491.9,693.9 492.4,690.5 492.9,687.1 493.5,683.7 494.0,680.4 494.5,677.1 495.0,673.9 495.5,670.9 496.0,668.0 496.5,665.3 497.0,662.9 497.5,660.6 498.1,658.7 498.6,657.0 499.1,655.6 499.6,654.6 500.1,654.0 500.6,653.8 501.1,654.1 501.6,655.1 502.1,656.7 502.6,658.9 503.1,661.6 503.7,664.8 504.2,668.4 504.7,672.4 505.2,676.8 505.7,681.4 506.2,686.4 506.7,691.5 507.2,696.8 507.7,702.3 508.2,707.8 508.8,713.4 509.3,719.0 509.8,724.5 510.3,730.0 510.8,735.3 511.3,740.4 511.8,745.4 512.3,750.0 512.8,754.4 513.3,758.4 513.8,762.0 514.4,765.2 514.9,767.9 515.4,770.1 515.9,771.7 516.4,772.7 516.9,773.0 517.4,772.6 517.9,771.4 518.4,769.4 518.9,766.7 519.5,763.4 520.0,759.5 520.5,755.2 521.0,750.3 521.5,745.0 522.0,739.5 522.5,733.6 523.0,727.5 523.5,721.2 524.0,714.8 524.5,708.3 525.1,701.8 525.6,695.4 526.1,689.1 526.6,683.0 527.1,677.1 527.6,671.6 528.1,666.3 528.6,661.4 529.1,657.1 529.7,653.2 530.2,649.9 530.7,647.2 531.2,645.2 531.7,644.0 532.2,643.6 532.7,643.9 533.2,644.6 533.7,645.9 534.2,647.5 534.7,649.7 535.3,652.2 535.8,655.1 536.3,658.3 536.8,661.9 537.3,665.7 537.8,669.9 538.3,674.3 538.8,678.9 539.3,683.7 539.8,688.7 540.4,693.9 540.9,699.2 541.4,704.5 541.9,710.0 542.4,715.5 542.9,721.0 543.4,726.5 543.9,732.0 544.4,737.5 544.9,742.8 545.4,748.1 546.0,753.3 546.5,758.3 547.0,763.1 547.5,767.7 548.0,772.1 548.5,776.3 549.0,780.1 549.5,783.7 550.0,786.9 550.5,789.8 551.1,792.3 551.6,794.5 552.1,796.1 552.6,797.4 553.1,798.1 553.6,798.4 554.1,798.2 554.6,797.5 555.1,796.5 555.6,795.0 556.1,793.2 556.7,791.0 557.2,788.5 557.7,785.7 558.2,782.6 558.7,779.3 559.2,775.6 559.7,771.8 560.2,767.7 560.7,763.4 561.2,759.0 561.7,754.4 562.2,749.6 562.8,744.8 563.3,739.8 563.8,734.8 564.3,729.7 564.8,724.6 565.3,719.5 565.8,714.3 566.3,709.2 566.8,704.1 567.3,699.1 567.8,694.1 568.4,689.3 568.9,684.5 569.4,679.9 569.9,675.5 570.4,671.2 570.9,667.1 571.4,663.3 571.9,659.6 572.4,656.3 572.9,653.2 573.4,650.4 573.9,647.9 574.5,645.7 575.0,643.9 575.5,642.4 576.0,641.4 576.5,640.7 577.0,640.5 577.5,640.7 578.0,641.3 578.5,642.2 579.0,643.4 579.5,645.0 580.0,646.9 580.5,649.0 581.0,651.4 581.5,654.1 582.0,657.0 582.5,660.1 583.0,663.4 583.5,666.8 584.0,670.4 584.5,674.2 585.0,678.0 585.5,682.0 586.0,686.1 586.5,690.2 587.0,694.3 587.5,698.5 588.0,702.7 588.5,706.9 589.0,711.0 589.5,715.1 590.0,719.2 590.5,723.2 591.0,727.0 591.5,730.8 592.0,734.4 592.5,737.8 593.0,741.1 593.5,744.2 594.0,747.1 594.5,749.8 595.0,752.2 595.5,754.3 596.0,756.2 596.5,757.8 597.0,759.0 597.5,759.9 598.0,760.5 598.5,760.7 599.0,760.3 599.5,759.2 600.0,757.5 600.5,755.2 601.0,752.4 601.6,749.2 602.1,745.6 602.6,741.7 603.1,737.7 603.6,733.4 604.1,729.2 604.6,724.9 605.1,720.6 605.6,716.6 606.1,712.7 606.6,709.1 607.2,705.9 607.7,703.1 608.2,700.8 608.7,699.1 609.2,698.0 609.7,697.6 610.2,697.7 610.7,698.0 611.2,698.5 611.7,699.2 612.2,700.0 612.8,701.0 613.3,702.1 613.8,703.3 614.3,704.6 614.8,706.1 615.3,707.6 615.8,709.2 616.3,710.9 616.8,712.6 617.3,714.4 617.8,716.2 618.4,718.0 618.9,719.7 619.4,721.5 619.9,723.3 620.4,725.0 620.9,726.7 621.4,728.3 621.9,729.8 622.4,731.3 622.9,732.6 623.4,733.8 623.9,734.9 624.5,735.9 625.0,736.7 625.5,737.4 626.0,737.9 626.5,738.2 627.0,738.3 627.5,738.0 628.0,737.1 628.5,735.7 629.1,734.0 629.6,731.9 630.1,729.5 630.6,727.0 631.1,724.4 631.6,721.9 632.1,719.4 632.7,717.0 633.2,714.9 633.7,713.2 634.2,711.8 634.7,710.8 635.2,709.9 635.7,709.2 636.2,708.5 636.7,707.8 637.2,707.2 637.7,706.5 638.2,705.7 638.7,704.8 639.2,703.7 639.7,702.2 640.2,700.2 640.7,697.8 641.2,695.0 641.8,691.9 642.3,688.7 642.8,685.3 643.3,682.0 643.8,678.7 644.3,675.6 644.8,672.7 645.4,670.2 645.9,668.0 646.4,666.4 646.9,665.4 647.4,665.0 647.9,665.2 648.4,665.8 648.9,666.7 649.4,668.0 649.9,669.6 650.4,671.5 651.0,673.6 651.5,676.1 652.0,678.7 652.5,681.6 653.0,684.6 653.5,687.8 654.0,691.2 654.5,694.7 655.0,698.3 655.5,702.0 656.0,705.7 656.5,709.5 657.0,713.4 657.6,717.2 658.1,721.0 658.6,724.7 659.1,728.4 659.6,732.0 660.1,735.5 660.6,738.9 661.1,742.1 661.6,745.1 662.1,748.0 662.6,750.6 663.1,753.1 663.7,755.2 664.2,757.1 664.7,758.7 665.2,760.0 665.7,760.9 666.2,761.5 666.7,761.7 667.2,761.2 667.7,759.7 668.2,757.3 668.7,754.3 669.3,750.6 669.8,746.4 670.3,741.9 670.8,737.1 671.3,732.2 671.8,727.3 672.3,722.5 672.8,718.0 673.3,713.8 673.9,710.1 674.4,707.1 674.9,704.7 675.4,703.2 675.9,702.7 676.4,703.0 676.9,703.9 677.4,705.2 677.9,706.9 678.4,708.9 678.9,711.1 679.5,713.4 680.0,715.6 680.5,717.8 681.0,719.8 681.5,721.5 682.0,722.8 682.5,723.7 683.0,724.0 683.5,723.9 684.0,723.7 684.5,723.4 685.0,722.9 685.5,722.5 686.0,722.1 686.5,721.6 687.0,721.3 687.5,721.1 688.0,721.0 688.5,721.3 689.0,722.3 689.5,723.7 690.1,725.5 690.6,727.5 691.1,729.6 691.6,731.8 692.1,733.8 692.7,735.6 693.2,737.0 693.7,738.0 694.2,738.3 694.7,738.1 695.2,737.7 695.7,737.0 696.2,736.1 696.8,735.0 697.3,733.8 697.8,732.5 698.3,731.1 698.8,729.8 699.3,728.5 699.8,727.3 700.4,726.2 700.9,725.3 701.4,724.6 701.9,724.2 702.4,724.0 702.9,724.1 703.4,724.4 703.9,724.8 704.4,725.3 704.9,725.9 705.4,726.6 705.9,727.3 706.5,728.1 707.0,728.9 707.5,729.6 708.0,730.3 708.5,730.9 709.0,731.4 709.5,731.8 710.0,732.1 710.5,732.2 711.0,732.1 711.5,731.8 712.0,731.3 712.5,730.7 713.1,729.9 713.6,729.0 714.1,727.9 714.6,726.7 715.1,725.4 715.6,723.9 716.1,722.4 716.6,720.8 717.1,719.2 717.7,717.5 718.2,715.7 718.7,713.9 719.2,712.1 719.7,710.3 720.2,708.5 720.7,706.7 721.2,704.9" fill="none" stroke="#40e4ee" stroke-width="1.8" stroke-linejoin="round"/>
<polyline points="720.7,706.7 721.2,704.9 721.7,703.1 722.3,701.4 722.8,699.8 723.3,698.2 723.8,696.7 724.3,695.2 724.8,693.9 725.3,692.7 725.8,691.6 726.3,690.7 726.9,689.9 727.4,689.3 727.9,688.8 728.4,688.5 728.9,688.4 729.4,688.6 729.9,689.0 730.4,689.8 730.9,690.9 731.4,692.2 732.0,693.7 732.5,695.4 733.0,697.4 733.5,699.5 734.0,701.8 734.5,704.2 735.0,706.7 735.5,709.4 736.0,712.1 736.5,714.9 737.0,717.7 737.5,720.5 738.1,723.3 738.6,726.1 739.1,728.9 739.6,731.6 740.1,734.3 740.6,736.8 741.1,739.2 741.6,741.5 742.1,743.6 742.6,745.6 743.1,747.3 743.7,748.8 744.2,750.1 744.7,751.2 745.2,752.0 745.7,752.4 746.2,752.6 746.7,752.4 747.2,752.0 747.7,751.2 748.2,750.2 748.7,748.9 749.2,747.3 749.8,745.6 750.3,743.6 750.8,741.5 751.3,739.2 751.8,736.7 752.3,734.1 752.8,731.4 753.3,728.6 753.8,725.8 754.3,722.9 754.8,719.9 755.4,717.0 755.9,714.0 756.4,711.0 756.9,708.1 757.4,705.3 757.9,702.5 758.4,699.8 758.9,697.2 759.4,694.7 759.9,692.4 760.4,690.3 760.9,688.3 761.5,686.6 762.0,685.0 762.5,683.7 763.0,682.7 763.5,681.9 764.0,681.5 764.5,681.3 765.0,681.4 765.5,681.9 766.0,682.5 766.5,683.4 767.0,684.5 767.5,685.7 768.0,687.0 768.6,688.5 769.1,690.0 769.6,691.6 770.1,693.1 770.6,694.7 771.1,696.2 771.6,697.6 772.1,699.1 772.6,700.8 773.1,702.6 773.6,704.6 774.2,706.7 774.7,708.9 775.2,711.2 775.7,713.5 776.2,715.9 776.7,718.3 777.2,720.7 777.7,723.1 778.2,725.5 778.8,727.8 779.3,730.1 779.8,732.3 780.3,734.3 780.8,736.2 781.3,738.0 781.8,739.6 782.3,741.0 782.9,742.1 783.4,743.1 783.9,743.8 784.4,744.2 784.9,744.4 785.4,744.2 785.9,743.6 786.4,742.6 786.9,741.5 787.4,740.1 788.0,738.6 788.5,737.1 789.0,735.6 789.5,734.2 790.0,732.9 790.5,731.9 791.0,731.2 791.5,730.7 792.0,730.2 792.5,729.6 793.0,729.1 793.5,728.7 794.1,728.2 794.6,727.7 795.1,727.3 795.6,726.9 796.1,726.5 796.6,726.1 797.1,725.8 797.6,725.5 798.1,725.2 798.6,724.9 799.1,724.7 799.7,724.5 800.2,724.3 800.7,724.2 801.2,724.1 801.7,724.0 802.2,724.0 802.7,724.0 803.2,724.1 803.7,724.3 804.2,724.5 804.7,724.8 805.2,725.1 805.7,725.4 806.2,725.7 806.8,726.0 807.3,726.4 807.8,726.7 808.3,727.0 808.8,727.3 809.3,727.6 809.8,727.8 810.3,728.0 810.8,728.1 811.3,728.1 811.8,728.0 812.3,727.8 812.8,727.4 813.3,726.9 813.8,726.3 814.4,725.6 814.9,724.7 815.4,723.8 815.9,722.8 816.4,721.8 816.9,720.7 817.4,719.5 817.9,718.3 818.4,717.1 819.0,715.9 819.5,714.7 820.0,713.5 820.5,712.3 821.0,711.1 821.5,710.0 822.0,709.0 822.5,708.0 823.0,707.1 823.5,706.2 824.0,705.5 824.6,704.9 825.1,704.4 825.6,704.0 826.1,703.8 826.6,703.7 827.1,703.7 827.6,703.8 828.1,703.9 828.6,704.1 829.2,704.2 829.7,704.5 830.2,704.7 830.7,705.0 831.2,705.3 831.7,705.6 832.2,706.0 832.8,706.3 833.3,706.7 833.8,707.0 834.3,707.4 834.8,707.8 835.3,708.2 835.8,708.7 836.3,709.3 836.9,710.0 837.4,710.7 837.9,711.4 838.4,712.2 838.9,712.9 839.5,713.7 840.0,714.5 840.5,715.2 841.0,715.9" fill="none" stroke="#40e040" stroke-width="1.8" stroke-linejoin="round"/>
<text x="868.9" y="603.5" font-family="Liberation Sans" font-size="21" font-weight="bold" textLength="118" lengthAdjust="spacingAndGlyphs" fill="#fff">T05-No05-N01</text>
<text x="1319" y="604.7" font-family="Liberation Sans" font-size="20" font-weight="bold" textLength="128" lengthAdjust="spacingAndGlyphs" fill="#33dde0">51 points LPC</text>
<text x="1529" y="604.7" font-family="Liberation Sans" font-size="20" font-weight="bold" textLength="159" lengthAdjust="spacingAndGlyphs" fill="#33dd33">9600 points wave</text>
<rect x="941.5" y="617.5" width="751" height="204" fill="none" stroke="#fff" stroke-width="1"/>
<line x1="942" y1="719.5" x2="1692" y2="719.5" stroke="#fff" stroke-width="1"/>
<line x1="1061.5" y1="618" x2="1061.5" y2="636" stroke="#c8c8c8" stroke-width="1"/>
<line x1="1061.5" y1="803" x2="1061.5" y2="821" stroke="#c8c8c8" stroke-width="1"/>
<line x1="1572.5" y1="618" x2="1572.5" y2="636" stroke="#c8c8c8" stroke-width="1"/>
<line x1="1572.5" y1="803" x2="1572.5" y2="821" stroke="#c8c8c8" stroke-width="1"/>
<line x1="1129.5" y1="822" x2="1129.5" y2="827" stroke="#fff" stroke-width="1"/>
<line x1="1317.5" y1="822" x2="1317.5" y2="827" stroke="#fff" stroke-width="1"/>
<line x1="1505.5" y1="822" x2="1505.5" y2="827" stroke="#fff" stroke-width="1"/>
<text x="914.4" y="847.5" font-family="Liberation Sans" font-size="18" font-weight="bold" textLength="67" lengthAdjust="spacingAndGlyphs" fill="#fff">0.064sec</text>
<text x="914.4" y="870.5" font-family="Liberation Sans" font-size="18" font-weight="bold" textLength="36" lengthAdjust="spacingAndGlyphs" fill="#fff">3083</text>
<text x="1102.25" y="847.5" font-family="Liberation Sans" font-size="18" font-weight="bold" textLength="67" lengthAdjust="spacingAndGlyphs" fill="#fff">0.066sec</text>
<text x="1102.25" y="870.5" font-family="Liberation Sans" font-size="18" font-weight="bold" textLength="36" lengthAdjust="spacingAndGlyphs" fill="#fff">3159</text>
<text x="1290" y="847.5" font-family="Liberation Sans" font-size="18" font-weight="bold" textLength="67" lengthAdjust="spacingAndGlyphs" fill="#fff">0.067sec</text>
<text x="1290" y="870.5" font-family="Liberation Sans" font-size="18" font-weight="bold" textLength="36" lengthAdjust="spacingAndGlyphs" fill="#fff">3235</text>
<text x="1478" y="847.5" font-family="Liberation Sans" font-size="18" font-weight="bold" textLength="67" lengthAdjust="spacingAndGlyphs" fill="#fff">0.069sec</text>
<text x="1478" y="870.5" font-family="Liberation Sans" font-size="18" font-weight="bold" textLength="36" lengthAdjust="spacingAndGlyphs" fill="#fff">3311</text>
<text x="1631" y="847.5" font-family="Liberation Sans" font-size="18" font-weight="bold" textLength="67" lengthAdjust="spacingAndGlyphs" fill="#fff">0.071sec</text>
<text x="1631" y="870.5" font-family="Liberation Sans" font-size="18" font-weight="bold" textLength="36" lengthAdjust="spacingAndGlyphs" fill="#fff">3387</text>
<polyline points="941.0,719.5 941.5,719.5 942.0,719.5 942.5,719.5 943.0,719.5 943.5,719.5 944.0,719.5 944.5,719.5 945.0,719.5 945.5,719.5 946.0,719.5 946.5,719.5 947.0,719.5 947.5,719.5 948.0,719.5 948.5,719.5 949.0,719.5 949.5,719.5 950.0,719.5 950.5,719.5 951.0,719.5 951.5,719.5 952.0,719.5 952.5,719.5 953.0,719.5 953.5,719.5 954.0,719.5 954.5,719.5 955.0,719.5 955.5,719.5 956.0,719.5 956.5,719.5 957.0,719.5 957.5,719.5 958.0,719.5 958.5,719.5 959.0,719.5 959.5,719.5 960.0,719.5 960.5,719.5 961.0,719.5 961.5,719.5 962.0,719.5 962.5,719.5 963.0,719.5 963.5,719.5 964.0,719.5 964.5,719.5 965.0,719.5 965.5,719.5 966.0,719.5 966.5,719.5 967.0,719.5 967.5,719.5 968.0,719.5 968.5,719.5 969.0,719.5 969.5,719.5 970.0,719.5 970.5,719.5 971.0,719.5 971.5,719.5 972.0,719.5 972.5,719.5 973.0,719.5 973.5,719.5 974.0,719.5 974.5,719.5 975.0,719.5 975.5,719.5 976.0,719.5 976.5,719.5 977.0,719.5 977.5,719.5 978.0,719.5 978.5,719.5 979.0,719.5 979.5,719.5 980.0,719.5 980.5,719.5 981.0,719.5 981.5,719.5 982.0,719.5 982.5,719.5 983.0,719.5 983.5,719.5 984.0,719.5 984.5,719.5 985.0,719.5 985.5,719.5 986.0,719.5 986.5,719.5 987.0,719.5 987.5,719.5 988.0,719.5 988.5,719.5 989.0,719.5 989.5,719.5 990.0,719.5 990.5,719.5 991.0,719.5 991.5,719.5 992.0,719.5 992.5,719.5 993.0,719.5 993.5,719.5 994.0,719.5 994.5,719.5 995.0,719.5 995.5,719.5 996.0,719.5 996.5,719.5 997.0,719.5 997.5,719.5 998.0,719.5 998.5,719.5 999.0,719.5 999.5,719.5 1000.0,719.5 1000.5,719.5 1001.0,719.5 1001.5,719.5 1002.0,719.5 1002.6,719.5 1003.1,719.5 1003.6,719.5 1004.1,719.5 1004.6,719.5 1005.1,719.5 1005.6,719.5 1006.1,719.5 1006.6,719.5 1007.1,719.5 1007.6,719.5 1008.1,719.5 1008.6,719.5 1009.1,719.5 1009.6,719.5 1010.1,719.5 1010.6,719.5 1011.1,719.5 1011.6,719.5 1012.1,719.5 1012.6,719.5 1013.1,719.5 1013.6,719.5 1014.1,719.5 1014.6,719.5 1015.1,719.5 1015.6,719.5 1016.1,719.5 1016.6,719.5 1017.1,719.5 1017.6,719.5 1018.1,719.5 1018.6,719.5 1019.1,719.5 1019.6,719.5 1020.1,719.5 1020.6,719.5 1021.1,719.5 1021.6,719.5 1022.1,719.5 1022.6,719.5 1023.1,719.5 1023.6,719.5 1024.1,719.5 1024.6,719.5 1025.1,719.5 1025.6,719.5 1026.1,719.5 1026.6,719.5 1027.1,719.5 1027.6,719.5 1028.1,719.5 1028.6,719.5 1029.1,719.5 1029.6,719.5 1030.1,719.5 1030.6,719.5 1031.1,719.5 1031.6,719.5 1032.1,719.5 1032.6,719.5 1033.1,719.5 1033.6,719.5 1034.1,719.5 1034.6,719.5 1035.1,719.5 1035.6,719.5 1036.1,719.5 1036.6,719.5 1037.1,719.5 1037.6,719.5 1038.1,719.5 1038.6,719.5 1039.1,719.5 1039.6,719.5 1040.1,719.5 1040.6,719.5 1041.1,719.5 1041.6,719.5 1042.1,719.5 1042.6,719.5 1043.1,719.5 1043.6,719.5 1044.1,719.5 1044.6,719.5 1045.1,719.5 1045.6,719.5 1046.1,719.5 1046.6,719.5 1047.1,719.5 1047.6,719.5 1048.1,719.5 1048.6,719.5 1049.1,719.5 1049.6,719.5 1050.1,719.5 1050.6,719.5 1051.1,719.5 1051.6,719.5 1052.1,719.5 1052.6,719.5 1053.1,719.5 1053.6,719.5 1054.1,719.5 1054.6,719.5 1055.1,719.5 1055.6,719.5 1056.1,719.5 1056.6,719.5 1057.1,719.5 1057.6,719.5 1058.1,719.5 1058.6,719.5 1059.1,719.5 1059.6,719.5 1060.1,719.5 1060.6,719.5 1061.1,719.5 1061.6,719.5" fill="none" stroke="#40e040" stroke-width="1.8" stroke-linejoin="round"/>
<polyline points="1061.6,719.5 1062.1,719.5 1062.6,719.5 1063.1,719.5 1063.6,719.5 1064.1,719.5 1064.6,719.5 1065.1,719.5 1065.6,719.5 1066.1,719.5 1066.6,719.5 1067.1,719.5 1067.6,719.5 1068.1,719.5 1068.6,719.5 1069.1,719.5 1069.6,719.5 1070.1,719.5 1070.6,719.5 1071.1,719.5 1071.6,719.5 1072.1,719.5 1072.6,719.5 1073.1,719.5 1073.6,719.5 1074.1,719.5 1074.6,719.5 1075.1,719.5 1075.6,719.5 1076.1,719.5 1076.6,719.5 1077.1,719.5 1077.6,719.5 1078.1,719.5 1078.6,719.5 1079.1,719.5 1079.6,719.5 1080.1,719.5 1080.6,719.5 1081.1,719.5 1081.6,719.5 1082.1,719.5 1082.6,719.5 1083.1,719.5 1083.6,719.5 1084.1,719.5 1084.6,719.5 1085.1,719.5 1085.6,719.5 1086.1,719.5 1086.6,719.5 1087.1,719.5 1087.6,719.5 1088.1,719.5 1088.6,719.5 1089.1,719.5 1089.6,719.5 1090.1,719.5 1090.6,719.5 1091.1,719.5 1091.6,719.5 1092.1,719.5 1092.6,719.5 1093.1,719.5 1093.6,719.5 1094.1,719.5 1094.6,719.5 1095.1,719.5 1095.6,719.5 1096.1,719.5 1096.6,719.5 1097.1,719.5 1097.6,719.5 1098.1,719.5 1098.6,719.5 1099.1,719.5 1099.6,719.5 1100.1,719.5 1100.6,719.5 1101.1,719.5 1101.6,719.5 1102.1,719.5 1102.6,719.5 1103.1,719.5 1103.6,719.5 1104.1,719.5 1104.6,719.5 1105.1,719.5 1105.6,719.5 1106.1,719.5 1106.6,719.5 1107.1,719.5 1107.6,719.5 1108.1,719.5 1108.6,719.5 1109.1,719.5 1109.6,719.5 1110.1,719.5 1110.6,719.5 1111.1,719.5 1111.6,719.5 1112.1,719.5 1112.6,719.5 1113.1,719.5 1113.6,719.5 1114.1,719.5 1114.6,719.5 1115.1,719.5 1115.6,719.5 1116.1,719.5 1116.6,719.5 1117.1,719.5 1117.6,719.5 1118.1,719.5 1118.6,719.5 1119.1,719.5 1119.6,719.5 1120.1,719.5 1120.6,719.5 1121.1,719.5 1121.6,719.5 1122.1,719.5 1122.6,719.5 1123.1,719.5 1123.6,719.5 1124.1,719.5 1124.6,719.5 1125.1,719.5 1125.7,719.5 1126.2,719.5 1126.7,719.5 1127.2,719.5 1127.7,719.5 1128.2,719.5 1128.7,719.5 1129.2,719.5 1129.7,719.5 1130.2,719.5 1130.7,719.5 1131.2,719.5 1131.7,719.5 1132.2,719.5 1132.7,719.5 1133.2,719.5 1133.7,719.5 1134.2,719.5 1134.7,719.5 1135.2,719.5 1135.7,719.5 1136.2,719.5 1136.7,719.5 1137.2,719.5 1137.7,719.5 1138.2,719.5 1138.7,719.5 1139.2,719.5 1139.7,719.5 1140.2,719.5 1140.7,719.5 1141.2,719.5 1141.7,719.5 1142.2,719.5 1142.7,719.5 1143.2,719.5 1143.7,719.5 1144.2,719.5 1144.7,719.5 1145.2,719.5 1145.7,719.5 1146.2,719.5 1146.7,719.5 1147.2,719.5 1147.7,719.5 1148.2,719.5 1148.7,719.5 1149.2,719.5 1149.7,719.5 1150.2,719.5 1150.7,719.5 1151.2,719.5 1151.7,719.5 1152.2,719.5 1152.7,719.5 1153.2,719.5 1153.7,719.5 1154.2,719.5 1154.7,719.5 1155.2,719.5 1155.7,719.5 1156.2,719.5 1156.7,719.5 1157.2,719.5 1157.7,719.5 1158.2,719.5 1158.7,719.5 1159.2,719.5 1159.7,719.5 1160.2,719.5 1160.7,719.5 1161.2,719.5 1161.7,719.5 1162.2,719.5 1162.7,719.5 1163.2,719.5 1163.7,719.5 1164.2,719.5 1164.7,719.5 1165.2,719.5 1165.7,719.5 1166.2,719.5 1166.7,719.5 1167.2,719.5 1167.7,719.5 1168.2,719.5 1168.7,719.5 1169.2,719.5 1169.7,719.5 1170.2,719.5 1170.7,719.5 1171.2,719.5 1171.7,719.5 1172.2,719.5 1172.7,719.5 1173.2,719.5 1173.7,719.5 1174.2,719.5 1174.7,719.5 1175.2,719.5 1175.7,719.5 1176.2,719.5 1176.7,719.5 1177.2,719.5 1177.7,719.5 1178.2,719.5 1178.7,719.5 1179.2,719.5 1179.7,719.5 1180.2,719.5 1180.7,719.5 1181.2,719.5 1181.7,719.5 1182.2,719.5 1182.7,719.5 1183.2,719.5 1183.7,719.5 1184.2,719.5 1184.7,719.5 1185.2,719.5 1185.7,719.5 1186.2,719.5 1186.7,719.5 1187.2,719.5 1187.7,719.6 1188.2,719.6 1188.7,719.7 1189.2,719.9 1189.7,720.0 1190.3,720.2 1190.8,720.4 1191.3,720.6 1191.8,720.8 1192.3,721.1 1192.8,721.4 1193.3,721.6 1193.8,721.9 1194.3,722.2 1194.8,722.5 1195.3,722.8 1195.8,723.2 1196.3,723.5 1196.8,723.8 1197.4,724.1 1197.9,724.4 1198.4,724.8 1198.9,725.1 1199.4,725.4 1199.9,725.7 1200.4,726.0 1200.9,726.2 1201.4,726.5 1201.9,726.8 1202.4,727.0 1202.9,727.2 1203.4,727.4 1204.0,727.6 1204.5,727.7 1205.0,727.9 1205.5,728.0 1206.0,728.0 1206.5,728.1 1207.0,728.1 1207.5,728.0 1208.0,727.9 1208.5,727.6 1209.0,727.3 1209.6,726.8 1210.1,726.3 1210.6,725.7 1211.1,725.1 1211.6,724.3 1212.1,723.6 1212.6,722.7 1213.2,721.9 1213.7,720.9 1214.2,720.0 1214.7,719.0 1215.2,718.0 1215.7,716.7 1216.2,714.8 1216.7,712.3 1217.2,709.5 1217.7,706.4 1218.2,703.1 1218.7,699.6 1219.2,696.1 1219.8,692.7 1220.3,689.4 1220.8,686.4 1221.3,683.7 1221.8,681.4 1222.3,679.7 1222.8,678.6 1223.3,678.2 1223.8,678.7 1224.3,680.0 1224.8,682.2 1225.3,685.1 1225.8,688.6 1226.3,692.7 1226.9,697.3 1227.4,702.2 1227.9,707.5 1228.4,713.1 1228.9,718.8 1229.4,724.5 1229.9,730.3 1230.4,736.0 1230.9,741.6 1231.4,746.9 1231.9,751.8 1232.5,756.4 1233.0,760.5 1233.5,764.0 1234.0,766.9 1234.5,769.1 1235.0,770.4 1235.5,770.9 1236.0,770.4 1236.5,768.9 1237.0,766.4 1237.5,763.1 1238.1,759.1 1238.6,754.3 1239.1,748.9 1239.6,743.0 1240.1,736.7 1240.6,729.9 1241.1,722.9 1241.6,715.6 1242.1,708.2 1242.7,700.6 1243.2,693.1 1243.7,685.7 1244.2,678.4 1244.7,671.4 1245.2,664.6 1245.7,658.3 1246.2,652.4 1246.7,647.0 1247.2,642.2 1247.8,638.2 1248.3,634.9 1248.8,632.4 1249.3,630.9 1249.8,630.4 1250.3,631.2 1250.8,633.6 1251.3,637.4 1251.8,642.5 1252.3,648.7 1252.8,656.0 1253.4,664.2 1253.9,673.2 1254.4,682.8 1254.9,692.9 1255.4,703.4 1255.9,714.2 1256.4,725.1 1256.9,736.0 1257.4,746.8 1257.9,757.3 1258.4,767.4 1258.9,777.0 1259.4,786.0 1260.0,794.2 1260.5,801.5 1261.0,807.7 1261.5,812.8 1262.0,816.6 1262.5,819.0 1263.0,819.8 1263.5,819.0 1264.0,816.8 1264.5,813.2 1265.0,808.4 1265.6,802.6 1266.1,795.7 1266.6,788.0 1267.1,779.6 1267.6,770.5 1268.1,761.0 1268.6,751.1 1269.1,741.0 1269.7,730.7 1270.2,720.4 1270.7,710.3 1271.2,700.4 1271.7,690.9 1272.2,681.8 1272.7,673.4 1273.2,665.7 1273.7,658.8 1274.3,653.0 1274.8,648.2 1275.3,644.6 1275.8,642.4 1276.3,641.6 1276.8,642.4 1277.3,644.7 1277.8,648.4 1278.3,653.3 1278.8,659.3 1279.3,666.3 1279.9,674.0 1280.4,682.5 1280.9,691.5 1281.4,701.0 1281.9,710.7 1282.4,720.5 1282.9,730.3 1283.4,740.0 1283.9,749.5 1284.4,758.5 1284.9,767.0 1285.5,774.7 1286.0,781.7 1286.5,787.7 1287.0,792.6 1287.5,796.3 1288.0,798.6 1288.5,799.4 1289.0,798.7 1289.5,796.8 1290.0,793.6 1290.5,789.4 1291.0,784.2 1291.5,778.2 1292.1,771.4 1292.6,764.0 1293.1,756.0 1293.6,747.7 1294.1,738.9 1294.6,730.0 1295.1,721.0 1295.6,712.0 1296.1,703.1 1296.6,694.3 1297.1,686.0 1297.6,678.0 1298.1,670.6 1298.7,663.8 1299.2,657.8 1299.7,652.6 1300.2,648.4 1300.7,645.2 1301.2,643.3 1301.7,642.6 1302.2,643.3 1302.7,645.1 1303.2,648.2 1303.7,652.2 1304.3,657.2 1304.8,663.0 1305.3,669.5 1305.8,676.6 1306.3,684.3 1306.8,692.3 1307.3,700.7 1307.8,709.3 1308.3,718.0 1308.9,726.6 1309.4,735.2 1309.9,743.6 1310.4,751.6 1310.9,759.3 1311.4,766.4 1311.9,772.9 1312.4,778.7 1313.0,783.7 1313.5,787.7 1314.0,790.8 1314.5,792.6 1315.0,793.3 1315.5,792.7 1316.0,791.0 1316.5,788.3 1317.0,784.7 1317.5,780.3 1318.0,775.1 1318.6,769.3 1319.1,763.0 1319.6,756.1 1320.1,748.9 1320.6,741.5 1321.1,733.8 1321.6,726.1 1322.1,718.4 1322.6,710.7 1323.1,703.3 1323.6,696.1 1324.1,689.2 1324.6,682.9 1325.2,677.1 1325.7,671.9 1326.2,667.5 1326.7,663.9 1327.2,661.2 1327.7,659.5 1328.2,658.9 1328.7,659.5 1329.2,661.1 1329.7,663.6 1330.2,667.1 1330.7,671.3 1331.2,676.2 1331.8,681.8 1332.3,687.9 1332.8,694.4 1333.3,701.2 1333.8,708.4 1334.3,715.7 1334.8,723.0 1335.3,730.4 1335.8,737.7 1336.3,744.9 1336.8,751.7 1337.3,758.2 1337.8,764.3 1338.4,769.9 1338.9,774.8 1339.4,779.0 1339.9,782.5 1340.4,785.0 1340.9,786.6 1341.4,787.2 1341.9,786.6 1342.4,785.0 1342.9,782.4 1343.4,778.9 1344.0,774.6 1344.5,769.6 1345.0,763.9 1345.5,757.8 1346.0,751.1 1346.5,744.2 1347.0,736.9 1347.5,729.5 1348.1,722.0 1348.6,714.5 1349.1,707.1 1349.6,699.8 1350.1,692.9 1350.6,686.2 1351.1,680.1 1351.6,674.4 1352.1,669.4 1352.7,665.1 1353.2,661.6 1353.7,659.0 1354.2,657.4 1354.7,656.8 1355.2,657.3 1355.7,658.9 1356.2,661.3 1356.7,664.6 1357.2,668.6 1357.8,673.2 1358.3,678.4 1358.8,684.0 1359.3,690.0 1359.8,696.3 1360.3,702.7 1360.8,709.2 1361.3,715.8 1361.8,722.2 1362.3,728.5 1362.8,734.5 1363.3,740.1 1363.9,745.3 1364.4,749.9 1364.9,753.9 1365.4,757.2 1365.9,759.6 1366.4,761.2 1366.9,761.7 1367.4,761.3 1367.9,760.2 1368.4,758.5 1368.9,756.1 1369.4,753.2 1369.9,749.9 1370.5,746.1 1371.0,741.9 1371.5,737.5 1372.0,732.8 1372.5,728.0 1373.0,723.0 1373.5,718.0 1374.0,712.9 1374.5,707.9 1375.0,703.1 1375.5,698.4 1376.0,694.0 1376.5,689.8 1377.1,686.0 1377.6,682.7 1378.1,679.8 1378.6,677.4 1379.1,675.7 1379.6,674.6 1380.1,674.2 1380.6,674.6 1381.1,675.7 1381.6,677.5 1382.1,679.8 1382.7,682.8 1383.2,686.2 1383.7,690.0 1384.2,694.2 1384.7,698.7 1385.2,703.4 1385.7,708.3 1386.2,713.4 1386.8,718.5 1387.3,723.5 1387.8,728.6 1388.3,733.5 1388.8,738.2 1389.3,742.7 1389.8,746.9 1390.3,750.7 1390.8,754.1 1391.4,757.1 1391.9,759.4 1392.4,761.2 1392.9,762.3 1393.4,762.7 1393.9,762.3 1394.4,761.1 1394.9,759.2 1395.4,756.7 1395.9,753.7 1396.5,750.1 1397.0,746.2 1397.5,741.9 1398.0,737.3 1398.5,732.5 1399.0,727.5 1399.5,722.5 1400.0,717.5 1400.5,712.5 1401.0,707.7 1401.5,703.1 1402.0,698.8 1402.5,694.9 1403.1,691.3 1403.6,688.3 1404.1,685.8 1404.6,683.9 1405.1,682.7 1405.6,682.3 1406.1,682.6 1406.6,683.6 1407.1,685.0 1407.6,687.0 1408.1,689.5 1408.6,692.3 1409.2,695.6 1409.7,699.1 1410.2,702.8 1410.7,706.8 1411.2,710.9 1411.7,715.2 1412.2,719.5 1412.7,723.7 1413.2,728.0 1413.7,732.1 1414.2,736.1 1414.7,739.8 1415.2,743.3 1415.8,746.6 1416.3,749.4 1416.8,751.9 1417.3,753.9 1417.8,755.3 1418.3,756.3 1418.8,756.6 1419.3,756.3 1419.8,755.4 1420.3,753.9 1420.9,751.9 1421.4,749.5 1421.9,746.7 1422.4,743.5 1422.9,740.1 1423.4,736.3 1424.0,732.4 1424.5,728.3 1425.0,724.2 1425.5,720.0 1426.0,715.7 1426.5,711.6 1427.0,707.5 1427.6,703.6 1428.1,699.8 1428.6,696.4 1429.1,693.2 1429.6,690.4 1430.1,688.0 1430.7,686.0 1431.2,684.5 1431.7,683.6 1432.2,683.3 1432.7,683.7 1433.2,684.7 1433.7,686.3 1434.2,688.5 1434.7,691.2 1435.2,694.3 1435.8,697.8 1436.3,701.5 1436.8,705.5 1437.3,709.7 1437.8,714.1 1438.3,718.5 1438.8,722.8 1439.3,727.2 1439.8,731.4 1440.3,735.4 1440.8,739.1 1441.4,742.6 1441.9,745.7 1442.4,748.4 1442.9,750.6 1443.4,752.2 1443.9,753.2 1444.4,753.6 1444.9,753.3 1445.4,752.6 1445.9,751.3 1446.4,749.6 1447.0,747.6 1447.5,745.2 1448.0,742.5 1448.5,739.6 1449.0,736.4 1449.5,733.1 1450.0,729.7 1450.5,726.1 1451.1,722.5 1451.6,719.0 1452.1,715.4 1452.6,712.0 1453.1,708.7 1453.6,705.5 1454.1,702.6 1454.6,699.9 1455.1,697.5 1455.7,695.5 1456.2,693.8 1456.7,692.5 1457.2,691.8 1457.7,691.5 1458.2,691.8 1458.7,692.6 1459.2,694.0 1459.7,695.8 1460.2,698.0 1460.8,700.6 1461.3,703.4 1461.8,706.5 1462.3,709.9 1462.8,713.3 1463.3,716.9 1463.8,720.5 1464.3,724.1 1464.8,727.7 1465.3,731.1 1465.8,734.5 1466.3,737.6 1466.9,740.4 1467.4,743.0 1467.9,745.2 1468.4,747.0 1468.9,748.4 1469.4,749.2 1469.9,749.5 1470.4,749.2 1470.9,748.4 1471.4,747.1 1471.9,745.3 1472.4,743.2 1472.9,740.7 1473.5,737.9 1474.0,734.8 1474.5,731.5 1475.0,728.0 1475.5,724.4 1476.0,720.7 1476.5,716.9 1477.0,713.1 1477.5,709.4 1478.0,705.8 1478.5,702.3 1479.0,699.0 1479.5,695.9 1480.1,693.1 1480.6,690.6 1481.1,688.5 1481.6,686.7 1482.1,685.4 1482.6,684.6 1483.1,684.3 1483.6,684.6 1484.1,685.6 1484.6,687.1 1485.1,689.2 1485.7,691.7 1486.2,694.6 1486.7,697.9 1487.2,701.5 1487.7,705.2 1488.2,709.2 1488.7,713.3 1489.2,717.4 1489.8,721.5 1490.3,725.6 1490.8,729.6 1491.3,733.3 1491.8,736.9 1492.3,740.2 1492.8,743.1 1493.4,745.6 1493.9,747.7 1494.4,749.2 1494.9,750.2 1495.4,750.5 1495.9,750.2 1496.4,749.4 1496.9,748.1 1497.4,746.4 1497.9,744.3 1498.4,741.8 1499.0,739.1 1499.5,736.0 1500.0,732.8 1500.5,729.3 1501.0,725.8 1501.5,722.1 1502.0,718.5 1502.5,714.8 1503.0,711.1 1503.5,707.6 1504.0,704.1 1504.5,700.9 1505.0,697.8 1505.6,695.1 1506.1,692.6 1506.6,690.5 1507.1,688.8 1507.6,687.5 1508.1,686.7 1508.6,686.4 1509.1,686.7 1509.6,687.5 1510.1,688.9 1510.6,690.7 1511.1,692.9 1511.6,695.5 1512.2,698.4 1512.7,701.6 1513.2,705.0 1513.7,708.6 1514.2,712.3 1514.7,716.1 1515.2,720.0 1515.7,723.9 1516.2,727.7 1516.7,731.4 1517.2,735.0 1517.7,738.4 1518.2,741.6 1518.8,744.5 1519.3,747.1 1519.8,749.3 1520.3,751.1 1520.8,752.5 1521.3,753.3 1521.8,753.6 1522.3,753.3 1522.8,752.6 1523.3,751.3 1523.8,749.6 1524.4,747.6 1524.9,745.2 1525.4,742.5 1525.9,739.6 1526.4,736.4 1526.9,733.1 1527.4,729.7 1527.9,726.1 1528.4,722.5 1529.0,719.0 1529.5,715.4 1530.0,712.0 1530.5,708.7 1531.0,705.5 1531.5,702.6 1532.0,699.9 1532.5,697.5 1533.1,695.5 1533.6,693.8 1534.1,692.5 1534.6,691.8 1535.1,691.5 1535.6,691.7 1536.1,692.5 1536.6,693.6 1537.1,695.1 1537.6,697.0 1538.1,699.2 1538.7,701.7 1539.2,704.4 1539.7,707.3 1540.2,710.3 1540.7,713.5 1541.2,716.7 1541.7,720.0 1542.2,723.3 1542.7,726.5 1543.2,729.7 1543.7,732.7 1544.2,735.6 1544.7,738.3 1545.3,740.8 1545.8,743.0 1546.3,744.9 1546.8,746.4 1547.3,747.5 1547.8,748.3 1548.3,748.5 1548.8,748.2 1549.3,747.5 1549.8,746.2 1550.3,744.6 1550.8,742.6 1551.3,740.2 1551.9,737.6 1552.4,734.8 1552.9,731.7 1553.4,728.6 1553.9,725.3 1554.4,722.0 1554.9,718.7 1555.4,715.4 1555.9,712.3 1556.4,709.2 1556.9,706.4 1557.5,703.8 1558.0,701.4 1558.5,699.4 1559.0,697.8 1559.5,696.5 1560.0,695.8 1560.5,695.5 1561.0,695.7 1561.5,696.4 1562.0,697.5 1562.5,698.9 1563.1,700.7 1563.6,702.8 1564.1,705.1 1564.6,707.7 1565.1,710.4 1565.6,713.3 1566.1,716.3 1566.6,719.4 1567.2,722.5 1567.7,725.6 1568.2,728.7 1568.7,731.7 1569.2,734.6 1569.7,737.3 1570.2,739.9 1570.7,742.2 1571.2,744.3 1571.8,746.1 1572.3,747.5 1572.8,748.6 1573.3,749.3" fill="none" stroke="#40e4ee" stroke-width="1.8" stroke-linejoin="round"/>
<polyline points="1572.8,748.6 1573.3,749.3 1573.8,749.5 1574.3,749.2 1574.8,748.5 1575.3,747.2 1575.8,745.6 1576.3,743.6 1576.8,741.2 1577.4,738.6 1577.9,735.7 1578.4,732.6 1578.9,729.3 1579.4,725.9 1579.9,722.5 1580.4,719.0 1580.9,715.4 1581.4,712.0 1581.9,708.6 1582.4,705.3 1582.9,702.2 1583.4,699.3 1584.0,696.7 1584.5,694.3 1585.0,692.3 1585.5,690.7 1586.0,689.4 1586.5,688.7 1587.0,688.4 1587.5,688.7 1588.0,689.4 1588.5,690.6 1589.0,692.2 1589.5,694.2 1590.0,696.5 1590.6,699.1 1591.1,702.0 1591.6,705.0 1592.1,708.2 1592.6,711.6 1593.1,715.0 1593.6,718.5 1594.1,721.9 1594.6,725.3 1595.1,728.7 1595.6,731.9 1596.1,734.9 1596.6,737.8 1597.2,740.4 1597.7,742.7 1598.2,744.7 1598.7,746.3 1599.2,747.5 1599.7,748.2 1600.2,748.5 1600.7,748.2 1601.2,747.5 1601.7,746.2 1602.2,744.5 1602.8,742.5 1603.3,740.1 1603.8,737.4 1604.3,734.5 1604.8,731.3 1605.3,728.0 1605.8,724.6 1606.3,721.0 1606.8,717.5 1607.4,713.9 1607.9,710.3 1608.4,706.9 1608.9,703.6 1609.4,700.4 1609.9,697.5 1610.4,694.8 1610.9,692.4 1611.5,690.4 1612.0,688.7 1612.5,687.4 1613.0,686.7 1613.5,686.4 1614.0,686.7 1614.5,687.4 1615.0,688.7 1615.5,690.3 1616.0,692.3 1616.5,694.7 1617.1,697.3 1617.6,700.2 1618.1,703.3 1618.6,706.6 1619.1,710.0 1619.6,713.4 1620.1,717.0 1620.6,720.5 1621.1,723.9 1621.6,727.3 1622.1,730.6 1622.6,733.7 1623.1,736.6 1623.7,739.2 1624.2,741.6 1624.7,743.6 1625.2,745.2 1625.7,746.5 1626.2,747.2 1626.7,747.5 1627.2,747.3 1627.7,746.7 1628.2,745.8 1628.7,744.5 1629.3,743.0 1629.8,741.2 1630.3,739.1 1630.8,736.9 1631.3,734.5 1631.8,732.0 1632.3,729.4 1632.8,726.8 1633.3,724.0 1633.9,721.3 1634.4,718.7 1634.9,716.1 1635.4,713.6 1635.9,711.2 1636.4,709.0 1636.9,706.9 1637.4,705.1 1638.0,703.6 1638.5,702.3 1639.0,701.4 1639.5,700.8 1640.0,700.6 1640.5,700.8 1641.0,701.3 1641.5,702.2 1642.0,703.4 1642.5,704.8 1643.0,706.5 1643.6,708.4 1644.1,710.4 1644.6,712.5 1645.1,714.8 1645.6,717.1 1646.1,719.5 1646.6,721.8 1647.1,724.1 1647.6,726.4 1648.1,728.5 1648.6,730.5 1649.2,732.4 1649.7,734.1 1650.2,735.5 1650.7,736.7 1651.2,737.6 1651.7,738.1 1652.2,738.3 1652.7,738.1 1653.2,737.6 1653.7,736.7 1654.2,735.6 1654.7,734.2 1655.2,732.5 1655.8,730.7 1656.3,728.6 1656.8,726.5 1657.3,724.2 1657.8,721.8 1658.3,719.4 1658.8,716.9 1659.3,714.4 1659.8,712.0 1660.3,709.6 1660.8,707.3 1661.3,705.2 1661.8,703.1 1662.4,701.3 1662.9,699.6 1663.4,698.2 1663.9,697.1 1664.4,696.2 1664.9,695.7 1665.4,695.5 1665.9,695.7 1666.4,696.4 1666.9,697.5 1667.4,698.9 1668.0,700.7 1668.5,702.8 1669.0,705.1 1669.5,707.7 1670.0,710.4 1670.5,713.3 1671.0,716.3 1671.5,719.4 1672.1,722.5 1672.6,725.6 1673.1,728.7 1673.6,731.7 1674.1,734.6 1674.6,737.3 1675.1,739.9 1675.6,742.2 1676.1,744.3 1676.7,746.1 1677.2,747.5 1677.7,748.6 1678.2,749.3 1678.7,749.5 1679.2,749.4 1679.7,748.9 1680.2,748.2 1680.7,747.3 1681.3,746.1 1681.8,744.7 1682.3,743.2 1682.8,741.4 1683.3,739.4 1683.8,737.3 1684.3,735.1 1684.8,732.8 1685.3,730.3 1685.8,727.8 1686.4,725.1 1686.9,722.4 1687.4,719.7 1687.9,717.0 1688.4,714.2 1688.9,711.5 1689.4,708.7 1689.9,706.0 1690.4,703.4 1691.0,700.8 1691.5,698.3 1692.0,695.9 1692.5,693.6 1693.0,691.5" fill="none" stroke="#40e040" stroke-width="1.8" stroke-linejoin="round"/>
<rect x="1709.5" y="29.5" width="204" height="29" fill="#e1e1e1" stroke="#adadad" stroke-width="1"/>
<text x="1810.25" y="50" font-family="Liberation Serif" font-size="18" font-weight="bold" text-anchor="middle" textLength="136.5" lengthAdjust="spacingAndGlyphs" fill="#000">Wave Files inp.</text>
<rect x="1708" y="67" width="206" height="23" fill="#ff8080"/>
<text x="1811" y="85.5" font-family="Liberation Sans" font-size="19" text-anchor="middle" fill="#000" stroke="#000" stroke-width="0.4">T11</text>
<rect x="1708.5" y="96.5" width="205" height="129" fill="#7fffd4" stroke="#828790" stroke-width="1"/>
<rect x="1710" y="98" width="185" height="18" fill="#0078d7"/>
<text x="1761.0" y="111.2" font-family="Liberation Sans" font-size="14" font-weight="bold" text-anchor="middle" textLength="96.0" lengthAdjust="spacingAndGlyphs" fill="#fff">T11-No01-N01</text>
<text x="1761.0" y="129.2" font-family="Liberation Sans" font-size="14" font-weight="bold" text-anchor="middle" textLength="96.0" lengthAdjust="spacingAndGlyphs" fill="#000">T11-No02-N01</text>
<text x="1761.0" y="147.2" font-family="Liberation Sans" font-size="14" font-weight="bold" text-anchor="middle" textLength="96.0" lengthAdjust="spacingAndGlyphs" fill="#000">T11-No03-N01</text>
<text x="1761.0" y="165.2" font-family="Liberation Sans" font-size="14" font-weight="bold" text-anchor="middle" textLength="96.0" lengthAdjust="spacingAndGlyphs" fill="#000">T11-No04-N01</text>
<text x="1761.0" y="183.2" font-family="Liberation Sans" font-size="14" font-weight="bold" text-anchor="middle" textLength="96.0" lengthAdjust="spacingAndGlyphs" fill="#000">T11-No05-N01</text>
<text x="1761.0" y="201.2" font-family="Liberation Sans" font-size="14" font-weight="bold" text-anchor="middle" textLength="96.0" lengthAdjust="spacingAndGlyphs" fill="#000">T11-No06-N01</text>
<text x="1761.0" y="219.2" font-family="Liberation Sans" font-size="14" font-weight="bold" text-anchor="middle" textLength="96.0" lengthAdjust="spacingAndGlyphs" fill="#000">T11-No07-N01</text>
<rect x="1895" y="97" width="18" height="128" fill="#f0f0f0"/>
<rect x="1896" y="115" width="15" height="71" fill="#cdcdcd"/>
<path d="M1900 109.5 L1903.5 105.8 L1907 109.5" fill="none" stroke="#555" stroke-width="1.7"/>
<path d="M1900 213.5 L1903.5 217.2 L1907 213.5" fill="none" stroke="#555" stroke-width="1.7"/>
<rect x="1708" y="248" width="206" height="22" fill="#ff8080"/>
<text x="1811" y="267" font-family="Liberation Sans" font-size="19" text-anchor="middle" fill="#000" stroke="#000" stroke-width="0.4">1</text>
<rect x="1709.5" y="278.5" width="204" height="32" fill="#e1e1e1" stroke="#adadad" stroke-width="1"/>
<text x="1809.7" y="301.1" font-family="Liberation Serif" font-size="21" font-weight="bold" text-anchor="middle" textLength="87.2" lengthAdjust="spacingAndGlyphs" fill="#000">LPC inp.</text>
<rect x="1709.5" y="320.5" width="123" height="29" fill="#e1e1e1" stroke="#adadad" stroke-width="1"/>
<text x="1769.75" y="340.8" font-family="Liberation Serif" font-size="18" font-weight="bold" text-anchor="middle" textLength="61.1" lengthAdjust="spacingAndGlyphs" fill="#000">Sound</text>
<rect x="1845.5" y="320.5" width="68" height="29" fill="#e1e1e1" stroke="#adadad" stroke-width="1"/>
<text x="1877.4" y="341.5" font-family="Liberation Serif" font-size="16" font-weight="bold" text-anchor="middle" textLength="35.2" lengthAdjust="spacingAndGlyphs" fill="#000">Stop</text>
<rect x="1709.5" y="359.5" width="204" height="29" fill="#e1e1e1" stroke="#adadad" stroke-width="1"/>
<text x="1810.6" y="379.5" font-family="Liberation Serif" font-size="18" font-weight="bold" text-anchor="middle" textLength="135.4" lengthAdjust="spacingAndGlyphs" fill="#000">Filtered Sound</text>
<rect x="1709.5" y="399.5" width="36" height="25" fill="#ffa500" stroke="#505050" stroke-width="1"/>
<text x="1728.2" y="416.8" font-family="Liberation Serif" font-size="14" font-weight="bold" text-anchor="middle" textLength="20.0" lengthAdjust="spacingAndGlyphs" fill="#000">DF</text>
<rect x="1762" y="398" width="151" height="26" fill="#cccccc"/>
<text x="1836.2" y="416.2" font-family="Liberation Serif" font-size="15" font-weight="bold" text-anchor="middle" textLength="79.8" lengthAdjust="spacingAndGlyphs" fill="#a0a0a0">Delete File</text>
<rect x="1708" y="431" width="206" height="22" fill="#ff8080"/>
<text x="1748.9" y="449.8" font-family="Liberation Sans" font-size="18" text-anchor="middle" textLength="35.6" lengthAdjust="spacingAndGlyphs" fill="#000" stroke="#000" stroke-width="0.4">Auto</text>
<text x="1797.75" y="449.8" font-family="Liberation Sans" font-size="18" text-anchor="middle" textLength="37.7" lengthAdjust="spacingAndGlyphs" fill="#000" stroke="#000" stroke-width="0.4">16bit</text>
<text x="1860.1" y="449.8" font-family="Liberation Sans" font-size="18" text-anchor="middle" textLength="63.8" lengthAdjust="spacingAndGlyphs" fill="#000" stroke="#000" stroke-width="0.4">48000Hz</text>
<rect x="1709.5" y="460.5" width="204" height="29" fill="#e1e1e1" stroke="#adadad" stroke-width="1"/>
<text x="1809.9" y="480.7" font-family="Liberation Serif" font-size="18" font-weight="bold" text-anchor="middle" textLength="133.4" lengthAdjust="spacingAndGlyphs" fill="#000">Wave Files std.</text>
<rect x="1708" y="498" width="206" height="23" fill="#ff8080"/>
<text x="1811" y="516.5" font-family="Liberation Sans" font-size="19" text-anchor="middle" fill="#000" stroke="#000" stroke-width="0.4">T05</text>
<rect x="1708.5" y="528.5" width="205" height="129" fill="#7fffd4" stroke="#828790" stroke-width="1"/>
<rect x="1710" y="530" width="202" height="18" fill="#0078d7"/>
<text x="1761.0" y="543.2" font-family="Liberation Sans" font-size="14" font-weight="bold" text-anchor="middle" textLength="96.0" lengthAdjust="spacingAndGlyphs" fill="#fff">T05-No05-N01</text>
<text x="1761.0" y="561.2" font-family="Liberation Sans" font-size="14" font-weight="bold" text-anchor="middle" textLength="96.0" lengthAdjust="spacingAndGlyphs" fill="#000">T05-No05-N02</text>
<text x="1761.0" y="579.2" font-family="Liberation Sans" font-size="14" font-weight="bold" text-anchor="middle" textLength="96.0" lengthAdjust="spacingAndGlyphs" fill="#000">T05-No05-N03</text>
<text x="1761.0" y="597.2" font-family="Liberation Sans" font-size="14" font-weight="bold" text-anchor="middle" textLength="96.0" lengthAdjust="spacingAndGlyphs" fill="#000">T05-No05-N04</text>
<text x="1761.0" y="615.2" font-family="Liberation Sans" font-size="14" font-weight="bold" text-anchor="middle" textLength="96.0" lengthAdjust="spacingAndGlyphs" fill="#000">T05-No05-N05</text>
<text x="1761.0" y="633.2" font-family="Liberation Sans" font-size="14" font-weight="bold" text-anchor="middle" textLength="96.0" lengthAdjust="spacingAndGlyphs" fill="#000">T05-No05-N06</text>
<text x="1761.0" y="651.2" font-family="Liberation Sans" font-size="14" font-weight="bold" text-anchor="middle" textLength="96.0" lengthAdjust="spacingAndGlyphs" fill="#000">T05-No05-N07</text>
<rect x="1708" y="680" width="206" height="22" fill="#ff8080"/>
<text x="1811" y="699" font-family="Liberation Sans" font-size="19" text-anchor="middle" fill="#000" stroke="#000" stroke-width="0.4">1</text>
<rect x="1709.5" y="710.5" width="204" height="32" fill="#e1e1e1" stroke="#adadad" stroke-width="1"/>
<text x="1809.25" y="732.9" font-family="Liberation Serif" font-size="21" font-weight="bold" text-anchor="middle" textLength="83.9" lengthAdjust="spacingAndGlyphs" fill="#000">LPC std.</text>
<rect x="1709.5" y="752.5" width="123" height="29" fill="#e1e1e1" stroke="#adadad" stroke-width="1"/>
<text x="1769.75" y="772.8" font-family="Liberation Serif" font-size="18" font-weight="bold" text-anchor="middle" textLength="61.1" lengthAdjust="spacingAndGlyphs" fill="#000">Sound</text>
<rect x="1845.5" y="752.5" width="68" height="29" fill="#e1e1e1" stroke="#adadad" stroke-width="1"/>
<text x="1877.4" y="773.5" font-family="Liberation Serif" font-size="16" font-weight="bold" text-anchor="middle" textLength="35.2" lengthAdjust="spacingAndGlyphs" fill="#000">Stop</text>
<rect x="1709.5" y="791.5" width="204" height="29" fill="#e1e1e1" stroke="#adadad" stroke-width="1"/>
<text x="1810.6" y="811.5" font-family="Liberation Serif" font-size="18" font-weight="bold" text-anchor="middle" textLength="135.4" lengthAdjust="spacingAndGlyphs" fill="#000">Filtered Sound</text>
<rect x="1709.5" y="831.5" width="36" height="25" fill="#ffa500" stroke="#505050" stroke-width="1"/>
<text x="1728.2" y="848.8" font-family="Liberation Serif" font-size="14" font-weight="bold" text-anchor="middle" textLength="20.0" lengthAdjust="spacingAndGlyphs" fill="#000">DF</text>
<rect x="1762" y="830" width="151" height="26" fill="#cccccc"/>
<text x="1836.2" y="848.2" font-family="Liberation Serif" font-size="15" font-weight="bold" text-anchor="middle" textLength="79.8" lengthAdjust="spacingAndGlyphs" fill="#a0a0a0">Delete File</text>
<rect x="1708" y="863" width="206" height="22" fill="#ff8080"/>
<text x="1748.9" y="881.8" font-family="Liberation Sans" font-size="18" text-anchor="middle" textLength="35.6" lengthAdjust="spacingAndGlyphs" fill="#000" stroke="#000" stroke-width="0.4">Auto</text>
<text x="1797.75" y="881.8" font-family="Liberation Sans" font-size="18" text-anchor="middle" textLength="37.7" lengthAdjust="spacingAndGlyphs" fill="#000" stroke="#000" stroke-width="0.4">16bit</text>
<text x="1860.1" y="881.8" font-family="Liberation Sans" font-size="18" text-anchor="middle" textLength="63.8" lengthAdjust="spacingAndGlyphs" fill="#000" stroke="#000" stroke-width="0.4">48000Hz</text>
<rect x="6.5" y="911.5" width="207" height="30" fill="#e1e1e1" stroke="#adadad" stroke-width="1"/>
<text x="109.1" y="931.9" font-family="Liberation Serif" font-size="18" font-weight="bold" text-anchor="middle" textLength="123.0" lengthAdjust="spacingAndGlyphs" fill="#000">Confirmation</text>
<rect x="6.5" y="955.5" width="207" height="30" fill="#e1e1e1" stroke="#adadad" stroke-width="1"/>
<text x="108.85" y="976.1" font-family="Liberation Serif" font-size="18" font-weight="bold" text-anchor="middle" textLength="106.5" lengthAdjust="spacingAndGlyphs" fill="#000">Export Excel</text>
<rect x="6.5" y="1000.5" width="207" height="30" fill="#e1e1e1" stroke="#adadad" stroke-width="1"/>
<text x="108.85" y="1020.8" font-family="Liberation Serif" font-size="18" font-weight="bold" text-anchor="middle" textLength="114.5" lengthAdjust="spacingAndGlyphs" fill="#000">Append Excel</text>
<rect x="220" y="890" width="780" height="24" fill="#ffffff"/>
<line x1="299.5" y1="890" x2="299.5" y2="914" stroke="#e5e5e5" stroke-width="1"/>
<line x1="799.5" y1="890" x2="799.5" y2="914" stroke="#e5e5e5" stroke-width="1"/>
<text x="343.45" y="906.75" font-family="Liberation Sans" font-size="17" font-weight="bold" text-anchor="middle" textLength="75.1" lengthAdjust="spacingAndGlyphs" fill="#000">Wave File</text>
<text x="806" y="906.75" font-family="Liberation Sans" font-size="17" font-weight="bold" textLength="163" lengthAdjust="spacingAndGlyphs" fill="#000">Peak Frequency (Hz)</text>
<rect x="220" y="914" width="782" height="163" fill="#7fffd4"/>
<text x="293.5" y="930.7" font-family="Liberation Sans" font-size="17" font-weight="bold" text-anchor="end" fill="#000">1</text>
<text x="360.55" y="930.7" font-family="Liberation Sans" font-size="17" font-weight="bold" text-anchor="middle" textLength="106.5" lengthAdjust="spacingAndGlyphs" fill="#000">T11-No01-N01</text>
<text x="806" y="930.7" font-family="Liberation Sans" font-size="17" font-weight="bold" textLength="37" lengthAdjust="spacingAndGlyphs" fill="#000">3063</text>
<text x="293.5" y="953.7" font-family="Liberation Sans" font-size="17" font-weight="bold" text-anchor="end" fill="#000">2</text>
<text x="360.55" y="953.7" font-family="Liberation Sans" font-size="17" font-weight="bold" text-anchor="middle" textLength="106.5" lengthAdjust="spacingAndGlyphs" fill="#000">T11-No02-N01</text>
<text x="806" y="953.7" font-family="Liberation Sans" font-size="17" font-weight="bold" textLength="37" lengthAdjust="spacingAndGlyphs" fill="#000">3063</text>
<text x="293.5" y="976.7" font-family="Liberation Sans" font-size="17" font-weight="bold" text-anchor="end" fill="#000">3</text>
<text x="360.55" y="976.7" font-family="Liberation Sans" font-size="17" font-weight="bold" text-anchor="middle" textLength="106.5" lengthAdjust="spacingAndGlyphs" fill="#000">T11-No03-N01</text>
<text x="806" y="976.7" font-family="Liberation Sans" font-size="17" font-weight="bold" textLength="37" lengthAdjust="spacingAndGlyphs" fill="#000">3063</text>
<text x="293.5" y="999.7" font-family="Liberation Sans" font-size="17" font-weight="bold" text-anchor="end" fill="#000">4</text>
<text x="360.55" y="999.7" font-family="Liberation Sans" font-size="17" font-weight="bold" text-anchor="middle" textLength="106.5" lengthAdjust="spacingAndGlyphs" fill="#000">T11-No04-N01</text>
<text x="806" y="999.7" font-family="Liberation Sans" font-size="17" font-weight="bold" textLength="37" lengthAdjust="spacingAndGlyphs" fill="#000">1969</text>
<text x="293.5" y="1022.7" font-family="Liberation Sans" font-size="17" font-weight="bold" text-anchor="end" fill="#000">5</text>
<text x="360.55" y="1022.7" font-family="Liberation Sans" font-size="17" font-weight="bold" text-anchor="middle" textLength="106.5" lengthAdjust="spacingAndGlyphs" fill="#000">T11-No05-N01</text>
<text x="806" y="1022.7" font-family="Liberation Sans" font-size="17" font-weight="bold" textLength="37" lengthAdjust="spacingAndGlyphs" fill="#000">3250</text>
<text x="293.5" y="1045.7" font-family="Liberation Sans" font-size="17" font-weight="bold" text-anchor="end" fill="#000">6</text>
<text x="360.55" y="1045.7" font-family="Liberation Sans" font-size="17" font-weight="bold" text-anchor="middle" textLength="106.5" lengthAdjust="spacingAndGlyphs" fill="#000">T11-No06-N01</text>
<text x="806" y="1045.7" font-family="Liberation Sans" font-size="17" font-weight="bold" textLength="37" lengthAdjust="spacingAndGlyphs" fill="#000">3250</text>
<text x="293.5" y="1068.7" font-family="Liberation Sans" font-size="17" font-weight="bold" text-anchor="end" fill="#000">7</text>
<text x="360.55" y="1068.7" font-family="Liberation Sans" font-size="17" font-weight="bold" text-anchor="middle" textLength="106.5" lengthAdjust="spacingAndGlyphs" fill="#000">T11-No07-N01</text>
<text x="806" y="1068.7" font-family="Liberation Sans" font-size="17" font-weight="bold" textLength="37" lengthAdjust="spacingAndGlyphs" fill="#000">2313</text>
<rect x="1002" y="890" width="17" height="187" fill="#f0f0f0"/>
<rect x="1003" y="907" width="15" height="66" fill="#cdcdcd"/>
<path d="M1007 902.5 L1010.5 898.8 L1014 902.5" fill="none" stroke="#555" stroke-width="1.7"/>
<path d="M1007 1066 L1010.5 1069.7 L1014 1066" fill="none" stroke="#555" stroke-width="1.7"/>
<rect x="48" y="1078" width="343" height="2" fill="#ffffff"/>
<line x1="48" y1="1078.5" x2="391" y2="1078.5" stroke="#b4b4b4" stroke-width="1"/>
<rect x="1025.5" y="911.5" width="207" height="30" fill="#e1e1e1" stroke="#adadad" stroke-width="1"/>
<text x="1128.15" y="931.5" font-family="Liberation Serif" font-size="18" font-weight="bold" text-anchor="middle" textLength="93.7" lengthAdjust="spacingAndGlyphs" fill="#000">Batch inp.</text>
<rect x="1025.5" y="955.5" width="207" height="30" fill="#e1e1e1" stroke="#adadad" stroke-width="1"/>
<text x="1128.55" y="976.2" font-family="Liberation Serif" font-size="18" font-weight="bold" text-anchor="middle" textLength="90.7" lengthAdjust="spacingAndGlyphs" fill="#000">Batch std.</text>
<rect x="1025.5" y="1000.5" width="207" height="30" fill="#e1e1e1" stroke="#adadad" stroke-width="1"/>
<text x="1128.3" y="1020.9" font-family="Liberation Serif" font-size="18" font-weight="bold" text-anchor="middle" textLength="80.4" lengthAdjust="spacingAndGlyphs" fill="#000">Batch all</text>
<text x="1388.75" y="960.9" font-family="Liberation Serif" font-size="17" font-weight="bold" text-anchor="middle" textLength="44.5" lengthAdjust="spacingAndGlyphs" fill="#000">Total</text>
<rect x="1425" y="944" width="139" height="22" fill="#ff8080"/>
<text x="1494.35" y="960.9" font-family="Liberation Sans" font-size="16" font-weight="bold" text-anchor="middle" textLength="17.7" lengthAdjust="spacingAndGlyphs" fill="#000">16</text>
<text x="1356.35" y="993.3" font-family="Liberation Serif" font-size="17" font-weight="bold" text-anchor="middle" textLength="118.9" lengthAdjust="spacingAndGlyphs" fill="#000">Max Peak Freq.</text>
<rect x="1425" y="976" width="139" height="22" fill="#ff8080"/>
<text x="1493.75" y="992.9" font-family="Liberation Sans" font-size="16" font-weight="bold" text-anchor="middle" textLength="36.5" lengthAdjust="spacingAndGlyphs" fill="#000">4594</text>
<text x="1577.8" y="994.5" font-family="Liberation Serif" font-size="14" font-weight="bold" text-anchor="middle" textLength="19.4" lengthAdjust="spacingAndGlyphs" fill="#000">Hz</text>
<text x="1341.1" y="1026.2" font-family="Liberation Serif" font-size="17" font-weight="bold" text-anchor="middle" textLength="148.0" lengthAdjust="spacingAndGlyphs" fill="#000">Average Peak Freq.</text>
<rect x="1425" y="1009" width="139" height="22" fill="#ff8080"/>
<text x="1494.0" y="1025.9" font-family="Liberation Sans" font-size="16" font-weight="bold" text-anchor="middle" textLength="49.0" lengthAdjust="spacingAndGlyphs" fill="#000">3593.1</text>
<text x="1577.8" y="1027.5" font-family="Liberation Serif" font-size="14" font-weight="bold" text-anchor="middle" textLength="19.4" lengthAdjust="spacingAndGlyphs" fill="#000">Hz</text>
<text x="1358.45" y="1058.1" font-family="Liberation Serif" font-size="17" font-weight="bold" text-anchor="middle" textLength="116.1" lengthAdjust="spacingAndGlyphs" fill="#000">Min Peak Freq.</text>
<rect x="1425" y="1041" width="139" height="22" fill="#ff8080"/>
<text x="1494.25" y="1057.9" font-family="Liberation Sans" font-size="16" font-weight="bold" text-anchor="middle" textLength="36.5" lengthAdjust="spacingAndGlyphs" fill="#000">1969</text>
<text x="1577.8" y="1059.5" font-family="Liberation Serif" font-size="14" font-weight="bold" text-anchor="middle" textLength="19.4" lengthAdjust="spacingAndGlyphs" fill="#000">Hz</text>
<rect x="1637" y="1009" width="277" height="23" fill="#ff8080"/>
<text x="1774.7" y="1028" font-family="Liberation Sans" font-size="19" text-anchor="middle" textLength="114.4" lengthAdjust="spacingAndGlyphs" fill="#000" stroke="#000" stroke-width="0.4">Concrete.prmx</text>
<rect x="1638.5" y="1045.5" width="188" height="29" fill="#ffa500" stroke="#a0a0a0" stroke-width="1"/>
<text x="1731.9" y="1066.6" font-family="Liberation Serif" font-size="19" font-weight="bold" text-anchor="middle" textLength="134.8" lengthAdjust="spacingAndGlyphs" fill="#000">Set Values Sub</text>
<rect x="1849.5" y="1045.5" width="63" height="29" fill="#e1e1e1" stroke="#adadad" stroke-width="1"/>
<text x="1879.1" y="1066.6" font-family="Liberation Serif" font-size="18" font-weight="bold" text-anchor="middle" textLength="32.8" lengthAdjust="spacingAndGlyphs" fill="#000">End</text>
</svg></body></html>
